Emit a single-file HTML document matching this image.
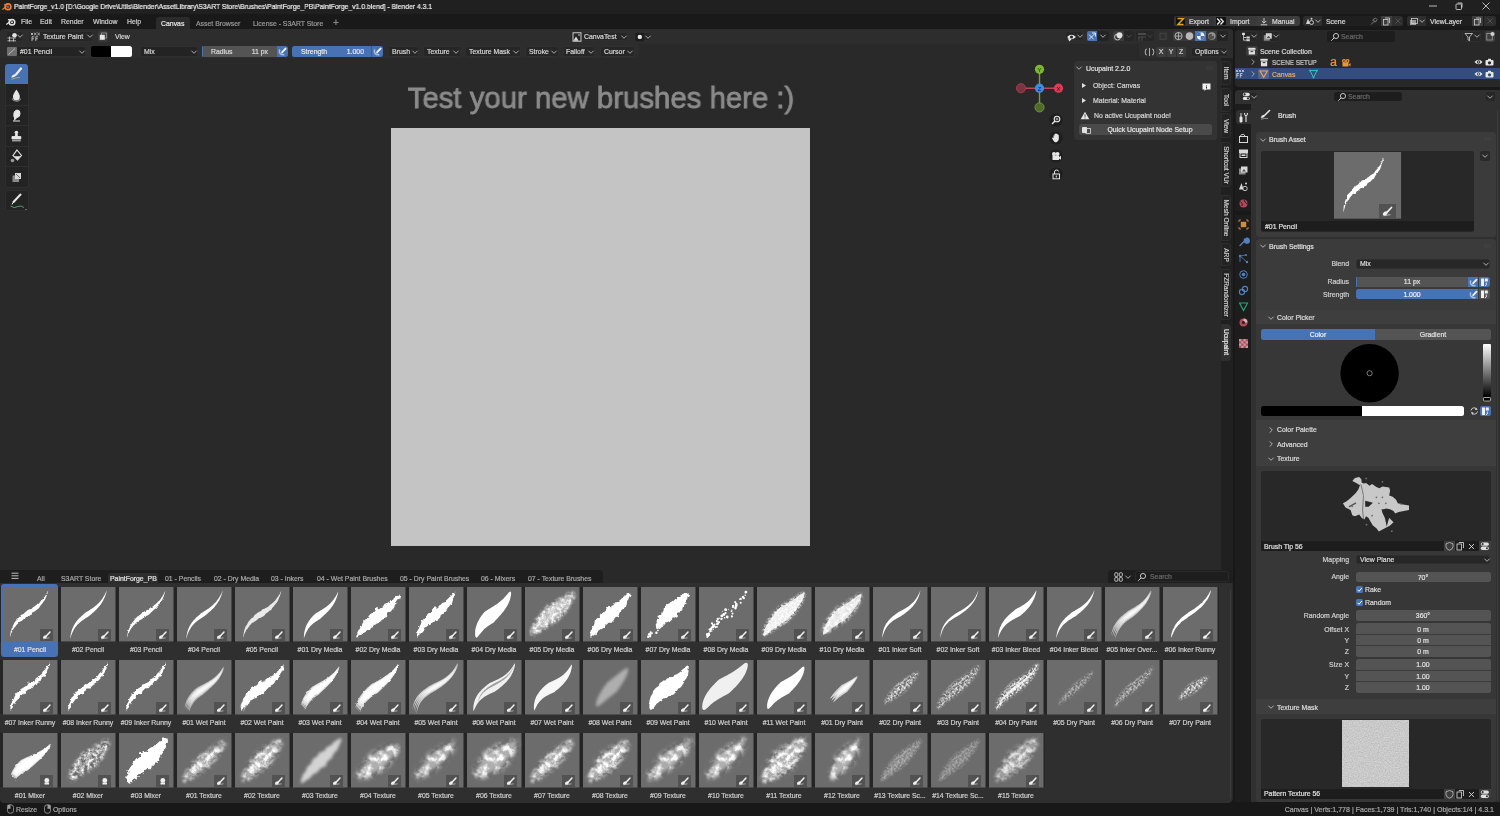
<!DOCTYPE html>
<html><head><meta charset="utf-8"><style>
html,body{margin:0;padding:0;width:1500px;height:816px;overflow:hidden;background:#181818;}
body{position:relative;font-family:"Liberation Sans", sans-serif;}
div,span{position:absolute;box-sizing:border-box;}
.t{white-space:nowrap;line-height:1.2;will-change:transform;-webkit-text-stroke:0.2px currentColor;}
</style></head><body>
<div style="left:0.00px;top:0.00px;width:1500.00px;height:13.50px;background:#202020;"></div><svg style="position:absolute;left:1.00px;top:0.30px;overflow:visible;" width="12" height="12" viewBox="0 0 12 12"><path d="M1.8,9.2 L5.2,6.6 M3.8,4.6 L6.6,4.6" stroke="#f5792a" stroke-width="1.3" stroke-linecap="round"/><circle cx="7" cy="6.8" r="2.9" fill="none" stroke="#f5792a" stroke-width="1.7"/><circle cx="7" cy="6.8" r="1.3" fill="#3d7ac6"/></svg><span class="t" style="left:14.00px;top:1.94px;font-size:7.6px;color:#f2f2f2;transform:scaleX(0.897);transform-origin:0 50%;">PaintForge_v1.0 [D:\Google Drive\Utils\Blender\AssetLibrary\S3ART Store\Brushes\PaintForge_PB\PaintForge_v1.0.blend] - Blender 4.3.1</span><svg style="position:absolute;left:1428.00px;top:2.00px;overflow:visible;" width="10" height="8" viewBox="0 0 10 8"><line x1="1" y1="4" x2="9" y2="4" stroke="#e0e0e0" stroke-width="0.8"/></svg><svg style="position:absolute;left:1454.00px;top:1.00px;overflow:visible;" width="10" height="10" viewBox="0 0 10 10"><rect x="2" y="3" width="5.5" height="5.5" fill="none" stroke="#e0e0e0" stroke-width="0.8" rx="0.8"/><path d="M3.5,2 h4.5 v4.5" fill="none" stroke="#e0e0e0" stroke-width="0.8"/></svg><svg style="position:absolute;left:1481.00px;top:1.00px;overflow:visible;" width="10" height="10" viewBox="0 0 10 10"><path d="M1.5,1.5 L8.5,8.5 M8.5,1.5 L1.5,8.5" stroke="#e0e0e0" stroke-width="0.8"/></svg><div style="left:0.00px;top:13.50px;width:1500.00px;height:15.50px;background:#191919;"></div><svg style="position:absolute;left:5.00px;top:15.50px;overflow:visible;" width="12" height="11" viewBox="0 0 12 11"><path d="M1.6,8.2 L5,5.8 M3.4,3.6 L6.4,3.8" stroke="#e6e6e6" stroke-width="1.2" stroke-linecap="round"/><circle cx="7" cy="6.2" r="2.8" fill="none" stroke="#e6e6e6" stroke-width="1.5"/><circle cx="7" cy="6.2" r="1" fill="#e6e6e6"/></svg><span class="t" style="left:20.50px;top:17.96px;font-size:6.9px;color:#cfcfcf;">File</span><span class="t" style="left:40.40px;top:17.96px;font-size:6.9px;color:#cfcfcf;">Edit</span><span class="t" style="left:61.40px;top:17.96px;font-size:6.9px;color:#cfcfcf;">Render</span><span class="t" style="left:92.60px;top:17.96px;font-size:6.9px;color:#cfcfcf;">Window</span><span class="t" style="left:126.70px;top:17.96px;font-size:6.9px;color:#cfcfcf;">Help</span><div style="left:156.00px;top:17.00px;width:34.00px;height:12.00px;background:#2b2b2b;border-radius:3px 3px 0 0;"></div><span class="t" style="left:161.00px;top:19.56px;font-size:6.9px;color:#e6e6e6;">Canvas</span><span class="t" style="left:196.40px;top:19.56px;font-size:6.9px;color:#9a9a9a;">Asset Browser</span><span class="t" style="left:252.60px;top:19.56px;font-size:6.9px;color:#9a9a9a;">License - S3ART Store</span><span class="t" style="left:332.50px;top:17.20px;font-size:10px;color:#8a8a8a;">+</span><div style="left:1174.00px;top:15.70px;width:125.50px;height:10.60px;background:#3a3a3a;border-radius:2.5px;"></div><div style="left:1174.00px;top:15.70px;width:40.40px;height:10.60px;background:#353535;border-radius:2.5px 0 0 2.5px;"></div><div style="left:1214.90px;top:15.70px;width:41.90px;height:10.60px;background:#3a3a3a;"></div><div style="left:1257.30px;top:15.70px;width:42.20px;height:10.60px;background:#3d3d3d;border-radius:0 2.5px 2.5px 0;"></div><div style="left:1176.30px;top:16.60px;width:9.10px;height:8.80px;background:#111111;"></div><svg style="position:absolute;left:1176.30px;top:16.60px;overflow:visible;" width="9" height="9" viewBox="0 0 9 9"><path d="M1.5,1.5 H7.5 L2,7.5 H7.5" fill="none" stroke="#f0a020" stroke-width="1.5"/></svg><span class="t" style="left:1188.80px;top:17.96px;font-size:6.9px;color:#d8d8d8;">Export</span><div style="left:1216.20px;top:16.60px;width:9.60px;height:8.80px;background:#111111;"></div><svg style="position:absolute;left:1216.20px;top:16.60px;overflow:visible;" width="9.6" height="9" viewBox="0 0 9.6 9"><path d="M1.2,1.5 L4,4.5 L1.2,7.5 M4.5,1.5 L7.3,4.5 L4.5,7.5" fill="none" stroke="#f0f0f0" stroke-width="1.3"/></svg><span class="t" style="left:1229.80px;top:17.96px;font-size:6.9px;color:#d8d8d8;">Import</span><svg style="position:absolute;left:1259.80px;top:16.80px;overflow:visible;" width="8" height="9" viewBox="0 0 8 9"><path d="M4,1 V6 M1.8,4 L4,6.2 L6.2,4 M0.8,7.8 H7.2" fill="none" stroke="#d8d8d8" stroke-width="0.9"/></svg><span class="t" style="left:1271.80px;top:17.96px;font-size:6.9px;color:#d8d8d8;">Manual</span><div style="left:1303.00px;top:15.70px;width:19.00px;height:10.60px;background:#2e2e2e;border-radius:2.5px 0 0 2.5px;"></div><svg style="position:absolute;left:1305.00px;top:16.50px;overflow:visible;" width="10" height="9" viewBox="0 0 10 9"><path d="M3,1.5 L1,7 H5 Z" fill="#cfcfcf"/><circle cx="6.5" cy="5.5" r="2" fill="none" stroke="#cfcfcf" stroke-width="0.9"/><circle cx="6.5" cy="1.8" r="1" fill="#cfcfcf"/></svg><svg style="position:absolute;left:1314.00px;top:17.20px;overflow:visible;" width="8" height="8" viewBox="0 0 8 8"><polyline points="1.4,2.7 4,5.3 6.6,2.7" fill="none" stroke="#cfcfcf" stroke-width="0.8"/></svg><div style="left:1322.00px;top:15.70px;width:59.00px;height:10.60px;background:#1f1f1f;"></div><span class="t" style="left:1325.50px;top:17.96px;font-size:6.9px;color:#d8d8d8;">Scene</span><svg style="position:absolute;left:1369.00px;top:16.50px;overflow:visible;" width="9" height="9" viewBox="0 0 9 9"><path d="M2,7.5 L4.5,5 M3.5,3 L6,5.5 M4,2.5 L6.5,1 L8,2.5 L6.5,5 Z" fill="none" stroke="#8a8a8a" stroke-width="0.8"/></svg><div style="left:1381.00px;top:15.70px;width:11.00px;height:10.60px;background:#3d3d3d;"></div><svg style="position:absolute;left:1382.00px;top:16.50px;overflow:visible;" width="9" height="9" viewBox="0 0 9 9"><rect x="1.5" y="2.5" width="4.5" height="5.5" fill="none" stroke="#d0d0d0" stroke-width="0.8"/><path d="M3,1 H7.5 V6" fill="none" stroke="#d0d0d0" stroke-width="0.8"/></svg><div style="left:1392.00px;top:15.70px;width:10.60px;height:10.60px;background:#2e2e2e;border-radius:0 2.5px 2.5px 0;"></div><svg style="position:absolute;left:1394.00px;top:17.00px;overflow:visible;" width="8" height="8" viewBox="0 0 8 8"><path d="M1.5,1.5 L6.5,6.5 M6.5,1.5 L1.5,6.5" stroke="#5a5a5a" stroke-width="0.8"/></svg><div style="left:1407.00px;top:15.70px;width:19.40px;height:10.60px;background:#2e2e2e;border-radius:2.5px 0 0 2.5px;"></div><svg style="position:absolute;left:1409.00px;top:16.50px;overflow:visible;" width="10" height="9" viewBox="0 0 10 9"><rect x="1" y="3" width="6" height="5" fill="#9a9a9a"/><rect x="2.5" y="1.5" width="6" height="5" fill="none" stroke="#cfcfcf" stroke-width="0.8"/></svg><svg style="position:absolute;left:1418.00px;top:17.20px;overflow:visible;" width="8" height="8" viewBox="0 0 8 8"><polyline points="1.4,2.7 4,5.3 6.6,2.7" fill="none" stroke="#cfcfcf" stroke-width="0.8"/></svg><div style="left:1426.40px;top:15.70px;width:45.40px;height:10.60px;background:#1f1f1f;"></div><span class="t" style="left:1429.80px;top:17.96px;font-size:6.9px;color:#d8d8d8;">ViewLayer</span><div style="left:1471.80px;top:15.70px;width:11.70px;height:10.60px;background:#3d3d3d;"></div><svg style="position:absolute;left:1473.00px;top:16.50px;overflow:visible;" width="9" height="9" viewBox="0 0 9 9"><rect x="1.5" y="2.5" width="4.5" height="5.5" fill="none" stroke="#d0d0d0" stroke-width="0.8"/><path d="M3,1 H7.5 V6" fill="none" stroke="#d0d0d0" stroke-width="0.8"/></svg><div style="left:1483.50px;top:15.70px;width:12.10px;height:10.60px;background:#2e2e2e;border-radius:0 2.5px 2.5px 0;"></div><svg style="position:absolute;left:1486.00px;top:17.00px;overflow:visible;" width="8" height="8" viewBox="0 0 8 8"><path d="M1.5,1.5 L6.5,6.5 M6.5,1.5 L1.5,6.5" stroke="#5a5a5a" stroke-width="0.8"/></svg><div style="left:0.00px;top:29.00px;width:1233.00px;height:773.00px;background:#292929;border-radius:4px;"></div><div style="left:0.00px;top:29.00px;width:1233.00px;height:15.00px;background:#2d2d2d;border-radius:4px 4px 0 0;"></div><div style="left:0.00px;top:44.00px;width:639.00px;height:14.00px;background:#2d2d2d;border-radius:0 0 4px 0;"></div><div style="left:1138.60px;top:44.00px;width:94.40px;height:14.00px;background:#2d2d2d;border-radius:0 0 0 4px;"></div><div style="left:5.80px;top:31.00px;width:17.50px;height:10.50px;background:#262626;border:0.6px solid #2f2f2f;border-radius:2.5px;"></div><svg style="position:absolute;left:7.00px;top:31.50px;overflow:visible;" width="12" height="10" viewBox="0 0 12 10"><circle cx="7.5" cy="3.2" r="2.3" fill="#e0e0e0"/><path d="M0.5,6 H9 M0.5,8.8 H9 M2.5,4.5 V9.5 M6.5,6 V9.5" stroke="#d0d0d0" stroke-width="0.8"/></svg><svg style="position:absolute;left:16.00px;top:32.30px;overflow:visible;" width="8" height="8" viewBox="0 0 8 8"><polyline points="1.4,2.7 4,5.3 6.6,2.7" fill="none" stroke="#cfcfcf" stroke-width="0.8"/></svg><div style="left:28.00px;top:31.00px;width:65.30px;height:10.50px;background:#262626;border:0.6px solid #2f2f2f;border-radius:2.5px;"></div><svg style="position:absolute;left:30.00px;top:31.50px;overflow:visible;" width="11" height="10" viewBox="0 0 11 10"><path d="M0.8,0.8 L3.2,3.2 M3.2,0.8 L0.8,3.2 M4.1,0.8 L6.5,3.2 M6.5,0.8 L4.1,3.2 M7.4,0.8 L9.8,3.2 M9.8,0.8 L7.4,3.2 M2,4.8 V9 M2,4.8 H4.4 M2,6.8 H4 M5.8,4.8 V9 M5.8,4.8 H8.2 M5.8,6.8 H7.8" fill="none" stroke="#d8d8d8" stroke-width="0.8"/></svg><span class="t" style="left:42.50px;top:32.96px;font-size:6.9px;color:#d6d6d6;">Texture Paint</span><svg style="position:absolute;left:85.50px;top:32.30px;overflow:visible;" width="8" height="8" viewBox="0 0 8 8"><polyline points="1.4,2.7 4,5.3 6.6,2.7" fill="none" stroke="#cfcfcf" stroke-width="0.8"/></svg><div style="left:97.50px;top:31.00px;width:10.20px;height:10.50px;background:#3a3a3a;border-radius:2px;"></div><svg style="position:absolute;left:97.50px;top:31.00px;overflow:visible;" width="10.2" height="10.5" viewBox="0 0 10.2 10.5"><rect x="3.5" y="2" width="5" height="5" fill="none" stroke="#9a9a9a" stroke-width="0.8"/><rect x="1.8" y="3.8" width="5" height="5" fill="#e6e6e6"/></svg><span class="t" style="left:115.40px;top:32.96px;font-size:6.9px;color:#d6d6d6;">View</span><div style="left:570.00px;top:31.80px;width:58.20px;height:9.60px;background:#262626;border:0.6px solid #2f2f2f;border-radius:2.5px;"></div><svg style="position:absolute;left:571.50px;top:32.00px;overflow:visible;" width="11" height="10" viewBox="0 0 11 10"><rect x="1" y="0.8" width="8" height="8.4" fill="none" stroke="#e0e0e0" stroke-width="0.9"/><path d="M1.5,8.8 L4,4.5 L6.5,8.8 Z" fill="#e0e0e0"/><circle cx="7" cy="3" r="0.8" fill="#e0e0e0"/></svg><span class="t" style="left:584.40px;top:33.16px;font-size:6.9px;color:#d6d6d6;">CanvaTest</span><svg style="position:absolute;left:620.30px;top:32.60px;overflow:visible;" width="8" height="8" viewBox="0 0 8 8"><polyline points="1.4,2.7 4,5.3 6.6,2.7" fill="none" stroke="#cfcfcf" stroke-width="0.8"/></svg><div style="left:634.00px;top:31.80px;width:17.40px;height:9.60px;background:#262626;border:0.6px solid #2f2f2f;border-radius:2.5px;"></div><svg style="position:absolute;left:634.50px;top:32.00px;overflow:visible;" width="10" height="10" viewBox="0 0 10 10"><rect x="0.8" y="0.8" width="8" height="8.4" fill="#1c1c1c" rx="1"/><circle cx="4.8" cy="4.9" r="2.2" fill="#e8e8e8"/></svg><svg style="position:absolute;left:644.00px;top:32.60px;overflow:visible;" width="8" height="8" viewBox="0 0 8 8"><polyline points="1.4,2.7 4,5.3 6.6,2.7" fill="none" stroke="#cfcfcf" stroke-width="0.8"/></svg><div style="left:1065.00px;top:31.30px;width:18.00px;height:10.20px;background:#262626;border:0.6px solid #2f2f2f;border-radius:2.5px;"></div><svg style="position:absolute;left:1066.00px;top:31.50px;overflow:visible;" width="11" height="10" viewBox="0 0 11 10"><path d="M1,5 Q5.5,0.5 10,5 Q5.5,9.5 1,5 Z" fill="#e6e6e6"/><circle cx="5.5" cy="5" r="1.6" fill="#262626"/><path d="M1.5,6 L3.5,9.5 L5.5,7 Z" fill="#e6e6e6"/></svg><svg style="position:absolute;left:1075.50px;top:32.30px;overflow:visible;" width="8" height="8" viewBox="0 0 8 8"><polyline points="1.4,2.7 4,5.3 6.6,2.7" fill="none" stroke="#cfcfcf" stroke-width="0.8"/></svg><div style="left:1086.70px;top:31.30px;width:10.80px;height:10.20px;background:#4772b3;border-radius:2px 0 0 2px;"></div><svg style="position:absolute;left:1086.70px;top:31.30px;overflow:visible;" width="10.8" height="10.2" viewBox="0 0 10.8 10.2"><path d="M2,8.5 L8.5,2 M5,2 H8.5 V5.5 M2,3.5 Q4,6 6.5,8" fill="none" stroke="#f0f0f0" stroke-width="0.9"/></svg><div style="left:1097.50px;top:31.30px;width:11.40px;height:10.20px;background:#232323;border-radius:0 2px 2px 0;"></div><svg style="position:absolute;left:1099.00px;top:32.30px;overflow:visible;" width="8" height="8" viewBox="0 0 8 8"><polyline points="1.4,2.7 4,5.3 6.6,2.7" fill="none" stroke="#cfcfcf" stroke-width="0.8"/></svg><div style="left:1113.00px;top:31.30px;width:11.00px;height:10.20px;background:#3a3a3a;border-radius:2px 0 0 2px;"></div><svg style="position:absolute;left:1113.00px;top:31.30px;overflow:visible;" width="11" height="10.2" viewBox="0 0 11 10.2"><circle cx="4.5" cy="6" r="3" fill="none" stroke="#d0d0d0" stroke-width="0.9"/><circle cx="6.5" cy="4.2" r="3" fill="#e0e0e0"/></svg><div style="left:1124.00px;top:31.30px;width:10.00px;height:10.20px;background:#262626;border-radius:0 2px 2px 0;"></div><svg style="position:absolute;left:1125.00px;top:32.30px;overflow:visible;" width="8" height="8" viewBox="0 0 8 8"><polyline points="1.4,2.7 4,5.3 6.6,2.7" fill="none" stroke="#5a5a5a" stroke-width="0.8"/></svg><div style="left:1136.00px;top:31.30px;width:18.00px;height:10.20px;background:#262626;border-radius:2px;"></div><svg style="position:absolute;left:1137.00px;top:31.50px;overflow:visible;" width="11" height="10" viewBox="0 0 11 10"><path d="M1,1 L3,3 L5,1 L7,3 L9,1 M1,3 L3,1 L5,3 L7,1 L9,3 M1,5 H9 M2,5 V9 M5,5 V9" fill="none" stroke="#5a5a5a" stroke-width="0.7"/></svg><svg style="position:absolute;left:1146.00px;top:32.30px;overflow:visible;" width="8" height="8" viewBox="0 0 8 8"><polyline points="1.4,2.7 4,5.3 6.6,2.7" fill="none" stroke="#4a4a4a" stroke-width="0.8"/></svg><div style="left:1158.00px;top:31.30px;width:10.00px;height:10.20px;background:#2f2f2f;border-radius:2px;"></div><svg style="position:absolute;left:1158.00px;top:31.30px;overflow:visible;" width="10" height="10.2" viewBox="0 0 10 10.2"><rect x="2" y="2.2" width="6" height="6" fill="none" stroke="#4a4a4a" stroke-width="0.8"/></svg><div style="left:1172.80px;top:31.30px;width:44.20px;height:10.20px;background:#3a3a3a;border-radius:2px 0 0 2px;"></div><div style="left:1195.00px;top:31.30px;width:11.00px;height:10.20px;background:#4772b3;"></div><svg style="position:absolute;left:1172.80px;top:31.30px;overflow:visible;" width="44.2" height="10.2" viewBox="0 0 44.2 10.2"><circle cx="5.5" cy="5.1" r="3.6" fill="none" stroke="#d0d0d0" stroke-width="0.8"/><path d="M1.9,5.1 H9.1 M5.5,1.5 V8.7" stroke="#d0d0d0" stroke-width="0.7"/><circle cx="16.5" cy="5.1" r="3.8" fill="#b8b8b8"/><circle cx="27.7" cy="5.1" r="3.8" fill="#f0f0f0"/><path d="M27.7,5.1 V1.3 A3.8,3.8 0 0 0 23.9,5.1 Z" fill="#4772b3"/><path d="M27.7,5.1 H31.5 A3.8,3.8 0 0 1 27.7,8.9 Z" fill="#4772b3"/><circle cx="38.8" cy="5.1" r="3.8" fill="#9a9a9a"/><circle cx="38.3" cy="5.6" r="2.9" fill="#505050"/><circle cx="39.8" cy="3.9" r="1.2" fill="#8a8a8a"/></svg><div style="left:1217.00px;top:31.30px;width:10.80px;height:10.20px;background:#232323;border-radius:0 2px 2px 0;"></div><svg style="position:absolute;left:1218.50px;top:32.30px;overflow:visible;" width="8" height="8" viewBox="0 0 8 8"><polyline points="1.4,2.7 4,5.3 6.6,2.7" fill="none" stroke="#cfcfcf" stroke-width="0.8"/></svg><div style="left:6.50px;top:46.00px;width:79.80px;height:10.60px;background:#232323;border:0.6px solid #2f2f2f;border-radius:2.5px;"></div><div style="left:7.30px;top:47.00px;width:9.50px;height:8.80px;background:#6e6e6e;border-radius:1px;"></div><svg style="position:absolute;left:7.30px;top:47.00px;overflow:visible;" width="9.5" height="8.8" viewBox="0 0 9.5 8.8"><path d="M1.5,7.5 L8,1.5" stroke="#cfcfcf" stroke-width="0.8"/></svg><span class="t" style="left:19.70px;top:48.06px;font-size:6.9px;color:#d6d6d6;">#01 Pencil</span><svg style="position:absolute;left:78.30px;top:47.50px;overflow:visible;" width="8" height="8" viewBox="0 0 8 8"><polyline points="1.4,2.7 4,5.3 6.6,2.7" fill="none" stroke="#cfcfcf" stroke-width="0.8"/></svg><div style="left:90.50px;top:46.00px;width:20.30px;height:10.60px;background:#000000;border-radius:2.5px 0 0 2.5px;"></div><div style="left:110.80px;top:46.00px;width:21.60px;height:10.60px;background:#ffffff;border-radius:0 2.5px 2.5px 0;"></div><div style="left:140.00px;top:46.00px;width:58.00px;height:10.60px;background:#232323;border:0.6px solid #2f2f2f;border-radius:2.5px;"></div><span class="t" style="left:143.80px;top:48.06px;font-size:6.9px;color:#d6d6d6;">Mix</span><svg style="position:absolute;left:190.00px;top:47.50px;overflow:visible;" width="8" height="8" viewBox="0 0 8 8"><polyline points="1.4,2.7 4,5.3 6.6,2.7" fill="none" stroke="#cfcfcf" stroke-width="0.8"/></svg><div style="left:202.00px;top:46.00px;width:75.00px;height:10.60px;background:#545454;border-radius:2.5px 0 0 2.5px;"></div><div style="left:202.00px;top:46.00px;width:1.20px;height:10.60px;background:#4772b3;border-radius:2.5px 0 0 2.5px;"></div><span class="t" style="left:210.80px;top:48.06px;font-size:6.9px;color:#dcdcdc;">Radius</span><span class="t" style="left:-332.00px;width:600px;text-align:right;top:48.06px;font-size:6.9px;color:#dcdcdc;">11 px</span><div style="left:277.00px;top:46.00px;width:11.00px;height:10.60px;background:#4772b3;border-radius:0 2.5px 2.5px 0;"></div><svg style="position:absolute;left:277.00px;top:46.00px;overflow:visible;" width="11" height="10.6" viewBox="0 0 11 10.6"><path d="M2.6,3.4 Q1.2,9 7.4,8.8" fill="none" stroke="#a9c0e2" stroke-width="1.6"/><path d="M5.2,6.2 L8.6,2.6" stroke="#f4f4f4" stroke-width="1.9" stroke-linecap="round"/><path d="M4.2,7.4 L5.6,5.8 L6,6.8 Z" fill="#f4f4f4"/></svg><div style="left:292.00px;top:46.00px;width:79.00px;height:10.60px;background:#4772b3;border-radius:2.5px 0 0 2.5px;"></div><span class="t" style="left:300.80px;top:48.06px;font-size:6.9px;color:#e8e8e8;">Strength</span><span class="t" style="left:-236.50px;width:600px;text-align:right;top:48.06px;font-size:6.9px;color:#e8e8e8;">1.000</span><div style="left:371.50px;top:46.00px;width:11.50px;height:10.60px;background:#4772b3;border-radius:0 2.5px 2.5px 0;"></div><div style="left:371.00px;top:46.00px;width:0.50px;height:10.60px;background:#3a5a90;"></div><svg style="position:absolute;left:371.50px;top:46.00px;overflow:visible;" width="11" height="10.6" viewBox="0 0 11 10.6"><path d="M2.6,3.4 Q1.2,9 7.4,8.8" fill="none" stroke="#a9c0e2" stroke-width="1.6"/><path d="M5.2,6.2 L8.6,2.6" stroke="#f4f4f4" stroke-width="1.9" stroke-linecap="round"/><path d="M4.2,7.4 L5.6,5.8 L6,6.8 Z" fill="#f4f4f4"/></svg><div style="left:387.80px;top:46.30px;width:31.50px;height:10.60px;background:#262626;border:0.6px solid #303030;border-radius:2.5px;"></div><span class="t" style="left:391.70px;top:48.26px;font-size:6.9px;color:#d6d6d6;">Brush</span><svg style="position:absolute;left:410.80px;top:47.80px;overflow:visible;" width="8" height="8" viewBox="0 0 8 8"><polyline points="1.4,2.7 4,5.3 6.6,2.7" fill="none" stroke="#cfcfcf" stroke-width="0.8"/></svg><div style="left:423.20px;top:46.30px;width:37.70px;height:10.60px;background:#262626;border:0.6px solid #303030;border-radius:2.5px;"></div><span class="t" style="left:427.10px;top:48.26px;font-size:6.9px;color:#d6d6d6;">Texture</span><svg style="position:absolute;left:452.40px;top:47.80px;overflow:visible;" width="8" height="8" viewBox="0 0 8 8"><polyline points="1.4,2.7 4,5.3 6.6,2.7" fill="none" stroke="#cfcfcf" stroke-width="0.8"/></svg><div style="left:464.80px;top:46.30px;width:56.10px;height:10.60px;background:#262626;border:0.6px solid #303030;border-radius:2.5px;"></div><span class="t" style="left:468.70px;top:48.26px;font-size:6.9px;color:#d6d6d6;">Texture Mask</span><svg style="position:absolute;left:512.40px;top:47.80px;overflow:visible;" width="8" height="8" viewBox="0 0 8 8"><polyline points="1.4,2.7 4,5.3 6.6,2.7" fill="none" stroke="#cfcfcf" stroke-width="0.8"/></svg><div style="left:524.70px;top:46.30px;width:33.90px;height:10.60px;background:#262626;border:0.6px solid #303030;border-radius:2.5px;"></div><span class="t" style="left:528.60px;top:48.26px;font-size:6.9px;color:#d6d6d6;">Stroke</span><svg style="position:absolute;left:550.10px;top:47.80px;overflow:visible;" width="8" height="8" viewBox="0 0 8 8"><polyline points="1.4,2.7 4,5.3 6.6,2.7" fill="none" stroke="#cfcfcf" stroke-width="0.8"/></svg><div style="left:562.50px;top:46.30px;width:32.80px;height:10.60px;background:#262626;border:0.6px solid #303030;border-radius:2.5px;"></div><span class="t" style="left:566.40px;top:48.26px;font-size:6.9px;color:#d6d6d6;">Falloff</span><svg style="position:absolute;left:586.80px;top:47.80px;overflow:visible;" width="8" height="8" viewBox="0 0 8 8"><polyline points="1.4,2.7 4,5.3 6.6,2.7" fill="none" stroke="#cfcfcf" stroke-width="0.8"/></svg><div style="left:599.60px;top:46.30px;width:35.00px;height:10.60px;background:#262626;border:0.6px solid #303030;border-radius:2.5px;"></div><span class="t" style="left:603.50px;top:48.26px;font-size:6.9px;color:#d6d6d6;">Cursor</span><svg style="position:absolute;left:626.10px;top:47.80px;overflow:visible;" width="8" height="8" viewBox="0 0 8 8"><polyline points="1.4,2.7 4,5.3 6.6,2.7" fill="none" stroke="#cfcfcf" stroke-width="0.8"/></svg><svg style="position:absolute;left:1144.00px;top:46.50px;overflow:visible;" width="11" height="10" viewBox="0 0 11 10"><path d="M5.5,1 V9 M3,2 Q1,2 1.5,4 Q0.5,5 1.5,6 Q1,8 3,8 M8,2 Q10,2 9.5,4 Q10.5,5 9.5,6 Q10,8 8,8" fill="none" stroke="#cfcfcf" stroke-width="0.8"/></svg><div style="left:1156.00px;top:46.50px;width:30.00px;height:10.10px;background:#3d3d3d;border-radius:2.5px;"></div><div style="left:1165.80px;top:46.50px;width:0.50px;height:10.10px;background:#2e2e2e;"></div><div style="left:1175.80px;top:46.50px;width:0.50px;height:10.10px;background:#2e2e2e;"></div><span class="t" style="left:661.00px;width:1000px;text-align:center;top:48.36px;font-size:6.9px;color:#d6d6d6;">X</span><span class="t" style="left:671.00px;width:1000px;text-align:center;top:48.36px;font-size:6.9px;color:#d6d6d6;">Y</span><span class="t" style="left:681.00px;width:1000px;text-align:center;top:48.36px;font-size:6.9px;color:#d6d6d6;">Z</span><div style="left:1190.50px;top:46.50px;width:37.30px;height:10.10px;background:#262626;border:0.6px solid #303030;border-radius:2.5px;"></div><span class="t" style="left:1195.00px;top:48.36px;font-size:6.9px;color:#d6d6d6;">Options</span><svg style="position:absolute;left:1219.50px;top:47.80px;overflow:visible;" width="8" height="8" viewBox="0 0 8 8"><polyline points="1.4,2.7 4,5.3 6.6,2.7" fill="none" stroke="#cfcfcf" stroke-width="0.8"/></svg><span class="t" style="left:100.50px;width:1000px;text-align:center;top:80.22px;font-size:29.8px;color:#8b8b8b;transform:scaleX(0.985);-webkit-text-stroke:0.8px #8b8b8b;">Test your new brushes here :)</span><div style="left:391.00px;top:128.00px;width:419.00px;height:418.00px;background:#c4c4c4;"></div><div style="left:4.50px;top:63.50px;width:24.00px;height:124.50px;background:#232323;border:0.6px solid #2e2e2e;border-radius:3px;"></div><div style="left:5.10px;top:64.20px;width:22.80px;height:19.80px;background:#4772b3;border-radius:3px 3px 0 0;"></div><div style="left:5.50px;top:104.50px;width:22.00px;height:0.60px;background:#2e2e2e;"></div><div style="left:5.50px;top:125.00px;width:22.00px;height:0.60px;background:#2e2e2e;"></div><div style="left:5.50px;top:145.50px;width:22.00px;height:0.60px;background:#2e2e2e;"></div><div style="left:5.50px;top:166.00px;width:22.00px;height:0.60px;background:#2e2e2e;"></div><div style="left:5.50px;top:186.50px;width:22.00px;height:0.60px;background:#2e2e2e;"></div><svg style="position:absolute;left:5.10px;top:64.20px;overflow:visible;" width="22.8" height="19.8" viewBox="0 0 22.8 19.8"><path d="M16,4.5 L11,10.5" stroke="#f0f0f0" stroke-width="2.2" stroke-linecap="round"/><path d="M6,13.5 Q8,9.5 11,10.5 Q11.5,13 6,13.5 Z" fill="#f0f0f0"/><path d="M6.5,15.3 Q11,13.5 15,13.5" fill="none" stroke="#b9a37a" stroke-width="0.9"/></svg><svg style="position:absolute;left:5.10px;top:84.70px;overflow:visible;" width="22.8" height="20.5" viewBox="0 0 22.8 20.5"><path d="M11.4,4.5 Q7.5,10 8,12 A3.4,3.4 0 0 0 14.8,12 Q15.3,10 11.4,4.5 Z" fill="#e6e6e6"/><path d="M7,13.5 Q9,17 13,16 Q15.5,15 15.5,13.5" fill="none" stroke="#8a8a8a" stroke-width="1.1"/></svg><svg style="position:absolute;left:5.10px;top:105.20px;overflow:visible;" width="22.8" height="20.5" viewBox="0 0 22.8 20.5"><path d="M9,12 Q8,6 12,5 Q15.5,5 15,9 Q15,12 12,12.5 L9,15.5 M8,16 H15" fill="#e6e6e6" stroke="#e6e6e6" stroke-width="1"/></svg><svg style="position:absolute;left:5.10px;top:125.70px;overflow:visible;" width="22.8" height="20.5" viewBox="0 0 22.8 20.5"><circle cx="11.4" cy="6.5" r="1.8" fill="#e6e6e6"/><path d="M10.5,8 V10.5 H12.3 V8 M7,10.5 H15.8 V13 H7 Z M7,14.8 H15.8" fill="#e6e6e6" stroke="#e6e6e6" stroke-width="0.9"/></svg><svg style="position:absolute;left:5.10px;top:146.20px;overflow:visible;" width="22.8" height="20.5" viewBox="0 0 22.8 20.5"><path d="M12,4 L16.5,9.5 L12.5,14 L8,9.5 Z" fill="none" stroke="#e6e6e6" stroke-width="1.1"/><path d="M9,10.2 L16,10.2 L12.5,13.5 Z" fill="#e6e6e6"/><circle cx="7.5" cy="14.5" r="1.8" fill="#9a9a9a"/></svg><svg style="position:absolute;left:5.10px;top:166.70px;overflow:visible;" width="22.8" height="20.5" viewBox="0 0 22.8 20.5"><rect x="7.5" y="8.5" width="6.5" height="6.5" fill="#8a8a8a"/><rect x="10" y="6" width="6" height="6" fill="#d8d8d8"/><path d="M11,7 L15,11" stroke="#555" stroke-width="0.8"/></svg><div style="left:4.50px;top:189.50px;width:24.00px;height:21.50px;background:#232323;border:0.6px solid #2e2e2e;border-radius:3px;"></div><svg style="position:absolute;left:4.50px;top:189.50px;overflow:visible;" width="24" height="21.5" viewBox="0 0 24 21.5"><path d="M15.5,4.5 L8.5,12" stroke="#e6e6e6" stroke-width="2" stroke-linecap="round"/><path d="M8,12.5 L7,14.5" stroke="#e6e6e6" stroke-width="1"/><path d="M5.5,16 Q9,19 13,16.5 Q16,15 19,17.5" fill="none" stroke="#5aa77a" stroke-width="0.9"/><path d="M20.5,19 L21.5,20" stroke="#ccc" stroke-width="0.8"/></svg><svg style="position:absolute;left:1015.00px;top:61.00px;overflow:visible;" width="50" height="52" viewBox="0 0 50 52"><line x1="24.5" y1="8.3" x2="24.5" y2="46.4" stroke="#7aa03c" stroke-width="1.4"/><line x1="6" y1="27.2" x2="43.5" y2="27.2" stroke="#c24257" stroke-width="1.4"/><circle cx="6" cy="27.2" r="4.6" fill="#7a3440" stroke="#b13c50" stroke-width="0.8"/><circle cx="24.5" cy="46.4" r="4.6" fill="#4e6a2c" stroke="#7aa03c" stroke-width="0.8"/><circle cx="43.5" cy="27.2" r="4.6" fill="#e03a55"/><circle cx="24.5" cy="8.3" r="4.6" fill="#7cb82b"/><circle cx="24.5" cy="27.2" r="4.6" fill="#3a8ee8"/><text x="24.5" y="10.6" font-size="6" fill="#1a1a1a" text-anchor="middle" font-family="Liberation Sans">Y</text><text x="43.5" y="29.5" font-size="6" fill="#1a1a1a" text-anchor="middle" font-family="Liberation Sans">X</text><text x="24.5" y="29.5" font-size="6" fill="#1a1a1a" text-anchor="middle" font-family="Liberation Sans">Z</text></svg><svg style="position:absolute;left:1049.00px;top:112.90px;overflow:visible;" width="14" height="14" viewBox="0 0 14 14"><circle cx="7" cy="7" r="6.6" fill="#1e1e1e"/></svg><svg style="position:absolute;left:1049.00px;top:130.90px;overflow:visible;" width="14" height="14" viewBox="0 0 14 14"><circle cx="7" cy="7" r="6.6" fill="#1e1e1e"/></svg><svg style="position:absolute;left:1049.00px;top:148.70px;overflow:visible;" width="14" height="14" viewBox="0 0 14 14"><circle cx="7" cy="7" r="6.6" fill="#1e1e1e"/></svg><svg style="position:absolute;left:1049.00px;top:166.50px;overflow:visible;" width="14" height="14" viewBox="0 0 14 14"><circle cx="7" cy="7" r="6.6" fill="#1e1e1e"/></svg><svg style="position:absolute;left:1049.00px;top:112.90px;overflow:visible;" width="14" height="14" viewBox="0 0 14 14"><circle cx="8" cy="6" r="2.8" fill="none" stroke="#e6e6e6" stroke-width="1.1"/><path d="M6,8 L3,11" stroke="#e6e6e6" stroke-width="1.5"/><path d="M8,4.6 V7.4 M6.6,6 H9.4" stroke="#e6e6e6" stroke-width="0.7"/></svg><svg style="position:absolute;left:1049.00px;top:130.90px;overflow:visible;" width="14" height="14" viewBox="0 0 14 14"><path d="M4.5,8 V5 Q4.5,4 5.5,4.5 V3 Q6.5,2 7,3 Q8,2 8.5,3.5 Q9.5,3 9.8,4.5 V8 Q9.5,11 7,11.5 Q5,11 4,9 L3,7 Q3.5,6 4.5,7" fill="#e6e6e6"/></svg><svg style="position:absolute;left:1049.00px;top:148.70px;overflow:visible;" width="14" height="14" viewBox="0 0 14 14"><circle cx="5" cy="5" r="2" fill="#e6e6e6"/><circle cx="8.5" cy="5" r="2" fill="#e6e6e6"/><rect x="3.5" y="6.5" width="6.5" height="4.5" fill="#e6e6e6"/><path d="M10,8 L12,6.8 V10.8 L10,9.6 Z" fill="#e6e6e6"/></svg><svg style="position:absolute;left:1049.00px;top:166.50px;overflow:visible;" width="14" height="14" viewBox="0 0 14 14"><rect x="4" y="7" width="6.5" height="4.8" fill="none" stroke="#e6e6e6" stroke-width="1"/><path d="M5.5,7 V5 Q5.5,3 7.5,3 Q9.5,3 9.5,4.5" fill="none" stroke="#e6e6e6" stroke-width="1"/><rect x="6.8" y="8.5" width="1" height="2" fill="#e6e6e6"/></svg><div style="left:1074.40px;top:60.70px;width:142.60px;height:79.30px;background:#333333;border-radius:3.5px;"></div><svg style="position:absolute;left:1075.30px;top:64.00px;overflow:visible;" width="8" height="8" viewBox="0 0 8 8"><polyline points="1.4,2.7 4,5.3 6.6,2.7" fill="none" stroke="#cfcfcf" stroke-width="0.8"/></svg><span class="t" style="left:1086.40px;top:64.76px;font-size:6.9px;color:#e0e0e0;">Ucupaint 2.2.0</span><svg style="position:absolute;left:1206.00px;top:65.50px;overflow:visible;" width="8" height="4" viewBox="0 0 8 4"><path d="M0,1 H7 M0,3 H7" stroke="#4a4a4a" stroke-width="0.6"/></svg><svg style="position:absolute;left:1081.00px;top:82.00px;overflow:visible;" width="6" height="7" viewBox="0 0 6 7"><path d="M1,1 L5,3.5 L1,6 Z" fill="#e0e0e0"/></svg><span class="t" style="left:1092.80px;top:82.26px;font-size:6.9px;color:#d6d6d6;">Object: Canvas</span><svg style="position:absolute;left:1201.00px;top:81.50px;overflow:visible;" width="11" height="10" viewBox="0 0 11 10"><path d="M1.5,1.5 H9.5 V7.5 H5 L3.5,9 V7.5 H1.5 Z" fill="#f0f0f0"/><path d="M5.5,3 V3.6 M5.5,4.5 V6.5" stroke="#222" stroke-width="1"/></svg><svg style="position:absolute;left:1081.00px;top:97.00px;overflow:visible;" width="6" height="7" viewBox="0 0 6 7"><path d="M1,1 L5,3.5 L1,6 Z" fill="#e0e0e0"/></svg><span class="t" style="left:1092.80px;top:96.96px;font-size:6.9px;color:#d6d6d6;">Material: Material</span><svg style="position:absolute;left:1079.50px;top:110.50px;overflow:visible;" width="10" height="9" viewBox="0 0 10 9"><path d="M5,0.8 L9.3,8.3 H0.7 Z" fill="#e6e6e6"/><path d="M5,3.3 V5.8 M5,6.6 V7.4" stroke="#333" stroke-width="0.9"/></svg><span class="t" style="left:1093.70px;top:111.76px;font-size:6.9px;color:#d6d6d6;">No active Ucupaint node!</span><div style="left:1079.00px;top:124.40px;width:132.80px;height:10.60px;background:#4a4a4a;border-radius:2.5px;"></div><svg style="position:absolute;left:1080.50px;top:125.00px;overflow:visible;" width="11" height="10" viewBox="0 0 11 10"><rect x="1" y="2" width="5" height="6" fill="#e0e0e0" rx="0.8"/><rect x="5" y="3.5" width="4.5" height="5" fill="none" stroke="#e0e0e0" stroke-width="0.8"/></svg><span class="t" style="left:649.80px;width:1000px;text-align:center;top:126.46px;font-size:6.9px;color:#e6e6e6;">Quick Ucupaint Node Setup</span><div style="left:1220.50px;top:58.00px;width:12.00px;height:511.50px;background:#202020;"></div><div style="left:1221.30px;top:61.00px;width:10.20px;height:24.00px;background:#232323;border-radius:0 3px 3px 0;border:0.6px solid #2e2e2e;"></div><span class="t" style="left:1175.80px;top:69.00px;width:100px;height:8px;text-align:center;font-size:6.6px;line-height:8px;color:#d2d2d2;transform:rotate(90deg);">Item</span><div style="left:1221.30px;top:88.00px;width:10.20px;height:24.00px;background:#232323;border-radius:0 3px 3px 0;border:0.6px solid #2e2e2e;"></div><span class="t" style="left:1175.80px;top:96.00px;width:100px;height:8px;text-align:center;font-size:6.6px;line-height:8px;color:#d2d2d2;transform:rotate(90deg);">Tool</span><div style="left:1221.30px;top:113.00px;width:10.20px;height:25.00px;background:#232323;border-radius:0 3px 3px 0;border:0.6px solid #2e2e2e;"></div><span class="t" style="left:1175.80px;top:121.50px;width:100px;height:8px;text-align:center;font-size:6.6px;line-height:8px;color:#d2d2d2;transform:rotate(90deg);">View</span><div style="left:1221.30px;top:142.00px;width:10.20px;height:45.00px;background:#232323;border-radius:0 3px 3px 0;border:0.6px solid #2e2e2e;"></div><span class="t" style="left:1175.80px;top:160.50px;width:100px;height:8px;text-align:center;font-size:6.6px;line-height:8px;color:#d2d2d2;transform:rotate(90deg);">Shortcut VUr</span><div style="left:1221.30px;top:194.80px;width:10.20px;height:45.80px;background:#232323;border-radius:0 3px 3px 0;border:0.6px solid #2e2e2e;"></div><span class="t" style="left:1175.80px;top:213.70px;width:100px;height:8px;text-align:center;font-size:6.6px;line-height:8px;color:#d2d2d2;transform:rotate(90deg);">Mesh Online</span><div style="left:1221.30px;top:243.00px;width:10.20px;height:23.00px;background:#232323;border-radius:0 3px 3px 0;border:0.6px solid #2e2e2e;"></div><span class="t" style="left:1175.80px;top:250.50px;width:100px;height:8px;text-align:center;font-size:6.6px;line-height:8px;color:#d2d2d2;transform:rotate(90deg);">ARP</span><div style="left:1221.30px;top:269.00px;width:10.20px;height:51.00px;background:#232323;border-radius:0 3px 3px 0;border:0.6px solid #2e2e2e;"></div><span class="t" style="left:1175.80px;top:290.50px;width:100px;height:8px;text-align:center;font-size:6.6px;line-height:8px;color:#d2d2d2;transform:rotate(90deg);">FZRandomizer</span><div style="left:1221.30px;top:324.00px;width:10.20px;height:36.60px;background:#303030;border-radius:0 3px 3px 0;border:0.6px solid #2e2e2e;"></div><span class="t" style="left:1175.80px;top:338.30px;width:100px;height:8px;text-align:center;font-size:6.6px;line-height:8px;color:#ececec;transform:rotate(90deg);">Ucupaint</span><div style="left:0.00px;top:583.00px;width:1232.00px;height:220.00px;background:#2f2f2f;border-radius:0 0 4px 4px;"></div><div style="left:0.00px;top:570.00px;width:603.00px;height:13.00px;background:#1e1e1e;border-radius:0 4px 0 0;"></div><svg style="position:absolute;left:10.50px;top:572.00px;overflow:visible;" width="9" height="8" viewBox="0 0 9 8"><path d="M0.5,1.2 H7.5 M0.5,3.8 H7.5 M0.5,6.4 H7.5" stroke="#cfcfcf" stroke-width="0.9"/></svg><div style="left:107.50px;top:572.50px;width:50.20px;height:11.50px;background:#2d2d2d;border-radius:2.5px 2.5px 0 0;"></div><span class="t" style="left:36.70px;top:575.16px;font-size:6.9px;color:#a9a9a9;">All</span><span class="t" style="left:61.00px;top:575.16px;font-size:6.9px;color:#a9a9a9;">S3ART Store</span><span class="t" style="left:110.30px;top:575.16px;font-size:6.9px;color:#e6e6e6;">PaintForge_PB</span><span class="t" style="left:165.20px;top:575.16px;font-size:6.9px;color:#a9a9a9;">01 - Pencils</span><span class="t" style="left:213.80px;top:575.16px;font-size:6.9px;color:#a9a9a9;">02 - Dry Media</span><span class="t" style="left:271.20px;top:575.16px;font-size:6.9px;color:#a9a9a9;">03 - Inkers</span><span class="t" style="left:317.20px;top:575.16px;font-size:6.9px;color:#a9a9a9;">04 - Wet Paint Brushes</span><span class="t" style="left:399.90px;top:575.16px;font-size:6.9px;color:#a9a9a9;">05 - Dry Paint Brushes</span><span class="t" style="left:480.80px;top:575.16px;font-size:6.9px;color:#a9a9a9;">06 - Mixers</span><span class="t" style="left:527.90px;top:575.16px;font-size:6.9px;color:#a9a9a9;">07 - Texture Brushes</span><div style="left:1107.50px;top:569.50px;width:125.50px;height:13.50px;background:#1e1e1e;border-radius:4px 0 0 0;"></div><div style="left:1112.50px;top:571.00px;width:19.00px;height:11.50px;background:#1e1e1e;border-radius:2.5px;"></div><svg style="position:absolute;left:1114.00px;top:572.00px;overflow:visible;" width="10" height="10" viewBox="0 0 10 10"><rect x="0.8" y="0.8" width="3" height="3.6" rx="0.6" fill="none" stroke="#e0e0e0" stroke-width="0.8"/><rect x="5.3" y="0.8" width="3" height="3.6" rx="0.6" fill="none" stroke="#e0e0e0" stroke-width="0.8"/><rect x="0.8" y="5.6" width="3" height="3.6" rx="0.6" fill="none" stroke="#e0e0e0" stroke-width="0.8"/><rect x="5.3" y="5.6" width="3" height="3.6" rx="0.6" fill="none" stroke="#e0e0e0" stroke-width="0.8"/></svg><svg style="position:absolute;left:1123.50px;top:573.00px;overflow:visible;" width="8" height="8" viewBox="0 0 8 8"><polyline points="1.4,2.7 4,5.3 6.6,2.7" fill="none" stroke="#cfcfcf" stroke-width="0.8"/></svg><div style="left:1135.00px;top:571.00px;width:93.70px;height:11.00px;background:#1e1e1e;border:0.6px solid #2a2a2a;border-radius:2.5px;"></div><svg style="position:absolute;left:1137.00px;top:571.50px;overflow:visible;" width="10" height="10" viewBox="0 0 10 10"><circle cx="6" cy="4" r="2.6" fill="none" stroke="#d0d0d0" stroke-width="0.9"/><path d="M4.2,5.8 L1.3,8.7" stroke="#d0d0d0" stroke-width="1"/></svg><span class="t" style="left:1149.50px;top:573.36px;font-size:6.9px;color:#6a6a6a;">Search</span><svg width="0" height="0" style="position:absolute"><defs>
<filter id="b1" x="-20%" y="-20%" width="140%" height="140%"><feGaussianBlur stdDeviation="0.7"/></filter>
<filter id="b2" x="-30%" y="-30%" width="160%" height="160%"><feGaussianBlur stdDeviation="1.8"/></filter>
<filter id="r1" x="-20%" y="-20%" width="140%" height="140%"><feTurbulence type="fractalNoise" baseFrequency="0.35" numOctaves="2" seed="2" result="n"/><feDisplacementMap in="SourceGraphic" in2="n" scale="2.2" xChannelSelector="R" yChannelSelector="G"/></filter>
<filter id="r2" x="-20%" y="-20%" width="140%" height="140%"><feTurbulence type="fractalNoise" baseFrequency="0.25" numOctaves="2" seed="5" result="n"/><feDisplacementMap in="SourceGraphic" in2="n" scale="3.5" xChannelSelector="R" yChannelSelector="G"/></filter>
<filter id="r3" x="-20%" y="-20%" width="140%" height="140%"><feTurbulence type="fractalNoise" baseFrequency="0.3" numOctaves="3" seed="9" result="n"/><feDisplacementMap in="SourceGraphic" in2="n" scale="5" xChannelSelector="R" yChannelSelector="G"/></filter>
<filter id="tx1" x="-20%" y="-20%" width="140%" height="140%"><feGaussianBlur in="SourceGraphic" stdDeviation="1.6" result="bl"/><feTurbulence type="fractalNoise" baseFrequency="0.3" numOctaves="3" seed="3" result="n"/><feColorMatrix in="n" type="matrix" values="0 0 0 0 1  0 0 0 0 1  0 0 0 0 1  2.4 0 0 0 -0.75" result="m"/><feComposite in="bl" in2="m" operator="in"/></filter>
<filter id="tx2" x="-20%" y="-20%" width="140%" height="140%"><feGaussianBlur in="SourceGraphic" stdDeviation="1.3" result="bl"/><feTurbulence type="fractalNoise" baseFrequency="0.45" numOctaves="3" seed="7" result="n"/><feColorMatrix in="n" type="matrix" values="0 0 0 0 1  0 0 0 0 1  0 0 0 0 1  2.6 0 0 0 -0.85" result="m"/><feComposite in="bl" in2="m" operator="in"/></filter>
<filter id="tx3" x="-20%" y="-20%" width="140%" height="140%"><feGaussianBlur in="SourceGraphic" stdDeviation="2.2" result="bl"/><feTurbulence type="fractalNoise" baseFrequency="0.2" numOctaves="3" seed="11" result="n"/><feColorMatrix in="n" type="matrix" values="0 0 0 0 1  0 0 0 0 1  0 0 0 0 1  3.2 0 0 0 -1.15" result="m"/><feComposite in="bl" in2="m" operator="in" result="c"/><feGaussianBlur in="c" stdDeviation="0.4"/></filter>
<filter id="tx4" x="-20%" y="-20%" width="140%" height="140%"><feGaussianBlur in="SourceGraphic" stdDeviation="2.5" result="bl"/><feTurbulence type="fractalNoise" baseFrequency="0.14" numOctaves="3" seed="21" result="n"/><feColorMatrix in="n" type="matrix" values="0 0 0 0 1  0 0 0 0 1  0 0 0 0 1  3.6 0 0 0 -1.45" result="m"/><feComposite in="bl" in2="m" operator="in" result="c"/><feGaussianBlur in="c" stdDeviation="0.5"/></filter>
</defs></svg><div style="left:0.00px;top:587.00px;width:1219.00px;height:54.50px;background:#252525;"></div><div style="left:0.00px;top:659.80px;width:1219.00px;height:54.50px;background:#252525;"></div><div style="left:0.00px;top:732.60px;width:1045.00px;height:54.50px;background:#252525;"></div><div style="left:1.00px;top:584.40px;width:57.30px;height:72.60px;background:#4772b3;border-radius:3px;"></div><svg style="position:absolute;left:2.50px;top:587.00px;overflow:visible;" width="54.5" height="54.5" viewBox="0 0 54.5 54.5"><rect width="54.5" height="54.5" fill="#6c6c6c"/><path fill="#ffffff" opacity="1" filter="url(#r1)" d="M7.1,50.1 L7.5,49.1 L7.8,48.1 L8.2,47.1 L8.5,46.1 L8.8,45.2 L9.2,44.3 L9.6,43.5 L10.0,42.7 L10.5,42.0 L10.9,41.2 L11.4,40.5 L12.1,40.0 L12.6,39.3 L13.0,38.7 L13.5,38.0 L14.0,37.4 L14.5,36.9 L15.1,36.4 L15.5,35.7 L16.1,35.1 L16.7,34.7 L17.5,34.4 L18.2,34.1 L18.9,33.8 L19.5,33.2 L20.0,32.6 L20.7,32.3 L21.3,31.8 L22.0,31.4 L22.4,30.7 L23.0,30.2 L23.8,29.8 L24.6,29.7 L25.4,29.4 L26.3,29.3 L26.8,28.6 L27.5,28.1 L28.3,27.8 L29.0,27.3 L29.4,26.5 L29.9,25.7 L30.4,25.0 L31.2,24.6 L32.0,24.2 L32.7,23.8 L33.4,23.1 L34.0,22.5 L34.7,21.9 L35.5,21.5 L36.1,20.9 L36.6,20.1 L37.1,19.2 L37.6,18.5 L38.2,17.8 L38.8,17.1 L39.4,16.4 L39.9,15.6 L40.4,14.8 L41.1,14.1 L41.6,13.3 L42.2,12.4 L42.5,11.5 L42.9,10.5 L43.3,9.6 L43.7,8.6 L44.1,7.6 L44.4,6.6 L44.7,5.5 L45.0,4.4 L45.2,3.3 L45.2,3.3 L44.7,4.3 L44.2,5.3 L43.7,6.3 L43.2,7.2 L42.8,8.1 L42.2,9.0 L41.7,9.8 L41.0,10.6 L40.4,11.3 L39.8,12.0 L39.3,12.7 L38.6,13.4 L38.0,14.0 L37.4,14.6 L36.8,15.3 L36.4,16.1 L35.8,16.7 L35.0,17.1 L34.2,17.5 L33.4,17.8 L32.8,18.4 L32.1,18.8 L31.5,19.4 L30.8,19.8 L30.1,20.2 L29.5,20.8 L29.0,21.5 L28.3,21.9 L27.5,22.2 L26.5,22.3 L25.8,22.6 L25.0,22.9 L24.3,23.3 L23.8,24.1 L23.1,24.4 L22.4,24.9 L21.9,25.6 L21.3,26.2 L20.7,26.8 L20.0,27.2 L19.1,27.4 L18.3,27.8 L17.7,28.3 L17.2,29.1 L16.7,29.8 L16.1,30.3 L15.5,31.0 L14.9,31.6 L14.5,32.4 L13.9,33.0 L13.4,33.6 L12.6,34.1 L12.0,34.7 L11.5,35.4 L11.2,36.3 L10.8,37.1 L10.4,37.9 L10.0,38.7 L9.6,39.5 L9.3,40.4 L9.0,41.2 L8.6,42.1 L8.2,43.0 L7.8,43.9 L7.6,44.8 L7.5,45.9 L7.4,46.9 L7.3,48.0 L7.1,49.0 L7.1,50.1Z"/></svg><div style="left:39.70px;top:629.30px;width:13.20px;height:12.20px;background:#525252;"></div><svg style="position:absolute;left:39.70px;top:629.30px;overflow:visible;" width="13.2" height="12.2" viewBox="0 0 13.2 12.2"><path d="M10,3 L6.5,6.8" stroke="#f0f0f0" stroke-width="1.5" stroke-linecap="round"/><ellipse cx="5" cy="8" rx="2.2" ry="1.5" transform="rotate(-35 5 8)" fill="#f0f0f0"/><path d="M3.5,9.8 Q7,9.3 9.5,8.8" fill="none" stroke="#d0d0d0" stroke-width="0.7"/></svg><span class="t" style="left:-470.25px;width:1000px;text-align:center;top:646.46px;font-size:6.9px;color:#e0e0e0;">#01 Pencil</span><svg style="position:absolute;left:60.50px;top:587.00px;overflow:visible;" width="54.5" height="54.5" viewBox="0 0 54.5 54.5"><rect width="54.5" height="54.5" fill="#6c6c6c"/><path fill="#ffffff" opacity="1" d="M9.3,51.8 L9.6,50.7 L9.9,49.6 L10.2,48.6 L10.6,47.6 L10.9,46.7 L11.3,45.8 L11.7,44.9 L12.1,44.0 L12.5,43.2 L12.9,42.5 L13.4,41.7 L13.8,41.0 L14.3,40.3 L14.8,39.7 L15.3,39.0 L15.8,38.4 L16.3,37.8 L16.9,37.3 L17.4,36.7 L18.0,36.2 L18.6,35.7 L19.1,35.2 L19.7,34.7 L20.3,34.2 L20.9,33.8 L21.5,33.3 L22.2,32.9 L22.8,32.4 L23.4,32.0 L24.1,31.6 L24.7,31.2 L25.4,30.7 L26.1,30.3 L26.7,29.9 L27.4,29.5 L28.0,29.0 L28.7,28.4 L29.3,27.9 L29.9,27.4 L30.6,26.9 L31.2,26.3 L31.8,25.8 L32.5,25.2 L33.1,24.7 L33.7,24.1 L34.3,23.5 L35.0,22.9 L35.6,22.3 L36.2,21.6 L36.8,21.0 L37.4,20.3 L38.0,19.6 L38.5,18.9 L39.1,18.2 L39.7,17.5 L40.2,16.7 L40.7,15.9 L41.2,15.1 L41.7,14.3 L42.2,13.4 L42.6,12.5 L43.1,11.6 L43.5,10.7 L43.9,9.7 L44.3,8.7 L44.6,7.7 L45.0,6.7 L45.3,5.6 L45.6,4.4 L45.8,3.3 L45.8,3.3 L45.3,4.4 L44.8,5.4 L44.3,6.4 L43.9,7.4 L43.4,8.3 L42.8,9.2 L42.3,10.1 L41.8,10.9 L41.2,11.7 L40.7,12.5 L40.1,13.2 L39.6,13.9 L39.0,14.6 L38.4,15.3 L37.8,15.9 L37.2,16.5 L36.6,17.1 L35.9,17.7 L35.3,18.2 L34.7,18.8 L34.0,19.3 L33.4,19.8 L32.7,20.3 L32.1,20.8 L31.4,21.2 L30.7,21.7 L30.1,22.1 L29.4,22.6 L28.7,23.0 L28.0,23.4 L27.4,23.9 L26.7,24.3 L26.0,24.7 L25.3,25.1 L24.6,25.6 L24.0,26.1 L23.4,26.6 L22.7,27.1 L22.1,27.7 L21.5,28.2 L20.9,28.7 L20.3,29.3 L19.7,29.9 L19.1,30.4 L18.5,31.0 L17.9,31.6 L17.4,32.2 L16.8,32.8 L16.3,33.5 L15.7,34.1 L15.2,34.8 L14.7,35.5 L14.2,36.2 L13.7,36.9 L13.3,37.7 L12.9,38.4 L12.5,39.2 L12.1,40.0 L11.7,40.9 L11.3,41.7 L11.0,42.6 L10.7,43.5 L10.4,44.4 L10.2,45.4 L9.9,46.4 L9.7,47.4 L9.6,48.4 L9.4,49.5 L9.3,50.6 L9.3,51.8Z"/></svg><div style="left:97.70px;top:629.30px;width:13.20px;height:12.20px;background:#525252;"></div><svg style="position:absolute;left:97.70px;top:629.30px;overflow:visible;" width="13.2" height="12.2" viewBox="0 0 13.2 12.2"><path d="M10,3 L6.5,6.8" stroke="#f0f0f0" stroke-width="1.5" stroke-linecap="round"/><ellipse cx="5" cy="8" rx="2.2" ry="1.5" transform="rotate(-35 5 8)" fill="#f0f0f0"/><path d="M3.5,9.8 Q7,9.3 9.5,8.8" fill="none" stroke="#d0d0d0" stroke-width="0.7"/></svg><span class="t" style="left:-412.25px;width:1000px;text-align:center;top:646.46px;font-size:6.9px;color:#cfcfcf;">#02 Pencil</span><svg style="position:absolute;left:118.50px;top:587.00px;overflow:visible;" width="54.5" height="54.5" viewBox="0 0 54.5 54.5"><rect width="54.5" height="54.5" fill="#6c6c6c"/><path fill="#ffffff" opacity="1" filter="url(#r1)" d="M8.2,50.7 L8.5,49.6 L8.9,48.6 L9.2,47.6 L9.5,46.7 L9.9,45.8 L10.3,44.9 L10.7,44.1 L11.1,43.2 L11.5,42.5 L11.9,41.7 L12.4,41.0 L13.0,40.4 L13.5,39.8 L14.0,39.1 L14.5,38.5 L15.1,38.0 L15.7,37.5 L16.2,36.9 L16.7,36.3 L17.2,35.7 L17.8,35.2 L18.4,34.8 L19.1,34.4 L19.7,33.9 L20.3,33.5 L21.0,33.1 L21.7,32.8 L22.5,32.4 L23.0,31.9 L23.6,31.4 L24.3,30.9 L25.0,30.5 L25.7,30.2 L26.4,29.7 L27.0,29.3 L27.7,28.8 L28.4,28.4 L29.2,28.1 L29.9,27.7 L30.5,27.0 L31.1,26.4 L31.7,25.8 L32.3,25.2 L33.0,24.6 L33.7,24.1 L34.2,23.4 L34.9,22.8 L35.6,22.3 L36.4,21.8 L37.0,21.2 L37.6,20.5 L38.2,19.8 L38.8,19.2 L39.4,18.4 L39.9,17.7 L40.4,16.9 L40.9,16.0 L41.5,15.3 L42.0,14.5 L42.6,13.7 L43.1,12.9 L43.6,12.0 L44.0,11.1 L44.4,10.1 L44.8,9.2 L45.1,8.1 L45.5,7.1 L45.8,6.0 L46.1,4.9 L46.3,3.8 L46.3,3.8 L45.8,4.9 L45.3,5.8 L44.8,6.8 L44.3,7.7 L43.8,8.7 L43.3,9.5 L42.7,10.3 L42.2,11.1 L41.6,11.9 L41.1,12.7 L40.5,13.4 L39.8,14.0 L39.1,14.6 L38.5,15.2 L37.9,15.9 L37.3,16.5 L36.7,17.1 L36.1,17.6 L35.4,18.1 L34.8,18.7 L34.1,19.2 L33.5,19.7 L32.7,20.0 L31.9,20.3 L31.2,20.8 L30.6,21.3 L29.9,21.8 L29.3,22.3 L28.6,22.8 L27.9,23.2 L27.1,23.5 L26.5,24.1 L25.7,24.3 L24.9,24.7 L24.1,24.9 L23.4,25.3 L22.8,25.9 L22.3,26.7 L21.7,27.3 L21.1,27.8 L20.4,28.3 L19.8,28.8 L19.1,29.3 L18.5,29.9 L17.8,30.3 L17.1,30.8 L16.5,31.4 L16.0,32.1 L15.5,32.8 L15.0,33.6 L14.4,34.2 L13.9,34.8 L13.3,35.5 L12.9,36.2 L12.4,37.0 L11.9,37.6 L11.4,38.4 L11.0,39.2 L10.6,40.0 L10.3,40.9 L10.1,41.8 L9.7,42.7 L9.4,43.6 L9.1,44.5 L8.9,45.4 L8.7,46.4 L8.5,47.4 L8.3,48.5 L8.2,49.6 L8.2,50.7Z"/></svg><div style="left:155.70px;top:629.30px;width:13.20px;height:12.20px;background:#525252;"></div><svg style="position:absolute;left:155.70px;top:629.30px;overflow:visible;" width="13.2" height="12.2" viewBox="0 0 13.2 12.2"><path d="M10,3 L6.5,6.8" stroke="#f0f0f0" stroke-width="1.5" stroke-linecap="round"/><ellipse cx="5" cy="8" rx="2.2" ry="1.5" transform="rotate(-35 5 8)" fill="#f0f0f0"/><path d="M3.5,9.8 Q7,9.3 9.5,8.8" fill="none" stroke="#d0d0d0" stroke-width="0.7"/></svg><span class="t" style="left:-354.25px;width:1000px;text-align:center;top:646.46px;font-size:6.9px;color:#cfcfcf;">#03 Pencil</span><svg style="position:absolute;left:176.50px;top:587.00px;overflow:visible;" width="54.5" height="54.5" viewBox="0 0 54.5 54.5"><rect width="54.5" height="54.5" fill="#6c6c6c"/><path fill="#ffffff" opacity="1" d="M9.3,51.8 L9.6,50.7 L9.9,49.6 L10.2,48.6 L10.5,47.6 L10.8,46.6 L11.2,45.7 L11.6,44.9 L12.0,44.0 L12.4,43.2 L12.8,42.4 L13.3,41.7 L13.7,41.0 L14.2,40.3 L14.7,39.6 L15.2,39.0 L15.7,38.3 L16.2,37.7 L16.7,37.2 L17.3,36.6 L17.8,36.1 L18.4,35.5 L19.0,35.0 L19.6,34.5 L20.2,34.1 L20.8,33.6 L21.4,33.1 L22.0,32.7 L22.6,32.2 L23.3,31.8 L23.9,31.4 L24.6,30.9 L25.2,30.5 L25.9,30.1 L26.6,29.7 L27.2,29.2 L27.9,28.7 L28.5,28.2 L29.1,27.7 L29.8,27.2 L30.4,26.7 L31.0,26.1 L31.7,25.6 L32.3,25.0 L32.9,24.5 L33.6,23.9 L34.2,23.3 L34.8,22.7 L35.4,22.1 L36.1,21.5 L36.7,20.9 L37.3,20.2 L37.8,19.5 L38.4,18.8 L39.0,18.1 L39.5,17.4 L40.1,16.6 L40.6,15.8 L41.1,15.0 L41.6,14.2 L42.1,13.4 L42.6,12.5 L43.0,11.6 L43.4,10.7 L43.8,9.7 L44.2,8.7 L44.6,7.7 L44.9,6.6 L45.3,5.6 L45.5,4.4 L45.8,3.3 L45.8,3.3 L45.3,4.4 L44.9,5.4 L44.4,6.4 L43.9,7.4 L43.4,8.3 L42.9,9.3 L42.4,10.1 L41.9,11.0 L41.3,11.8 L40.8,12.5 L40.2,13.3 L39.7,14.0 L39.1,14.7 L38.5,15.4 L37.9,16.0 L37.3,16.6 L36.7,17.2 L36.1,17.8 L35.4,18.4 L34.8,18.9 L34.2,19.4 L33.5,20.0 L32.9,20.5 L32.2,20.9 L31.6,21.4 L30.9,21.9 L30.2,22.3 L29.6,22.8 L28.9,23.2 L28.2,23.7 L27.5,24.1 L26.8,24.5 L26.2,25.0 L25.5,25.4 L24.8,25.8 L24.2,26.3 L23.5,26.8 L22.9,27.4 L22.3,27.9 L21.7,28.4 L21.1,28.9 L20.4,29.5 L19.8,30.0 L19.2,30.6 L18.7,31.2 L18.1,31.8 L17.5,32.4 L16.9,33.0 L16.4,33.6 L15.9,34.3 L15.3,34.9 L14.8,35.6 L14.4,36.3 L13.9,37.0 L13.4,37.7 L13.0,38.5 L12.6,39.3 L12.2,40.1 L11.8,40.9 L11.4,41.8 L11.1,42.6 L10.8,43.5 L10.5,44.5 L10.2,45.4 L10.0,46.4 L9.8,47.4 L9.6,48.4 L9.5,49.5 L9.3,50.6 L9.3,51.8Z"/></svg><div style="left:213.70px;top:629.30px;width:13.20px;height:12.20px;background:#525252;"></div><svg style="position:absolute;left:213.70px;top:629.30px;overflow:visible;" width="13.2" height="12.2" viewBox="0 0 13.2 12.2"><path d="M10,3 L6.5,6.8" stroke="#f0f0f0" stroke-width="1.5" stroke-linecap="round"/><ellipse cx="5" cy="8" rx="2.2" ry="1.5" transform="rotate(-35 5 8)" fill="#f0f0f0"/><path d="M3.5,9.8 Q7,9.3 9.5,8.8" fill="none" stroke="#d0d0d0" stroke-width="0.7"/></svg><span class="t" style="left:-296.25px;width:1000px;text-align:center;top:646.46px;font-size:6.9px;color:#cfcfcf;">#04 Pencil</span><svg style="position:absolute;left:234.50px;top:587.00px;overflow:visible;" width="54.5" height="54.5" viewBox="0 0 54.5 54.5"><rect width="54.5" height="54.5" fill="#6c6c6c"/><path fill="#ffffff" opacity="0.85" filter="url(#b1)" d="M8.2,50.7 L8.6,49.6 L8.9,48.6 L9.2,47.6 L9.5,46.7 L9.9,45.8 L10.4,44.9 L10.8,44.1 L11.1,43.3 L11.6,42.5 L12.2,41.9 L12.8,41.2 L13.3,40.6 L13.7,39.9 L14.2,39.2 L14.6,38.6 L15.2,38.1 L15.7,37.5 L16.2,36.9 L16.7,36.3 L17.3,35.8 L18.1,35.6 L18.8,35.2 L19.4,34.7 L20.0,34.2 L20.6,33.9 L21.2,33.4 L21.9,33.0 L22.4,32.4 L23.0,31.8 L23.6,31.4 L24.3,31.0 L25.3,31.0 L26.0,30.6 L26.7,30.2 L27.3,29.7 L28.1,29.5 L28.8,29.0 L29.4,28.4 L30.0,27.8 L30.4,26.9 L31.1,26.3 L31.8,25.9 L32.5,25.5 L33.2,24.9 L33.8,24.3 L34.5,23.7 L35.3,23.4 L36.0,22.8 L36.7,22.2 L37.1,21.3 L37.6,20.5 L38.2,19.9 L38.8,19.2 L39.4,18.5 L40.0,17.7 L40.6,17.0 L41.2,16.3 L41.8,15.5 L42.3,14.7 L42.8,13.9 L43.2,13.0 L43.6,12.0 L44.0,11.1 L44.4,10.1 L44.8,9.2 L45.2,8.1 L45.5,7.1 L45.8,6.1 L46.1,5.0 L46.3,3.8 L46.3,3.8 L45.8,4.8 L45.3,5.8 L44.8,6.8 L44.3,7.7 L43.7,8.6 L43.1,9.5 L42.5,10.3 L41.9,11.0 L41.4,11.8 L40.9,12.6 L40.4,13.3 L39.8,14.0 L39.1,14.6 L38.5,15.2 L37.8,15.8 L37.1,16.3 L36.5,16.9 L35.8,17.3 L35.1,17.8 L34.5,18.4 L33.9,19.0 L33.4,19.6 L32.7,20.1 L32.0,20.4 L31.2,20.8 L30.4,21.0 L29.8,21.6 L29.0,21.9 L28.2,22.1 L27.4,22.4 L26.8,23.0 L26.3,23.7 L25.6,24.2 L24.9,24.6 L24.1,24.9 L23.3,25.2 L22.7,25.7 L22.0,26.2 L21.4,26.8 L20.7,27.3 L20.0,27.7 L19.4,28.3 L19.0,29.1 L18.5,29.9 L17.9,30.5 L17.1,30.9 L16.4,31.3 L15.8,31.9 L15.3,32.6 L14.7,33.2 L14.1,33.9 L13.6,34.5 L13.1,35.3 L12.7,36.1 L12.4,36.9 L11.9,37.7 L11.4,38.4 L10.9,39.1 L10.4,39.9 L10.2,40.8 L9.8,41.7 L9.5,42.6 L9.2,43.5 L9.0,44.4 L8.8,45.4 L8.7,46.4 L8.5,47.4 L8.3,48.5 L8.2,49.6 L8.2,50.7Z"/></svg><div style="left:271.70px;top:629.30px;width:13.20px;height:12.20px;background:#525252;"></div><svg style="position:absolute;left:271.70px;top:629.30px;overflow:visible;" width="13.2" height="12.2" viewBox="0 0 13.2 12.2"><path d="M10,3 L6.5,6.8" stroke="#f0f0f0" stroke-width="1.5" stroke-linecap="round"/><ellipse cx="5" cy="8" rx="2.2" ry="1.5" transform="rotate(-35 5 8)" fill="#f0f0f0"/><path d="M3.5,9.8 Q7,9.3 9.5,8.8" fill="none" stroke="#d0d0d0" stroke-width="0.7"/></svg><span class="t" style="left:-238.25px;width:1000px;text-align:center;top:646.46px;font-size:6.9px;color:#cfcfcf;">#05 Pencil</span><svg style="position:absolute;left:292.50px;top:587.00px;overflow:visible;" width="54.5" height="54.5" viewBox="0 0 54.5 54.5"><rect width="54.5" height="54.5" fill="#6c6c6c"/><path fill="#ffffff" opacity="1" d="M10.9,51.2 L11.3,50.2 L11.6,49.2 L12.0,48.2 L12.4,47.3 L12.8,46.4 L13.2,45.5 L13.6,44.7 L14.0,43.9 L14.4,43.2 L14.9,42.5 L15.3,41.8 L15.8,41.1 L16.3,40.5 L16.7,39.9 L17.2,39.3 L17.7,38.8 L18.3,38.3 L18.8,37.8 L19.3,37.3 L19.9,36.8 L20.4,36.3 L21.0,35.9 L21.5,35.5 L22.1,35.1 L22.7,34.7 L23.3,34.3 L23.9,33.9 L24.5,33.5 L25.1,33.1 L25.7,32.7 L26.3,32.4 L26.9,31.9 L27.5,31.4 L28.0,30.9 L28.6,30.4 L29.1,29.9 L29.7,29.4 L30.3,28.9 L30.9,28.3 L31.5,27.8 L32.1,27.3 L32.6,26.7 L33.2,26.2 L33.8,25.6 L34.4,25.0 L35.0,24.4 L35.6,23.8 L36.1,23.2 L36.7,22.5 L37.2,21.9 L37.8,21.2 L38.3,20.5 L38.9,19.8 L39.4,19.1 L39.9,18.4 L40.4,17.6 L40.8,16.8 L41.3,16.0 L41.7,15.2 L42.2,14.3 L42.6,13.5 L43.0,12.6 L43.3,11.6 L43.7,10.7 L44.0,9.7 L44.3,8.7 L44.6,7.7 L44.9,6.6 L45.1,5.5 L45.2,4.4 L45.2,4.4 L44.7,5.4 L44.2,6.4 L43.8,7.4 L43.3,8.3 L42.8,9.2 L42.3,10.0 L41.7,10.8 L41.2,11.6 L40.7,12.4 L40.1,13.1 L39.6,13.8 L39.0,14.5 L38.5,15.1 L37.9,15.7 L37.3,16.3 L36.7,16.9 L36.1,17.4 L35.5,17.9 L34.9,18.4 L34.3,18.9 L33.7,19.4 L33.1,19.9 L32.5,20.3 L31.9,20.8 L31.2,21.2 L30.6,21.6 L30.0,22.0 L29.3,22.4 L28.7,22.8 L28.0,23.2 L27.4,23.6 L26.7,24.0 L26.1,24.4 L25.4,24.8 L24.7,25.2 L24.1,25.6 L23.4,26.0 L22.7,26.4 L22.1,26.9 L21.5,27.4 L21.0,28.0 L20.4,28.6 L19.9,29.1 L19.3,29.7 L18.8,30.3 L18.2,30.9 L17.7,31.6 L17.2,32.2 L16.7,32.9 L16.2,33.6 L15.8,34.2 L15.3,34.9 L14.9,35.7 L14.4,36.4 L14.0,37.2 L13.6,38.0 L13.3,38.8 L12.9,39.6 L12.6,40.4 L12.3,41.3 L12.1,42.2 L11.8,43.1 L11.6,44.0 L11.4,44.9 L11.2,45.9 L11.1,46.9 L11.0,48.0 L10.9,49.0 L10.9,50.1 L10.9,51.2Z"/></svg><div style="left:329.70px;top:629.30px;width:13.20px;height:12.20px;background:#525252;"></div><svg style="position:absolute;left:329.70px;top:629.30px;overflow:visible;" width="13.2" height="12.2" viewBox="0 0 13.2 12.2"><path d="M10,3 L6.5,6.8" stroke="#f0f0f0" stroke-width="1.5" stroke-linecap="round"/><ellipse cx="5" cy="8" rx="2.2" ry="1.5" transform="rotate(-35 5 8)" fill="#f0f0f0"/><path d="M3.5,9.8 Q7,9.3 9.5,8.8" fill="none" stroke="#d0d0d0" stroke-width="0.7"/></svg><span class="t" style="left:-180.25px;width:1000px;text-align:center;top:646.46px;font-size:6.9px;color:#cfcfcf;">#01 Dry Media</span><svg style="position:absolute;left:350.50px;top:587.00px;overflow:visible;" width="54.5" height="54.5" viewBox="0 0 54.5 54.5"><rect width="54.5" height="54.5" fill="#6c6c6c"/><path fill="#ffffff" opacity="1" filter="url(#r2)" d="M5.5,50.7 L6.5,50.3 L7.4,49.8 L8.1,49.3 L8.9,48.8 L9.5,48.3 L10.3,47.7 L11.1,47.3 L11.7,46.8 L12.2,46.1 L12.5,45.3 L13.3,44.9 L14.0,44.4 L14.9,44.1 L15.6,43.7 L16.1,43.0 L17.0,42.7 L18.0,42.6 L18.8,42.2 L19.3,41.6 L19.5,40.6 L20.1,40.0 L20.8,39.6 L21.7,39.4 L22.2,38.7 L22.9,38.2 L23.7,37.8 L24.6,37.6 L25.8,37.8 L26.7,37.5 L27.1,36.7 L27.6,35.9 L28.1,35.2 L28.8,34.7 L29.5,34.2 L30.3,33.8 L30.8,33.0 L31.4,32.4 L32.4,32.2 L33.3,31.9 L34.1,31.5 L34.5,30.6 L34.9,29.7 L35.6,29.1 L36.2,28.4 L36.6,27.5 L36.9,26.5 L37.4,25.6 L38.1,25.1 L39.0,24.7 L40.0,24.5 L40.5,23.6 L41.0,22.9 L41.6,22.1 L42.4,21.6 L43.0,20.9 L43.4,20.0 L43.6,18.8 L43.9,17.9 L44.6,17.3 L45.3,16.6 L45.9,15.9 L46.3,15.0 L46.8,14.2 L47.4,13.4 L48.0,12.7 L48.3,11.8 L48.6,10.8 L48.8,9.8 L49.0,8.8 L49.1,7.6 L49.1,7.6 L48.0,8.0 L47.1,8.5 L46.3,9.0 L45.5,9.5 L44.9,10.1 L44.0,10.5 L43.1,11.0 L42.2,11.3 L41.6,11.9 L41.0,12.6 L40.4,13.2 L39.9,13.9 L39.2,14.4 L38.3,14.7 L37.4,15.0 L36.9,15.7 L36.1,16.1 L35.2,16.4 L34.2,16.6 L33.4,16.9 L33.0,17.7 L32.5,18.5 L32.1,19.4 L31.2,19.7 L30.4,20.0 L29.3,20.1 L28.7,20.7 L28.0,21.2 L27.0,21.2 L26.0,21.5 L25.1,21.7 L24.7,22.5 L24.4,23.5 L24.1,24.6 L23.2,24.9 L22.2,25.1 L21.2,25.3 L20.8,26.1 L20.2,26.8 L19.3,27.1 L18.8,27.8 L18.1,28.5 L17.5,29.2 L17.5,30.5 L17.1,31.5 L16.3,31.9 L15.5,32.3 L14.8,32.8 L14.1,33.4 L13.6,34.2 L12.8,34.7 L12.2,35.4 L11.7,36.1 L11.2,36.9 L11.1,38.1 L10.7,39.0 L10.2,39.7 L9.5,40.3 L8.8,40.8 L8.2,41.6 L7.9,42.5 L7.4,43.3 L7.0,44.1 L6.6,44.9 L6.3,45.8 L6.2,46.9 L5.9,47.8 L5.6,48.6 L5.3,49.5 L5.5,50.7Z"/></svg><div style="left:387.70px;top:629.30px;width:13.20px;height:12.20px;background:#525252;"></div><svg style="position:absolute;left:387.70px;top:629.30px;overflow:visible;" width="13.2" height="12.2" viewBox="0 0 13.2 12.2"><path d="M10,3 L6.5,6.8" stroke="#f0f0f0" stroke-width="1.5" stroke-linecap="round"/><ellipse cx="5" cy="8" rx="2.2" ry="1.5" transform="rotate(-35 5 8)" fill="#f0f0f0"/><path d="M3.5,9.8 Q7,9.3 9.5,8.8" fill="none" stroke="#d0d0d0" stroke-width="0.7"/></svg><span class="t" style="left:-122.25px;width:1000px;text-align:center;top:646.46px;font-size:6.9px;color:#cfcfcf;">#02 Dry Media</span><svg style="position:absolute;left:408.50px;top:587.00px;overflow:visible;" width="54.5" height="54.5" viewBox="0 0 54.5 54.5"><rect width="54.5" height="54.5" fill="#6c6c6c"/><path fill="#ffffff" opacity="1" filter="url(#r2)" d="M8.2,50.7 L9.1,50.0 L9.6,49.1 L10.1,48.3 L10.6,47.6 L11.2,46.8 L11.9,46.2 L12.4,45.5 L12.9,44.8 L13.6,44.2 L14.2,43.7 L14.9,43.2 L15.4,42.5 L15.8,41.9 L16.1,41.2 L16.6,40.6 L17.4,40.2 L17.8,39.6 L18.3,39.0 L19.0,38.5 L19.7,38.1 L20.6,38.0 L21.4,37.8 L22.0,37.3 L22.3,36.5 L22.8,35.9 L23.4,35.4 L24.2,35.2 L24.7,34.5 L25.0,33.8 L25.7,33.3 L26.7,33.3 L27.6,33.2 L28.3,32.7 L29.0,32.4 L29.7,31.9 L30.2,31.2 L30.8,30.6 L31.3,29.9 L31.5,28.9 L31.9,28.0 L32.6,27.5 L33.4,27.1 L34.3,26.9 L35.0,26.3 L35.4,25.5 L36.1,24.9 L37.0,24.6 L37.5,23.8 L37.9,22.9 L38.2,22.0 L38.5,20.9 L39.2,20.3 L40.0,19.8 L40.5,19.1 L41.0,18.3 L41.6,17.5 L42.2,16.9 L42.8,16.1 L43.3,15.3 L43.6,14.3 L43.9,13.3 L44.2,12.3 L44.6,11.4 L45.0,10.5 L45.3,9.6 L45.7,8.6 L46.0,7.6 L46.3,6.6 L46.6,5.6 L46.3,4.4 L46.3,4.4 L45.3,5.0 L44.6,5.8 L44.0,6.6 L43.5,7.4 L42.8,8.1 L42.2,8.8 L41.4,9.4 L40.6,10.0 L40.0,10.6 L39.5,11.3 L38.8,11.8 L38.2,12.4 L37.5,13.0 L37.0,13.6 L36.7,14.5 L36.0,15.0 L35.2,15.4 L34.3,15.6 L33.5,15.9 L32.8,16.4 L32.3,17.0 L31.8,17.7 L31.1,18.1 L30.3,18.4 L29.9,19.1 L29.3,19.7 L28.7,20.3 L28.0,20.6 L26.8,20.5 L26.0,20.8 L25.2,21.1 L24.9,22.0 L24.3,22.6 L23.6,23.0 L23.0,23.5 L22.3,24.0 L22.0,25.0 L21.5,25.7 L20.6,26.0 L19.8,26.3 L18.9,26.6 L18.4,27.3 L18.0,28.1 L17.6,29.0 L17.1,29.8 L16.5,30.3 L16.1,31.2 L15.7,32.0 L15.1,32.6 L14.5,33.2 L13.6,33.7 L12.9,34.3 L12.4,35.0 L12.2,36.0 L12.0,37.0 L11.6,37.8 L11.1,38.6 L10.7,39.3 L10.3,40.2 L10.1,41.2 L9.6,41.9 L9.1,42.7 L8.6,43.5 L8.3,44.5 L8.3,45.5 L8.2,46.5 L8.1,47.5 L8.0,48.5 L7.9,49.6 L8.2,50.7Z"/></svg><div style="left:445.70px;top:629.30px;width:13.20px;height:12.20px;background:#525252;"></div><svg style="position:absolute;left:445.70px;top:629.30px;overflow:visible;" width="13.2" height="12.2" viewBox="0 0 13.2 12.2"><path d="M10,3 L6.5,6.8" stroke="#f0f0f0" stroke-width="1.5" stroke-linecap="round"/><ellipse cx="5" cy="8" rx="2.2" ry="1.5" transform="rotate(-35 5 8)" fill="#f0f0f0"/><path d="M3.5,9.8 Q7,9.3 9.5,8.8" fill="none" stroke="#d0d0d0" stroke-width="0.7"/></svg><span class="t" style="left:-64.25px;width:1000px;text-align:center;top:646.46px;font-size:6.9px;color:#cfcfcf;">#03 Dry Media</span><svg style="position:absolute;left:466.50px;top:587.00px;overflow:visible;" width="54.5" height="54.5" viewBox="0 0 54.5 54.5"><rect width="54.5" height="54.5" fill="#6c6c6c"/><path fill="#ffffff" opacity="1" d="M9.3,50.7 L10.6,49.9 L11.3,49.1 L11.9,48.3 L12.5,47.6 L13.1,46.9 L13.6,46.2 L14.2,45.5 L14.7,44.9 L15.3,44.3 L15.8,43.7 L16.3,43.1 L16.9,42.6 L17.4,42.1 L17.9,41.6 L18.4,41.1 L19.0,40.7 L19.5,40.3 L20.1,39.8 L20.6,39.4 L21.2,39.0 L21.7,38.6 L22.3,38.2 L22.8,37.9 L23.4,37.5 L24.0,37.1 L24.6,36.8 L25.2,36.4 L25.7,36.1 L26.4,35.7 L26.9,35.2 L27.4,34.7 L27.8,34.2 L28.3,33.6 L28.9,33.1 L29.4,32.5 L29.9,31.9 L30.4,31.4 L31.0,30.8 L31.5,30.2 L32.0,29.6 L32.6,29.0 L33.1,28.4 L33.7,27.8 L34.3,27.1 L34.8,26.5 L35.3,25.8 L35.9,25.2 L36.4,24.5 L37.0,23.8 L37.5,23.0 L38.0,22.3 L38.5,21.6 L39.0,20.8 L39.5,20.0 L40.0,19.2 L40.4,18.4 L40.9,17.5 L41.3,16.7 L41.7,15.8 L42.1,14.9 L42.5,13.9 L42.8,13.0 L43.1,12.0 L43.4,11.0 L43.6,10.0 L43.8,9.0 L44.0,7.9 L44.1,6.8 L44.1,5.7 L43.6,4.4 L43.6,4.4 L42.4,5.0 L41.6,5.8 L40.9,6.6 L40.3,7.4 L39.7,8.1 L39.0,8.8 L38.4,9.5 L37.8,10.1 L37.2,10.8 L36.6,11.4 L36.1,12.0 L35.5,12.5 L34.9,13.1 L34.3,13.6 L33.7,14.1 L33.1,14.6 L32.5,15.1 L31.9,15.5 L31.3,16.0 L30.7,16.4 L30.1,16.9 L29.5,17.3 L28.9,17.7 L28.2,18.1 L27.6,18.5 L27.0,18.9 L26.4,19.3 L25.7,19.7 L25.1,20.1 L24.4,20.5 L23.8,20.9 L23.2,21.3 L22.5,21.7 L21.8,22.1 L21.2,22.5 L20.5,23.0 L19.8,23.4 L19.2,23.8 L18.5,24.3 L17.8,24.7 L17.2,25.3 L16.7,25.9 L16.1,26.6 L15.6,27.2 L15.1,27.9 L14.6,28.6 L14.1,29.3 L13.6,30.1 L13.1,30.8 L12.6,31.6 L12.2,32.4 L11.7,33.2 L11.3,34.0 L10.9,34.8 L10.5,35.6 L10.1,36.5 L9.8,37.4 L9.5,38.3 L9.2,39.2 L8.9,40.1 L8.7,41.1 L8.5,42.1 L8.3,43.1 L8.2,44.1 L8.1,45.1 L8.1,46.1 L8.1,47.2 L8.2,48.3 L8.4,49.4 L9.3,50.7Z"/></svg><div style="left:503.70px;top:629.30px;width:13.20px;height:12.20px;background:#525252;"></div><svg style="position:absolute;left:503.70px;top:629.30px;overflow:visible;" width="13.2" height="12.2" viewBox="0 0 13.2 12.2"><path d="M10,3 L6.5,6.8" stroke="#f0f0f0" stroke-width="1.5" stroke-linecap="round"/><ellipse cx="5" cy="8" rx="2.2" ry="1.5" transform="rotate(-35 5 8)" fill="#f0f0f0"/><path d="M3.5,9.8 Q7,9.3 9.5,8.8" fill="none" stroke="#d0d0d0" stroke-width="0.7"/></svg><span class="t" style="left:-6.25px;width:1000px;text-align:center;top:646.46px;font-size:6.9px;color:#cfcfcf;">#04 Dry Media</span><svg style="position:absolute;left:524.50px;top:587.00px;overflow:visible;" width="54.5" height="54.5" viewBox="0 0 54.5 54.5"><rect width="54.5" height="54.5" fill="#6c6c6c"/><path fill="#ffffff" opacity="0.5" filter="url(#b2)" d="M6.5,48.0 L7.8,47.8 L8.6,47.4 L9.4,46.9 L10.2,46.4 L10.9,46.0 L11.7,45.5 L12.4,45.0 L13.1,44.5 L13.8,44.1 L14.5,43.6 L15.2,43.1 L15.9,42.7 L16.6,42.2 L17.3,41.8 L18.0,41.3 L18.7,40.9 L19.4,40.4 L20.0,40.0 L20.7,39.5 L21.4,39.1 L22.1,38.6 L22.9,38.2 L23.6,37.7 L24.3,37.3 L25.0,36.9 L25.7,36.4 L26.4,36.0 L27.1,35.5 L27.8,35.1 L28.6,34.7 L29.3,34.2 L30.0,33.8 L30.7,33.3 L31.5,32.9 L32.2,32.4 L32.8,31.8 L33.3,31.1 L33.9,30.4 L34.5,29.8 L35.0,29.1 L35.6,28.4 L36.2,27.8 L36.7,27.1 L37.3,26.4 L37.9,25.7 L38.4,25.0 L39.0,24.3 L39.6,23.6 L40.1,22.9 L40.7,22.2 L41.2,21.5 L41.8,20.7 L42.3,20.0 L42.8,19.2 L43.4,18.5 L43.9,17.7 L44.4,17.0 L44.9,16.2 L45.4,15.4 L45.8,14.6 L46.3,13.8 L46.8,13.0 L47.2,12.1 L47.6,11.3 L48.0,10.4 L48.4,9.5 L48.7,8.6 L49.0,7.7 L49.2,6.7 L49.1,5.5 L49.1,5.5 L47.8,5.6 L46.9,6.0 L46.1,6.4 L45.3,6.9 L44.5,7.4 L43.7,7.8 L42.9,8.3 L42.2,8.8 L41.5,9.3 L40.7,9.7 L40.0,10.2 L39.3,10.6 L38.5,11.1 L37.8,11.6 L37.1,12.0 L36.3,12.5 L35.6,12.9 L34.9,13.4 L34.2,13.8 L33.4,14.3 L32.7,14.7 L32.0,15.2 L31.3,15.6 L30.5,16.1 L29.8,16.5 L29.1,16.9 L28.3,17.4 L27.6,17.8 L26.9,18.3 L26.1,18.7 L25.4,19.2 L24.7,19.6 L23.9,20.1 L23.2,20.5 L22.4,21.0 L21.9,21.7 L21.3,22.3 L20.7,23.0 L20.2,23.7 L19.6,24.3 L19.0,25.0 L18.5,25.7 L17.9,26.4 L17.3,27.1 L16.8,27.7 L16.2,28.4 L15.7,29.1 L15.1,29.9 L14.6,30.6 L14.1,31.3 L13.5,32.0 L13.0,32.8 L12.5,33.5 L12.0,34.2 L11.5,35.0 L11.0,35.8 L10.5,36.5 L10.1,37.3 L9.6,38.1 L9.2,38.9 L8.8,39.7 L8.4,40.5 L8.0,41.4 L7.6,42.2 L7.3,43.1 L7.0,43.9 L6.7,44.8 L6.5,45.8 L6.3,46.7 L6.5,48.0Z"/><path fill="#ffffff" opacity="0.95" filter="url(#tx1)" d="M6.5,48.0 L8.6,48.4 L9.7,48.1 L10.6,47.8 L11.4,47.4 L12.2,47.0 L13.0,46.6 L13.7,46.1 L14.4,45.7 L15.2,45.3 L15.9,44.8 L16.6,44.4 L17.3,44.0 L18.0,43.6 L18.7,43.1 L19.4,42.7 L20.1,42.3 L20.8,41.8 L21.5,41.4 L22.1,41.0 L22.8,40.5 L23.5,40.1 L24.2,39.7 L24.9,39.2 L25.6,38.8 L26.3,38.4 L27.0,37.9 L27.7,37.5 L28.5,37.1 L29.2,36.6 L29.9,36.2 L30.6,35.7 L31.3,35.3 L32.0,34.8 L32.8,34.4 L33.5,33.9 L34.1,33.3 L34.6,32.6 L35.2,32.0 L35.8,31.3 L36.3,30.7 L36.9,30.0 L37.5,29.3 L38.1,28.6 L38.6,27.9 L39.2,27.2 L39.8,26.5 L40.4,25.8 L40.9,25.1 L41.5,24.4 L42.0,23.7 L42.6,22.9 L43.1,22.2 L43.7,21.4 L44.2,20.7 L44.7,19.9 L45.2,19.1 L45.8,18.3 L46.3,17.5 L46.7,16.7 L47.2,15.9 L47.7,15.0 L48.1,14.2 L48.5,13.3 L48.9,12.4 L49.2,11.5 L49.5,10.5 L49.8,9.5 L50.0,8.5 L50.0,7.3 L49.1,5.5 L49.1,5.5 L47.0,5.0 L45.9,5.2 L45.0,5.5 L44.1,5.9 L43.2,6.3 L42.4,6.7 L41.6,7.1 L40.9,7.6 L40.1,8.0 L39.4,8.4 L38.6,8.9 L37.9,9.3 L37.1,9.7 L36.4,10.2 L35.7,10.6 L35.0,11.0 L34.2,11.5 L33.5,11.9 L32.8,12.3 L32.1,12.8 L31.3,13.2 L30.6,13.7 L29.9,14.1 L29.2,14.5 L28.5,15.0 L27.7,15.4 L27.0,15.8 L26.3,16.3 L25.5,16.7 L24.8,17.2 L24.1,17.6 L23.4,18.1 L22.6,18.6 L21.9,19.0 L21.2,19.5 L20.6,20.1 L20.0,20.8 L19.4,21.5 L18.8,22.1 L18.3,22.8 L17.7,23.5 L17.1,24.1 L16.6,24.8 L16.0,25.5 L15.4,26.2 L14.9,26.9 L14.3,27.6 L13.8,28.4 L13.2,29.1 L12.7,29.8 L12.1,30.6 L11.6,31.3 L11.1,32.1 L10.6,32.8 L10.1,33.6 L9.6,34.4 L9.1,35.2 L8.7,36.0 L8.2,36.8 L7.8,37.7 L7.4,38.5 L7.0,39.4 L6.6,40.2 L6.3,41.1 L6.0,42.1 L5.7,43.0 L5.5,44.0 L5.4,45.0 L5.5,46.1 L6.5,48.0Z"/></svg><div style="left:561.70px;top:629.30px;width:13.20px;height:12.20px;background:#525252;"></div><svg style="position:absolute;left:561.70px;top:629.30px;overflow:visible;" width="13.2" height="12.2" viewBox="0 0 13.2 12.2"><path d="M10,3 L6.5,6.8" stroke="#f0f0f0" stroke-width="1.5" stroke-linecap="round"/><ellipse cx="5" cy="8" rx="2.2" ry="1.5" transform="rotate(-35 5 8)" fill="#f0f0f0"/><path d="M3.5,9.8 Q7,9.3 9.5,8.8" fill="none" stroke="#d0d0d0" stroke-width="0.7"/></svg><span class="t" style="left:51.75px;width:1000px;text-align:center;top:646.46px;font-size:6.9px;color:#cfcfcf;">#05 Dry Media</span><svg style="position:absolute;left:582.50px;top:587.00px;overflow:visible;" width="54.5" height="54.5" viewBox="0 0 54.5 54.5"><rect width="54.5" height="54.5" fill="#6c6c6c"/><path fill="#ffffff" opacity="1" filter="url(#r2)" d="M7.6,50.7 L8.8,50.2 L9.4,49.5 L10.2,48.8 L11.1,48.3 L11.7,47.7 L12.3,47.1 L12.9,46.5 L13.7,46.0 L14.3,45.5 L15.0,45.0 L15.3,44.2 L15.4,43.4 L16.2,43.0 L16.8,42.4 L17.5,42.1 L18.1,41.6 L18.7,41.1 L19.4,40.6 L20.4,40.6 L21.3,40.4 L21.9,39.9 L22.2,39.1 L22.4,38.3 L23.0,37.8 L23.9,37.5 L24.3,36.9 L25.0,36.5 L25.5,35.8 L26.4,35.7 L27.5,35.7 L28.5,35.7 L29.1,35.2 L29.5,34.4 L29.9,33.6 L30.5,33.1 L31.2,32.6 L31.4,31.6 L31.9,30.8 L32.5,30.2 L33.3,29.8 L34.5,29.9 L35.2,29.4 L35.6,28.5 L36.0,27.7 L36.7,27.1 L37.3,26.5 L37.8,25.6 L38.0,24.5 L38.1,23.4 L38.7,22.7 L39.6,22.3 L40.7,22.1 L41.1,21.2 L41.6,20.4 L42.2,19.7 L42.9,19.0 L43.5,18.3 L43.7,17.2 L43.9,16.2 L44.1,15.1 L44.7,14.3 L45.2,13.6 L45.6,12.7 L46.0,11.8 L46.3,10.8 L46.8,9.9 L47.2,9.0 L47.4,8.0 L47.3,6.8 L46.9,5.5 L46.9,5.5 L45.6,5.9 L44.8,6.5 L44.0,7.1 L43.3,7.7 L42.7,8.4 L41.9,9.0 L41.0,9.4 L40.1,9.8 L39.4,10.4 L38.9,11.0 L38.4,11.7 L38.0,12.4 L37.2,12.8 L36.6,13.4 L35.9,13.9 L35.5,14.6 L34.7,15.0 L33.7,15.2 L32.7,15.3 L32.0,15.8 L31.5,16.3 L31.3,17.3 L30.5,17.7 L30.1,18.4 L29.2,18.6 L28.6,19.1 L28.0,19.7 L27.3,20.2 L26.1,20.0 L25.0,20.0 L24.2,20.3 L23.9,21.2 L23.6,22.2 L23.2,23.0 L22.3,23.2 L21.7,23.8 L21.1,24.3 L20.4,24.9 L20.0,25.7 L19.1,26.0 L18.0,26.1 L17.5,26.8 L17.2,27.7 L16.9,28.8 L16.8,30.0 L16.2,30.6 L15.4,31.0 L14.8,31.7 L14.2,32.3 L13.6,32.9 L13.1,33.7 L12.2,34.1 L11.5,34.7 L11.5,35.9 L11.3,36.9 L11.0,37.8 L10.6,38.7 L10.1,39.4 L9.5,40.2 L9.0,40.9 L8.6,41.8 L8.2,42.6 L7.8,43.4 L7.5,44.4 L7.4,45.4 L7.5,46.5 L7.3,47.5 L7.3,48.5 L7.2,49.5 L7.6,50.7Z"/></svg><div style="left:619.70px;top:629.30px;width:13.20px;height:12.20px;background:#525252;"></div><svg style="position:absolute;left:619.70px;top:629.30px;overflow:visible;" width="13.2" height="12.2" viewBox="0 0 13.2 12.2"><path d="M10,3 L6.5,6.8" stroke="#f0f0f0" stroke-width="1.5" stroke-linecap="round"/><ellipse cx="5" cy="8" rx="2.2" ry="1.5" transform="rotate(-35 5 8)" fill="#f0f0f0"/><path d="M3.5,9.8 Q7,9.3 9.5,8.8" fill="none" stroke="#d0d0d0" stroke-width="0.7"/></svg><span class="t" style="left:109.75px;width:1000px;text-align:center;top:646.46px;font-size:6.9px;color:#cfcfcf;">#06 Dry Media</span><svg style="position:absolute;left:640.50px;top:587.00px;overflow:visible;" width="54.5" height="54.5" viewBox="0 0 54.5 54.5"><rect width="54.5" height="54.5" fill="#6c6c6c"/><path fill="#ffffff" opacity="1" filter="url(#r2)" d="M16.3,40.9 L17.7,40.8 L18.5,40.5 L19.1,40.1 L19.7,39.7 L20.3,39.3 L20.9,38.9 L21.6,38.6 L22.3,38.4 L23.2,38.2 L23.5,37.7 L23.7,37.1 L24.1,36.6 L24.7,36.3 L25.2,36.0 L25.6,35.5 L26.0,35.0 L26.4,34.6 L27.1,34.4 L28.1,34.5 L29.0,34.5 L29.4,34.0 L29.7,33.5 L29.9,32.8 L30.8,32.9 L31.2,32.4 L31.0,31.4 L31.4,30.9 L31.7,30.3 L33.0,30.7 L33.6,30.5 L34.3,30.3 L35.0,30.1 L35.4,29.6 L36.0,29.3 L36.7,29.1 L36.8,28.3 L36.7,27.2 L37.0,26.5 L37.2,25.8 L37.9,25.6 L38.8,25.6 L39.0,24.7 L39.4,24.1 L40.2,24.0 L40.8,23.6 L41.3,23.1 L41.4,22.3 L41.4,21.2 L41.7,20.6 L42.0,19.9 L42.5,19.4 L43.1,19.0 L43.1,18.0 L43.7,17.6 L44.2,17.1 L45.2,16.9 L45.5,16.2 L45.4,15.3 L45.5,14.4 L45.7,13.6 L46.2,13.0 L46.3,12.2 L46.4,11.4 L46.7,10.6 L47.0,9.9 L47.5,9.4 L47.7,8.6 L47.8,7.8 L47.6,6.8 L46.9,5.5 L46.9,5.5 L45.4,5.4 L44.6,5.7 L43.8,6.0 L43.1,6.3 L42.5,6.8 L42.1,7.3 L41.9,7.9 L41.1,8.2 L40.4,8.5 L39.4,8.5 L38.8,8.9 L38.3,9.2 L38.0,9.8 L37.2,9.9 L36.5,10.2 L36.2,10.7 L36.2,11.6 L35.8,12.1 L35.4,12.6 L34.2,12.3 L33.4,12.4 L32.8,12.7 L32.3,13.1 L31.9,13.5 L31.4,14.0 L30.8,14.2 L30.4,14.8 L30.1,15.4 L30.0,16.2 L29.4,16.6 L28.2,16.2 L27.2,16.0 L26.7,16.5 L26.2,17.0 L25.8,17.5 L25.4,18.0 L25.0,18.6 L24.9,19.4 L24.9,20.4 L24.8,21.2 L24.1,21.5 L23.3,21.7 L22.4,21.7 L21.7,22.0 L21.6,22.9 L21.5,23.7 L21.2,24.5 L20.6,24.8 L20.5,25.7 L20.4,26.5 L20.4,27.4 L19.8,27.9 L18.9,28.1 L18.0,28.2 L17.8,29.0 L17.5,29.7 L17.5,30.6 L17.3,31.3 L17.1,32.1 L16.9,32.8 L16.8,33.7 L16.7,34.5 L16.3,35.1 L15.8,35.6 L15.5,36.3 L15.2,36.9 L15.3,37.8 L15.4,38.7 L15.6,39.7 L16.3,40.9Z"/><g fill="#fff"><circle cx="22.7" cy="31.7" r="1.2"/><circle cx="9.4" cy="47.9" r="0.9"/><circle cx="17.0" cy="36.6" r="1.0"/><circle cx="15.9" cy="38.0" r="1.2"/><circle cx="7.3" cy="49.6" r="1.2"/><circle cx="16.5" cy="38.2" r="1.2"/><circle cx="9.7" cy="45.4" r="1.1"/><circle cx="18.3" cy="38.7" r="0.7"/><circle cx="11.0" cy="46.2" r="0.9"/><circle cx="16.0" cy="40.7" r="1.1"/><circle cx="9.1" cy="49.3" r="1.1"/><circle cx="17.8" cy="29.6" r="1.2"/><circle cx="7.9" cy="47.4" r="1.1"/><circle cx="17.8" cy="38.1" r="0.6"/><circle cx="16.0" cy="40.3" r="0.6"/><circle cx="25.1" cy="28.1" r="0.5"/><circle cx="26.3" cy="33.1" r="1.3"/><circle cx="16.8" cy="37.5" r="0.7"/><circle cx="15.8" cy="39.0" r="0.8"/><circle cx="25.2" cy="27.6" r="0.5"/><circle cx="18.6" cy="40.6" r="1.3"/><circle cx="9.0" cy="47.4" r="1.3"/><circle cx="25.3" cy="29.5" r="0.9"/><circle cx="20.3" cy="34.0" r="0.6"/><circle cx="15.4" cy="45.8" r="1.2"/><circle cx="26.6" cy="30.0" r="1.1"/><circle cx="20.7" cy="39.2" r="1.1"/><circle cx="23.0" cy="33.8" r="0.5"/><circle cx="7.0" cy="50.2" r="0.6"/><circle cx="16.9" cy="43.3" r="0.9"/></g></svg><div style="left:677.70px;top:629.30px;width:13.20px;height:12.20px;background:#525252;"></div><svg style="position:absolute;left:677.70px;top:629.30px;overflow:visible;" width="13.2" height="12.2" viewBox="0 0 13.2 12.2"><path d="M10,3 L6.5,6.8" stroke="#f0f0f0" stroke-width="1.5" stroke-linecap="round"/><ellipse cx="5" cy="8" rx="2.2" ry="1.5" transform="rotate(-35 5 8)" fill="#f0f0f0"/><path d="M3.5,9.8 Q7,9.3 9.5,8.8" fill="none" stroke="#d0d0d0" stroke-width="0.7"/></svg><span class="t" style="left:167.75px;width:1000px;text-align:center;top:646.46px;font-size:6.9px;color:#cfcfcf;">#07 Dry Media</span><svg style="position:absolute;left:698.50px;top:587.00px;overflow:visible;" width="54.5" height="54.5" viewBox="0 0 54.5 54.5"><rect width="54.5" height="54.5" fill="#6c6c6c"/><g fill="#fff"><circle cx="24.2" cy="27.2" r="0.6"/><circle cx="8.2" cy="49.8" r="0.8"/><circle cx="18.1" cy="37.3" r="1.0"/><circle cx="26.8" cy="23.0" r="1.1"/><circle cx="11.9" cy="42.0" r="1.3"/><circle cx="9.9" cy="47.3" r="1.2"/><circle cx="10.0" cy="46.1" r="0.9"/><circle cx="40.8" cy="12.3" r="0.5"/><circle cx="10.4" cy="47.6" r="0.6"/><circle cx="46.9" cy="5.1" r="1.4"/><circle cx="11.0" cy="43.9" r="0.8"/><circle cx="32.8" cy="23.2" r="0.6"/><circle cx="36.6" cy="20.6" r="1.2"/><circle cx="22.9" cy="31.7" r="0.9"/><circle cx="29.4" cy="22.3" r="0.5"/><circle cx="37.2" cy="18.7" r="1.4"/><circle cx="46.5" cy="5.7" r="0.8"/><circle cx="34.1" cy="18.9" r="1.1"/><circle cx="11.5" cy="44.2" r="1.0"/><circle cx="41.7" cy="15.7" r="1.0"/><circle cx="9.1" cy="49.1" r="1.0"/><circle cx="13.9" cy="37.7" r="0.9"/><circle cx="22.1" cy="31.9" r="1.0"/><circle cx="13.0" cy="40.4" r="1.1"/><circle cx="9.1" cy="48.4" r="1.1"/><circle cx="10.0" cy="48.0" r="0.9"/><circle cx="14.4" cy="39.2" r="1.4"/><circle cx="28.2" cy="30.0" r="1.4"/><circle cx="14.2" cy="42.3" r="0.7"/><circle cx="37.3" cy="17.0" r="1.3"/><circle cx="8.3" cy="50.2" r="0.8"/><circle cx="18.5" cy="40.1" r="0.5"/><circle cx="8.3" cy="47.5" r="1.4"/><circle cx="23.3" cy="24.2" r="0.5"/><circle cx="20.0" cy="35.1" r="1.1"/><circle cx="12.9" cy="36.3" r="1.0"/><circle cx="24.9" cy="27.5" r="1.4"/><circle cx="43.3" cy="10.1" r="0.6"/><circle cx="18.8" cy="36.6" r="1.3"/><circle cx="26.5" cy="26.0" r="1.1"/><circle cx="36.3" cy="19.7" r="0.7"/><circle cx="36.4" cy="21.5" r="1.1"/><circle cx="12.8" cy="43.9" r="0.7"/><circle cx="22.8" cy="28.9" r="1.4"/><circle cx="26.6" cy="22.7" r="1.4"/><circle cx="36.1" cy="15.0" r="0.9"/><circle cx="33.5" cy="26.4" r="1.0"/><circle cx="18.4" cy="31.9" r="0.8"/><circle cx="37.1" cy="17.9" r="1.1"/><circle cx="44.0" cy="9.9" r="1.2"/><circle cx="44.8" cy="11.1" r="1.2"/><circle cx="20.4" cy="31.2" r="0.6"/><circle cx="18.9" cy="31.9" r="1.1"/><circle cx="32.9" cy="29.4" r="1.1"/><circle cx="10.3" cy="42.3" r="0.9"/><circle cx="15.6" cy="37.4" r="0.9"/><circle cx="18.9" cy="34.1" r="0.6"/><circle cx="17.9" cy="34.2" r="1.1"/><circle cx="36.5" cy="15.5" r="0.8"/><circle cx="8.2" cy="48.3" r="0.9"/><circle cx="25.6" cy="30.7" r="0.8"/><circle cx="17.8" cy="39.8" r="0.8"/><circle cx="46.1" cy="8.2" r="0.8"/><circle cx="14.5" cy="39.9" r="0.9"/><circle cx="16.6" cy="40.1" r="1.1"/><circle cx="12.4" cy="41.1" r="0.9"/><circle cx="32.5" cy="24.1" r="0.9"/><circle cx="41.6" cy="11.9" r="1.2"/><circle cx="13.1" cy="36.6" r="0.9"/><circle cx="34.0" cy="20.1" r="1.1"/></g></svg><div style="left:735.70px;top:629.30px;width:13.20px;height:12.20px;background:#525252;"></div><svg style="position:absolute;left:735.70px;top:629.30px;overflow:visible;" width="13.2" height="12.2" viewBox="0 0 13.2 12.2"><path d="M10,3 L6.5,6.8" stroke="#f0f0f0" stroke-width="1.5" stroke-linecap="round"/><ellipse cx="5" cy="8" rx="2.2" ry="1.5" transform="rotate(-35 5 8)" fill="#f0f0f0"/><path d="M3.5,9.8 Q7,9.3 9.5,8.8" fill="none" stroke="#d0d0d0" stroke-width="0.7"/></svg><span class="t" style="left:225.75px;width:1000px;text-align:center;top:646.46px;font-size:6.9px;color:#cfcfcf;">#08 Dry Media</span><svg style="position:absolute;left:756.50px;top:587.00px;overflow:visible;" width="54.5" height="54.5" viewBox="0 0 54.5 54.5"><rect width="54.5" height="54.5" fill="#6c6c6c"/><path fill="#ffffff" opacity="0.85" filter="url(#b1)" d="M6.5,49.1 L7.7,48.7 L8.5,48.2 L9.2,47.7 L10.0,47.1 L10.7,46.6 L11.3,46.1 L12.0,45.5 L12.7,45.0 L13.3,44.5 L14.0,44.0 L14.6,43.5 L15.3,43.0 L15.9,42.5 L16.6,42.1 L17.3,41.6 L17.9,41.1 L18.6,40.6 L19.2,40.2 L19.9,39.7 L20.6,39.3 L21.2,38.8 L21.9,38.4 L22.6,37.9 L23.3,37.5 L23.9,37.0 L24.6,36.6 L25.3,36.1 L26.0,35.7 L26.7,35.2 L27.4,34.8 L28.1,34.4 L28.8,33.9 L29.5,33.5 L30.2,33.0 L30.9,32.6 L31.5,31.9 L32.1,31.3 L32.6,30.6 L33.2,30.0 L33.7,29.3 L34.3,28.6 L34.9,28.0 L35.4,27.3 L36.0,26.6 L36.6,25.9 L37.1,25.3 L37.7,24.6 L38.3,23.8 L38.8,23.1 L39.4,22.4 L39.9,21.7 L40.4,21.0 L41.0,20.2 L41.5,19.5 L42.0,18.7 L42.5,17.9 L43.0,17.1 L43.5,16.3 L44.0,15.5 L44.4,14.7 L44.9,13.9 L45.3,13.1 L45.7,12.2 L46.1,11.3 L46.5,10.5 L46.8,9.6 L47.1,8.6 L47.4,7.7 L47.6,6.7 L47.4,5.5 L47.4,5.5 L46.2,5.7 L45.4,6.2 L44.6,6.8 L43.8,7.3 L43.0,7.8 L42.3,8.3 L41.6,8.8 L40.9,9.4 L40.2,9.9 L39.5,10.4 L38.8,10.9 L38.1,11.4 L37.4,11.9 L36.7,12.3 L36.0,12.8 L35.3,13.3 L34.6,13.8 L33.9,14.2 L33.2,14.7 L32.5,15.2 L31.8,15.6 L31.1,16.1 L30.4,16.5 L29.7,17.0 L28.9,17.4 L28.2,17.9 L27.5,18.3 L26.8,18.8 L26.1,19.2 L25.4,19.7 L24.7,20.1 L24.0,20.6 L23.2,21.0 L22.5,21.5 L21.8,21.9 L21.2,22.6 L20.7,23.2 L20.1,23.9 L19.5,24.6 L19.0,25.2 L18.4,25.9 L17.8,26.6 L17.3,27.2 L16.7,27.9 L16.2,28.6 L15.6,29.3 L15.1,30.0 L14.6,30.7 L14.0,31.4 L13.5,32.2 L13.0,32.9 L12.5,33.6 L12.0,34.4 L11.5,35.1 L11.0,35.9 L10.6,36.7 L10.1,37.5 L9.7,38.3 L9.2,39.1 L8.8,39.9 L8.4,40.7 L8.1,41.5 L7.7,42.4 L7.4,43.3 L7.1,44.1 L6.8,45.0 L6.6,45.9 L6.4,46.9 L6.3,47.9 L6.5,49.1Z"/><path fill="#ffffff" opacity="1" filter="url(#tx2)" d="M6.5,49.1 L8.3,49.1 L9.3,48.7 L10.1,48.2 L10.9,47.8 L11.7,47.3 L12.4,46.8 L13.1,46.3 L13.8,45.9 L14.5,45.4 L15.2,45.0 L15.8,44.5 L16.5,44.0 L17.2,43.6 L17.8,43.1 L18.5,42.7 L19.2,42.3 L19.8,41.8 L20.5,41.4 L21.2,41.0 L21.8,40.5 L22.5,40.1 L23.2,39.7 L23.9,39.3 L24.5,38.8 L25.2,38.4 L25.9,38.0 L26.6,37.6 L27.3,37.1 L28.0,36.7 L28.7,36.3 L29.4,35.8 L30.1,35.4 L30.8,35.0 L31.5,34.5 L32.2,34.1 L32.8,33.4 L33.3,32.8 L33.9,32.1 L34.5,31.5 L35.0,30.8 L35.6,30.1 L36.2,29.4 L36.7,28.7 L37.3,28.0 L37.8,27.3 L38.4,26.6 L38.9,25.9 L39.5,25.2 L40.0,24.5 L40.6,23.7 L41.1,23.0 L41.7,22.2 L42.2,21.4 L42.7,20.7 L43.2,19.9 L43.7,19.1 L44.2,18.2 L44.7,17.4 L45.1,16.6 L45.6,15.7 L46.0,14.9 L46.4,14.0 L46.8,13.1 L47.1,12.2 L47.5,11.2 L47.8,10.2 L48.0,9.2 L48.1,8.2 L48.2,7.1 L47.4,5.5 L47.4,5.5 L45.6,5.4 L44.6,5.7 L43.7,6.1 L42.9,6.6 L42.1,7.1 L41.3,7.5 L40.5,8.0 L39.8,8.5 L39.1,8.9 L38.3,9.4 L37.6,9.8 L36.9,10.3 L36.2,10.8 L35.5,11.2 L34.8,11.6 L34.1,12.1 L33.4,12.5 L32.6,13.0 L31.9,13.4 L31.2,13.8 L30.5,14.3 L29.8,14.7 L29.1,15.1 L28.4,15.6 L27.7,16.0 L27.0,16.4 L26.3,16.9 L25.5,17.3 L24.8,17.8 L24.1,18.2 L23.4,18.6 L22.7,19.1 L21.9,19.5 L21.2,20.0 L20.5,20.4 L19.9,21.1 L19.4,21.7 L18.8,22.4 L18.2,23.1 L17.7,23.8 L17.1,24.4 L16.6,25.1 L16.0,25.8 L15.5,26.5 L14.9,27.2 L14.4,27.9 L13.8,28.7 L13.3,29.4 L12.8,30.1 L12.2,30.9 L11.7,31.7 L11.2,32.4 L10.7,33.2 L10.3,34.0 L9.8,34.8 L9.3,35.6 L8.9,36.4 L8.4,37.2 L8.0,38.1 L7.6,38.9 L7.3,39.8 L6.9,40.7 L6.6,41.6 L6.3,42.5 L6.1,43.4 L5.8,44.4 L5.7,45.4 L5.6,46.4 L5.7,47.5 L6.5,49.1Z"/></svg><div style="left:793.70px;top:629.30px;width:13.20px;height:12.20px;background:#525252;"></div><svg style="position:absolute;left:793.70px;top:629.30px;overflow:visible;" width="13.2" height="12.2" viewBox="0 0 13.2 12.2"><path d="M10,3 L6.5,6.8" stroke="#f0f0f0" stroke-width="1.5" stroke-linecap="round"/><ellipse cx="5" cy="8" rx="2.2" ry="1.5" transform="rotate(-35 5 8)" fill="#f0f0f0"/><path d="M3.5,9.8 Q7,9.3 9.5,8.8" fill="none" stroke="#d0d0d0" stroke-width="0.7"/></svg><span class="t" style="left:283.75px;width:1000px;text-align:center;top:646.46px;font-size:6.9px;color:#cfcfcf;">#09 Dry Media</span><svg style="position:absolute;left:814.50px;top:587.00px;overflow:visible;" width="54.5" height="54.5" viewBox="0 0 54.5 54.5"><rect width="54.5" height="54.5" fill="#6c6c6c"/><path fill="#ffffff" opacity="0.8" filter="url(#b1)" d="M8.2,48.0 L9.2,47.6 L10.0,47.0 L10.6,46.5 L11.3,45.9 L11.9,45.4 L12.5,44.9 L13.1,44.3 L13.7,43.8 L14.3,43.3 L14.9,42.8 L15.5,42.4 L16.1,41.9 L16.7,41.4 L17.3,41.0 L17.9,40.5 L18.5,40.1 L19.1,39.6 L19.8,39.2 L20.4,38.8 L21.0,38.4 L21.6,38.0 L22.2,37.5 L22.9,37.1 L23.5,36.7 L24.1,36.3 L24.8,35.9 L25.4,35.5 L26.1,35.1 L26.7,34.7 L27.4,34.3 L28.0,33.9 L28.7,33.5 L29.3,33.1 L30.0,32.7 L30.7,32.2 L31.2,31.7 L31.8,31.1 L32.3,30.5 L32.8,29.9 L33.4,29.3 L33.9,28.6 L34.5,28.0 L35.0,27.4 L35.6,26.8 L36.1,26.1 L36.7,25.5 L37.2,24.8 L37.7,24.2 L38.3,23.5 L38.8,22.8 L39.3,22.1 L39.8,21.4 L40.3,20.7 L40.9,20.0 L41.3,19.3 L41.8,18.6 L42.3,17.8 L42.8,17.0 L43.2,16.3 L43.6,15.5 L44.1,14.7 L44.5,13.9 L44.9,13.1 L45.2,12.2 L45.6,11.4 L45.9,10.5 L46.1,9.6 L46.4,8.7 L46.5,7.7 L46.3,6.5 L46.3,6.5 L45.2,6.9 L44.4,7.4 L43.7,7.9 L43.0,8.5 L42.3,9.0 L41.6,9.5 L40.9,10.0 L40.3,10.5 L39.6,11.0 L39.0,11.5 L38.3,12.0 L37.7,12.5 L37.0,12.9 L36.4,13.4 L35.7,13.9 L35.1,14.3 L34.4,14.7 L33.8,15.2 L33.1,15.6 L32.5,16.0 L31.8,16.5 L31.1,16.9 L30.5,17.3 L29.8,17.7 L29.1,18.1 L28.5,18.5 L27.8,18.9 L27.1,19.3 L26.5,19.8 L25.8,20.2 L25.1,20.6 L24.4,21.0 L23.7,21.4 L23.1,21.8 L22.4,22.3 L21.8,22.8 L21.3,23.4 L20.8,24.1 L20.2,24.7 L19.7,25.3 L19.1,25.9 L18.6,26.5 L18.0,27.2 L17.5,27.8 L17.0,28.4 L16.5,29.1 L15.9,29.8 L15.4,30.4 L14.9,31.1 L14.4,31.8 L13.9,32.5 L13.5,33.2 L13.0,33.9 L12.5,34.6 L12.1,35.3 L11.6,36.1 L11.2,36.8 L10.8,37.6 L10.4,38.4 L10.0,39.1 L9.7,39.9 L9.4,40.7 L9.0,41.6 L8.7,42.4 L8.5,43.2 L8.3,44.1 L8.1,45.0 L7.9,45.9 L7.9,46.8 L8.2,48.0Z"/><path fill="#ffffff" opacity="1" filter="url(#tx1)" d="M8.2,48.0 L9.8,47.9 L10.7,47.4 L11.5,47.0 L12.2,46.5 L12.9,46.0 L13.6,45.5 L14.2,45.1 L14.9,44.6 L15.5,44.2 L16.1,43.7 L16.7,43.3 L17.3,42.9 L18.0,42.4 L18.6,42.0 L19.2,41.6 L19.8,41.2 L20.4,40.8 L21.0,40.4 L21.6,40.0 L22.2,39.6 L22.9,39.2 L23.5,38.9 L24.1,38.5 L24.7,38.1 L25.4,37.7 L26.0,37.3 L26.7,36.9 L27.3,36.6 L28.0,36.2 L28.6,35.8 L29.3,35.4 L29.9,35.0 L30.6,34.6 L31.3,34.2 L32.0,33.8 L32.5,33.2 L33.0,32.6 L33.6,32.0 L34.1,31.4 L34.6,30.7 L35.2,30.1 L35.7,29.5 L36.3,28.8 L36.8,28.2 L37.3,27.5 L37.9,26.9 L38.4,26.2 L39.0,25.5 L39.5,24.8 L40.0,24.1 L40.5,23.4 L41.0,22.7 L41.6,21.9 L42.0,21.2 L42.5,20.4 L43.0,19.7 L43.5,18.9 L43.9,18.1 L44.4,17.3 L44.8,16.4 L45.2,15.6 L45.6,14.7 L45.9,13.9 L46.2,13.0 L46.5,12.1 L46.8,11.1 L47.0,10.2 L47.1,9.1 L47.1,8.1 L46.3,6.5 L46.3,6.5 L44.6,6.5 L43.7,6.9 L42.8,7.4 L42.1,7.8 L41.3,8.3 L40.6,8.8 L39.9,9.2 L39.2,9.7 L38.5,10.1 L37.8,10.6 L37.2,11.0 L36.5,11.4 L35.8,11.9 L35.2,12.3 L34.5,12.7 L33.9,13.1 L33.2,13.5 L32.6,13.9 L31.9,14.3 L31.2,14.7 L30.6,15.1 L29.9,15.5 L29.2,15.9 L28.6,16.3 L27.9,16.7 L27.2,17.1 L26.6,17.5 L25.9,17.9 L25.2,18.3 L24.5,18.7 L23.9,19.1 L23.2,19.5 L22.5,19.9 L21.8,20.3 L21.1,20.7 L20.6,21.3 L20.0,21.9 L19.5,22.5 L18.9,23.2 L18.4,23.8 L17.9,24.4 L17.3,25.1 L16.8,25.7 L16.3,26.4 L15.7,27.1 L15.2,27.7 L14.7,28.4 L14.2,29.1 L13.7,29.8 L13.2,30.5 L12.7,31.2 L12.2,32.0 L11.7,32.7 L11.3,33.5 L10.8,34.2 L10.4,35.0 L10.0,35.8 L9.6,36.6 L9.2,37.4 L8.9,38.3 L8.5,39.1 L8.2,40.0 L7.9,40.8 L7.7,41.7 L7.5,42.6 L7.3,43.5 L7.2,44.5 L7.2,45.5 L7.3,46.5 L8.2,48.0Z"/></svg><div style="left:851.70px;top:629.30px;width:13.20px;height:12.20px;background:#525252;"></div><svg style="position:absolute;left:851.70px;top:629.30px;overflow:visible;" width="13.2" height="12.2" viewBox="0 0 13.2 12.2"><path d="M10,3 L6.5,6.8" stroke="#f0f0f0" stroke-width="1.5" stroke-linecap="round"/><ellipse cx="5" cy="8" rx="2.2" ry="1.5" transform="rotate(-35 5 8)" fill="#f0f0f0"/><path d="M3.5,9.8 Q7,9.3 9.5,8.8" fill="none" stroke="#d0d0d0" stroke-width="0.7"/></svg><span class="t" style="left:341.75px;width:1000px;text-align:center;top:646.46px;font-size:6.9px;color:#cfcfcf;">#10 Dry Media</span><svg style="position:absolute;left:872.50px;top:587.00px;overflow:visible;" width="54.5" height="54.5" viewBox="0 0 54.5 54.5"><rect width="54.5" height="54.5" fill="#6c6c6c"/><path fill="#ffffff" opacity="1" d="M9.3,51.2 L9.5,50.1 L9.8,49.0 L10.1,47.9 L10.4,46.9 L10.8,45.9 L11.1,45.0 L11.5,44.1 L11.9,43.2 L12.3,42.4 L12.7,41.7 L13.2,40.9 L13.6,40.2 L14.1,39.5 L14.6,38.9 L15.1,38.3 L15.6,37.7 L16.2,37.1 L16.7,36.5 L17.3,36.0 L17.9,35.5 L18.5,35.0 L19.1,34.5 L19.7,34.1 L20.3,33.6 L20.9,33.2 L21.6,32.8 L22.2,32.4 L22.9,32.0 L23.6,31.6 L24.3,31.2 L25.0,30.8 L25.7,30.4 L26.4,30.1 L27.1,29.7 L27.8,29.3 L28.5,28.8 L29.2,28.3 L29.8,27.8 L30.5,27.4 L31.2,26.9 L31.9,26.4 L32.6,25.8 L33.3,25.3 L34.0,24.8 L34.6,24.2 L35.3,23.7 L36.0,23.1 L36.7,22.5 L37.3,21.9 L38.0,21.2 L38.6,20.6 L39.2,19.9 L39.9,19.2 L40.5,18.5 L41.0,17.8 L41.6,17.0 L42.2,16.2 L42.7,15.4 L43.2,14.6 L43.7,13.7 L44.2,12.8 L44.7,11.9 L45.1,10.9 L45.5,9.9 L45.9,8.9 L46.3,7.9 L46.6,6.8 L46.9,5.6 L47.2,4.5 L47.4,3.3 L47.4,3.3 L46.9,4.4 L46.5,5.5 L46.0,6.5 L45.5,7.5 L45.0,8.5 L44.5,9.4 L43.9,10.3 L43.4,11.2 L42.8,12.0 L42.3,12.7 L41.7,13.5 L41.1,14.2 L40.5,14.9 L39.9,15.5 L39.2,16.2 L38.6,16.7 L37.9,17.3 L37.3,17.9 L36.6,18.4 L36.0,18.9 L35.3,19.4 L34.6,19.9 L33.9,20.4 L33.2,20.8 L32.5,21.2 L31.8,21.7 L31.1,22.1 L30.4,22.5 L29.7,22.9 L28.9,23.3 L28.2,23.7 L27.5,24.1 L26.8,24.4 L26.0,24.8 L25.3,25.2 L24.6,25.7 L23.9,26.2 L23.3,26.7 L22.6,27.2 L21.9,27.7 L21.3,28.2 L20.6,28.7 L20.0,29.2 L19.3,29.8 L18.7,30.3 L18.1,30.9 L17.5,31.5 L16.9,32.1 L16.3,32.7 L15.7,33.3 L15.2,34.0 L14.6,34.7 L14.1,35.4 L13.6,36.1 L13.1,36.8 L12.7,37.6 L12.3,38.4 L11.9,39.2 L11.5,40.0 L11.1,40.9 L10.8,41.8 L10.5,42.7 L10.2,43.7 L10.0,44.6 L9.8,45.7 L9.6,46.7 L9.5,47.8 L9.3,48.9 L9.3,50.0 L9.3,51.2Z"/></svg><div style="left:909.70px;top:629.30px;width:13.20px;height:12.20px;background:#525252;"></div><svg style="position:absolute;left:909.70px;top:629.30px;overflow:visible;" width="13.2" height="12.2" viewBox="0 0 13.2 12.2"><path d="M10,3 L6.5,6.8" stroke="#f0f0f0" stroke-width="1.5" stroke-linecap="round"/><ellipse cx="5" cy="8" rx="2.2" ry="1.5" transform="rotate(-35 5 8)" fill="#f0f0f0"/><path d="M3.5,9.8 Q7,9.3 9.5,8.8" fill="none" stroke="#d0d0d0" stroke-width="0.7"/></svg><span class="t" style="left:399.75px;width:1000px;text-align:center;top:646.46px;font-size:6.9px;color:#cfcfcf;">#01 Inker Soft</span><svg style="position:absolute;left:930.50px;top:587.00px;overflow:visible;" width="54.5" height="54.5" viewBox="0 0 54.5 54.5"><rect width="54.5" height="54.5" fill="#6c6c6c"/><path fill="#ffffff" opacity="1" d="M9.3,51.2 L9.5,50.1 L9.7,49.0 L10.0,47.9 L10.3,46.9 L10.6,45.9 L10.9,44.9 L11.3,44.0 L11.7,43.2 L12.0,42.3 L12.5,41.5 L12.9,40.8 L13.3,40.0 L13.8,39.3 L14.3,38.7 L14.8,38.0 L15.3,37.4 L15.8,36.8 L16.4,36.2 L16.9,35.7 L17.5,35.1 L18.1,34.6 L18.7,34.1 L19.3,33.7 L19.9,33.2 L20.6,32.7 L21.2,32.3 L21.9,31.9 L22.5,31.4 L23.2,31.0 L23.9,30.6 L24.6,30.2 L25.3,29.8 L26.0,29.4 L26.7,29.0 L27.4,28.6 L28.1,28.2 L28.8,27.7 L29.4,27.2 L30.1,26.7 L30.8,26.3 L31.5,25.8 L32.2,25.3 L32.9,24.8 L33.6,24.3 L34.3,23.7 L35.0,23.2 L35.6,22.6 L36.3,22.0 L37.0,21.5 L37.6,20.8 L38.3,20.2 L38.9,19.6 L39.5,18.9 L40.1,18.2 L40.7,17.5 L41.3,16.8 L41.9,16.0 L42.4,15.2 L43.0,14.4 L43.5,13.5 L44.0,12.7 L44.5,11.8 L44.9,10.8 L45.4,9.9 L45.8,8.9 L46.2,7.8 L46.5,6.7 L46.9,5.6 L47.2,4.5 L47.4,3.3 L47.4,3.3 L47.0,4.4 L46.5,5.5 L46.1,6.6 L45.6,7.6 L45.1,8.6 L44.7,9.5 L44.1,10.4 L43.6,11.3 L43.1,12.1 L42.5,12.9 L41.9,13.7 L41.4,14.4 L40.8,15.1 L40.1,15.8 L39.5,16.4 L38.9,17.0 L38.3,17.6 L37.6,18.2 L37.0,18.8 L36.3,19.3 L35.6,19.8 L34.9,20.3 L34.3,20.8 L33.6,21.3 L32.9,21.7 L32.2,22.2 L31.5,22.6 L30.8,23.0 L30.0,23.5 L29.3,23.9 L28.6,24.3 L27.9,24.7 L27.2,25.1 L26.4,25.5 L25.7,25.9 L25.0,26.4 L24.3,26.8 L23.7,27.3 L23.0,27.8 L22.3,28.3 L21.7,28.7 L21.0,29.2 L20.3,29.8 L19.7,30.3 L19.1,30.8 L18.4,31.4 L17.8,31.9 L17.2,32.5 L16.6,33.1 L16.1,33.7 L15.5,34.3 L15.0,35.0 L14.5,35.7 L14.0,36.3 L13.5,37.1 L13.0,37.8 L12.6,38.6 L12.2,39.4 L11.8,40.2 L11.4,41.0 L11.1,41.9 L10.7,42.8 L10.4,43.7 L10.2,44.7 L9.9,45.7 L9.7,46.7 L9.6,47.8 L9.4,48.9 L9.3,50.0 L9.3,51.2Z"/></svg><div style="left:967.70px;top:629.30px;width:13.20px;height:12.20px;background:#525252;"></div><svg style="position:absolute;left:967.70px;top:629.30px;overflow:visible;" width="13.2" height="12.2" viewBox="0 0 13.2 12.2"><path d="M10,3 L6.5,6.8" stroke="#f0f0f0" stroke-width="1.5" stroke-linecap="round"/><ellipse cx="5" cy="8" rx="2.2" ry="1.5" transform="rotate(-35 5 8)" fill="#f0f0f0"/><path d="M3.5,9.8 Q7,9.3 9.5,8.8" fill="none" stroke="#d0d0d0" stroke-width="0.7"/></svg><span class="t" style="left:457.75px;width:1000px;text-align:center;top:646.46px;font-size:6.9px;color:#cfcfcf;">#02 Inker Soft</span><svg style="position:absolute;left:988.50px;top:587.00px;overflow:visible;" width="54.5" height="54.5" viewBox="0 0 54.5 54.5"><rect width="54.5" height="54.5" fill="#6c6c6c"/><path fill="#ffffff" opacity="1" d="M9.3,50.7 L9.7,49.6 L10.0,48.6 L10.4,47.6 L10.8,46.7 L11.2,45.8 L11.6,44.9 L12.1,44.1 L12.5,43.3 L13.0,42.6 L13.5,41.8 L14.0,41.1 L14.5,40.5 L15.0,39.9 L15.5,39.3 L16.0,38.7 L16.6,38.1 L17.1,37.6 L17.7,37.1 L18.3,36.6 L18.9,36.1 L19.5,35.6 L20.1,35.2 L20.7,34.8 L21.3,34.3 L22.0,33.9 L22.6,33.5 L23.3,33.1 L23.9,32.7 L24.6,32.3 L25.3,32.0 L26.0,31.6 L26.7,31.2 L27.4,30.8 L28.1,30.4 L28.8,30.1 L29.6,29.7 L30.3,29.3 L31.0,28.9 L31.7,28.4 L32.4,27.8 L33.0,27.3 L33.7,26.7 L34.3,26.1 L35.0,25.5 L35.6,24.9 L36.3,24.2 L36.9,23.6 L37.5,22.9 L38.2,22.3 L38.8,21.6 L39.4,20.9 L40.0,20.2 L40.6,19.4 L41.1,18.6 L41.7,17.9 L42.2,17.1 L42.7,16.2 L43.3,15.4 L43.7,14.5 L44.2,13.6 L44.6,12.7 L45.1,11.8 L45.5,10.8 L45.8,9.8 L46.2,8.8 L46.5,7.8 L46.8,6.7 L47.1,5.6 L47.3,4.5 L47.4,3.3 L47.4,3.3 L46.8,4.3 L46.2,5.3 L45.7,6.2 L45.1,7.1 L44.5,8.0 L44.0,8.8 L43.4,9.6 L42.8,10.4 L42.2,11.1 L41.6,11.8 L40.9,12.5 L40.3,13.2 L39.7,13.8 L39.0,14.4 L38.4,14.9 L37.7,15.5 L37.1,16.0 L36.4,16.5 L35.7,17.0 L35.1,17.4 L34.4,17.9 L33.7,18.3 L33.0,18.8 L32.3,19.2 L31.6,19.6 L30.9,20.0 L30.2,20.4 L29.5,20.7 L28.7,21.1 L28.0,21.5 L27.3,21.9 L26.6,22.3 L26.0,22.8 L25.3,23.4 L24.7,23.9 L24.1,24.4 L23.4,25.0 L22.8,25.5 L22.1,26.1 L21.5,26.6 L20.9,27.2 L20.2,27.8 L19.6,28.3 L19.0,28.9 L18.4,29.5 L17.8,30.2 L17.2,30.8 L16.6,31.4 L16.1,32.1 L15.5,32.8 L15.0,33.5 L14.5,34.2 L14.0,34.9 L13.5,35.7 L13.0,36.4 L12.6,37.2 L12.2,38.0 L11.8,38.9 L11.4,39.7 L11.0,40.6 L10.7,41.5 L10.4,42.4 L10.2,43.3 L9.9,44.3 L9.7,45.3 L9.6,46.3 L9.4,47.4 L9.3,48.4 L9.2,49.5 L9.3,50.7Z"/></svg><div style="left:1025.70px;top:629.30px;width:13.20px;height:12.20px;background:#525252;"></div><svg style="position:absolute;left:1025.70px;top:629.30px;overflow:visible;" width="13.2" height="12.2" viewBox="0 0 13.2 12.2"><path d="M10,3 L6.5,6.8" stroke="#f0f0f0" stroke-width="1.5" stroke-linecap="round"/><ellipse cx="5" cy="8" rx="2.2" ry="1.5" transform="rotate(-35 5 8)" fill="#f0f0f0"/><path d="M3.5,9.8 Q7,9.3 9.5,8.8" fill="none" stroke="#d0d0d0" stroke-width="0.7"/></svg><span class="t" style="left:515.75px;width:1000px;text-align:center;top:646.46px;font-size:6.9px;color:#cfcfcf;">#03 Inker Bleed</span><svg style="position:absolute;left:1046.50px;top:587.00px;overflow:visible;" width="54.5" height="54.5" viewBox="0 0 54.5 54.5"><rect width="54.5" height="54.5" fill="#6c6c6c"/><path fill="#ffffff" opacity="1" d="M9.3,51.2 L9.6,50.1 L9.9,49.1 L10.3,48.1 L10.6,47.1 L11.0,46.2 L11.4,45.3 L11.8,44.4 L12.2,43.6 L12.7,42.8 L13.1,42.1 L13.6,41.4 L14.1,40.7 L14.6,40.0 L15.1,39.3 L15.6,38.7 L16.1,38.1 L16.7,37.6 L17.2,37.0 L17.8,36.5 L18.4,36.0 L19.0,35.5 L19.6,35.0 L20.2,34.5 L20.8,34.0 L21.4,33.6 L22.1,33.1 L22.7,32.7 L23.4,32.3 L24.1,31.9 L24.7,31.5 L25.4,31.0 L26.1,30.6 L26.8,30.2 L27.5,29.8 L28.2,29.4 L28.9,28.9 L29.5,28.4 L30.2,27.9 L30.8,27.3 L31.5,26.8 L32.2,26.3 L32.8,25.7 L33.5,25.2 L34.2,24.6 L34.8,24.0 L35.5,23.4 L36.1,22.8 L36.8,22.2 L37.4,21.6 L38.0,20.9 L38.7,20.3 L39.3,19.6 L39.9,18.9 L40.4,18.2 L41.0,17.4 L41.6,16.7 L42.1,15.9 L42.7,15.1 L43.2,14.2 L43.7,13.4 L44.2,12.5 L44.6,11.6 L45.0,10.7 L45.5,9.7 L45.9,8.7 L46.2,7.7 L46.6,6.6 L46.9,5.5 L47.2,4.4 L47.4,3.3 L47.4,3.3 L46.9,4.3 L46.4,5.4 L45.9,6.4 L45.4,7.3 L44.9,8.2 L44.3,9.1 L43.8,10.0 L43.2,10.8 L42.7,11.6 L42.1,12.3 L41.5,13.0 L40.9,13.7 L40.3,14.4 L39.7,15.1 L39.0,15.7 L38.4,16.3 L37.8,16.8 L37.1,17.4 L36.5,17.9 L35.8,18.5 L35.1,19.0 L34.5,19.5 L33.8,19.9 L33.1,20.4 L32.4,20.9 L31.7,21.3 L31.0,21.8 L30.3,22.2 L29.6,22.6 L28.9,23.0 L28.2,23.4 L27.5,23.9 L26.7,24.3 L26.0,24.7 L25.3,25.1 L24.7,25.6 L24.0,26.1 L23.4,26.7 L22.7,27.2 L22.1,27.7 L21.4,28.3 L20.8,28.8 L20.1,29.4 L19.5,29.9 L18.9,30.5 L18.3,31.1 L17.7,31.7 L17.1,32.4 L16.6,33.0 L16.0,33.6 L15.5,34.3 L14.9,35.0 L14.4,35.7 L13.9,36.4 L13.5,37.2 L13.0,37.9 L12.6,38.7 L12.2,39.5 L11.8,40.4 L11.4,41.2 L11.1,42.1 L10.7,43.0 L10.5,43.9 L10.2,44.9 L10.0,45.9 L9.7,46.9 L9.6,47.9 L9.4,49.0 L9.3,50.1 L9.3,51.2Z"/></svg><div style="left:1083.70px;top:629.30px;width:13.20px;height:12.20px;background:#525252;"></div><svg style="position:absolute;left:1083.70px;top:629.30px;overflow:visible;" width="13.2" height="12.2" viewBox="0 0 13.2 12.2"><path d="M10,3 L6.5,6.8" stroke="#f0f0f0" stroke-width="1.5" stroke-linecap="round"/><ellipse cx="5" cy="8" rx="2.2" ry="1.5" transform="rotate(-35 5 8)" fill="#f0f0f0"/><path d="M3.5,9.8 Q7,9.3 9.5,8.8" fill="none" stroke="#d0d0d0" stroke-width="0.7"/></svg><span class="t" style="left:573.75px;width:1000px;text-align:center;top:646.46px;font-size:6.9px;color:#cfcfcf;">#04 Inker Bleed</span><svg style="position:absolute;left:1104.50px;top:587.00px;overflow:visible;" width="54.5" height="54.5" viewBox="0 0 54.5 54.5"><rect width="54.5" height="54.5" fill="#6c6c6c"/><g><path fill="#ffffff" opacity="0.6" d="M6.2,48.2 L6.5,47.2 L6.9,46.2 L7.2,45.3 L7.6,44.4 L8.0,43.6 L8.4,42.7 L8.8,41.9 L9.2,41.2 L9.7,40.4 L10.2,39.7 L10.7,39.1 L11.2,38.4 L11.7,37.8 L12.2,37.1 L12.8,36.6 L13.3,36.0 L13.9,35.4 L14.5,34.9 L15.1,34.4 L15.7,33.9 L16.3,33.4 L16.9,32.9 L17.5,32.4 L18.2,32.0 L18.8,31.5 L19.5,31.1 L20.2,30.7 L20.9,30.2 L21.5,29.8 L22.2,29.4 L22.9,29.0 L23.6,28.6 L24.4,28.2 L25.1,27.8 L25.8,27.4 L26.5,26.9 L27.1,26.4 L27.8,25.9 L28.5,25.4 L29.2,24.8 L29.8,24.3 L30.5,23.8 L31.2,23.2 L31.9,22.7 L32.5,22.1 L33.2,21.6 L33.9,21.0 L34.5,20.4 L35.2,19.8 L35.8,19.2 L36.5,18.6 L37.1,17.9 L37.7,17.3 L38.3,16.6 L38.9,15.9 L39.5,15.2 L40.1,14.4 L40.6,13.7 L41.2,12.9 L41.7,12.1 L42.2,11.3 L42.7,10.5 L43.2,9.6 L43.7,8.7 L44.1,7.8 L44.5,6.9 L44.9,5.9 L45.3,5.0 L45.6,3.9 L46.0,2.9 L46.0,2.9 L45.5,3.9 L45.0,4.8 L44.5,5.7 L44.0,6.6 L43.4,7.5 L42.9,8.3 L42.3,9.1 L41.8,9.8 L41.2,10.6 L40.6,11.3 L40.0,12.0 L39.4,12.6 L38.7,13.3 L38.1,13.9 L37.5,14.5 L36.8,15.0 L36.1,15.6 L35.5,16.1 L34.8,16.7 L34.1,17.2 L33.4,17.7 L32.7,18.1 L32.0,18.6 L31.3,19.1 L30.6,19.5 L29.9,20.0 L29.2,20.4 L28.5,20.8 L27.8,21.2 L27.0,21.6 L26.3,22.1 L25.6,22.5 L24.9,22.9 L24.1,23.3 L23.4,23.7 L22.7,24.2 L22.1,24.7 L21.4,25.2 L20.7,25.7 L20.1,26.3 L19.4,26.8 L18.8,27.3 L18.1,27.9 L17.5,28.4 L16.8,29.0 L16.2,29.5 L15.6,30.1 L15.0,30.7 L14.4,31.3 L13.8,31.9 L13.3,32.6 L12.7,33.2 L12.2,33.9 L11.7,34.6 L11.2,35.3 L10.7,36.0 L10.2,36.7 L9.8,37.5 L9.4,38.2 L8.9,39.0 L8.6,39.8 L8.2,40.7 L7.9,41.5 L7.6,42.4 L7.3,43.3 L7.0,44.2 L6.8,45.2 L6.5,46.1 L6.4,47.1 L6.2,48.2Z"/><path fill="#ffffff" opacity="0.6" d="M7.5,49.5 L7.8,48.5 L8.2,47.5 L8.5,46.5 L8.9,45.6 L9.2,44.8 L9.6,43.9 L10.1,43.1 L10.5,42.3 L10.9,41.5 L11.4,40.8 L11.9,40.1 L12.4,39.4 L12.9,38.8 L13.4,38.2 L13.9,37.6 L14.5,37.0 L15.0,36.4 L15.6,35.8 L16.2,35.3 L16.8,34.8 L17.4,34.3 L18.0,33.8 L18.6,33.3 L19.2,32.9 L19.9,32.4 L20.5,31.9 L21.2,31.5 L21.8,31.1 L22.5,30.6 L23.2,30.2 L23.9,29.8 L24.6,29.4 L25.2,29.0 L26.0,28.5 L26.7,28.1 L27.3,27.6 L28.0,27.1 L28.6,26.6 L29.3,26.1 L29.9,25.5 L30.6,25.0 L31.2,24.5 L31.9,23.9 L32.6,23.3 L33.2,22.8 L33.9,22.2 L34.5,21.6 L35.1,21.0 L35.8,20.4 L36.4,19.8 L37.0,19.1 L37.6,18.5 L38.2,17.8 L38.8,17.1 L39.4,16.4 L40.0,15.7 L40.5,14.9 L41.1,14.2 L41.6,13.4 L42.1,12.6 L42.6,11.7 L43.1,10.9 L43.5,10.0 L44.0,9.1 L44.4,8.2 L44.8,7.2 L45.2,6.3 L45.6,5.3 L45.9,4.2 L46.2,3.1 L46.2,3.1 L45.7,4.2 L45.2,5.1 L44.8,6.1 L44.2,7.0 L43.7,7.8 L43.2,8.7 L42.6,9.5 L42.1,10.3 L41.5,11.0 L40.9,11.7 L40.4,12.4 L39.7,13.1 L39.1,13.8 L38.5,14.4 L37.9,15.0 L37.3,15.6 L36.6,16.2 L36.0,16.7 L35.3,17.3 L34.6,17.8 L34.0,18.3 L33.3,18.8 L32.6,19.3 L31.9,19.7 L31.2,20.2 L30.5,20.7 L29.8,21.1 L29.1,21.5 L28.4,22.0 L27.7,22.4 L27.0,22.8 L26.3,23.2 L25.6,23.7 L24.9,24.1 L24.2,24.5 L23.5,25.0 L22.9,25.5 L22.2,26.1 L21.6,26.6 L20.9,27.1 L20.3,27.7 L19.7,28.2 L19.0,28.8 L18.4,29.3 L17.8,29.9 L17.2,30.5 L16.6,31.1 L16.0,31.7 L15.5,32.3 L14.9,32.9 L14.3,33.6 L13.8,34.2 L13.3,34.9 L12.8,35.6 L12.3,36.3 L11.8,37.0 L11.4,37.8 L11.0,38.5 L10.5,39.3 L10.2,40.1 L9.8,41.0 L9.4,41.8 L9.1,42.7 L8.8,43.6 L8.5,44.5 L8.3,45.4 L8.0,46.4 L7.8,47.4 L7.7,48.4 L7.5,49.5Z"/><path fill="#ffffff" opacity="0.6" d="M8.8,50.8 L9.1,49.8 L9.5,48.7 L9.8,47.8 L10.1,46.8 L10.5,45.9 L10.9,45.1 L11.3,44.2 L11.7,43.4 L12.2,42.7 L12.6,41.9 L13.1,41.2 L13.6,40.5 L14.1,39.8 L14.6,39.2 L15.1,38.6 L15.6,37.9 L16.2,37.4 L16.7,36.8 L17.3,36.3 L17.9,35.7 L18.5,35.2 L19.1,34.7 L19.7,34.2 L20.3,33.7 L20.9,33.3 L21.5,32.8 L22.2,32.3 L22.8,31.9 L23.5,31.5 L24.1,31.0 L24.8,30.6 L25.5,30.2 L26.1,29.7 L26.8,29.3 L27.5,28.9 L28.1,28.4 L28.8,27.8 L29.4,27.3 L30.0,26.8 L30.7,26.2 L31.3,25.7 L32.0,25.1 L32.6,24.6 L33.2,24.0 L33.9,23.4 L34.5,22.8 L35.1,22.2 L35.7,21.6 L36.4,21.0 L37.0,20.4 L37.6,19.7 L38.2,19.0 L38.7,18.3 L39.3,17.6 L39.9,16.9 L40.4,16.2 L41.0,15.4 L41.5,14.6 L42.0,13.8 L42.5,13.0 L43.0,12.2 L43.4,11.3 L43.9,10.4 L44.3,9.5 L44.7,8.5 L45.1,7.6 L45.5,6.6 L45.8,5.5 L46.2,4.5 L46.4,3.4 L46.4,3.4 L46.0,4.4 L45.5,5.4 L45.0,6.4 L44.5,7.3 L44.0,8.2 L43.5,9.1 L43.0,9.9 L42.4,10.7 L41.9,11.5 L41.3,12.2 L40.7,12.9 L40.1,13.6 L39.5,14.3 L38.9,14.9 L38.3,15.6 L37.7,16.2 L37.1,16.8 L36.4,17.3 L35.8,17.9 L35.2,18.4 L34.5,18.9 L33.8,19.4 L33.2,19.9 L32.5,20.4 L31.8,20.9 L31.2,21.4 L30.5,21.8 L29.8,22.3 L29.1,22.7 L28.4,23.1 L27.7,23.6 L27.0,24.0 L26.3,24.4 L25.6,24.9 L24.9,25.3 L24.3,25.8 L23.7,26.4 L23.1,26.9 L22.4,27.4 L21.8,28.0 L21.2,28.5 L20.6,29.1 L20.0,29.6 L19.4,30.2 L18.8,30.8 L18.2,31.4 L17.6,32.0 L17.0,32.6 L16.5,33.2 L15.9,33.9 L15.4,34.5 L14.9,35.2 L14.4,35.9 L13.9,36.6 L13.4,37.3 L13.0,38.1 L12.6,38.8 L12.1,39.6 L11.7,40.4 L11.4,41.2 L11.0,42.1 L10.7,43.0 L10.4,43.8 L10.1,44.8 L9.8,45.7 L9.6,46.7 L9.3,47.6 L9.1,48.7 L9.0,49.7 L8.8,50.8Z"/><path fill="#ffffff" opacity="0.6" d="M10.1,52.1 L10.4,51.0 L10.8,50.0 L11.1,49.0 L11.4,48.1 L11.8,47.1 L12.2,46.2 L12.6,45.4 L13.0,44.6 L13.4,43.8 L13.9,43.0 L14.3,42.3 L14.8,41.5 L15.3,40.9 L15.8,40.2 L16.3,39.6 L16.8,38.9 L17.3,38.3 L17.9,37.8 L18.4,37.2 L19.0,36.6 L19.5,36.1 L20.1,35.6 L20.7,35.1 L21.3,34.6 L21.9,34.1 L22.5,33.6 L23.2,33.2 L23.8,32.7 L24.4,32.3 L25.1,31.8 L25.7,31.4 L26.4,30.9 L27.0,30.5 L27.7,30.1 L28.4,29.6 L29.0,29.1 L29.6,28.6 L30.2,28.0 L30.8,27.5 L31.4,26.9 L32.1,26.4 L32.7,25.8 L33.3,25.2 L33.9,24.7 L34.5,24.1 L35.1,23.5 L35.7,22.8 L36.3,22.2 L36.9,21.6 L37.5,20.9 L38.1,20.3 L38.7,19.6 L39.2,18.9 L39.8,18.2 L40.3,17.4 L40.9,16.7 L41.4,15.9 L41.9,15.1 L42.4,14.3 L42.9,13.4 L43.3,12.6 L43.8,11.7 L44.2,10.8 L44.6,9.9 L45.0,8.9 L45.4,7.9 L45.8,6.9 L46.1,5.8 L46.4,4.8 L46.7,3.6 L46.7,3.6 L46.2,4.7 L45.8,5.7 L45.3,6.7 L44.8,7.6 L44.3,8.6 L43.8,9.4 L43.3,10.3 L42.8,11.1 L42.2,11.9 L41.7,12.7 L41.1,13.4 L40.5,14.1 L40.0,14.8 L39.4,15.5 L38.8,16.1 L38.2,16.7 L37.5,17.3 L36.9,17.9 L36.3,18.5 L35.7,19.0 L35.0,19.6 L34.4,20.1 L33.7,20.6 L33.1,21.1 L32.4,21.6 L31.8,22.1 L31.1,22.5 L30.4,23.0 L29.8,23.4 L29.1,23.9 L28.4,24.3 L27.7,24.8 L27.1,25.2 L26.4,25.7 L25.7,26.1 L25.1,26.7 L24.5,27.2 L23.9,27.7 L23.3,28.3 L22.7,28.8 L22.1,29.4 L21.5,30.0 L20.9,30.5 L20.3,31.1 L19.7,31.7 L19.2,32.3 L18.6,32.9 L18.1,33.6 L17.5,34.2 L17.0,34.9 L16.5,35.5 L16.0,36.2 L15.5,36.9 L15.0,37.6 L14.6,38.4 L14.2,39.1 L13.7,39.9 L13.3,40.7 L12.9,41.5 L12.6,42.4 L12.2,43.2 L11.9,44.1 L11.6,45.0 L11.3,45.9 L11.1,46.9 L10.8,47.9 L10.6,48.9 L10.4,49.9 L10.3,51.0 L10.1,52.1Z"/></g></svg><div style="left:1141.70px;top:629.30px;width:13.20px;height:12.20px;background:#525252;"></div><svg style="position:absolute;left:1141.70px;top:629.30px;overflow:visible;" width="13.2" height="12.2" viewBox="0 0 13.2 12.2"><path d="M10,3 L6.5,6.8" stroke="#f0f0f0" stroke-width="1.5" stroke-linecap="round"/><ellipse cx="5" cy="8" rx="2.2" ry="1.5" transform="rotate(-35 5 8)" fill="#f0f0f0"/><path d="M3.5,9.8 Q7,9.3 9.5,8.8" fill="none" stroke="#d0d0d0" stroke-width="0.7"/></svg><span class="t" style="left:631.75px;width:1000px;text-align:center;top:646.46px;font-size:6.9px;color:#cfcfcf;">#05 Inker Over...</span><svg style="position:absolute;left:1162.50px;top:587.00px;overflow:visible;" width="54.5" height="54.5" viewBox="0 0 54.5 54.5"><rect width="54.5" height="54.5" fill="#6c6c6c"/><path fill="#ffffff" opacity="1" d="M8.2,50.7 L8.7,49.7 L9.1,48.7 L9.5,47.8 L9.9,46.9 L10.3,46.0 L10.6,45.1 L11.1,44.3 L11.5,43.5 L11.9,42.7 L12.3,41.9 L12.8,41.2 L13.3,40.5 L13.9,39.9 L14.4,39.3 L14.9,38.6 L15.5,38.0 L16.0,37.4 L16.6,36.9 L17.2,36.3 L17.7,35.7 L18.2,35.1 L18.9,34.6 L19.5,34.1 L20.2,33.7 L20.9,33.2 L21.5,32.7 L22.2,32.2 L22.9,31.8 L23.6,31.4 L24.2,30.9 L24.8,30.3 L25.5,29.8 L26.2,29.3 L26.9,28.9 L27.6,28.5 L28.3,28.0 L29.0,27.5 L29.7,27.0 L30.5,26.6 L31.2,26.1 L31.8,25.6 L32.5,24.9 L33.1,24.4 L33.8,23.8 L34.5,23.3 L35.2,22.7 L35.8,22.1 L36.5,21.5 L37.3,21.0 L38.0,20.4 L38.7,19.8 L39.3,19.1 L39.9,18.4 L40.5,17.7 L41.1,17.0 L41.7,16.2 L42.3,15.4 L42.8,14.6 L43.4,13.9 L44.0,13.1 L44.6,12.3 L45.1,11.4 L45.5,10.5 L46.0,9.5 L46.4,8.6 L46.8,7.6 L47.2,6.6 L47.5,5.5 L47.8,4.4 L48.0,3.3 L48.0,3.3 L47.2,4.2 L46.7,5.2 L46.2,6.1 L45.7,7.0 L45.2,7.9 L44.6,8.8 L44.0,9.6 L43.5,10.4 L42.9,11.2 L42.3,11.9 L41.7,12.6 L41.0,13.2 L40.4,13.9 L39.9,14.6 L39.4,15.4 L38.7,16.0 L38.0,16.5 L37.3,17.1 L36.7,17.6 L36.0,18.2 L35.3,18.7 L34.6,19.2 L33.9,19.7 L33.3,20.2 L32.6,20.8 L32.0,21.4 L31.3,21.8 L30.6,22.3 L29.8,22.7 L29.1,23.1 L28.4,23.6 L27.7,24.0 L26.9,24.5 L26.2,24.9 L25.5,25.3 L24.8,25.9 L24.2,26.5 L23.5,27.0 L22.8,27.5 L22.1,28.0 L21.4,28.5 L20.7,28.9 L20.1,29.5 L19.4,30.1 L18.7,30.6 L18.1,31.2 L17.5,31.8 L17.0,32.5 L16.4,33.1 L15.8,33.7 L15.1,34.3 L14.5,34.9 L14.0,35.6 L13.5,36.3 L12.9,37.0 L12.4,37.8 L11.9,38.5 L11.5,39.4 L11.2,40.2 L10.7,41.0 L10.3,41.8 L9.8,42.7 L9.5,43.6 L9.2,44.5 L8.9,45.5 L8.6,46.4 L8.4,47.4 L8.2,48.5 L8.1,49.6 L8.2,50.7Z"/></svg><div style="left:1199.70px;top:629.30px;width:13.20px;height:12.20px;background:#525252;"></div><svg style="position:absolute;left:1199.70px;top:629.30px;overflow:visible;" width="13.2" height="12.2" viewBox="0 0 13.2 12.2"><path d="M10,3 L6.5,6.8" stroke="#f0f0f0" stroke-width="1.5" stroke-linecap="round"/><ellipse cx="5" cy="8" rx="2.2" ry="1.5" transform="rotate(-35 5 8)" fill="#f0f0f0"/><path d="M3.5,9.8 Q7,9.3 9.5,8.8" fill="none" stroke="#d0d0d0" stroke-width="0.7"/></svg><span class="t" style="left:689.75px;width:1000px;text-align:center;top:646.46px;font-size:6.9px;color:#cfcfcf;">#06 Inker Runny</span><svg style="position:absolute;left:2.50px;top:659.80px;overflow:visible;" width="54.5" height="54.5" viewBox="0 0 54.5 54.5"><rect width="54.5" height="54.5" fill="#6c6c6c"/><path fill="#ffffff" opacity="1" filter="url(#r2)" d="M7.6,50.7 L8.7,49.8 L9.2,48.9 L9.5,47.9 L9.8,47.0 L10.0,46.1 L10.2,45.2 L10.9,44.4 L11.4,43.7 L11.8,42.9 L12.2,42.2 L12.8,41.6 L13.3,40.9 L14.0,40.4 L14.6,39.8 L14.8,39.0 L15.0,38.2 L15.6,37.6 L16.2,37.1 L16.8,36.7 L17.3,36.0 L17.8,35.4 L18.4,34.9 L19.4,34.9 L20.2,34.6 L20.7,34.0 L21.1,33.3 L21.7,32.7 L22.1,32.0 L22.9,31.8 L23.5,31.1 L24.0,30.5 L24.5,29.8 L25.4,29.7 L26.3,29.6 L27.2,29.4 L27.8,28.8 L28.4,28.1 L29.0,27.5 L29.8,27.3 L30.5,26.7 L31.0,25.9 L31.3,25.0 L32.1,24.5 L32.9,24.2 L33.7,23.8 L34.6,23.5 L35.1,22.7 L35.9,22.2 L36.6,21.7 L37.3,21.0 L37.9,20.3 L38.2,19.3 L38.7,18.6 L39.3,17.8 L39.9,17.2 L40.7,16.6 L41.2,15.8 L41.9,15.1 L42.6,14.3 L43.2,13.6 L43.9,12.8 L44.2,11.8 L44.5,10.8 L44.7,9.7 L45.1,8.7 L45.6,7.8 L46.0,6.8 L46.3,5.7 L46.6,4.6 L46.3,3.3 L46.3,3.3 L45.3,4.1 L44.7,5.0 L44.3,6.0 L43.6,6.8 L43.1,7.7 L42.6,8.5 L42.2,9.4 L41.5,10.1 L40.7,10.7 L39.9,11.3 L39.5,12.1 L39.1,12.9 L38.9,13.8 L38.2,14.4 L37.4,14.9 L36.9,15.6 L36.2,16.1 L35.7,16.8 L34.9,17.2 L34.0,17.5 L33.3,17.9 L32.7,18.5 L32.3,19.3 L32.0,20.2 L31.3,20.7 L30.4,21.0 L29.7,21.3 L28.9,21.7 L28.2,22.1 L27.5,22.5 L26.6,22.8 L25.8,23.0 L25.3,23.8 L24.8,24.5 L24.3,25.2 L23.8,26.0 L22.9,26.1 L22.1,26.4 L21.4,26.9 L20.8,27.5 L19.9,27.8 L19.3,28.3 L18.5,28.7 L18.0,29.4 L17.6,30.3 L17.1,31.1 L16.7,31.8 L15.8,32.2 L15.0,32.6 L14.4,33.1 L13.8,33.8 L13.3,34.6 L12.6,35.1 L12.0,35.8 L11.6,36.6 L11.3,37.5 L11.0,38.4 L10.6,39.2 L10.1,40.0 L9.5,40.7 L9.0,41.5 L8.6,42.4 L8.3,43.3 L8.0,44.3 L7.6,45.2 L7.5,46.3 L7.5,47.3 L7.5,48.4 L7.3,49.5 L7.6,50.7Z"/></svg><div style="left:39.70px;top:702.10px;width:13.20px;height:12.20px;background:#525252;"></div><svg style="position:absolute;left:39.70px;top:702.10px;overflow:visible;" width="13.2" height="12.2" viewBox="0 0 13.2 12.2"><path d="M10,3 L6.5,6.8" stroke="#f0f0f0" stroke-width="1.5" stroke-linecap="round"/><ellipse cx="5" cy="8" rx="2.2" ry="1.5" transform="rotate(-35 5 8)" fill="#f0f0f0"/><path d="M3.5,9.8 Q7,9.3 9.5,8.8" fill="none" stroke="#d0d0d0" stroke-width="0.7"/></svg><span class="t" style="left:-470.25px;width:1000px;text-align:center;top:719.26px;font-size:6.9px;color:#cfcfcf;">#07 Inker Runny</span><svg style="position:absolute;left:60.50px;top:659.80px;overflow:visible;" width="54.5" height="54.5" viewBox="0 0 54.5 54.5"><rect width="54.5" height="54.5" fill="#6c6c6c"/><path fill="#ffffff" opacity="1" filter="url(#r2)" d="M7.6,50.7 L8.7,49.8 L9.1,48.9 L9.5,47.9 L9.9,47.0 L10.4,46.2 L10.8,45.4 L11.0,44.5 L11.1,43.6 L11.6,42.8 L12.2,42.2 L12.8,41.6 L13.3,40.9 L13.7,40.2 L14.2,39.6 L15.0,39.2 L15.5,38.6 L16.1,38.1 L16.2,37.1 L16.5,36.3 L17.1,35.9 L17.8,35.4 L18.6,35.1 L19.0,34.4 L19.6,33.9 L20.4,33.6 L21.3,33.5 L21.9,33.1 L22.5,32.6 L23.0,31.8 L23.6,31.3 L24.1,30.7 L24.9,30.4 L25.5,29.7 L26.0,29.0 L26.6,28.5 L27.6,28.4 L28.5,28.4 L29.3,28.1 L29.9,27.3 L30.5,26.7 L31.1,26.1 L31.8,25.5 L32.5,25.1 L32.9,24.1 L33.4,23.4 L34.1,22.9 L35.0,22.5 L35.8,22.1 L36.6,21.7 L37.1,20.9 L37.8,20.2 L38.4,19.6 L39.1,19.0 L39.6,18.2 L40.1,17.3 L40.4,16.3 L41.0,15.6 L41.7,14.9 L42.5,14.3 L42.9,13.4 L43.6,12.6 L44.0,11.7 L44.7,10.9 L45.2,10.0 L45.4,8.9 L45.6,7.8 L45.9,6.7 L46.3,5.7 L46.5,4.6 L46.3,3.3 L46.3,3.3 L45.2,4.0 L44.5,4.9 L44.0,5.9 L43.6,6.8 L43.1,7.7 L42.5,8.5 L42.0,9.3 L41.5,10.2 L41.2,11.1 L40.6,11.8 L39.8,12.3 L39.0,12.8 L38.3,13.4 L37.8,14.1 L37.4,14.9 L36.9,15.6 L36.3,16.2 L35.5,16.6 L35.1,17.4 L34.5,18.0 L33.9,18.6 L33.1,18.9 L32.0,19.0 L31.2,19.3 L30.7,19.9 L30.2,20.6 L29.7,21.3 L29.0,21.9 L28.3,22.3 L27.7,22.8 L27.0,23.3 L26.5,24.0 L25.6,24.2 L24.5,24.1 L23.8,24.5 L23.1,25.0 L22.7,25.9 L22.3,26.7 L21.7,27.3 L20.9,27.7 L20.1,28.0 L19.6,28.8 L18.9,29.2 L18.2,29.7 L17.3,30.0 L16.5,30.3 L15.9,31.0 L15.6,32.0 L15.2,32.8 L14.7,33.5 L14.0,34.0 L13.4,34.7 L13.0,35.4 L12.3,36.0 L11.7,36.7 L11.0,37.3 L10.3,37.9 L10.0,38.8 L9.8,39.8 L9.6,40.8 L9.4,41.7 L9.0,42.6 L8.4,43.4 L8.2,44.4 L7.8,45.3 L7.5,46.3 L7.2,47.3 L7.0,48.3 L7.0,49.4 L7.6,50.7Z"/></svg><div style="left:97.70px;top:702.10px;width:13.20px;height:12.20px;background:#525252;"></div><svg style="position:absolute;left:97.70px;top:702.10px;overflow:visible;" width="13.2" height="12.2" viewBox="0 0 13.2 12.2"><path d="M10,3 L6.5,6.8" stroke="#f0f0f0" stroke-width="1.5" stroke-linecap="round"/><ellipse cx="5" cy="8" rx="2.2" ry="1.5" transform="rotate(-35 5 8)" fill="#f0f0f0"/><path d="M3.5,9.8 Q7,9.3 9.5,8.8" fill="none" stroke="#d0d0d0" stroke-width="0.7"/></svg><span class="t" style="left:-412.25px;width:1000px;text-align:center;top:719.26px;font-size:6.9px;color:#cfcfcf;">#08 Inker Runny</span><svg style="position:absolute;left:118.50px;top:659.80px;overflow:visible;" width="54.5" height="54.5" viewBox="0 0 54.5 54.5"><rect width="54.5" height="54.5" fill="#6c6c6c"/><path fill="#ffffff" opacity="1" filter="url(#r2)" d="M7.6,50.7 L8.6,49.8 L9.1,48.9 L9.5,47.9 L9.8,47.0 L10.3,46.2 L10.8,45.4 L11.1,44.5 L11.4,43.7 L11.6,42.8 L12.0,42.1 L12.6,41.5 L13.3,40.9 L13.8,40.3 L14.3,39.6 L14.8,39.0 L15.5,38.6 L16.0,38.0 L16.6,37.5 L16.7,36.5 L17.0,35.7 L17.7,35.3 L18.4,34.9 L19.1,34.5 L19.8,34.1 L20.2,33.5 L21.1,33.3 L22.0,33.1 L22.7,32.7 L23.2,32.1 L23.5,31.2 L24.0,30.5 L24.6,30.0 L25.5,29.8 L26.2,29.4 L26.7,28.7 L27.5,28.3 L28.4,28.2 L29.2,27.8 L30.0,27.5 L30.6,26.9 L31.0,26.0 L31.6,25.4 L32.4,24.9 L33.0,24.3 L33.6,23.7 L34.0,22.8 L34.8,22.3 L35.7,22.0 L36.6,21.7 L37.3,21.1 L37.8,20.3 L38.4,19.6 L39.1,18.9 L39.6,18.2 L40.2,17.4 L40.6,16.5 L41.0,15.6 L41.6,14.8 L42.3,14.2 L43.1,13.5 L43.6,12.6 L44.0,11.7 L44.5,10.8 L45.1,9.9 L45.5,8.9 L45.8,7.9 L46.0,6.7 L46.2,5.6 L46.5,4.5 L46.3,3.3 L46.3,3.3 L45.1,4.0 L44.4,4.9 L43.9,5.8 L43.6,6.8 L43.2,7.8 L42.7,8.6 L42.1,9.4 L41.5,10.1 L41.0,10.9 L40.4,11.6 L39.7,12.3 L38.9,12.8 L38.3,13.4 L37.8,14.1 L37.4,14.9 L37.0,15.7 L36.4,16.3 L35.7,16.8 L35.0,17.3 L34.3,17.8 L33.6,18.2 L32.9,18.8 L32.0,18.9 L31.2,19.3 L30.7,20.0 L30.3,20.8 L29.8,21.5 L29.3,22.2 L28.5,22.5 L27.5,22.6 L26.9,23.1 L26.2,23.7 L25.4,24.0 L24.6,24.2 L23.7,24.3 L23.1,25.0 L22.7,25.9 L22.3,26.8 L21.8,27.5 L20.9,27.6 L20.0,27.9 L19.3,28.3 L18.8,29.1 L18.0,29.5 L17.4,30.1 L16.6,30.5 L16.1,31.2 L15.7,32.1 L15.3,32.9 L14.9,33.7 L14.2,34.2 L13.4,34.6 L12.7,35.2 L12.2,35.9 L11.7,36.6 L11.1,37.3 L10.6,38.1 L10.1,38.9 L10.0,39.9 L9.8,40.9 L9.4,41.7 L8.9,42.5 L8.4,43.4 L7.9,44.2 L7.7,45.2 L7.5,46.3 L7.3,47.3 L7.1,48.3 L7.1,49.5 L7.6,50.7Z"/></svg><div style="left:155.70px;top:702.10px;width:13.20px;height:12.20px;background:#525252;"></div><svg style="position:absolute;left:155.70px;top:702.10px;overflow:visible;" width="13.2" height="12.2" viewBox="0 0 13.2 12.2"><path d="M10,3 L6.5,6.8" stroke="#f0f0f0" stroke-width="1.5" stroke-linecap="round"/><ellipse cx="5" cy="8" rx="2.2" ry="1.5" transform="rotate(-35 5 8)" fill="#f0f0f0"/><path d="M3.5,9.8 Q7,9.3 9.5,8.8" fill="none" stroke="#d0d0d0" stroke-width="0.7"/></svg><span class="t" style="left:-354.25px;width:1000px;text-align:center;top:719.26px;font-size:6.9px;color:#cfcfcf;">#09 Inker Runny</span><svg style="position:absolute;left:176.50px;top:659.80px;overflow:visible;" width="54.5" height="54.5" viewBox="0 0 54.5 54.5"><rect width="54.5" height="54.5" fill="#6c6c6c"/><g filter="url(#b1)"><path fill="#ffffff" opacity="0.5" d="M7.7,48.0 L8.1,47.1 L8.4,46.3 L8.8,45.4 L9.2,44.6 L9.6,43.9 L10.0,43.1 L10.5,42.4 L10.9,41.7 L11.4,41.1 L11.9,40.4 L12.4,39.8 L12.9,39.3 L13.4,38.7 L13.9,38.2 L14.5,37.7 L15.0,37.2 L15.6,36.7 L16.2,36.2 L16.8,35.8 L17.4,35.4 L18.0,34.9 L18.6,34.5 L19.2,34.1 L19.8,33.8 L20.5,33.4 L21.1,33.0 L21.8,32.6 L22.5,32.3 L23.1,31.8 L23.7,31.3 L24.3,30.9 L24.9,30.4 L25.5,29.9 L26.2,29.5 L26.8,29.0 L27.5,28.5 L28.1,28.1 L28.8,27.6 L29.4,27.1 L30.1,26.6 L30.8,26.1 L31.4,25.6 L32.1,25.1 L32.8,24.6 L33.4,24.1 L34.1,23.6 L34.7,23.0 L35.4,22.5 L36.0,21.9 L36.6,21.3 L37.2,20.7 L37.9,20.1 L38.5,19.5 L39.1,18.9 L39.6,18.2 L40.2,17.6 L40.8,16.9 L41.3,16.2 L41.8,15.5 L42.4,14.7 L42.9,14.0 L43.3,13.2 L43.8,12.4 L44.2,11.6 L44.7,10.7 L45.1,9.9 L45.5,9.0 L45.8,8.1 L46.2,7.1 L46.5,6.1 L46.5,6.1 L46.0,7.0 L45.5,7.9 L45.0,8.8 L44.5,9.6 L44.0,10.4 L43.5,11.1 L42.9,11.8 L42.4,12.5 L41.8,13.2 L41.2,13.8 L40.6,14.5 L40.0,15.1 L39.4,15.7 L38.8,16.2 L38.2,16.8 L37.5,17.3 L36.9,17.8 L36.2,18.3 L35.6,18.8 L34.9,19.2 L34.3,19.7 L33.6,20.1 L32.9,20.5 L32.2,21.0 L31.5,21.4 L30.8,21.8 L30.1,22.2 L29.4,22.6 L28.7,22.9 L28.0,23.3 L27.3,23.7 L26.6,24.1 L25.9,24.4 L25.2,24.8 L24.5,25.2 L23.7,25.6 L23.0,25.9 L22.3,26.3 L21.6,26.7 L20.9,27.1 L20.2,27.5 L19.5,27.9 L18.9,28.5 L18.2,29.0 L17.6,29.5 L17.0,30.1 L16.4,30.7 L15.9,31.3 L15.3,31.9 L14.7,32.5 L14.2,33.1 L13.7,33.7 L13.2,34.4 L12.7,35.0 L12.2,35.7 L11.7,36.4 L11.3,37.1 L10.9,37.8 L10.5,38.6 L10.1,39.4 L9.7,40.1 L9.4,40.9 L9.1,41.7 L8.8,42.6 L8.6,43.4 L8.3,44.3 L8.1,45.2 L8.0,46.1 L7.8,47.1 L7.7,48.0Z"/><path fill="#ffffff" opacity="0.5" d="M8.8,49.1 L9.1,48.2 L9.5,47.3 L9.8,46.4 L10.2,45.6 L10.6,44.8 L11.0,44.1 L11.5,43.3 L11.9,42.6 L12.4,42.0 L12.9,41.3 L13.3,40.7 L13.8,40.1 L14.4,39.5 L14.9,39.0 L15.4,38.5 L16.0,38.0 L16.5,37.5 L17.1,37.0 L17.7,36.5 L18.2,36.1 L18.8,35.7 L19.4,35.2 L20.1,34.8 L20.7,34.4 L21.3,34.1 L22.0,33.7 L22.6,33.3 L23.3,32.9 L23.8,32.5 L24.4,32.0 L25.0,31.5 L25.6,31.0 L26.3,30.6 L26.9,30.1 L27.5,29.6 L28.1,29.1 L28.8,28.6 L29.4,28.2 L30.1,27.7 L30.7,27.2 L31.4,26.7 L32.0,26.2 L32.7,25.7 L33.3,25.1 L33.9,24.6 L34.6,24.1 L35.2,23.5 L35.8,23.0 L36.5,22.4 L37.1,21.8 L37.7,21.2 L38.3,20.6 L38.9,20.0 L39.5,19.3 L40.0,18.7 L40.6,18.0 L41.1,17.3 L41.6,16.6 L42.2,15.8 L42.7,15.1 L43.2,14.3 L43.6,13.5 L44.1,12.7 L44.5,11.9 L44.9,11.0 L45.3,10.1 L45.7,9.2 L46.0,8.3 L46.4,7.3 L46.7,6.3 L46.7,6.3 L46.2,7.3 L45.7,8.2 L45.2,9.0 L44.8,9.8 L44.2,10.6 L43.7,11.4 L43.2,12.2 L42.6,12.9 L42.1,13.6 L41.5,14.2 L40.9,14.9 L40.3,15.5 L39.7,16.1 L39.1,16.6 L38.5,17.2 L37.9,17.7 L37.3,18.3 L36.6,18.8 L36.0,19.3 L35.3,19.7 L34.7,20.2 L34.0,20.6 L33.4,21.1 L32.7,21.5 L32.0,21.9 L31.3,22.3 L30.6,22.7 L30.0,23.1 L29.3,23.5 L28.6,23.9 L27.9,24.3 L27.2,24.7 L26.5,25.1 L25.8,25.5 L25.1,25.8 L24.4,26.2 L23.7,26.6 L23.0,27.0 L22.3,27.4 L21.6,27.8 L20.9,28.2 L20.2,28.6 L19.6,29.2 L19.0,29.7 L18.4,30.3 L17.8,30.9 L17.2,31.4 L16.7,32.0 L16.1,32.6 L15.6,33.3 L15.0,33.9 L14.5,34.5 L14.0,35.2 L13.6,35.9 L13.1,36.6 L12.6,37.3 L12.2,38.0 L11.8,38.7 L11.4,39.5 L11.1,40.2 L10.7,41.0 L10.4,41.9 L10.1,42.7 L9.8,43.5 L9.6,44.4 L9.4,45.3 L9.2,46.2 L9.0,47.1 L8.9,48.1 L8.8,49.1Z"/><path fill="#ffffff" opacity="0.5" d="M9.8,50.1 L10.2,49.2 L10.5,48.3 L10.9,47.4 L11.2,46.6 L11.6,45.8 L12.1,45.0 L12.5,44.2 L12.9,43.5 L13.4,42.8 L13.8,42.2 L14.3,41.5 L14.8,40.9 L15.3,40.4 L15.8,39.8 L16.4,39.3 L16.9,38.7 L17.4,38.2 L18.0,37.7 L18.6,37.3 L19.1,36.8 L19.7,36.4 L20.3,36.0 L20.9,35.5 L21.5,35.1 L22.2,34.7 L22.8,34.3 L23.4,34.0 L24.1,33.6 L24.6,33.1 L25.2,32.6 L25.8,32.1 L26.4,31.6 L27.0,31.2 L27.6,30.7 L28.2,30.2 L28.8,29.7 L29.4,29.2 L30.1,28.7 L30.7,28.2 L31.3,27.7 L32.0,27.2 L32.6,26.7 L33.2,26.2 L33.8,25.7 L34.5,25.1 L35.1,24.6 L35.7,24.0 L36.3,23.4 L36.9,22.9 L37.5,22.3 L38.1,21.7 L38.7,21.0 L39.3,20.4 L39.8,19.7 L40.4,19.1 L40.9,18.4 L41.5,17.7 L42.0,17.0 L42.5,16.2 L43.0,15.4 L43.4,14.7 L43.9,13.9 L44.3,13.0 L44.8,12.2 L45.2,11.3 L45.6,10.4 L45.9,9.5 L46.3,8.5 L46.6,7.5 L46.9,6.5 L46.9,6.5 L46.4,7.5 L45.9,8.4 L45.5,9.3 L45.0,10.1 L44.5,10.9 L44.0,11.7 L43.4,12.5 L42.9,13.2 L42.4,13.9 L41.8,14.6 L41.2,15.2 L40.7,15.9 L40.1,16.5 L39.5,17.1 L38.9,17.6 L38.3,18.2 L37.6,18.7 L37.0,19.2 L36.4,19.7 L35.7,20.2 L35.1,20.7 L34.5,21.2 L33.8,21.6 L33.1,22.0 L32.5,22.5 L31.8,22.9 L31.1,23.3 L30.5,23.7 L29.8,24.1 L29.1,24.5 L28.4,24.9 L27.8,25.3 L27.1,25.7 L26.4,26.1 L25.7,26.5 L25.0,26.9 L24.3,27.3 L23.6,27.7 L23.0,28.1 L22.3,28.5 L21.6,28.9 L20.9,29.3 L20.3,29.9 L19.7,30.5 L19.2,31.0 L18.6,31.6 L18.0,32.2 L17.5,32.8 L16.9,33.4 L16.4,34.0 L15.9,34.7 L15.4,35.3 L14.9,36.0 L14.4,36.7 L14.0,37.4 L13.6,38.1 L13.1,38.8 L12.8,39.6 L12.4,40.4 L12.0,41.1 L11.7,42.0 L11.4,42.8 L11.1,43.6 L10.8,44.5 L10.6,45.4 L10.4,46.3 L10.2,47.2 L10.0,48.2 L9.9,49.1 L9.8,50.1Z"/><path fill="#ffffff" opacity="0.5" d="M10.9,51.2 L11.2,50.2 L11.5,49.3 L11.9,48.4 L12.3,47.5 L12.7,46.7 L13.1,45.9 L13.5,45.2 L13.9,44.4 L14.4,43.7 L14.8,43.0 L15.3,42.4 L15.8,41.8 L16.3,41.2 L16.8,40.6 L17.3,40.0 L17.8,39.5 L18.4,39.0 L18.9,38.5 L19.5,38.0 L20.0,37.6 L20.6,37.1 L21.2,36.7 L21.8,36.2 L22.4,35.8 L23.0,35.4 L23.6,35.0 L24.2,34.6 L24.9,34.2 L25.4,33.7 L26.0,33.2 L26.5,32.8 L27.1,32.3 L27.7,31.8 L28.3,31.3 L28.9,30.8 L29.5,30.3 L30.1,29.8 L30.7,29.3 L31.3,28.8 L31.9,28.3 L32.6,27.8 L33.2,27.3 L33.8,26.7 L34.4,26.2 L35.0,25.6 L35.6,25.1 L36.2,24.5 L36.8,23.9 L37.4,23.3 L38.0,22.7 L38.6,22.1 L39.1,21.5 L39.7,20.8 L40.2,20.2 L40.8,19.5 L41.3,18.8 L41.8,18.1 L42.3,17.3 L42.8,16.6 L43.3,15.8 L43.7,15.0 L44.2,14.2 L44.6,13.3 L45.0,12.5 L45.4,11.6 L45.8,10.7 L46.1,9.7 L46.5,8.8 L46.8,7.8 L47.1,6.7 L47.1,6.7 L46.6,7.7 L46.2,8.6 L45.7,9.5 L45.2,10.4 L44.7,11.2 L44.2,12.0 L43.7,12.8 L43.2,13.6 L42.6,14.3 L42.1,15.0 L41.5,15.6 L41.0,16.3 L40.4,16.9 L39.8,17.5 L39.2,18.1 L38.6,18.7 L38.0,19.2 L37.4,19.7 L36.8,20.2 L36.2,20.7 L35.5,21.2 L34.9,21.7 L34.3,22.1 L33.6,22.6 L33.0,23.0 L32.3,23.5 L31.6,23.9 L31.0,24.3 L30.3,24.7 L29.7,25.1 L29.0,25.5 L28.3,25.9 L27.7,26.3 L27.0,26.7 L26.3,27.1 L25.6,27.5 L25.0,27.9 L24.3,28.4 L23.6,28.8 L23.0,29.2 L22.3,29.6 L21.6,30.1 L21.0,30.6 L20.5,31.2 L19.9,31.8 L19.4,32.4 L18.8,33.0 L18.3,33.6 L17.8,34.2 L17.2,34.8 L16.7,35.5 L16.3,36.1 L15.8,36.8 L15.3,37.5 L14.9,38.2 L14.5,39.0 L14.1,39.7 L13.7,40.5 L13.3,41.2 L13.0,42.0 L12.7,42.9 L12.4,43.7 L12.1,44.6 L11.8,45.4 L11.6,46.3 L11.4,47.3 L11.2,48.2 L11.1,49.2 L10.9,50.2 L10.9,51.2Z"/><path fill="#ffffff" opacity="0.5" d="M11.9,52.2 L12.2,51.2 L12.6,50.3 L12.9,49.4 L13.3,48.5 L13.7,47.7 L14.1,46.8 L14.5,46.1 L14.9,45.3 L15.4,44.6 L15.8,43.9 L16.3,43.2 L16.7,42.6 L17.2,42.0 L17.7,41.4 L18.2,40.8 L18.8,40.3 L19.3,39.8 L19.8,39.3 L20.4,38.8 L20.9,38.3 L21.5,37.8 L22.1,37.4 L22.6,36.9 L23.2,36.5 L23.8,36.1 L24.4,35.7 L25.0,35.3 L25.7,34.9 L26.2,34.4 L26.7,33.9 L27.3,33.4 L27.9,32.9 L28.4,32.4 L29.0,31.9 L29.6,31.4 L30.2,30.9 L30.8,30.4 L31.4,29.9 L31.9,29.4 L32.5,28.8 L33.1,28.3 L33.7,27.8 L34.3,27.2 L34.9,26.7 L35.5,26.1 L36.1,25.6 L36.7,25.0 L37.3,24.4 L37.9,23.8 L38.4,23.2 L39.0,22.6 L39.5,21.9 L40.1,21.3 L40.6,20.6 L41.2,19.9 L41.7,19.2 L42.2,18.5 L42.7,17.7 L43.1,16.9 L43.6,16.1 L44.0,15.3 L44.5,14.5 L44.9,13.6 L45.3,12.8 L45.7,11.9 L46.0,10.9 L46.4,10.0 L46.7,9.0 L47.0,8.0 L47.3,6.9 L47.3,6.9 L46.8,7.9 L46.4,8.9 L45.9,9.8 L45.4,10.7 L45.0,11.5 L44.5,12.3 L44.0,13.1 L43.4,13.9 L42.9,14.6 L42.4,15.3 L41.8,16.0 L41.3,16.7 L40.7,17.3 L40.1,17.9 L39.6,18.5 L39.0,19.1 L38.4,19.7 L37.8,20.2 L37.2,20.7 L36.6,21.2 L35.9,21.7 L35.3,22.2 L34.7,22.7 L34.1,23.1 L33.4,23.6 L32.8,24.0 L32.2,24.5 L31.5,24.9 L30.9,25.3 L30.2,25.7 L29.6,26.1 L28.9,26.5 L28.2,27.0 L27.6,27.4 L26.9,27.8 L26.3,28.2 L25.6,28.6 L25.0,29.0 L24.3,29.5 L23.6,29.9 L23.0,30.3 L22.3,30.8 L21.8,31.3 L21.2,31.9 L20.7,32.5 L20.1,33.1 L19.6,33.7 L19.1,34.3 L18.6,35.0 L18.1,35.6 L17.6,36.3 L17.1,37.0 L16.7,37.6 L16.2,38.4 L15.8,39.1 L15.4,39.8 L15.0,40.6 L14.6,41.3 L14.3,42.1 L14.0,42.9 L13.6,43.8 L13.4,44.6 L13.1,45.5 L12.8,46.4 L12.6,47.3 L12.4,48.2 L12.2,49.2 L12.1,50.2 L12.0,51.2 L11.9,52.2Z"/></g></svg><div style="left:213.70px;top:702.10px;width:13.20px;height:12.20px;background:#525252;"></div><svg style="position:absolute;left:213.70px;top:702.10px;overflow:visible;" width="13.2" height="12.2" viewBox="0 0 13.2 12.2"><path d="M10,3 L6.5,6.8" stroke="#f0f0f0" stroke-width="1.5" stroke-linecap="round"/><ellipse cx="5" cy="8" rx="2.2" ry="1.5" transform="rotate(-35 5 8)" fill="#f0f0f0"/><path d="M3.5,9.8 Q7,9.3 9.5,8.8" fill="none" stroke="#d0d0d0" stroke-width="0.7"/></svg><span class="t" style="left:-296.25px;width:1000px;text-align:center;top:719.26px;font-size:6.9px;color:#cfcfcf;">#01 Wet Paint</span><svg style="position:absolute;left:234.50px;top:659.80px;overflow:visible;" width="54.5" height="54.5" viewBox="0 0 54.5 54.5"><rect width="54.5" height="54.5" fill="#6c6c6c"/><path fill="#ffffff" opacity="1" filter="url(#r2)" d="M6.5,50.7 L7.6,49.9 L8.2,49.1 L8.7,48.2 L9.1,47.4 L9.8,46.7 L10.5,46.0 L11.3,45.5 L11.8,44.8 L12.3,44.1 L13.0,43.6 L13.7,43.1 L14.3,42.6 L14.8,42.0 L15.1,41.2 L15.4,40.4 L16.0,40.0 L17.0,39.8 L17.7,39.4 L18.3,38.9 L19.0,38.5 L19.7,38.2 L20.7,38.2 L21.5,37.9 L22.0,37.3 L22.3,36.4 L22.8,35.9 L23.5,35.4 L24.3,35.1 L25.1,34.8 L25.4,33.9 L26.3,33.7 L27.1,33.3 L28.1,33.3 L28.8,32.8 L29.3,32.0 L29.8,31.1 L30.4,30.4 L31.0,29.8 L31.8,29.3 L32.4,28.5 L32.9,27.7 L33.6,27.1 L34.7,27.0 L35.7,26.8 L36.3,26.0 L36.9,25.2 L37.5,24.5 L38.3,24.0 L39.0,23.3 L39.6,22.5 L39.9,21.4 L40.4,20.5 L41.3,20.1 L42.1,19.5 L43.0,18.9 L43.4,18.0 L44.0,17.2 L44.7,16.4 L45.3,15.6 L45.8,14.7 L46.2,13.7 L46.5,12.6 L46.9,11.7 L47.4,10.8 L47.9,9.8 L48.3,8.9 L48.6,7.8 L48.9,6.7 L49.2,5.6 L49.1,4.4 L49.1,4.4 L48.0,5.1 L47.3,5.9 L46.5,6.7 L45.9,7.5 L45.5,8.4 L44.9,9.1 L44.2,9.8 L43.4,10.4 L42.6,11.0 L41.9,11.6 L41.2,12.2 L40.6,12.8 L39.8,13.3 L39.0,13.8 L38.6,14.6 L38.0,15.2 L37.6,16.0 L36.7,16.3 L35.8,16.7 L35.0,17.0 L34.1,17.2 L33.5,17.9 L32.6,18.1 L31.8,18.5 L31.1,19.0 L30.5,19.6 L30.2,20.6 L29.4,21.0 L28.6,21.4 L27.5,21.4 L26.5,21.4 L25.7,21.8 L25.0,22.2 L24.3,22.8 L23.5,23.2 L22.7,23.6 L22.1,24.3 L21.6,25.1 L21.0,25.9 L20.1,26.2 L18.8,26.0 L17.8,26.1 L17.2,26.9 L16.6,27.6 L16.1,28.4 L15.3,29.0 L14.6,29.6 L14.3,30.7 L13.8,31.5 L13.4,32.5 L12.6,33.1 L11.7,33.5 L10.9,34.1 L10.4,34.9 L9.8,35.7 L9.5,36.7 L9.2,37.7 L8.7,38.5 L8.3,39.5 L8.2,40.5 L7.8,41.4 L7.4,42.3 L6.9,43.2 L6.4,44.1 L6.2,45.1 L6.1,46.2 L6.1,47.3 L6.1,48.4 L6.1,49.5 L6.5,50.7Z"/><g><path fill="#ffffff" opacity="0.5" d="M4.8,48.9 L5.2,48.0 L5.7,47.1 L6.1,46.3 L6.6,45.4 L7.1,44.7 L7.6,43.9 L8.1,43.2 L8.6,42.4 L9.2,41.8 L9.7,41.1 L10.3,40.5 L10.9,39.9 L11.5,39.3 L12.1,38.7 L12.7,38.2 L13.4,37.7 L14.0,37.1 L14.7,36.6 L15.3,36.2 L16.0,35.7 L16.7,35.2 L17.4,34.8 L18.1,34.4 L18.8,33.9 L19.5,33.5 L20.3,33.1 L21.0,32.7 L21.8,32.3 L22.5,31.9 L23.3,31.5 L24.1,31.1 L24.8,30.8 L25.6,30.4 L26.4,30.0 L27.2,29.6 L27.9,29.0 L28.6,28.5 L29.3,27.9 L30.1,27.4 L30.8,26.8 L31.5,26.2 L32.2,25.7 L33.0,25.1 L33.7,24.5 L34.4,23.9 L35.1,23.3 L35.8,22.6 L36.5,22.0 L37.2,21.3 L37.9,20.7 L38.6,20.0 L39.3,19.3 L39.9,18.6 L40.6,17.9 L41.2,17.2 L41.9,16.4 L42.5,15.7 L43.1,14.9 L43.7,14.1 L44.2,13.3 L44.8,12.5 L45.3,11.6 L45.8,10.7 L46.3,9.8 L46.8,8.9 L47.2,8.0 L47.6,7.0 L48.0,6.1 L48.4,5.1 L48.7,4.0 L48.7,4.0 L48.1,4.9 L47.5,5.8 L46.9,6.7 L46.3,7.5 L45.7,8.3 L45.1,9.0 L44.4,9.7 L43.8,10.4 L43.1,11.1 L42.4,11.8 L41.7,12.4 L41.0,13.0 L40.3,13.6 L39.6,14.2 L38.9,14.7 L38.2,15.2 L37.4,15.7 L36.7,16.2 L35.9,16.7 L35.2,17.2 L34.4,17.7 L33.7,18.1 L32.9,18.5 L32.1,19.0 L31.3,19.4 L30.6,19.8 L29.8,20.2 L29.0,20.6 L28.2,21.0 L27.4,21.4 L26.6,21.8 L25.8,22.2 L25.0,22.6 L24.2,23.0 L23.3,23.4 L22.6,23.9 L21.9,24.5 L21.2,25.1 L20.5,25.6 L19.8,26.2 L19.1,26.8 L18.4,27.4 L17.7,27.9 L17.0,28.5 L16.3,29.2 L15.7,29.8 L15.0,30.4 L14.3,31.0 L13.7,31.7 L13.1,32.4 L12.5,33.0 L11.9,33.7 L11.3,34.4 L10.7,35.1 L10.2,35.9 L9.7,36.6 L9.2,37.4 L8.7,38.2 L8.2,39.0 L7.8,39.8 L7.4,40.6 L7.0,41.5 L6.6,42.3 L6.2,43.2 L5.9,44.1 L5.6,45.0 L5.4,46.0 L5.1,46.9 L4.9,47.9 L4.8,48.9Z"/><path fill="#ffffff" opacity="0.5" d="M6.5,50.7 L7.0,49.7 L7.4,48.8 L7.8,47.9 L8.3,47.1 L8.8,46.2 L9.3,45.4 L9.8,44.7 L10.3,43.9 L10.8,43.2 L11.4,42.6 L11.9,41.9 L12.5,41.3 L13.1,40.7 L13.7,40.1 L14.3,39.5 L14.9,39.0 L15.5,38.4 L16.2,37.9 L16.8,37.4 L17.5,36.9 L18.1,36.5 L18.8,36.0 L19.5,35.5 L20.2,35.1 L20.9,34.7 L21.6,34.2 L22.3,33.8 L23.1,33.4 L23.8,33.0 L24.6,32.6 L25.3,32.2 L26.1,31.8 L26.8,31.4 L27.6,31.0 L28.4,30.6 L29.1,30.0 L29.8,29.4 L30.4,28.9 L31.1,28.3 L31.8,27.7 L32.5,27.1 L33.2,26.5 L33.9,25.9 L34.6,25.3 L35.3,24.7 L36.0,24.1 L36.7,23.4 L37.4,22.8 L38.0,22.1 L38.7,21.4 L39.4,20.8 L40.0,20.1 L40.6,19.3 L41.3,18.6 L41.9,17.9 L42.5,17.1 L43.1,16.3 L43.6,15.5 L44.2,14.7 L44.7,13.9 L45.3,13.0 L45.8,12.1 L46.3,11.2 L46.7,10.3 L47.2,9.4 L47.6,8.4 L48.0,7.5 L48.4,6.5 L48.7,5.4 L49.1,4.4 L49.1,4.4 L48.5,5.3 L47.9,6.2 L47.3,7.1 L46.7,7.9 L46.1,8.7 L45.5,9.5 L44.8,10.3 L44.2,11.0 L43.5,11.7 L42.9,12.4 L42.2,13.0 L41.5,13.7 L40.9,14.3 L40.2,14.9 L39.5,15.4 L38.8,16.0 L38.0,16.5 L37.3,17.0 L36.6,17.6 L35.9,18.0 L35.1,18.5 L34.4,19.0 L33.6,19.4 L32.9,19.9 L32.1,20.3 L31.3,20.8 L30.6,21.2 L29.8,21.6 L29.0,22.0 L28.3,22.4 L27.5,22.8 L26.7,23.2 L25.9,23.6 L25.1,24.1 L24.3,24.5 L23.6,25.0 L23.0,25.6 L22.3,26.2 L21.6,26.8 L20.9,27.4 L20.2,27.9 L19.6,28.5 L18.9,29.2 L18.2,29.8 L17.6,30.4 L16.9,31.0 L16.3,31.7 L15.7,32.3 L15.1,33.0 L14.5,33.7 L13.9,34.4 L13.3,35.1 L12.7,35.8 L12.2,36.5 L11.7,37.3 L11.2,38.1 L10.7,38.8 L10.2,39.6 L9.8,40.4 L9.4,41.3 L9.0,42.1 L8.6,43.0 L8.2,43.9 L7.9,44.8 L7.6,45.7 L7.3,46.7 L7.1,47.6 L6.9,48.6 L6.7,49.6 L6.5,50.7Z"/><path fill="#ffffff" opacity="0.5" d="M8.3,52.4 L8.7,51.4 L9.1,50.5 L9.6,49.6 L10.0,48.7 L10.5,47.8 L10.9,47.0 L11.4,46.2 L11.9,45.4 L12.5,44.7 L13.0,44.0 L13.5,43.3 L14.1,42.7 L14.7,42.0 L15.3,41.4 L15.8,40.8 L16.5,40.3 L17.1,39.7 L17.7,39.2 L18.3,38.7 L19.0,38.2 L19.6,37.7 L20.3,37.2 L20.9,36.7 L21.6,36.3 L22.3,35.8 L23.0,35.4 L23.7,34.9 L24.4,34.5 L25.1,34.1 L25.8,33.6 L26.6,33.2 L27.3,32.8 L28.1,32.4 L28.8,32.0 L29.6,31.6 L30.2,31.0 L30.9,30.4 L31.5,29.8 L32.2,29.2 L32.9,28.6 L33.5,28.0 L34.2,27.4 L34.9,26.8 L35.5,26.2 L36.2,25.5 L36.9,24.9 L37.5,24.2 L38.2,23.6 L38.8,22.9 L39.5,22.2 L40.1,21.5 L40.7,20.8 L41.3,20.0 L41.9,19.3 L42.5,18.5 L43.1,17.7 L43.7,16.9 L44.2,16.1 L44.8,15.3 L45.3,14.4 L45.8,13.6 L46.3,12.7 L46.7,11.7 L47.2,10.8 L47.6,9.8 L48.0,8.9 L48.4,7.9 L48.7,6.8 L49.1,5.8 L49.4,4.7 L49.4,4.7 L48.8,5.7 L48.2,6.6 L47.7,7.5 L47.1,8.4 L46.5,9.2 L45.9,10.0 L45.3,10.8 L44.6,11.6 L44.0,12.3 L43.4,13.0 L42.7,13.7 L42.1,14.3 L41.4,15.0 L40.7,15.6 L40.0,16.2 L39.3,16.8 L38.6,17.3 L37.9,17.9 L37.2,18.4 L36.5,18.9 L35.8,19.4 L35.1,19.9 L34.4,20.3 L33.6,20.8 L32.9,21.3 L32.1,21.7 L31.4,22.1 L30.6,22.6 L29.9,23.0 L29.1,23.4 L28.4,23.9 L27.6,24.3 L26.9,24.7 L26.1,25.1 L25.3,25.6 L24.7,26.1 L24.0,26.7 L23.3,27.3 L22.7,27.9 L22.0,28.5 L21.4,29.1 L20.7,29.7 L20.1,30.4 L19.5,31.0 L18.8,31.6 L18.2,32.3 L17.6,32.9 L17.0,33.6 L16.4,34.3 L15.8,35.0 L15.3,35.7 L14.7,36.4 L14.2,37.2 L13.7,37.9 L13.2,38.7 L12.7,39.5 L12.2,40.3 L11.8,41.1 L11.4,41.9 L11.0,42.8 L10.6,43.7 L10.2,44.5 L9.9,45.5 L9.6,46.4 L9.3,47.3 L9.0,48.3 L8.8,49.3 L8.6,50.3 L8.4,51.4 L8.3,52.4Z"/></g></svg><div style="left:271.70px;top:702.10px;width:13.20px;height:12.20px;background:#525252;"></div><svg style="position:absolute;left:271.70px;top:702.10px;overflow:visible;" width="13.2" height="12.2" viewBox="0 0 13.2 12.2"><path d="M10,3 L6.5,6.8" stroke="#f0f0f0" stroke-width="1.5" stroke-linecap="round"/><ellipse cx="5" cy="8" rx="2.2" ry="1.5" transform="rotate(-35 5 8)" fill="#f0f0f0"/><path d="M3.5,9.8 Q7,9.3 9.5,8.8" fill="none" stroke="#d0d0d0" stroke-width="0.7"/></svg><span class="t" style="left:-238.25px;width:1000px;text-align:center;top:719.26px;font-size:6.9px;color:#cfcfcf;">#02 Wet Paint</span><svg style="position:absolute;left:292.50px;top:659.80px;overflow:visible;" width="54.5" height="54.5" viewBox="0 0 54.5 54.5"><rect width="54.5" height="54.5" fill="#6c6c6c"/><g filter="url(#r1)"><path fill="#ffffff" opacity="0.75" d="M7.7,45.9 L8.1,45.1 L8.6,44.4 L9.0,43.6 L9.5,42.9 L9.9,42.3 L10.4,41.6 L10.9,41.0 L11.4,40.4 L11.9,39.8 L12.4,39.3 L12.9,38.7 L13.4,38.2 L14.0,37.7 L14.5,37.2 L15.1,36.7 L15.6,36.3 L16.2,35.8 L16.8,35.4 L17.4,35.0 L18.0,34.6 L18.6,34.2 L19.2,33.8 L19.8,33.4 L20.5,33.0 L21.1,32.7 L21.7,32.3 L22.4,31.9 L23.0,31.6 L23.6,31.1 L24.2,30.6 L24.7,30.1 L25.3,29.6 L25.9,29.2 L26.5,28.7 L27.1,28.2 L27.7,27.7 L28.4,27.2 L29.0,26.7 L29.6,26.2 L30.2,25.7 L30.8,25.2 L31.4,24.7 L32.1,24.2 L32.7,23.6 L33.3,23.1 L33.9,22.6 L34.5,22.0 L35.1,21.5 L35.7,20.9 L36.3,20.4 L36.9,19.8 L37.5,19.2 L38.1,18.6 L38.6,18.0 L39.2,17.3 L39.7,16.7 L40.3,16.0 L40.8,15.4 L41.3,14.7 L41.8,14.0 L42.3,13.3 L42.8,12.6 L43.2,11.8 L43.7,11.1 L44.1,10.3 L44.5,9.5 L44.9,8.7 L45.3,7.9 L45.6,7.0 L45.9,6.1 L45.9,6.1 L45.4,6.9 L44.9,7.7 L44.4,8.4 L43.9,9.1 L43.3,9.8 L42.8,10.5 L42.2,11.1 L41.7,11.7 L41.1,12.3 L40.5,12.9 L39.9,13.5 L39.3,14.0 L38.7,14.6 L38.1,15.1 L37.5,15.6 L36.9,16.1 L36.2,16.5 L35.6,17.0 L35.0,17.5 L34.3,17.9 L33.7,18.3 L33.0,18.8 L32.4,19.2 L31.7,19.6 L31.0,20.0 L30.4,20.4 L29.7,20.8 L29.0,21.2 L28.3,21.6 L27.6,21.9 L27.0,22.3 L26.3,22.7 L25.6,23.1 L24.9,23.5 L24.2,23.8 L23.5,24.2 L22.8,24.6 L22.2,25.0 L21.5,25.4 L20.8,25.8 L20.1,26.2 L19.4,26.6 L18.8,27.1 L18.3,27.7 L17.7,28.3 L17.1,28.8 L16.6,29.4 L16.0,30.0 L15.5,30.6 L14.9,31.2 L14.4,31.8 L13.9,32.4 L13.4,33.1 L12.9,33.7 L12.5,34.4 L12.0,35.1 L11.6,35.7 L11.2,36.4 L10.8,37.1 L10.4,37.9 L10.0,38.6 L9.7,39.3 L9.3,40.1 L9.0,40.9 L8.8,41.7 L8.5,42.5 L8.3,43.3 L8.0,44.1 L7.9,45.0 L7.7,45.9Z"/><path fill="#ffffff" opacity="0.75" d="M8.8,46.9 L9.2,46.1 L9.6,45.4 L10.0,44.6 L10.5,43.9 L10.9,43.2 L11.4,42.6 L11.9,41.9 L12.4,41.3 L12.9,40.7 L13.4,40.1 L13.9,39.6 L14.4,39.0 L14.9,38.5 L15.5,38.0 L16.0,37.5 L16.6,37.1 L17.1,36.6 L17.7,36.2 L18.3,35.7 L18.9,35.3 L19.5,34.9 L20.1,34.5 L20.7,34.1 L21.3,33.7 L21.9,33.3 L22.5,33.0 L23.2,32.6 L23.8,32.2 L24.4,31.7 L24.9,31.2 L25.5,30.7 L26.1,30.3 L26.7,29.8 L27.2,29.3 L27.8,28.8 L28.4,28.3 L29.0,27.8 L29.6,27.3 L30.2,26.8 L30.8,26.3 L31.4,25.7 L32.0,25.2 L32.6,24.7 L33.2,24.2 L33.8,23.6 L34.4,23.1 L35.0,22.5 L35.6,22.0 L36.2,21.4 L36.8,20.8 L37.3,20.2 L37.9,19.6 L38.5,19.0 L39.0,18.4 L39.6,17.7 L40.1,17.1 L40.6,16.4 L41.1,15.7 L41.6,15.0 L42.1,14.3 L42.6,13.6 L43.0,12.9 L43.5,12.1 L43.9,11.4 L44.3,10.6 L44.7,9.8 L45.1,8.9 L45.5,8.1 L45.8,7.2 L46.1,6.3 L46.1,6.3 L45.6,7.1 L45.1,7.9 L44.6,8.7 L44.1,9.4 L43.6,10.1 L43.0,10.8 L42.5,11.4 L41.9,12.1 L41.4,12.7 L40.8,13.3 L40.2,13.9 L39.6,14.4 L39.0,15.0 L38.4,15.5 L37.8,16.0 L37.2,16.5 L36.6,17.0 L36.0,17.5 L35.4,17.9 L34.7,18.4 L34.1,18.8 L33.4,19.3 L32.8,19.7 L32.1,20.1 L31.5,20.5 L30.8,21.0 L30.2,21.4 L29.5,21.8 L28.8,22.2 L28.2,22.5 L27.5,22.9 L26.8,23.3 L26.2,23.7 L25.5,24.1 L24.8,24.5 L24.2,24.9 L23.5,25.3 L22.8,25.7 L22.1,26.1 L21.5,26.5 L20.8,26.9 L20.1,27.3 L19.5,27.9 L19.0,28.4 L18.4,29.0 L17.9,29.6 L17.3,30.2 L16.8,30.8 L16.3,31.4 L15.8,32.0 L15.3,32.6 L14.8,33.3 L14.3,33.9 L13.8,34.6 L13.4,35.2 L12.9,35.9 L12.5,36.6 L12.1,37.3 L11.7,38.0 L11.3,38.8 L11.0,39.5 L10.6,40.3 L10.3,41.1 L10.0,41.8 L9.8,42.6 L9.5,43.5 L9.3,44.3 L9.1,45.2 L8.9,46.0 L8.8,46.9Z"/><path fill="#ffffff" opacity="0.75" d="M9.8,48.0 L10.2,47.2 L10.6,46.4 L11.1,45.6 L11.5,44.9 L12.0,44.2 L12.4,43.5 L12.9,42.8 L13.4,42.2 L13.8,41.6 L14.3,41.0 L14.8,40.4 L15.4,39.9 L15.9,39.3 L16.4,38.8 L16.9,38.3 L17.5,37.8 L18.1,37.4 L18.6,36.9 L19.2,36.5 L19.8,36.0 L20.3,35.6 L20.9,35.2 L21.5,34.8 L22.1,34.4 L22.8,34.0 L23.4,33.6 L24.0,33.3 L24.6,32.9 L25.2,32.4 L25.7,31.9 L26.3,31.4 L26.8,30.9 L27.4,30.4 L27.9,29.9 L28.5,29.4 L29.1,28.9 L29.7,28.3 L30.3,27.8 L30.8,27.3 L31.4,26.8 L32.0,26.3 L32.6,25.7 L33.2,25.2 L33.8,24.7 L34.4,24.1 L34.9,23.6 L35.5,23.0 L36.1,22.4 L36.7,21.8 L37.2,21.3 L37.8,20.7 L38.3,20.0 L38.9,19.4 L39.4,18.8 L39.9,18.1 L40.5,17.5 L41.0,16.8 L41.5,16.1 L42.0,15.4 L42.4,14.7 L42.9,13.9 L43.3,13.2 L43.8,12.4 L44.2,11.6 L44.6,10.8 L45.0,10.0 L45.3,9.2 L45.7,8.3 L46.0,7.4 L46.3,6.5 L46.3,6.5 L45.8,7.4 L45.3,8.1 L44.8,8.9 L44.3,9.7 L43.8,10.4 L43.3,11.1 L42.7,11.7 L42.2,12.4 L41.6,13.0 L41.1,13.6 L40.5,14.2 L39.9,14.8 L39.4,15.4 L38.8,15.9 L38.2,16.4 L37.6,17.0 L37.0,17.5 L36.4,18.0 L35.7,18.4 L35.1,18.9 L34.5,19.4 L33.9,19.8 L33.2,20.2 L32.6,20.7 L32.0,21.1 L31.3,21.5 L30.7,21.9 L30.0,22.3 L29.4,22.7 L28.7,23.1 L28.1,23.5 L27.4,23.9 L26.7,24.3 L26.1,24.7 L25.4,25.1 L24.8,25.5 L24.1,25.9 L23.4,26.4 L22.8,26.8 L22.1,27.2 L21.5,27.6 L20.8,28.0 L20.3,28.6 L19.7,29.2 L19.2,29.8 L18.6,30.4 L18.1,31.0 L17.6,31.6 L17.1,32.2 L16.6,32.8 L16.1,33.4 L15.6,34.1 L15.1,34.7 L14.7,35.4 L14.2,36.1 L13.8,36.8 L13.4,37.5 L13.0,38.2 L12.6,38.9 L12.3,39.7 L11.9,40.4 L11.6,41.2 L11.3,42.0 L11.0,42.8 L10.8,43.6 L10.5,44.5 L10.3,45.3 L10.1,46.2 L9.9,47.1 L9.8,48.0Z"/><path fill="#ffffff" opacity="0.75" d="M10.9,49.0 L11.3,48.2 L11.7,47.4 L12.1,46.6 L12.5,45.8 L13.0,45.1 L13.4,44.4 L13.9,43.8 L14.3,43.1 L14.8,42.5 L15.3,41.9 L15.8,41.3 L16.3,40.7 L16.8,40.2 L17.4,39.6 L17.9,39.1 L18.4,38.6 L19.0,38.1 L19.5,37.7 L20.1,37.2 L20.6,36.8 L21.2,36.3 L21.8,35.9 L22.4,35.5 L23.0,35.1 L23.6,34.7 L24.2,34.3 L24.8,33.9 L25.4,33.5 L25.9,33.0 L26.5,32.5 L27.0,32.0 L27.5,31.5 L28.1,31.0 L28.6,30.5 L29.2,29.9 L29.8,29.4 L30.3,28.9 L30.9,28.4 L31.5,27.9 L32.0,27.3 L32.6,26.8 L33.2,26.3 L33.8,25.7 L34.3,25.2 L34.9,24.6 L35.5,24.1 L36.0,23.5 L36.6,22.9 L37.1,22.3 L37.7,21.7 L38.2,21.1 L38.8,20.5 L39.3,19.8 L39.8,19.2 L40.3,18.5 L40.8,17.9 L41.3,17.2 L41.8,16.5 L42.3,15.7 L42.7,15.0 L43.2,14.3 L43.6,13.5 L44.0,12.7 L44.4,11.9 L44.8,11.1 L45.2,10.3 L45.6,9.4 L45.9,8.6 L46.2,7.7 L46.5,6.7 L46.5,6.7 L46.0,7.6 L45.6,8.4 L45.1,9.2 L44.6,9.9 L44.0,10.7 L43.5,11.4 L43.0,12.1 L42.5,12.7 L41.9,13.4 L41.4,14.0 L40.8,14.6 L40.3,15.2 L39.7,15.8 L39.1,16.3 L38.5,16.9 L37.9,17.4 L37.3,17.9 L36.7,18.4 L36.1,18.9 L35.5,19.4 L34.9,19.9 L34.3,20.3 L33.7,20.8 L33.1,21.2 L32.4,21.7 L31.8,22.1 L31.2,22.5 L30.5,22.9 L29.9,23.3 L29.3,23.7 L28.6,24.2 L28.0,24.6 L27.3,25.0 L26.7,25.4 L26.0,25.8 L25.4,26.2 L24.7,26.6 L24.1,27.0 L23.4,27.5 L22.8,27.9 L22.1,28.3 L21.5,28.8 L21.0,29.3 L20.4,29.9 L19.9,30.5 L19.4,31.1 L18.9,31.7 L18.4,32.3 L17.9,33.0 L17.4,33.6 L16.9,34.3 L16.4,34.9 L16.0,35.6 L15.6,36.3 L15.1,36.9 L14.7,37.6 L14.3,38.4 L13.9,39.1 L13.6,39.8 L13.2,40.6 L12.9,41.4 L12.6,42.1 L12.3,42.9 L12.0,43.8 L11.8,44.6 L11.5,45.4 L11.3,46.3 L11.1,47.2 L11.0,48.1 L10.9,49.0Z"/><path fill="#ffffff" opacity="0.75" d="M11.9,50.1 L12.3,49.2 L12.7,48.4 L13.1,47.6 L13.5,46.8 L14.0,46.1 L14.4,45.4 L14.9,44.7 L15.3,44.0 L15.8,43.4 L16.3,42.7 L16.8,42.1 L17.3,41.6 L17.8,41.0 L18.3,40.5 L18.8,39.9 L19.3,39.4 L19.9,38.9 L20.4,38.4 L21.0,38.0 L21.5,37.5 L22.1,37.1 L22.7,36.6 L23.2,36.2 L23.8,35.8 L24.4,35.4 L25.0,35.0 L25.6,34.6 L26.2,34.2 L26.7,33.6 L27.2,33.1 L27.8,32.6 L28.3,32.1 L28.8,31.6 L29.4,31.1 L29.9,30.5 L30.4,30.0 L31.0,29.5 L31.5,29.0 L32.1,28.4 L32.7,27.9 L33.2,27.3 L33.8,26.8 L34.3,26.2 L34.9,25.7 L35.4,25.1 L36.0,24.5 L36.5,24.0 L37.1,23.4 L37.6,22.8 L38.1,22.2 L38.7,21.5 L39.2,20.9 L39.7,20.3 L40.2,19.6 L40.7,18.9 L41.2,18.2 L41.7,17.5 L42.1,16.8 L42.6,16.1 L43.0,15.4 L43.5,14.6 L43.9,13.8 L44.3,13.0 L44.7,12.2 L45.1,11.4 L45.4,10.5 L45.8,9.7 L46.1,8.8 L46.4,7.9 L46.7,6.9 L46.7,6.9 L46.2,7.8 L45.8,8.6 L45.3,9.4 L44.8,10.2 L44.3,10.9 L43.8,11.7 L43.3,12.4 L42.7,13.1 L42.2,13.7 L41.7,14.4 L41.1,15.0 L40.6,15.6 L40.0,16.2 L39.4,16.8 L38.9,17.3 L38.3,17.9 L37.7,18.4 L37.1,18.9 L36.5,19.4 L35.9,19.9 L35.3,20.4 L34.7,20.8 L34.1,21.3 L33.5,21.8 L32.9,22.2 L32.3,22.6 L31.7,23.1 L31.0,23.5 L30.4,23.9 L29.8,24.4 L29.2,24.8 L28.5,25.2 L27.9,25.6 L27.3,26.0 L26.6,26.5 L26.0,26.9 L25.4,27.3 L24.7,27.7 L24.1,28.2 L23.5,28.6 L22.8,29.0 L22.2,29.5 L21.7,30.1 L21.2,30.7 L20.6,31.3 L20.1,31.9 L19.6,32.5 L19.2,33.1 L18.7,33.8 L18.2,34.4 L17.7,35.1 L17.3,35.7 L16.9,36.4 L16.4,37.1 L16.0,37.8 L15.6,38.5 L15.2,39.2 L14.9,40.0 L14.5,40.7 L14.2,41.5 L13.9,42.3 L13.6,43.1 L13.3,43.9 L13.0,44.7 L12.8,45.6 L12.6,46.4 L12.4,47.3 L12.2,48.2 L12.0,49.1 L11.9,50.1Z"/></g></svg><div style="left:329.70px;top:702.10px;width:13.20px;height:12.20px;background:#525252;"></div><svg style="position:absolute;left:329.70px;top:702.10px;overflow:visible;" width="13.2" height="12.2" viewBox="0 0 13.2 12.2"><path d="M10,3 L6.5,6.8" stroke="#f0f0f0" stroke-width="1.5" stroke-linecap="round"/><ellipse cx="5" cy="8" rx="2.2" ry="1.5" transform="rotate(-35 5 8)" fill="#f0f0f0"/><path d="M3.5,9.8 Q7,9.3 9.5,8.8" fill="none" stroke="#d0d0d0" stroke-width="0.7"/></svg><span class="t" style="left:-180.25px;width:1000px;text-align:center;top:719.26px;font-size:6.9px;color:#cfcfcf;">#03 Wet Paint</span><svg style="position:absolute;left:350.50px;top:659.80px;overflow:visible;" width="54.5" height="54.5" viewBox="0 0 54.5 54.5"><rect width="54.5" height="54.5" fill="#6c6c6c"/><g filter="url(#r1)"><path fill="#ffffff" opacity="0.75" d="M4.4,48.0 L4.9,47.2 L5.4,46.3 L5.9,45.5 L6.4,44.7 L6.9,43.9 L7.4,43.2 L7.9,42.5 L8.5,41.8 L9.0,41.1 L9.6,40.5 L10.2,39.8 L10.8,39.2 L11.4,38.6 L12.0,38.1 L12.6,37.5 L13.3,37.0 L13.9,36.5 L14.6,36.0 L15.2,35.5 L15.9,35.0 L16.6,34.5 L17.3,34.1 L18.0,33.6 L18.7,33.2 L19.4,32.8 L20.1,32.4 L20.8,31.9 L21.6,31.5 L22.3,31.1 L23.0,30.7 L23.8,30.3 L24.5,29.8 L25.2,29.3 L25.8,28.7 L26.5,28.1 L27.2,27.6 L27.9,27.0 L28.6,26.4 L29.3,25.9 L30.0,25.3 L30.7,24.7 L31.4,24.1 L32.1,23.5 L32.7,22.9 L33.4,22.3 L34.1,21.7 L34.8,21.1 L35.5,20.4 L36.2,19.8 L36.8,19.1 L37.5,18.5 L38.1,17.8 L38.8,17.1 L39.4,16.4 L40.0,15.7 L40.7,14.9 L41.3,14.2 L41.8,13.4 L42.4,12.7 L43.0,11.9 L43.5,11.0 L44.0,10.2 L44.6,9.4 L45.0,8.5 L45.5,7.6 L46.0,6.7 L46.4,5.8 L46.8,4.8 L47.2,3.9 L47.6,2.9 L47.6,2.9 L47.0,3.8 L46.4,4.6 L45.8,5.4 L45.2,6.2 L44.6,7.0 L44.0,7.8 L43.3,8.5 L42.7,9.2 L42.0,9.9 L41.4,10.5 L40.7,11.2 L40.0,11.8 L39.3,12.4 L38.6,13.0 L37.9,13.5 L37.2,14.1 L36.5,14.6 L35.8,15.1 L35.1,15.6 L34.3,16.1 L33.6,16.6 L32.9,17.1 L32.1,17.6 L31.4,18.0 L30.6,18.5 L29.9,18.9 L29.1,19.4 L28.3,19.8 L27.6,20.2 L26.8,20.7 L26.0,21.1 L25.2,21.5 L24.5,21.9 L23.7,22.4 L22.9,22.8 L22.1,23.2 L21.3,23.6 L20.6,24.1 L19.8,24.6 L19.2,25.2 L18.5,25.8 L17.8,26.4 L17.2,27.0 L16.5,27.6 L15.9,28.3 L15.2,28.9 L14.6,29.6 L14.0,30.2 L13.3,30.9 L12.7,31.6 L12.2,32.2 L11.6,32.9 L11.0,33.7 L10.5,34.4 L9.9,35.1 L9.4,35.9 L8.9,36.6 L8.4,37.4 L8.0,38.2 L7.5,39.0 L7.1,39.8 L6.7,40.7 L6.4,41.5 L6.0,42.4 L5.7,43.3 L5.4,44.2 L5.1,45.1 L4.8,46.1 L4.6,47.1 L4.4,48.0Z"/><path fill="#ffffff" opacity="0.75" d="M5.5,49.1 L6.0,48.2 L6.4,47.3 L6.9,46.5 L7.4,45.7 L7.9,44.9 L8.4,44.1 L8.9,43.4 L9.5,42.7 L10.0,42.0 L10.6,41.3 L11.2,40.7 L11.7,40.1 L12.3,39.5 L12.9,38.9 L13.6,38.3 L14.2,37.8 L14.8,37.3 L15.5,36.7 L16.1,36.2 L16.8,35.8 L17.4,35.3 L18.1,34.8 L18.8,34.4 L19.5,33.9 L20.2,33.5 L20.9,33.0 L21.6,32.6 L22.3,32.2 L23.1,31.7 L23.8,31.3 L24.6,30.9 L25.3,30.4 L25.9,29.9 L26.6,29.3 L27.2,28.7 L27.9,28.2 L28.6,27.6 L29.2,27.0 L29.9,26.4 L30.6,25.8 L31.3,25.3 L31.9,24.7 L32.6,24.1 L33.3,23.4 L34.0,22.8 L34.6,22.2 L35.3,21.6 L36.0,20.9 L36.6,20.3 L37.3,19.6 L37.9,18.9 L38.6,18.2 L39.2,17.5 L39.8,16.8 L40.4,16.1 L41.0,15.3 L41.6,14.6 L42.2,13.8 L42.7,13.0 L43.3,12.2 L43.8,11.4 L44.3,10.5 L44.8,9.7 L45.3,8.8 L45.8,7.9 L46.2,7.0 L46.6,6.0 L47.0,5.1 L47.4,4.1 L47.8,3.1 L47.8,3.1 L47.2,4.0 L46.6,4.8 L46.0,5.7 L45.4,6.5 L44.8,7.3 L44.2,8.1 L43.6,8.8 L43.0,9.5 L42.3,10.2 L41.7,10.9 L41.0,11.5 L40.3,12.2 L39.7,12.8 L39.0,13.4 L38.3,14.0 L37.6,14.5 L36.9,15.1 L36.2,15.6 L35.5,16.1 L34.7,16.6 L34.0,17.1 L33.3,17.6 L32.6,18.1 L31.8,18.6 L31.1,19.0 L30.3,19.5 L29.6,19.9 L28.8,20.4 L28.1,20.8 L27.3,21.3 L26.6,21.7 L25.8,22.1 L25.0,22.6 L24.3,23.0 L23.5,23.4 L22.7,23.9 L22.0,24.3 L21.2,24.8 L20.5,25.3 L19.8,25.9 L19.2,26.5 L18.5,27.1 L17.9,27.7 L17.2,28.4 L16.6,29.0 L16.0,29.7 L15.4,30.3 L14.7,31.0 L14.1,31.7 L13.6,32.4 L13.0,33.1 L12.4,33.8 L11.9,34.5 L11.3,35.2 L10.8,36.0 L10.3,36.7 L9.8,37.5 L9.4,38.3 L8.9,39.1 L8.5,39.9 L8.1,40.8 L7.7,41.6 L7.3,42.5 L7.0,43.4 L6.7,44.3 L6.4,45.2 L6.1,46.1 L5.9,47.1 L5.7,48.1 L5.5,49.1Z"/><path fill="#ffffff" opacity="0.75" d="M6.5,50.1 L7.0,49.2 L7.5,48.3 L7.9,47.5 L8.4,46.6 L8.9,45.8 L9.4,45.0 L9.9,44.3 L10.5,43.6 L11.0,42.9 L11.6,42.2 L12.1,41.5 L12.7,40.9 L13.3,40.3 L13.9,39.7 L14.5,39.1 L15.1,38.6 L15.7,38.0 L16.4,37.5 L17.0,37.0 L17.7,36.5 L18.3,36.0 L19.0,35.5 L19.7,35.1 L20.3,34.6 L21.0,34.1 L21.7,33.7 L22.4,33.3 L23.1,32.8 L23.9,32.4 L24.6,32.0 L25.3,31.5 L26.0,31.0 L26.6,30.5 L27.3,29.9 L27.9,29.3 L28.6,28.7 L29.2,28.2 L29.9,27.6 L30.5,27.0 L31.2,26.4 L31.9,25.8 L32.5,25.2 L33.2,24.6 L33.9,24.0 L34.5,23.3 L35.2,22.7 L35.8,22.0 L36.5,21.4 L37.1,20.7 L37.8,20.0 L38.4,19.4 L39.0,18.7 L39.6,17.9 L40.2,17.2 L40.8,16.5 L41.4,15.7 L42.0,14.9 L42.5,14.2 L43.1,13.4 L43.6,12.5 L44.1,11.7 L44.6,10.8 L45.1,10.0 L45.6,9.1 L46.0,8.2 L46.5,7.2 L46.9,6.3 L47.3,5.3 L47.6,4.3 L48.0,3.3 L48.0,3.3 L47.4,4.2 L46.8,5.1 L46.2,5.9 L45.7,6.8 L45.1,7.6 L44.5,8.4 L43.8,9.1 L43.2,9.9 L42.6,10.6 L41.9,11.3 L41.3,11.9 L40.6,12.6 L40.0,13.2 L39.3,13.8 L38.6,14.4 L37.9,15.0 L37.3,15.5 L36.6,16.1 L35.9,16.6 L35.2,17.1 L34.4,17.6 L33.7,18.1 L33.0,18.6 L32.3,19.1 L31.5,19.6 L30.8,20.1 L30.1,20.5 L29.3,21.0 L28.6,21.4 L27.9,21.9 L27.1,22.3 L26.4,22.8 L25.6,23.2 L24.9,23.6 L24.1,24.1 L23.3,24.5 L22.6,25.0 L21.8,25.5 L21.1,26.0 L20.5,26.6 L19.9,27.2 L19.2,27.8 L18.6,28.5 L18.0,29.1 L17.3,29.8 L16.7,30.4 L16.1,31.1 L15.5,31.8 L15.0,32.5 L14.4,33.2 L13.8,33.9 L13.3,34.6 L12.7,35.3 L12.2,36.1 L11.7,36.8 L11.2,37.6 L10.8,38.4 L10.3,39.2 L9.9,40.0 L9.5,40.8 L9.1,41.7 L8.7,42.6 L8.3,43.4 L8.0,44.3 L7.7,45.3 L7.4,46.2 L7.1,47.1 L6.9,48.1 L6.7,49.1 L6.5,50.1Z"/><path fill="#ffffff" opacity="0.75" d="M7.6,51.2 L8.0,50.2 L8.5,49.3 L9.0,48.5 L9.4,47.6 L9.9,46.8 L10.4,46.0 L10.9,45.2 L11.5,44.5 L12.0,43.8 L12.5,43.1 L13.1,42.4 L13.7,41.7 L14.2,41.1 L14.8,40.5 L15.4,39.9 L16.0,39.4 L16.6,38.8 L17.3,38.3 L17.9,37.7 L18.5,37.2 L19.2,36.7 L19.8,36.2 L20.5,35.8 L21.2,35.3 L21.9,34.8 L22.5,34.4 L23.2,33.9 L23.9,33.5 L24.6,33.0 L25.3,32.6 L26.1,32.2 L26.7,31.6 L27.4,31.1 L28.0,30.5 L28.6,29.9 L29.2,29.3 L29.9,28.7 L30.5,28.1 L31.2,27.5 L31.8,26.9 L32.5,26.3 L33.1,25.7 L33.8,25.1 L34.4,24.5 L35.1,23.8 L35.7,23.2 L36.3,22.5 L37.0,21.9 L37.6,21.2 L38.2,20.5 L38.8,19.8 L39.4,19.1 L40.0,18.4 L40.6,17.6 L41.2,16.9 L41.8,16.1 L42.3,15.3 L42.9,14.5 L43.4,13.7 L43.9,12.9 L44.4,12.0 L44.9,11.2 L45.4,10.3 L45.8,9.4 L46.3,8.4 L46.7,7.5 L47.1,6.5 L47.5,5.5 L47.8,4.5 L48.2,3.5 L48.2,3.5 L47.6,4.4 L47.0,5.3 L46.5,6.2 L45.9,7.0 L45.3,7.9 L44.7,8.7 L44.1,9.4 L43.5,10.2 L42.9,10.9 L42.2,11.6 L41.6,12.3 L41.0,13.0 L40.3,13.6 L39.6,14.2 L39.0,14.8 L38.3,15.4 L37.6,16.0 L36.9,16.6 L36.3,17.1 L35.6,17.6 L34.9,18.2 L34.2,18.7 L33.4,19.2 L32.7,19.7 L32.0,20.1 L31.3,20.6 L30.6,21.1 L29.8,21.6 L29.1,22.0 L28.4,22.5 L27.7,22.9 L26.9,23.4 L26.2,23.8 L25.4,24.3 L24.7,24.8 L24.0,25.2 L23.2,25.7 L22.5,26.1 L21.8,26.7 L21.2,27.3 L20.5,27.9 L19.9,28.6 L19.3,29.2 L18.7,29.9 L18.1,30.5 L17.5,31.2 L16.9,31.9 L16.3,32.5 L15.8,33.2 L15.2,34.0 L14.7,34.7 L14.1,35.4 L13.6,36.1 L13.1,36.9 L12.6,37.7 L12.1,38.5 L11.7,39.3 L11.2,40.1 L10.8,40.9 L10.4,41.7 L10.0,42.6 L9.7,43.5 L9.3,44.4 L9.0,45.3 L8.7,46.2 L8.4,47.2 L8.2,48.1 L7.9,49.1 L7.7,50.1 L7.6,51.2Z"/><path fill="#ffffff" opacity="0.75" d="M8.6,52.2 L9.1,51.3 L9.5,50.3 L10.0,49.4 L10.5,48.6 L10.9,47.7 L11.4,46.9 L11.9,46.1 L12.4,45.4 L13.0,44.6 L13.5,43.9 L14.1,43.3 L14.6,42.6 L15.2,42.0 L15.8,41.3 L16.4,40.7 L17.0,40.1 L17.6,39.6 L18.2,39.0 L18.8,38.5 L19.4,38.0 L20.1,37.5 L20.7,37.0 L21.4,36.5 L22.0,36.0 L22.7,35.5 L23.4,35.0 L24.0,34.6 L24.7,34.1 L25.4,33.7 L26.1,33.2 L26.8,32.8 L27.5,32.3 L28.1,31.7 L28.7,31.1 L29.3,30.5 L29.9,29.9 L30.5,29.3 L31.2,28.7 L31.8,28.1 L32.4,27.5 L33.1,26.9 L33.7,26.2 L34.3,25.6 L35.0,25.0 L35.6,24.3 L36.2,23.7 L36.8,23.0 L37.5,22.3 L38.1,21.6 L38.7,20.9 L39.3,20.2 L39.9,19.5 L40.4,18.8 L41.0,18.0 L41.6,17.3 L42.1,16.5 L42.7,15.7 L43.2,14.9 L43.7,14.1 L44.2,13.2 L44.7,12.3 L45.2,11.5 L45.7,10.6 L46.1,9.6 L46.5,8.7 L46.9,7.7 L47.3,6.8 L47.7,5.8 L48.0,4.7 L48.4,3.7 L48.4,3.7 L47.8,4.6 L47.2,5.5 L46.7,6.4 L46.1,7.3 L45.5,8.2 L45.0,9.0 L44.4,9.8 L43.8,10.5 L43.1,11.3 L42.5,12.0 L41.9,12.7 L41.3,13.4 L40.6,14.0 L40.0,14.7 L39.3,15.3 L38.7,15.9 L38.0,16.5 L37.3,17.0 L36.6,17.6 L36.0,18.1 L35.3,18.7 L34.6,19.2 L33.9,19.7 L33.2,20.2 L32.5,20.7 L31.8,21.2 L31.1,21.7 L30.4,22.1 L29.6,22.6 L28.9,23.1 L28.2,23.5 L27.5,24.0 L26.8,24.5 L26.0,24.9 L25.3,25.4 L24.6,25.9 L23.8,26.4 L23.1,26.8 L22.4,27.4 L21.8,28.0 L21.2,28.7 L20.6,29.3 L20.0,29.9 L19.4,30.6 L18.8,31.3 L18.3,32.0 L17.7,32.6 L17.1,33.3 L16.6,34.0 L16.0,34.8 L15.5,35.5 L15.0,36.2 L14.5,37.0 L14.0,37.7 L13.5,38.5 L13.0,39.3 L12.6,40.1 L12.2,41.0 L11.8,41.8 L11.4,42.7 L11.0,43.5 L10.6,44.4 L10.3,45.3 L10.0,46.3 L9.7,47.2 L9.4,48.2 L9.2,49.1 L9.0,50.2 L8.8,51.2 L8.6,52.2Z"/></g></svg><div style="left:387.70px;top:702.10px;width:13.20px;height:12.20px;background:#525252;"></div><svg style="position:absolute;left:387.70px;top:702.10px;overflow:visible;" width="13.2" height="12.2" viewBox="0 0 13.2 12.2"><path d="M10,3 L6.5,6.8" stroke="#f0f0f0" stroke-width="1.5" stroke-linecap="round"/><ellipse cx="5" cy="8" rx="2.2" ry="1.5" transform="rotate(-35 5 8)" fill="#f0f0f0"/><path d="M3.5,9.8 Q7,9.3 9.5,8.8" fill="none" stroke="#d0d0d0" stroke-width="0.7"/></svg><span class="t" style="left:-122.25px;width:1000px;text-align:center;top:719.26px;font-size:6.9px;color:#cfcfcf;">#04 Wet Paint</span><svg style="position:absolute;left:408.50px;top:659.80px;overflow:visible;" width="54.5" height="54.5" viewBox="0 0 54.5 54.5"><rect width="54.5" height="54.5" fill="#6c6c6c"/><g><path fill="#ffffff" opacity="0.65" d="M3.5,49.8 L3.8,48.7 L4.0,47.6 L4.4,46.6 L4.7,45.6 L5.1,44.6 L5.5,43.7 L5.9,42.8 L6.3,42.0 L6.8,41.2 L7.3,40.4 L7.8,39.7 L8.4,38.9 L8.9,38.3 L9.5,37.6 L10.1,37.0 L10.7,36.4 L11.3,35.8 L12.0,35.3 L12.6,34.7 L13.3,34.2 L14.0,33.7 L14.7,33.2 L15.4,32.7 L16.2,32.3 L16.9,31.8 L17.7,31.4 L18.4,31.0 L19.2,30.6 L20.0,30.2 L20.8,29.8 L21.6,29.4 L22.5,29.0 L23.3,28.6 L24.1,28.2 L25.0,27.8 L25.8,27.3 L26.6,26.8 L27.4,26.3 L28.2,25.8 L29.0,25.3 L29.8,24.8 L30.6,24.3 L31.4,23.8 L32.2,23.3 L33.0,22.7 L33.8,22.2 L34.6,21.6 L35.4,21.0 L36.2,20.4 L37.0,19.8 L37.7,19.2 L38.5,18.5 L39.2,17.8 L39.9,17.1 L40.6,16.4 L41.3,15.7 L42.0,14.9 L42.6,14.1 L43.3,13.3 L43.9,12.5 L44.5,11.6 L45.1,10.7 L45.6,9.8 L46.1,8.8 L46.6,7.8 L47.1,6.8 L47.5,5.7 L48.0,4.7 L48.3,3.5 L48.7,2.4 L48.7,2.4 L48.2,3.5 L47.7,4.5 L47.2,5.6 L46.6,6.6 L46.0,7.5 L45.4,8.4 L44.8,9.3 L44.2,10.1 L43.6,10.9 L42.9,11.7 L42.2,12.4 L41.6,13.1 L40.8,13.8 L40.1,14.5 L39.4,15.1 L38.7,15.7 L37.9,16.3 L37.1,16.9 L36.4,17.4 L35.6,17.9 L34.8,18.4 L34.0,18.9 L33.2,19.4 L32.4,19.9 L31.6,20.3 L30.7,20.7 L29.9,21.2 L29.1,21.6 L28.2,22.0 L27.4,22.4 L26.5,22.8 L25.7,23.2 L24.8,23.6 L24.0,24.0 L23.1,24.4 L22.3,24.9 L21.5,25.4 L20.7,25.8 L20.0,26.3 L19.2,26.8 L18.4,27.3 L17.6,27.9 L16.8,28.4 L16.1,28.9 L15.3,29.5 L14.6,30.0 L13.9,30.6 L13.2,31.2 L12.5,31.8 L11.8,32.4 L11.2,33.1 L10.5,33.7 L9.9,34.4 L9.3,35.1 L8.7,35.8 L8.2,36.6 L7.7,37.3 L7.2,38.1 L6.7,38.9 L6.2,39.8 L5.8,40.6 L5.4,41.5 L5.1,42.5 L4.7,43.4 L4.4,44.4 L4.2,45.4 L4.0,46.5 L3.8,47.5 L3.6,48.7 L3.5,49.8Z"/><path fill="#ffffff" opacity="0.65" d="M4.8,51.1 L5.1,50.0 L5.3,48.9 L5.7,47.8 L6.0,46.8 L6.4,45.8 L6.7,44.9 L7.2,44.0 L7.6,43.1 L8.1,42.3 L8.5,41.5 L9.1,40.7 L9.6,40.0 L10.1,39.3 L10.7,38.6 L11.3,38.0 L11.9,37.4 L12.5,36.8 L13.1,36.2 L13.8,35.6 L14.4,35.1 L15.1,34.6 L15.8,34.1 L16.5,33.6 L17.2,33.2 L18.0,32.7 L18.7,32.3 L19.4,31.8 L20.2,31.4 L21.0,31.0 L21.8,30.6 L22.6,30.2 L23.4,29.7 L24.2,29.3 L25.0,28.9 L25.8,28.5 L26.6,28.1 L27.4,27.6 L28.2,27.1 L29.0,26.6 L29.7,26.1 L30.5,25.5 L31.3,25.0 L32.1,24.5 L32.9,23.9 L33.7,23.4 L34.5,22.8 L35.3,22.2 L36.0,21.6 L36.8,21.0 L37.5,20.4 L38.3,19.8 L39.0,19.1 L39.7,18.4 L40.4,17.7 L41.1,17.0 L41.8,16.2 L42.4,15.4 L43.1,14.6 L43.7,13.8 L44.3,12.9 L44.8,12.0 L45.4,11.1 L45.9,10.2 L46.4,9.2 L46.9,8.2 L47.4,7.1 L47.8,6.1 L48.2,4.9 L48.6,3.8 L48.9,2.6 L48.9,2.6 L48.4,3.7 L47.9,4.8 L47.4,5.9 L46.9,6.9 L46.3,7.9 L45.8,8.8 L45.2,9.7 L44.5,10.6 L43.9,11.4 L43.3,12.2 L42.6,12.9 L41.9,13.7 L41.3,14.4 L40.6,15.0 L39.8,15.7 L39.1,16.3 L38.4,16.9 L37.6,17.5 L36.9,18.0 L36.1,18.6 L35.3,19.1 L34.6,19.6 L33.8,20.1 L33.0,20.5 L32.2,21.0 L31.4,21.4 L30.5,21.9 L29.7,22.3 L28.9,22.7 L28.1,23.1 L27.3,23.6 L26.4,24.0 L25.6,24.4 L24.8,24.8 L23.9,25.2 L23.2,25.7 L22.4,26.2 L21.6,26.7 L20.8,27.2 L20.1,27.7 L19.3,28.2 L18.5,28.7 L17.8,29.3 L17.1,29.8 L16.3,30.4 L15.6,30.9 L14.9,31.5 L14.2,32.1 L13.5,32.7 L12.9,33.4 L12.3,34.0 L11.6,34.7 L11.0,35.4 L10.4,36.1 L9.9,36.8 L9.4,37.6 L8.8,38.4 L8.4,39.2 L7.9,40.0 L7.5,40.9 L7.1,41.8 L6.7,42.7 L6.3,43.6 L6.0,44.6 L5.7,45.6 L5.5,46.6 L5.2,47.7 L5.1,48.8 L4.9,49.9 L4.8,51.1Z"/><path fill="#ffffff" opacity="0.65" d="M6.1,52.4 L6.4,51.3 L6.6,50.1 L6.9,49.0 L7.3,48.0 L7.6,47.0 L8.0,46.0 L8.4,45.1 L8.9,44.2 L9.3,43.4 L9.8,42.6 L10.3,41.8 L10.8,41.0 L11.3,40.3 L11.9,39.6 L12.5,39.0 L13.0,38.3 L13.6,37.7 L14.3,37.1 L14.9,36.6 L15.5,36.0 L16.2,35.5 L16.9,35.0 L17.6,34.5 L18.3,34.0 L19.0,33.6 L19.7,33.1 L20.5,32.7 L21.2,32.2 L22.0,31.8 L22.7,31.4 L23.5,31.0 L24.3,30.5 L25.1,30.1 L25.9,29.7 L26.7,29.3 L27.4,28.8 L28.2,28.3 L29.0,27.8 L29.7,27.3 L30.5,26.8 L31.3,26.2 L32.1,25.7 L32.8,25.2 L33.6,24.6 L34.4,24.0 L35.1,23.5 L35.9,22.9 L36.6,22.3 L37.4,21.6 L38.1,21.0 L38.8,20.3 L39.5,19.7 L40.2,19.0 L40.9,18.2 L41.6,17.5 L42.2,16.7 L42.9,15.9 L43.5,15.1 L44.1,14.2 L44.6,13.4 L45.2,12.5 L45.7,11.5 L46.3,10.6 L46.8,9.6 L47.2,8.5 L47.7,7.5 L48.1,6.4 L48.5,5.2 L48.8,4.1 L49.2,2.8 L49.2,2.8 L48.7,4.0 L48.2,5.1 L47.7,6.2 L47.2,7.2 L46.6,8.2 L46.1,9.2 L45.5,10.1 L44.9,11.0 L44.3,11.8 L43.6,12.6 L43.0,13.4 L42.3,14.2 L41.7,14.9 L41.0,15.6 L40.3,16.2 L39.6,16.9 L38.8,17.5 L38.1,18.1 L37.4,18.6 L36.6,19.2 L35.9,19.7 L35.1,20.2 L34.3,20.7 L33.6,21.2 L32.8,21.7 L32.0,22.1 L31.2,22.6 L30.4,23.0 L29.6,23.5 L28.8,23.9 L28.0,24.3 L27.2,24.7 L26.4,25.1 L25.5,25.6 L24.7,26.0 L24.0,26.5 L23.2,27.0 L22.5,27.5 L21.7,28.0 L20.9,28.5 L20.2,29.1 L19.5,29.6 L18.7,30.1 L18.0,30.7 L17.3,31.3 L16.6,31.8 L15.9,32.4 L15.3,33.1 L14.6,33.7 L14.0,34.3 L13.3,35.0 L12.7,35.7 L12.2,36.4 L11.6,37.1 L11.0,37.9 L10.5,38.6 L10.0,39.4 L9.6,40.3 L9.1,41.1 L8.7,42.0 L8.3,42.9 L7.9,43.8 L7.6,44.8 L7.3,45.8 L7.0,46.8 L6.8,47.8 L6.5,48.9 L6.4,50.1 L6.2,51.2 L6.1,52.4Z"/><path fill="#ffffff" opacity="0.65" d="M7.4,53.7 L7.7,52.5 L7.9,51.4 L8.2,50.3 L8.6,49.2 L8.9,48.2 L9.3,47.2 L9.7,46.2 L10.1,45.3 L10.6,44.5 L11.0,43.6 L11.5,42.8 L12.0,42.1 L12.5,41.3 L13.1,40.6 L13.6,40.0 L14.2,39.3 L14.8,38.7 L15.4,38.1 L16.0,37.5 L16.7,37.0 L17.3,36.4 L18.0,35.9 L18.6,35.4 L19.3,34.9 L20.0,34.4 L20.7,34.0 L21.5,33.5 L22.2,33.1 L22.9,32.6 L23.7,32.2 L24.4,31.7 L25.2,31.3 L26.0,30.9 L26.7,30.5 L27.5,30.1 L28.3,29.6 L29.0,29.0 L29.8,28.5 L30.5,28.0 L31.3,27.5 L32.0,26.9 L32.8,26.4 L33.5,25.8 L34.3,25.3 L35.0,24.7 L35.8,24.1 L36.5,23.5 L37.2,22.9 L37.9,22.3 L38.6,21.6 L39.3,20.9 L40.0,20.2 L40.7,19.5 L41.4,18.8 L42.0,18.0 L42.7,17.2 L43.3,16.4 L43.9,15.6 L44.5,14.7 L45.0,13.8 L45.6,12.9 L46.1,12.0 L46.6,11.0 L47.1,9.9 L47.5,8.9 L48.0,7.8 L48.4,6.7 L48.7,5.5 L49.1,4.3 L49.4,3.1 L49.4,3.1 L49.0,4.3 L48.5,5.4 L48.0,6.5 L47.5,7.6 L46.9,8.6 L46.4,9.6 L45.8,10.5 L45.2,11.4 L44.6,12.3 L44.0,13.1 L43.4,13.9 L42.7,14.7 L42.1,15.4 L41.4,16.1 L40.7,16.8 L40.0,17.4 L39.3,18.1 L38.6,18.7 L37.9,19.3 L37.1,19.8 L36.4,20.4 L35.7,20.9 L34.9,21.4 L34.1,21.9 L33.4,22.4 L32.6,22.8 L31.8,23.3 L31.1,23.8 L30.3,24.2 L29.5,24.6 L28.7,25.1 L27.9,25.5 L27.1,25.9 L26.3,26.3 L25.5,26.8 L24.8,27.3 L24.0,27.8 L23.3,28.3 L22.6,28.8 L21.8,29.4 L21.1,29.9 L20.4,30.5 L19.7,31.0 L19.0,31.6 L18.3,32.2 L17.6,32.8 L17.0,33.4 L16.3,34.0 L15.7,34.6 L15.0,35.3 L14.4,36.0 L13.8,36.7 L13.3,37.4 L12.7,38.1 L12.2,38.9 L11.7,39.7 L11.2,40.5 L10.8,41.3 L10.3,42.2 L9.9,43.1 L9.5,44.0 L9.2,44.9 L8.8,45.9 L8.5,46.9 L8.3,48.0 L8.0,49.1 L7.8,50.2 L7.7,51.3 L7.5,52.5 L7.4,53.7Z"/></g></svg><div style="left:445.70px;top:702.10px;width:13.20px;height:12.20px;background:#525252;"></div><svg style="position:absolute;left:445.70px;top:702.10px;overflow:visible;" width="13.2" height="12.2" viewBox="0 0 13.2 12.2"><path d="M10,3 L6.5,6.8" stroke="#f0f0f0" stroke-width="1.5" stroke-linecap="round"/><ellipse cx="5" cy="8" rx="2.2" ry="1.5" transform="rotate(-35 5 8)" fill="#f0f0f0"/><path d="M3.5,9.8 Q7,9.3 9.5,8.8" fill="none" stroke="#d0d0d0" stroke-width="0.7"/></svg><span class="t" style="left:-64.25px;width:1000px;text-align:center;top:719.26px;font-size:6.9px;color:#cfcfcf;">#05 Wet Paint</span><svg style="position:absolute;left:466.50px;top:659.80px;overflow:visible;" width="54.5" height="54.5" viewBox="0 0 54.5 54.5"><rect width="54.5" height="54.5" fill="#6c6c6c"/><path fill="#ffffff" opacity="0.9" d="M6.5,51.2 L7.1,50.1 L7.6,49.1 L8.0,48.1 L8.5,47.2 L8.9,46.2 L9.4,45.4 L9.9,44.6 L10.4,43.8 L10.9,43.1 L11.4,42.4 L11.9,41.7 L12.5,41.1 L13.0,40.5 L13.6,39.9 L14.1,39.4 L14.7,38.9 L15.3,38.4 L15.9,37.9 L16.5,37.5 L17.2,37.0 L17.8,36.6 L18.4,36.2 L19.1,35.8 L19.8,35.4 L20.5,35.1 L21.2,34.7 L21.9,34.3 L22.6,34.0 L23.3,33.6 L24.1,33.3 L24.8,32.9 L25.6,32.6 L26.3,32.3 L27.1,31.9 L27.9,31.6 L28.6,31.0 L29.3,30.5 L30.0,30.0 L30.8,29.4 L31.5,28.9 L32.2,28.3 L33.0,27.7 L33.7,27.1 L34.4,26.5 L35.2,25.9 L35.9,25.3 L36.6,24.6 L37.3,24.0 L38.0,23.3 L38.7,22.6 L39.4,21.9 L40.1,21.1 L40.7,20.3 L41.4,19.6 L42.0,18.7 L42.6,17.9 L43.2,17.0 L43.8,16.2 L44.3,15.2 L44.8,14.3 L45.3,13.3 L45.8,12.4 L46.2,11.3 L46.6,10.3 L46.9,9.2 L47.3,8.1 L47.6,7.0 L47.8,5.8 L48.0,4.6 L48.0,3.3 L48.0,3.3 L47.2,4.3 L46.5,5.3 L45.9,6.3 L45.3,7.2 L44.7,8.1 L44.0,8.9 L43.4,9.7 L42.7,10.5 L42.1,11.2 L41.4,11.9 L40.8,12.6 L40.1,13.2 L39.4,13.8 L38.7,14.4 L38.0,14.9 L37.3,15.4 L36.6,15.9 L35.9,16.4 L35.2,16.9 L34.5,17.3 L33.7,17.8 L33.0,18.2 L32.3,18.6 L31.5,19.0 L30.7,19.4 L30.0,19.7 L29.2,20.1 L28.4,20.5 L27.7,20.8 L26.9,21.2 L26.1,21.5 L25.3,21.9 L24.5,22.2 L23.7,22.6 L22.9,22.9 L22.1,23.5 L21.4,24.0 L20.7,24.6 L20.0,25.1 L19.3,25.7 L18.6,26.3 L17.9,26.8 L17.2,27.4 L16.5,28.1 L15.8,28.7 L15.1,29.3 L14.5,30.0 L13.8,30.7 L13.2,31.4 L12.6,32.1 L12.0,32.8 L11.4,33.6 L10.8,34.3 L10.3,35.1 L9.8,36.0 L9.3,36.8 L8.9,37.7 L8.5,38.6 L8.1,39.5 L7.7,40.4 L7.4,41.4 L7.1,42.4 L6.9,43.4 L6.7,44.4 L6.5,45.5 L6.4,46.6 L6.3,47.7 L6.3,48.8 L6.3,50.0 L6.5,51.2Z"/><path fill="#8a8a8a" opacity="0.8" d="M10.9,43.6 L11.1,42.7 L11.3,41.8 L11.6,41.0 L11.8,40.2 L12.1,39.4 L12.4,38.7 L12.7,37.9 L13.1,37.3 L13.5,36.6 L13.8,36.0 L14.2,35.4 L14.7,34.8 L15.1,34.2 L15.5,33.7 L16.0,33.1 L16.5,32.6 L17.0,32.2 L17.5,31.7 L18.0,31.3 L18.5,30.8 L19.1,30.4 L19.6,30.0 L20.2,29.6 L20.8,29.2 L21.4,28.8 L22.0,28.5 L22.6,28.1 L23.2,27.8 L23.8,27.4 L24.5,27.1 L25.1,26.7 L25.8,26.4 L26.4,26.1 L27.1,25.7 L27.7,25.4 L28.4,25.0 L29.0,24.7 L29.7,24.3 L30.3,23.9 L31.0,23.5 L31.6,23.1 L32.3,22.7 L32.9,22.3 L33.6,21.9 L34.2,21.5 L34.9,21.1 L35.5,20.6 L36.1,20.2 L36.8,19.7 L37.4,19.2 L38.0,18.7 L38.6,18.2 L39.2,17.7 L39.8,17.2 L40.3,16.6 L40.9,16.0 L41.4,15.4 L41.9,14.8 L42.5,14.2 L43.0,13.5 L43.4,12.8 L43.9,12.1 L44.3,11.4 L44.8,10.6 L45.2,9.8 L45.6,9.0 L45.9,8.2 L46.3,7.3 L46.6,6.4 L46.9,5.5 L46.9,5.5 L46.5,6.3 L46.1,7.2 L45.7,8.0 L45.3,8.8 L44.8,9.6 L44.4,10.4 L43.9,11.1 L43.4,11.8 L42.9,12.4 L42.4,13.0 L41.9,13.7 L41.3,14.2 L40.8,14.8 L40.2,15.3 L39.6,15.9 L39.0,16.4 L38.4,16.8 L37.8,17.3 L37.2,17.8 L36.6,18.2 L36.0,18.6 L35.4,19.0 L34.7,19.4 L34.1,19.8 L33.4,20.2 L32.8,20.6 L32.1,20.9 L31.5,21.3 L30.8,21.6 L30.1,22.0 L29.5,22.3 L28.8,22.6 L28.1,23.0 L27.5,23.3 L26.8,23.6 L26.1,24.0 L25.5,24.4 L24.9,24.8 L24.2,25.2 L23.6,25.5 L23.0,25.9 L22.4,26.3 L21.7,26.7 L21.1,27.1 L20.5,27.6 L19.9,28.0 L19.4,28.4 L18.8,28.9 L18.3,29.4 L17.7,29.8 L17.2,30.3 L16.7,30.9 L16.2,31.4 L15.7,31.9 L15.2,32.5 L14.8,33.1 L14.4,33.7 L13.9,34.3 L13.6,34.9 L13.2,35.6 L12.9,36.3 L12.5,37.0 L12.2,37.7 L12.0,38.5 L11.7,39.3 L11.5,40.1 L11.3,40.9 L11.1,41.8 L11.0,42.7 L10.9,43.6Z"/></svg><div style="left:503.70px;top:702.10px;width:13.20px;height:12.20px;background:#525252;"></div><svg style="position:absolute;left:503.70px;top:702.10px;overflow:visible;" width="13.2" height="12.2" viewBox="0 0 13.2 12.2"><path d="M10,3 L6.5,6.8" stroke="#f0f0f0" stroke-width="1.5" stroke-linecap="round"/><ellipse cx="5" cy="8" rx="2.2" ry="1.5" transform="rotate(-35 5 8)" fill="#f0f0f0"/><path d="M3.5,9.8 Q7,9.3 9.5,8.8" fill="none" stroke="#d0d0d0" stroke-width="0.7"/></svg><span class="t" style="left:-6.25px;width:1000px;text-align:center;top:719.26px;font-size:6.9px;color:#cfcfcf;">#06 Wet Paint</span><svg style="position:absolute;left:524.50px;top:659.80px;overflow:visible;" width="54.5" height="54.5" viewBox="0 0 54.5 54.5"><rect width="54.5" height="54.5" fill="#6c6c6c"/><path fill="#ffffff" opacity="0.95" filter="url(#b1)" d="M9.3,50.7 L9.9,49.6 L10.3,48.6 L10.8,47.7 L11.2,46.8 L11.7,45.9 L12.1,45.1 L12.6,44.3 L13.1,43.6 L13.6,42.9 L14.0,42.2 L14.6,41.6 L15.1,41.0 L15.6,40.4 L16.1,39.9 L16.6,39.4 L17.2,38.9 L17.7,38.5 L18.3,38.0 L18.9,37.6 L19.4,37.2 L20.0,36.8 L20.6,36.5 L21.2,36.1 L21.8,35.8 L22.5,35.4 L23.1,35.1 L23.7,34.7 L24.4,34.4 L25.1,34.1 L25.7,33.8 L26.4,33.5 L27.1,33.2 L27.8,32.8 L28.6,32.5 L29.3,32.2 L29.9,31.7 L30.5,31.1 L31.2,30.6 L31.8,30.1 L32.5,29.5 L33.1,29.0 L33.8,28.4 L34.5,27.8 L35.1,27.2 L35.8,26.6 L36.4,26.0 L37.1,25.3 L37.7,24.7 L38.4,24.0 L39.0,23.3 L39.6,22.6 L40.2,21.8 L40.8,21.1 L41.4,20.3 L41.9,19.5 L42.5,18.7 L43.0,17.8 L43.5,16.9 L43.9,16.1 L44.4,15.1 L44.8,14.2 L45.2,13.2 L45.6,12.2 L45.9,11.2 L46.2,10.1 L46.4,9.1 L46.7,7.9 L46.8,6.8 L47.0,5.6 L46.9,4.4 L46.9,4.4 L46.1,5.3 L45.5,6.3 L44.8,7.2 L44.2,8.1 L43.6,8.9 L43.0,9.7 L42.4,10.5 L41.8,11.2 L41.2,11.9 L40.6,12.6 L40.0,13.2 L39.3,13.8 L38.7,14.4 L38.1,14.9 L37.4,15.4 L36.8,15.9 L36.1,16.4 L35.5,16.8 L34.8,17.2 L34.1,17.7 L33.5,18.1 L32.8,18.4 L32.1,18.8 L31.4,19.2 L30.7,19.5 L30.0,19.9 L29.3,20.2 L28.6,20.5 L27.9,20.9 L27.2,21.2 L26.4,21.5 L25.7,21.9 L25.0,22.2 L24.2,22.5 L23.5,22.9 L22.8,23.4 L22.2,23.9 L21.5,24.5 L20.9,25.0 L20.3,25.6 L19.6,26.1 L19.0,26.7 L18.4,27.3 L17.7,27.9 L17.1,28.6 L16.5,29.2 L15.9,29.9 L15.3,30.5 L14.8,31.2 L14.2,31.9 L13.7,32.7 L13.2,33.4 L12.7,34.2 L12.2,35.0 L11.7,35.8 L11.3,36.6 L10.9,37.5 L10.6,38.4 L10.2,39.3 L9.9,40.2 L9.7,41.1 L9.5,42.1 L9.3,43.1 L9.1,44.1 L9.0,45.1 L8.9,46.2 L8.9,47.3 L8.9,48.4 L9.0,49.5 L9.3,50.7Z"/></svg><div style="left:561.70px;top:702.10px;width:13.20px;height:12.20px;background:#525252;"></div><svg style="position:absolute;left:561.70px;top:702.10px;overflow:visible;" width="13.2" height="12.2" viewBox="0 0 13.2 12.2"><path d="M10,3 L6.5,6.8" stroke="#f0f0f0" stroke-width="1.5" stroke-linecap="round"/><ellipse cx="5" cy="8" rx="2.2" ry="1.5" transform="rotate(-35 5 8)" fill="#f0f0f0"/><path d="M3.5,9.8 Q7,9.3 9.5,8.8" fill="none" stroke="#d0d0d0" stroke-width="0.7"/></svg><span class="t" style="left:51.75px;width:1000px;text-align:center;top:719.26px;font-size:6.9px;color:#cfcfcf;">#07 Wet Paint</span><svg style="position:absolute;left:582.50px;top:659.80px;overflow:visible;" width="54.5" height="54.5" viewBox="0 0 54.5 54.5"><rect width="54.5" height="54.5" fill="#6c6c6c"/><path fill="#ffffff" opacity="0.45" filter="url(#b2)" d="M13.6,46.3 L14.9,46.2 L15.7,45.9 L16.4,45.4 L17.0,45.0 L17.6,44.6 L18.1,44.1 L18.7,43.7 L19.2,43.2 L19.8,42.8 L20.3,42.3 L20.8,41.9 L21.4,41.5 L21.9,41.0 L22.4,40.6 L22.9,40.2 L23.5,39.7 L24.0,39.3 L24.5,38.9 L25.0,38.5 L25.6,38.1 L26.1,37.6 L26.6,37.2 L27.1,36.8 L27.6,36.4 L28.2,36.0 L28.7,35.5 L29.2,35.1 L29.8,34.7 L30.3,34.3 L30.8,33.9 L31.4,33.4 L31.9,33.0 L32.4,32.6 L33.0,32.2 L33.5,31.7 L33.9,31.2 L34.3,30.6 L34.7,30.0 L35.1,29.5 L35.6,28.9 L36.0,28.3 L36.4,27.7 L36.8,27.2 L37.2,26.6 L37.6,26.0 L38.0,25.4 L38.4,24.8 L38.8,24.1 L39.2,23.5 L39.6,22.9 L40.0,22.3 L40.4,21.6 L40.7,21.0 L41.1,20.4 L41.5,19.7 L41.9,19.0 L42.2,18.4 L42.6,17.7 L42.9,17.0 L43.2,16.3 L43.5,15.6 L43.8,14.9 L44.1,14.2 L44.4,13.4 L44.6,12.7 L44.9,11.9 L45.0,11.1 L45.2,10.3 L45.2,9.4 L44.7,8.2 L44.7,8.2 L43.4,8.2 L42.6,8.6 L41.9,9.0 L41.2,9.4 L40.6,9.9 L40.0,10.3 L39.4,10.7 L38.9,11.2 L38.3,11.6 L37.7,12.1 L37.2,12.5 L36.6,12.9 L36.1,13.4 L35.5,13.8 L35.0,14.2 L34.4,14.7 L33.9,15.1 L33.3,15.5 L32.8,16.0 L32.3,16.4 L31.7,16.8 L31.2,17.2 L30.6,17.6 L30.1,18.1 L29.5,18.5 L29.0,18.9 L28.5,19.3 L27.9,19.8 L27.4,20.2 L26.8,20.6 L26.3,21.0 L25.7,21.5 L25.2,21.9 L24.7,22.3 L24.1,22.8 L23.7,23.3 L23.3,23.9 L22.9,24.5 L22.5,25.0 L22.1,25.6 L21.6,26.2 L21.2,26.8 L20.8,27.4 L20.4,28.0 L20.0,28.6 L19.6,29.2 L19.2,29.8 L18.9,30.4 L18.5,31.0 L18.1,31.7 L17.7,32.3 L17.3,32.9 L17.0,33.6 L16.6,34.2 L16.3,34.9 L15.9,35.5 L15.6,36.2 L15.3,36.9 L15.0,37.6 L14.7,38.3 L14.4,39.0 L14.1,39.7 L13.9,40.4 L13.6,41.1 L13.4,41.9 L13.3,42.7 L13.1,43.5 L13.0,44.3 L13.0,45.1 L13.6,46.3Z"/></svg><div style="left:619.70px;top:702.10px;width:13.20px;height:12.20px;background:#525252;"></div><svg style="position:absolute;left:619.70px;top:702.10px;overflow:visible;" width="13.2" height="12.2" viewBox="0 0 13.2 12.2"><path d="M10,3 L6.5,6.8" stroke="#f0f0f0" stroke-width="1.5" stroke-linecap="round"/><ellipse cx="5" cy="8" rx="2.2" ry="1.5" transform="rotate(-35 5 8)" fill="#f0f0f0"/><path d="M3.5,9.8 Q7,9.3 9.5,8.8" fill="none" stroke="#d0d0d0" stroke-width="0.7"/></svg><span class="t" style="left:109.75px;width:1000px;text-align:center;top:719.26px;font-size:6.9px;color:#cfcfcf;">#08 Wet Paint</span><svg style="position:absolute;left:640.50px;top:659.80px;overflow:visible;" width="54.5" height="54.5" viewBox="0 0 54.5 54.5"><rect width="54.5" height="54.5" fill="#6c6c6c"/><path fill="#ffffff" opacity="1" filter="url(#r1)" d="M9.8,50.1 L11.2,49.3 L12.0,48.5 L12.6,47.7 L13.2,46.9 L13.9,46.2 L14.3,45.5 L14.8,44.9 L15.2,44.2 L15.7,43.6 L16.5,43.2 L17.1,42.8 L17.6,42.3 L18.1,41.8 L18.7,41.4 L19.3,41.1 L20.0,40.8 L20.3,40.3 L20.6,39.8 L21.0,39.3 L21.7,39.0 L22.4,38.9 L23.0,38.7 L23.6,38.3 L24.1,38.0 L25.0,38.0 L25.7,37.9 L26.3,37.6 L26.7,37.0 L27.2,36.5 L27.8,36.1 L28.6,36.0 L29.2,35.7 L29.8,35.3 L30.6,35.0 L31.4,34.9 L32.2,34.6 L33.0,34.4 L33.5,33.7 L33.9,32.7 L34.4,32.1 L35.1,31.5 L35.8,31.0 L36.3,30.2 L36.8,29.3 L37.3,28.6 L38.2,28.2 L39.0,27.7 L39.8,27.3 L40.5,26.6 L40.9,25.7 L41.5,24.8 L42.0,23.9 L42.6,23.2 L43.1,22.3 L43.3,21.1 L43.9,20.3 L44.4,19.5 L45.1,18.8 L45.6,17.8 L46.0,16.9 L46.4,15.8 L46.8,14.9 L47.2,13.9 L47.4,12.8 L47.5,11.6 L47.5,10.4 L47.6,9.2 L47.7,8.1 L47.6,6.9 L46.9,5.5 L46.9,5.5 L45.4,6.1 L44.5,6.9 L43.7,7.6 L43.1,8.3 L42.2,8.9 L41.4,9.6 L40.7,10.1 L40.2,10.8 L39.8,11.5 L39.2,12.1 L38.4,12.5 L37.7,12.9 L37.1,13.4 L36.4,13.8 L35.8,14.3 L35.1,14.5 L34.2,14.7 L33.5,15.0 L33.1,15.6 L32.8,16.3 L32.2,16.7 L31.5,17.0 L30.6,17.1 L29.9,17.2 L29.4,17.7 L28.7,18.0 L27.9,18.2 L26.9,18.0 L26.3,18.5 L25.6,18.8 L25.2,19.5 L24.8,20.3 L24.0,20.5 L23.0,20.4 L22.1,20.6 L21.6,21.2 L20.9,21.8 L20.2,22.2 L19.5,22.6 L18.8,23.1 L18.3,23.9 L18.0,24.9 L17.7,26.0 L16.9,26.5 L16.2,26.9 L15.4,27.4 L14.7,28.0 L14.1,28.7 L13.6,29.6 L12.8,30.1 L12.4,31.0 L12.1,32.0 L11.7,32.9 L11.4,33.9 L10.9,34.7 L10.3,35.4 L9.8,36.3 L9.5,37.2 L9.2,38.2 L8.9,39.2 L8.6,40.2 L8.4,41.2 L8.3,42.2 L8.4,43.3 L8.5,44.5 L8.4,45.5 L8.3,46.6 L8.4,47.7 L8.8,48.9 L9.8,50.1Z"/></svg><div style="left:677.70px;top:702.10px;width:13.20px;height:12.20px;background:#525252;"></div><svg style="position:absolute;left:677.70px;top:702.10px;overflow:visible;" width="13.2" height="12.2" viewBox="0 0 13.2 12.2"><path d="M10,3 L6.5,6.8" stroke="#f0f0f0" stroke-width="1.5" stroke-linecap="round"/><ellipse cx="5" cy="8" rx="2.2" ry="1.5" transform="rotate(-35 5 8)" fill="#f0f0f0"/><path d="M3.5,9.8 Q7,9.3 9.5,8.8" fill="none" stroke="#d0d0d0" stroke-width="0.7"/></svg><span class="t" style="left:167.75px;width:1000px;text-align:center;top:719.26px;font-size:6.9px;color:#cfcfcf;">#09 Wet Paint</span><svg style="position:absolute;left:698.50px;top:659.80px;overflow:visible;" width="54.5" height="54.5" viewBox="0 0 54.5 54.5"><rect width="54.5" height="54.5" fill="#6c6c6c"/><path fill="#ffffff" opacity="0.9" filter="url(#b1)" d="M4.4,50.1 L6.1,49.7 L7.0,49.0 L7.7,48.3 L8.5,47.7 L9.2,47.0 L9.8,46.4 L10.5,45.8 L11.1,45.2 L11.8,44.6 L12.4,44.1 L13.1,43.6 L13.7,43.1 L14.3,42.6 L15.0,42.1 L15.6,41.6 L16.3,41.2 L16.9,40.7 L17.6,40.3 L18.2,39.8 L18.9,39.4 L19.6,39.0 L20.3,38.6 L21.0,38.2 L21.7,37.8 L22.4,37.4 L23.1,37.0 L23.8,36.6 L24.6,36.2 L25.3,35.8 L26.0,35.4 L26.8,35.0 L27.6,34.6 L28.3,34.2 L29.1,33.7 L29.9,33.3 L30.6,32.7 L31.2,32.1 L31.9,31.4 L32.6,30.8 L33.3,30.1 L33.9,29.5 L34.6,28.8 L35.3,28.1 L36.0,27.4 L36.7,26.7 L37.4,26.0 L38.0,25.2 L38.7,24.5 L39.4,23.7 L40.0,22.9 L40.7,22.1 L41.3,21.3 L42.0,20.5 L42.6,19.7 L43.2,18.8 L43.8,17.9 L44.4,17.0 L44.9,16.1 L45.5,15.2 L46.0,14.2 L46.5,13.2 L46.9,12.2 L47.3,11.2 L47.7,10.1 L48.1,9.0 L48.4,7.9 L48.6,6.8 L48.8,5.6 L48.8,4.3 L48.0,2.7 L48.0,2.7 L46.2,3.0 L45.2,3.6 L44.3,4.3 L43.5,4.9 L42.7,5.6 L41.9,6.2 L41.2,6.8 L40.4,7.3 L39.7,7.9 L38.9,8.5 L38.2,9.0 L37.5,9.5 L36.7,10.0 L36.0,10.5 L35.3,11.0 L34.6,11.5 L33.8,11.9 L33.1,12.4 L32.4,12.8 L31.6,13.3 L30.9,13.7 L30.1,14.1 L29.4,14.5 L28.6,14.9 L27.8,15.4 L27.1,15.8 L26.3,16.2 L25.5,16.6 L24.7,17.0 L24.0,17.4 L23.2,17.8 L22.4,18.3 L21.6,18.7 L20.8,19.1 L20.0,19.5 L19.3,20.2 L18.6,20.8 L17.9,21.5 L17.3,22.1 L16.6,22.8 L15.9,23.5 L15.2,24.2 L14.6,24.9 L13.9,25.6 L13.2,26.3 L12.6,27.0 L11.9,27.8 L11.3,28.5 L10.7,29.3 L10.1,30.1 L9.5,30.9 L8.9,31.7 L8.3,32.6 L7.7,33.4 L7.2,34.3 L6.7,35.2 L6.2,36.1 L5.8,37.1 L5.3,38.0 L4.9,39.0 L4.5,40.0 L4.2,41.0 L3.9,42.0 L3.6,43.1 L3.4,44.1 L3.3,45.2 L3.2,46.3 L3.2,47.5 L3.4,48.7 L4.4,50.1Z"/></svg><div style="left:735.70px;top:702.10px;width:13.20px;height:12.20px;background:#525252;"></div><svg style="position:absolute;left:735.70px;top:702.10px;overflow:visible;" width="13.2" height="12.2" viewBox="0 0 13.2 12.2"><path d="M10,3 L6.5,6.8" stroke="#f0f0f0" stroke-width="1.5" stroke-linecap="round"/><ellipse cx="5" cy="8" rx="2.2" ry="1.5" transform="rotate(-35 5 8)" fill="#f0f0f0"/><path d="M3.5,9.8 Q7,9.3 9.5,8.8" fill="none" stroke="#d0d0d0" stroke-width="0.7"/></svg><span class="t" style="left:225.75px;width:1000px;text-align:center;top:719.26px;font-size:6.9px;color:#cfcfcf;">#10 Wet Paint</span><svg style="position:absolute;left:756.50px;top:659.80px;overflow:visible;" width="54.5" height="54.5" viewBox="0 0 54.5 54.5"><rect width="54.5" height="54.5" fill="#6c6c6c"/><path fill="#ffffff" opacity="1" filter="url(#b1)" d="M10.9,49.1 L12.1,48.5 L12.8,47.8 L13.5,47.1 L14.1,46.5 L14.6,45.9 L15.2,45.3 L15.7,44.7 L16.3,44.1 L16.8,43.6 L17.3,43.1 L17.9,42.6 L18.4,42.1 L19.0,41.6 L19.5,41.2 L20.0,40.8 L20.6,40.3 L21.1,39.9 L21.7,39.5 L22.3,39.1 L22.8,38.8 L23.4,38.4 L24.0,38.0 L24.5,37.6 L25.1,37.3 L25.7,36.9 L26.3,36.6 L26.9,36.2 L27.5,35.9 L28.2,35.5 L28.8,35.2 L29.4,34.8 L30.1,34.5 L30.7,34.1 L31.4,33.7 L32.1,33.4 L32.6,32.8 L33.1,32.3 L33.7,31.7 L34.2,31.1 L34.8,30.5 L35.4,30.0 L35.9,29.4 L36.5,28.8 L37.1,28.1 L37.6,27.5 L38.2,26.9 L38.7,26.2 L39.3,25.6 L39.8,24.9 L40.4,24.2 L40.9,23.5 L41.4,22.8 L42.0,22.0 L42.5,21.3 L43.0,20.5 L43.4,19.8 L43.9,19.0 L44.4,18.1 L44.8,17.3 L45.2,16.5 L45.6,15.6 L45.9,14.7 L46.3,13.8 L46.6,12.9 L46.8,11.9 L47.1,10.9 L47.3,9.9 L47.4,8.9 L47.4,7.8 L46.9,6.5 L46.9,6.5 L45.6,7.0 L44.8,7.6 L44.0,8.3 L43.4,8.9 L42.7,9.5 L42.0,10.1 L41.4,10.7 L40.8,11.2 L40.2,11.7 L39.5,12.3 L38.9,12.8 L38.3,13.2 L37.7,13.7 L37.1,14.2 L36.5,14.6 L35.9,15.0 L35.2,15.5 L34.6,15.9 L34.0,16.3 L33.4,16.7 L32.7,17.1 L32.1,17.4 L31.5,17.8 L30.8,18.2 L30.2,18.6 L29.5,18.9 L28.9,19.3 L28.2,19.6 L27.6,20.0 L26.9,20.4 L26.3,20.7 L25.6,21.1 L24.9,21.5 L24.2,21.8 L23.6,22.2 L23.0,22.8 L22.5,23.4 L21.9,23.9 L21.3,24.5 L20.8,25.1 L20.2,25.7 L19.7,26.3 L19.1,26.9 L18.6,27.6 L18.0,28.2 L17.5,28.8 L17.0,29.5 L16.5,30.2 L15.9,30.9 L15.4,31.6 L15.0,32.3 L14.5,33.0 L14.0,33.8 L13.6,34.5 L13.2,35.3 L12.8,36.1 L12.4,36.9 L12.0,37.7 L11.7,38.5 L11.4,39.4 L11.1,40.3 L10.8,41.1 L10.6,42.0 L10.4,43.0 L10.2,43.9 L10.1,44.9 L10.1,45.8 L10.1,46.8 L10.2,47.9 L10.9,49.1Z"/></svg><div style="left:793.70px;top:702.10px;width:13.20px;height:12.20px;background:#525252;"></div><svg style="position:absolute;left:793.70px;top:702.10px;overflow:visible;" width="13.2" height="12.2" viewBox="0 0 13.2 12.2"><path d="M10,3 L6.5,6.8" stroke="#f0f0f0" stroke-width="1.5" stroke-linecap="round"/><ellipse cx="5" cy="8" rx="2.2" ry="1.5" transform="rotate(-35 5 8)" fill="#f0f0f0"/><path d="M3.5,9.8 Q7,9.3 9.5,8.8" fill="none" stroke="#d0d0d0" stroke-width="0.7"/></svg><span class="t" style="left:283.75px;width:1000px;text-align:center;top:719.26px;font-size:6.9px;color:#cfcfcf;">#11 Wet Paint</span><svg style="position:absolute;left:814.50px;top:659.80px;overflow:visible;" width="54.5" height="54.5" viewBox="0 0 54.5 54.5"><rect width="54.5" height="54.5" fill="#6c6c6c"/><g filter="url(#b1)"><path fill="#ffffff" opacity="0.7" d="M14.6,39.1 L15.0,38.8 L15.4,38.5 L15.9,38.2 L16.3,37.9 L16.7,37.7 L17.1,37.4 L17.5,37.1 L17.9,36.8 L18.3,36.5 L18.8,36.2 L19.2,36.0 L19.6,35.7 L20.0,35.4 L20.5,35.2 L20.9,34.9 L21.3,34.6 L21.8,34.4 L22.2,34.1 L22.6,33.9 L23.1,33.6 L23.5,33.4 L24.0,33.1 L24.4,32.9 L24.9,32.6 L25.3,32.4 L25.8,32.1 L26.2,31.9 L26.7,31.7 L27.1,31.4 L27.6,31.2 L28.0,30.9 L28.5,30.7 L29.0,30.4 L29.4,30.2 L29.9,29.9 L30.2,29.6 L30.6,29.2 L31.0,28.8 L31.4,28.5 L31.7,28.1 L32.1,27.7 L32.5,27.3 L32.9,27.0 L33.2,26.6 L33.6,26.2 L34.0,25.8 L34.4,25.5 L34.7,25.1 L35.1,24.7 L35.5,24.3 L35.8,23.9 L36.2,23.5 L36.6,23.1 L36.9,22.7 L37.3,22.3 L37.6,21.9 L38.0,21.5 L38.3,21.1 L38.7,20.7 L39.0,20.3 L39.4,19.9 L39.7,19.5 L40.0,19.1 L40.4,18.7 L40.7,18.2 L41.0,17.8 L41.3,17.4 L41.6,16.9 L41.9,16.5 L42.2,16.0 L42.2,16.0 L41.7,16.3 L41.3,16.6 L40.9,16.9 L40.4,17.2 L40.0,17.5 L39.5,17.8 L39.1,18.1 L38.7,18.3 L38.2,18.6 L37.8,18.9 L37.3,19.2 L36.9,19.4 L36.5,19.7 L36.0,20.0 L35.6,20.2 L35.1,20.5 L34.7,20.7 L34.2,21.0 L33.8,21.3 L33.3,21.5 L32.8,21.8 L32.4,22.0 L31.9,22.3 L31.5,22.5 L31.0,22.8 L30.6,23.0 L30.1,23.2 L29.6,23.5 L29.2,23.7 L28.7,24.0 L28.3,24.2 L27.8,24.5 L27.3,24.7 L26.9,25.0 L26.4,25.2 L26.0,25.6 L25.7,26.0 L25.3,26.3 L24.9,26.7 L24.5,27.1 L24.2,27.4 L23.8,27.8 L23.4,28.2 L23.0,28.6 L22.7,28.9 L22.3,29.3 L21.9,29.7 L21.6,30.1 L21.2,30.5 L20.9,30.9 L20.5,31.3 L20.2,31.6 L19.8,32.0 L19.5,32.4 L19.1,32.8 L18.8,33.2 L18.5,33.6 L18.1,34.0 L17.8,34.4 L17.5,34.8 L17.2,35.3 L16.9,35.7 L16.5,36.1 L16.2,36.5 L16.0,36.9 L15.7,37.4 L15.4,37.8 L15.1,38.2 L14.9,38.7 L14.6,39.1Z"/><path fill="#ffffff" opacity="0.7" d="M16.3,40.9 L16.8,40.6 L17.2,40.2 L17.6,39.9 L18.0,39.6 L18.4,39.3 L18.8,39.0 L19.2,38.6 L19.6,38.3 L20.0,38.0 L20.4,37.7 L20.8,37.4 L21.2,37.1 L21.6,36.9 L22.0,36.6 L22.4,36.3 L22.8,36.0 L23.3,35.7 L23.7,35.4 L24.1,35.2 L24.5,34.9 L25.0,34.6 L25.4,34.3 L25.8,34.1 L26.2,33.8 L26.7,33.5 L27.1,33.3 L27.5,33.0 L28.0,32.7 L28.4,32.5 L28.8,32.2 L29.3,31.9 L29.7,31.7 L30.2,31.4 L30.6,31.1 L31.0,30.9 L31.4,30.5 L31.7,30.1 L32.1,29.7 L32.4,29.3 L32.8,29.0 L33.1,28.6 L33.5,28.2 L33.8,27.8 L34.2,27.4 L34.5,27.0 L34.9,26.6 L35.2,26.2 L35.6,25.8 L35.9,25.4 L36.3,25.0 L36.6,24.6 L37.0,24.2 L37.3,23.8 L37.6,23.4 L38.0,22.9 L38.3,22.5 L38.6,22.1 L39.0,21.7 L39.3,21.3 L39.6,20.8 L39.9,20.4 L40.2,20.0 L40.5,19.5 L40.8,19.1 L41.1,18.6 L41.4,18.2 L41.7,17.7 L42.0,17.3 L42.3,16.8 L42.5,16.3 L42.5,16.3 L42.1,16.7 L41.7,17.0 L41.2,17.3 L40.8,17.6 L40.4,17.9 L40.0,18.3 L39.5,18.6 L39.1,18.9 L38.7,19.2 L38.3,19.5 L37.8,19.8 L37.4,20.1 L37.0,20.4 L36.6,20.6 L36.1,20.9 L35.7,21.2 L35.3,21.5 L34.8,21.8 L34.4,22.0 L34.0,22.3 L33.5,22.6 L33.1,22.9 L32.6,23.1 L32.2,23.4 L31.8,23.7 L31.3,23.9 L30.9,24.2 L30.4,24.5 L30.0,24.7 L29.5,25.0 L29.1,25.3 L28.7,25.5 L28.2,25.8 L27.8,26.1 L27.3,26.3 L27.0,26.7 L26.6,27.1 L26.3,27.5 L25.9,27.9 L25.6,28.3 L25.2,28.7 L24.9,29.1 L24.5,29.5 L24.2,29.9 L23.8,30.2 L23.5,30.6 L23.2,31.0 L22.8,31.4 L22.5,31.8 L22.2,32.2 L21.8,32.7 L21.5,33.1 L21.2,33.5 L20.9,33.9 L20.5,34.3 L20.2,34.7 L19.9,35.1 L19.6,35.6 L19.3,36.0 L19.0,36.4 L18.7,36.8 L18.4,37.3 L18.1,37.7 L17.9,38.1 L17.6,38.6 L17.3,39.0 L17.1,39.5 L16.8,39.9 L16.6,40.4 L16.3,40.9Z"/><path fill="#ffffff" opacity="0.7" d="M18.1,42.6 L18.5,42.3 L18.9,41.9 L19.3,41.6 L19.6,41.2 L20.0,40.9 L20.4,40.5 L20.8,40.2 L21.2,39.9 L21.6,39.5 L22.0,39.2 L22.4,38.9 L22.8,38.6 L23.2,38.3 L23.5,38.0 L23.9,37.6 L24.3,37.3 L24.7,37.0 L25.2,36.7 L25.6,36.4 L26.0,36.1 L26.4,35.8 L26.8,35.6 L27.2,35.3 L27.6,35.0 L28.0,34.7 L28.4,34.4 L28.8,34.1 L29.3,33.8 L29.7,33.5 L30.1,33.2 L30.5,33.0 L30.9,32.7 L31.4,32.4 L31.8,32.1 L32.2,31.8 L32.5,31.4 L32.9,31.0 L33.2,30.6 L33.5,30.2 L33.8,29.8 L34.2,29.4 L34.5,29.0 L34.8,28.6 L35.1,28.2 L35.5,27.8 L35.8,27.3 L36.1,26.9 L36.4,26.5 L36.8,26.1 L37.1,25.7 L37.4,25.3 L37.7,24.8 L38.0,24.4 L38.3,24.0 L38.6,23.5 L39.0,23.1 L39.3,22.7 L39.6,22.2 L39.9,21.8 L40.2,21.3 L40.4,20.9 L40.7,20.4 L41.0,20.0 L41.3,19.5 L41.6,19.1 L41.8,18.6 L42.1,18.1 L42.4,17.7 L42.6,17.2 L42.8,16.7 L42.8,16.7 L42.4,17.0 L42.0,17.4 L41.6,17.7 L41.2,18.1 L40.8,18.4 L40.4,18.7 L40.0,19.1 L39.6,19.4 L39.2,19.7 L38.8,20.1 L38.3,20.4 L37.9,20.7 L37.5,21.0 L37.1,21.3 L36.7,21.6 L36.3,21.9 L35.9,22.2 L35.4,22.5 L35.0,22.8 L34.6,23.1 L34.2,23.4 L33.8,23.7 L33.3,24.0 L32.9,24.3 L32.5,24.6 L32.1,24.9 L31.7,25.2 L31.2,25.5 L30.8,25.8 L30.4,26.0 L30.0,26.3 L29.5,26.6 L29.1,26.9 L28.7,27.2 L28.2,27.5 L27.9,27.9 L27.6,28.3 L27.3,28.7 L26.9,29.1 L26.6,29.5 L26.3,29.9 L26.0,30.3 L25.7,30.7 L25.3,31.1 L25.0,31.6 L24.7,32.0 L24.4,32.4 L24.1,32.8 L23.8,33.2 L23.5,33.6 L23.1,34.1 L22.8,34.5 L22.5,34.9 L22.2,35.3 L21.9,35.8 L21.7,36.2 L21.4,36.6 L21.1,37.1 L20.8,37.5 L20.5,38.0 L20.3,38.4 L20.0,38.9 L19.7,39.3 L19.5,39.8 L19.2,40.2 L19.0,40.7 L18.7,41.2 L18.5,41.7 L18.3,42.1 L18.1,42.6Z"/></g></svg><div style="left:851.70px;top:702.10px;width:13.20px;height:12.20px;background:#525252;"></div><svg style="position:absolute;left:851.70px;top:702.10px;overflow:visible;" width="13.2" height="12.2" viewBox="0 0 13.2 12.2"><path d="M10,3 L6.5,6.8" stroke="#f0f0f0" stroke-width="1.5" stroke-linecap="round"/><ellipse cx="5" cy="8" rx="2.2" ry="1.5" transform="rotate(-35 5 8)" fill="#f0f0f0"/><path d="M3.5,9.8 Q7,9.3 9.5,8.8" fill="none" stroke="#d0d0d0" stroke-width="0.7"/></svg><span class="t" style="left:341.75px;width:1000px;text-align:center;top:719.26px;font-size:6.9px;color:#cfcfcf;">#01 Dry Paint</span><svg style="position:absolute;left:872.50px;top:659.80px;overflow:visible;" width="54.5" height="54.5" viewBox="0 0 54.5 54.5"><rect width="54.5" height="54.5" fill="#6c6c6c"/><path fill="#ffffff" opacity="0.85" filter="url(#tx2)" d="M12.0,43.6 L13.1,43.7 L13.8,43.4 L14.4,43.1 L15.0,42.8 L15.6,42.4 L16.2,42.1 L16.7,41.8 L17.2,41.4 L17.8,41.1 L18.3,40.7 L18.8,40.4 L19.4,40.0 L19.9,39.7 L20.4,39.3 L20.9,39.0 L21.5,38.6 L22.0,38.3 L22.5,37.9 L23.0,37.6 L23.6,37.2 L24.1,36.9 L24.6,36.5 L25.1,36.2 L25.7,35.8 L26.2,35.5 L26.7,35.2 L27.3,34.8 L27.8,34.5 L28.3,34.1 L28.9,33.8 L29.4,33.4 L30.0,33.1 L30.5,32.7 L31.0,32.3 L31.6,32.0 L32.0,31.5 L32.5,31.0 L32.9,30.5 L33.4,30.1 L33.8,29.6 L34.3,29.1 L34.7,28.6 L35.1,28.1 L35.6,27.6 L36.0,27.1 L36.5,26.6 L36.9,26.1 L37.4,25.5 L37.8,25.0 L38.2,24.5 L38.7,24.0 L39.1,23.4 L39.5,22.9 L39.9,22.4 L40.3,21.8 L40.7,21.3 L41.1,20.7 L41.5,20.1 L41.9,19.5 L42.3,19.0 L42.7,18.4 L43.0,17.8 L43.4,17.2 L43.7,16.5 L44.0,15.9 L44.3,15.2 L44.6,14.6 L44.8,13.9 L45.0,13.1 L44.7,12.0 L44.7,12.0 L43.6,11.9 L42.8,12.1 L42.2,12.4 L41.6,12.8 L41.0,13.1 L40.4,13.4 L39.8,13.8 L39.2,14.1 L38.7,14.5 L38.1,14.8 L37.6,15.2 L37.0,15.5 L36.5,15.9 L35.9,16.2 L35.4,16.6 L34.8,16.9 L34.3,17.3 L33.8,17.6 L33.2,18.0 L32.7,18.3 L32.1,18.7 L31.6,19.0 L31.0,19.4 L30.5,19.7 L29.9,20.1 L29.4,20.4 L28.9,20.8 L28.3,21.1 L27.8,21.5 L27.2,21.8 L26.7,22.2 L26.1,22.5 L25.6,22.9 L25.0,23.2 L24.5,23.6 L24.0,24.1 L23.6,24.6 L23.1,25.1 L22.7,25.5 L22.2,26.0 L21.8,26.5 L21.4,27.0 L20.9,27.5 L20.5,28.0 L20.0,28.5 L19.6,29.0 L19.2,29.6 L18.8,30.1 L18.3,30.6 L17.9,31.1 L17.5,31.7 L17.1,32.2 L16.7,32.7 L16.3,33.3 L15.9,33.8 L15.5,34.4 L15.1,35.0 L14.7,35.5 L14.4,36.1 L14.0,36.7 L13.7,37.3 L13.3,37.9 L13.0,38.5 L12.7,39.1 L12.4,39.7 L12.2,40.4 L11.9,41.1 L11.8,41.8 L11.7,42.5 L12.0,43.6Z"/></svg><div style="left:909.70px;top:702.10px;width:13.20px;height:12.20px;background:#525252;"></div><svg style="position:absolute;left:909.70px;top:702.10px;overflow:visible;" width="13.2" height="12.2" viewBox="0 0 13.2 12.2"><path d="M10,3 L6.5,6.8" stroke="#f0f0f0" stroke-width="1.5" stroke-linecap="round"/><ellipse cx="5" cy="8" rx="2.2" ry="1.5" transform="rotate(-35 5 8)" fill="#f0f0f0"/><path d="M3.5,9.8 Q7,9.3 9.5,8.8" fill="none" stroke="#d0d0d0" stroke-width="0.7"/></svg><span class="t" style="left:399.75px;width:1000px;text-align:center;top:719.26px;font-size:6.9px;color:#cfcfcf;">#02 Dry Paint</span><svg style="position:absolute;left:930.50px;top:659.80px;overflow:visible;" width="54.5" height="54.5" viewBox="0 0 54.5 54.5"><rect width="54.5" height="54.5" fill="#6c6c6c"/><path fill="#ffffff" opacity="0.8" filter="url(#tx2)" d="M6.5,49.1 L7.8,48.7 L8.6,48.2 L9.3,47.6 L10.0,47.0 L10.6,46.4 L11.3,45.9 L11.9,45.3 L12.5,44.8 L13.1,44.2 L13.8,43.7 L14.4,43.2 L15.0,42.6 L15.6,42.1 L16.2,41.6 L16.9,41.1 L17.5,40.7 L18.1,40.2 L18.8,39.7 L19.4,39.2 L20.0,38.8 L20.7,38.3 L21.3,37.8 L22.0,37.4 L22.7,36.9 L23.3,36.5 L24.0,36.0 L24.7,35.6 L25.4,35.1 L26.0,34.7 L26.7,34.2 L27.4,33.8 L28.1,33.3 L28.8,32.8 L29.5,32.4 L30.2,31.9 L30.8,31.3 L31.4,30.7 L32.1,30.1 L32.7,29.5 L33.3,28.9 L33.9,28.3 L34.5,27.6 L35.1,27.0 L35.8,26.4 L36.4,25.7 L37.0,25.1 L37.6,24.4 L38.2,23.7 L38.8,23.1 L39.4,22.4 L40.0,21.7 L40.6,21.0 L41.1,20.2 L41.7,19.5 L42.3,18.8 L42.8,18.0 L43.4,17.3 L43.9,16.5 L44.4,15.7 L44.9,14.9 L45.4,14.1 L45.9,13.2 L46.3,12.4 L46.8,11.5 L47.2,10.6 L47.5,9.7 L47.9,8.8 L48.1,7.8 L48.3,6.8 L48.0,5.5 L48.0,5.5 L46.6,5.7 L45.8,6.2 L45.0,6.8 L44.2,7.4 L43.5,7.9 L42.8,8.5 L42.1,9.0 L41.5,9.6 L40.8,10.1 L40.1,10.7 L39.4,11.2 L38.7,11.7 L38.1,12.2 L37.4,12.7 L36.7,13.2 L36.0,13.7 L35.4,14.2 L34.7,14.7 L34.0,15.2 L33.3,15.7 L32.6,16.1 L31.9,16.6 L31.2,17.1 L30.5,17.5 L29.8,18.0 L29.1,18.4 L28.4,18.9 L27.7,19.3 L27.0,19.8 L26.3,20.3 L25.6,20.7 L24.9,21.2 L24.1,21.6 L23.4,22.1 L22.7,22.6 L22.1,23.2 L21.5,23.8 L20.9,24.4 L20.3,25.0 L19.6,25.6 L19.0,26.3 L18.4,26.9 L17.8,27.5 L17.2,28.2 L16.6,28.8 L16.0,29.5 L15.5,30.2 L14.9,30.8 L14.3,31.5 L13.7,32.2 L13.2,32.9 L12.6,33.6 L12.1,34.4 L11.6,35.1 L11.1,35.8 L10.6,36.6 L10.1,37.4 L9.6,38.1 L9.1,38.9 L8.7,39.7 L8.3,40.6 L7.9,41.4 L7.5,42.2 L7.2,43.1 L6.8,44.0 L6.5,44.9 L6.3,45.8 L6.1,46.8 L6.1,47.8 L6.5,49.1Z"/></svg><div style="left:967.70px;top:702.10px;width:13.20px;height:12.20px;background:#525252;"></div><svg style="position:absolute;left:967.70px;top:702.10px;overflow:visible;" width="13.2" height="12.2" viewBox="0 0 13.2 12.2"><path d="M10,3 L6.5,6.8" stroke="#f0f0f0" stroke-width="1.5" stroke-linecap="round"/><ellipse cx="5" cy="8" rx="2.2" ry="1.5" transform="rotate(-35 5 8)" fill="#f0f0f0"/><path d="M3.5,9.8 Q7,9.3 9.5,8.8" fill="none" stroke="#d0d0d0" stroke-width="0.7"/></svg><span class="t" style="left:457.75px;width:1000px;text-align:center;top:719.26px;font-size:6.9px;color:#cfcfcf;">#03 Dry Paint</span><svg style="position:absolute;left:988.50px;top:659.80px;overflow:visible;" width="54.5" height="54.5" viewBox="0 0 54.5 54.5"><rect width="54.5" height="54.5" fill="#6c6c6c"/><path fill="#ffffff" opacity="1" filter="url(#tx2)" d="M7.6,50.1 L8.9,49.5 L9.6,48.8 L10.3,48.0 L10.9,47.3 L11.5,46.6 L12.1,45.9 L12.7,45.3 L13.2,44.6 L13.8,44.0 L14.4,43.4 L15.0,42.8 L15.6,42.2 L16.2,41.7 L16.8,41.2 L17.4,40.6 L18.0,40.1 L18.6,39.6 L19.2,39.1 L19.8,38.6 L20.4,38.2 L21.1,37.7 L21.7,37.2 L22.4,36.8 L23.0,36.3 L23.7,35.9 L24.4,35.5 L25.1,35.0 L25.8,34.6 L26.5,34.1 L27.2,33.7 L27.9,33.3 L28.6,32.8 L29.3,32.4 L30.0,31.9 L30.8,31.5 L31.4,30.9 L32.1,30.3 L32.7,29.7 L33.4,29.1 L34.0,28.5 L34.7,27.9 L35.3,27.2 L36.0,26.6 L36.7,26.0 L37.3,25.3 L38.0,24.6 L38.6,23.9 L39.3,23.3 L39.9,22.5 L40.6,21.8 L41.2,21.1 L41.8,20.3 L42.4,19.6 L43.0,18.8 L43.6,18.0 L44.2,17.2 L44.8,16.4 L45.3,15.5 L45.8,14.6 L46.3,13.7 L46.8,12.8 L47.3,11.9 L47.7,11.0 L48.2,10.0 L48.5,9.0 L48.9,8.0 L49.2,6.9 L49.4,5.8 L49.5,4.7 L49.1,3.3 L49.1,3.3 L47.7,3.8 L46.8,4.5 L46.1,5.2 L45.4,5.9 L44.7,6.6 L44.0,7.3 L43.3,7.9 L42.6,8.6 L42.0,9.2 L41.3,9.8 L40.6,10.4 L40.0,11.0 L39.3,11.5 L38.6,12.1 L37.9,12.6 L37.2,13.1 L36.6,13.6 L35.9,14.1 L35.2,14.6 L34.5,15.1 L33.8,15.6 L33.1,16.0 L32.4,16.5 L31.7,17.0 L30.9,17.4 L30.2,17.9 L29.5,18.3 L28.8,18.8 L28.0,19.2 L27.3,19.7 L26.6,20.1 L25.8,20.6 L25.1,21.0 L24.3,21.5 L23.6,21.9 L22.9,22.5 L22.3,23.1 L21.6,23.7 L21.0,24.3 L20.3,25.0 L19.7,25.6 L19.0,26.2 L18.4,26.9 L17.7,27.5 L17.1,28.2 L16.5,28.9 L15.9,29.6 L15.3,30.3 L14.7,31.0 L14.1,31.7 L13.5,32.5 L12.9,33.2 L12.4,34.0 L11.8,34.8 L11.3,35.6 L10.8,36.4 L10.3,37.3 L9.9,38.1 L9.4,39.0 L9.0,39.9 L8.6,40.8 L8.3,41.7 L8.0,42.7 L7.7,43.6 L7.4,44.6 L7.2,45.6 L7.1,46.7 L7.0,47.7 L7.0,48.8 L7.6,50.1Z"/><path fill="#ffffff" opacity="0.8" d="M7.6,50.1 L8.0,49.2 L8.4,48.3 L8.9,47.4 L9.3,46.6 L9.7,45.8 L10.2,45.0 L10.7,44.2 L11.2,43.4 L11.7,42.7 L12.2,41.9 L12.7,41.2 L13.2,40.6 L13.8,39.9 L14.4,39.2 L14.9,38.6 L15.5,38.0 L16.1,37.4 L16.7,36.8 L17.3,36.2 L17.9,35.6 L18.6,35.1 L19.2,34.5 L19.8,34.0 L20.5,33.4 L21.2,32.9 L21.8,32.4 L22.5,31.9 L23.2,31.4 L23.9,30.9 L24.6,30.4 L25.3,29.9 L26.0,29.4 L26.7,28.9 L27.4,28.4 L28.1,27.9 L28.8,27.4 L29.4,26.8 L30.1,26.3 L30.8,25.7 L31.5,25.1 L32.1,24.6 L32.8,24.0 L33.5,23.4 L34.2,22.8 L34.9,22.3 L35.5,21.7 L36.2,21.0 L36.9,20.4 L37.5,19.8 L38.2,19.2 L38.8,18.5 L39.5,17.9 L40.1,17.2 L40.7,16.5 L41.3,15.8 L41.9,15.1 L42.5,14.4 L43.1,13.6 L43.7,12.9 L44.3,12.1 L44.8,11.3 L45.3,10.5 L45.9,9.7 L46.4,8.8 L46.9,8.0 L47.3,7.1 L47.8,6.2 L48.2,5.2 L48.7,4.3 L49.1,3.3 L49.1,3.3 L48.5,4.2 L48.0,5.1 L47.4,5.9 L46.9,6.8 L46.3,7.6 L45.8,8.4 L45.2,9.2 L44.6,10.0 L44.0,10.7 L43.4,11.4 L42.8,12.1 L42.1,12.8 L41.5,13.5 L40.9,14.1 L40.2,14.8 L39.6,15.4 L38.9,16.0 L38.2,16.6 L37.6,17.2 L36.9,17.8 L36.2,18.3 L35.5,18.9 L34.8,19.4 L34.1,19.9 L33.4,20.5 L32.7,21.0 L32.0,21.5 L31.3,22.0 L30.6,22.5 L29.9,23.0 L29.1,23.5 L28.4,24.0 L27.7,24.5 L27.0,25.0 L26.3,25.5 L25.6,26.1 L24.9,26.6 L24.3,27.2 L23.6,27.7 L22.9,28.3 L22.3,28.9 L21.6,29.4 L20.9,30.0 L20.3,30.6 L19.7,31.2 L19.0,31.8 L18.4,32.4 L17.8,33.0 L17.2,33.6 L16.6,34.3 L16.0,34.9 L15.4,35.6 L14.8,36.2 L14.3,36.9 L13.8,37.6 L13.2,38.3 L12.7,39.1 L12.2,39.8 L11.7,40.6 L11.3,41.3 L10.8,42.1 L10.4,42.9 L10.0,43.8 L9.6,44.6 L9.2,45.5 L8.8,46.4 L8.5,47.3 L8.2,48.2 L7.9,49.2 L7.6,50.1Z"/></svg><div style="left:1025.70px;top:702.10px;width:13.20px;height:12.20px;background:#525252;"></div><svg style="position:absolute;left:1025.70px;top:702.10px;overflow:visible;" width="13.2" height="12.2" viewBox="0 0 13.2 12.2"><path d="M10,3 L6.5,6.8" stroke="#f0f0f0" stroke-width="1.5" stroke-linecap="round"/><ellipse cx="5" cy="8" rx="2.2" ry="1.5" transform="rotate(-35 5 8)" fill="#f0f0f0"/><path d="M3.5,9.8 Q7,9.3 9.5,8.8" fill="none" stroke="#d0d0d0" stroke-width="0.7"/></svg><span class="t" style="left:515.75px;width:1000px;text-align:center;top:719.26px;font-size:6.9px;color:#cfcfcf;">#04 Dry Paint</span><svg style="position:absolute;left:1046.50px;top:659.80px;overflow:visible;" width="54.5" height="54.5" viewBox="0 0 54.5 54.5"><rect width="54.5" height="54.5" fill="#6c6c6c"/><path fill="#ffffff" opacity="0.5" filter="url(#tx2)" d="M12.0,44.7 L12.9,44.6 L13.6,44.2 L14.2,43.8 L14.7,43.4 L15.3,43.0 L15.8,42.6 L16.4,42.1 L16.9,41.7 L17.4,41.3 L17.9,40.9 L18.5,40.5 L19.0,40.1 L19.5,39.7 L20.1,39.3 L20.6,38.8 L21.1,38.4 L21.6,38.0 L22.2,37.6 L22.7,37.2 L23.2,36.8 L23.8,36.4 L24.3,36.0 L24.9,35.6 L25.4,35.2 L25.9,34.8 L26.5,34.4 L27.0,34.0 L27.6,33.6 L28.1,33.2 L28.7,32.8 L29.2,32.4 L29.8,32.0 L30.3,31.6 L30.9,31.2 L31.4,30.8 L31.9,30.3 L32.4,29.8 L32.9,29.3 L33.4,28.8 L33.9,28.3 L34.3,27.8 L34.8,27.3 L35.3,26.8 L35.8,26.3 L36.3,25.8 L36.8,25.3 L37.2,24.8 L37.7,24.3 L38.2,23.7 L38.7,23.2 L39.1,22.7 L39.6,22.1 L40.1,21.6 L40.5,21.0 L41.0,20.5 L41.4,19.9 L41.9,19.4 L42.3,18.8 L42.7,18.2 L43.2,17.6 L43.6,17.0 L44.0,16.4 L44.4,15.8 L44.8,15.2 L45.2,14.6 L45.5,14.0 L45.8,13.3 L46.1,12.6 L46.4,11.9 L46.3,10.9 L46.3,10.9 L45.4,11.0 L44.7,11.4 L44.1,11.8 L43.5,12.2 L42.9,12.6 L42.3,13.0 L41.8,13.4 L41.2,13.8 L40.7,14.2 L40.1,14.6 L39.5,15.1 L39.0,15.5 L38.4,15.9 L37.9,16.3 L37.3,16.7 L36.8,17.1 L36.2,17.5 L35.7,17.9 L35.1,18.3 L34.6,18.7 L34.0,19.1 L33.5,19.5 L32.9,19.9 L32.4,20.3 L31.8,20.7 L31.3,21.1 L30.7,21.5 L30.1,21.9 L29.6,22.3 L29.0,22.7 L28.5,23.1 L27.9,23.6 L27.3,24.0 L26.8,24.4 L26.2,24.8 L25.7,25.3 L25.3,25.8 L24.8,26.3 L24.3,26.8 L23.8,27.3 L23.3,27.8 L22.8,28.3 L22.4,28.8 L21.9,29.3 L21.4,29.8 L20.9,30.3 L20.5,30.8 L20.0,31.4 L19.6,31.9 L19.1,32.4 L18.6,33.0 L18.2,33.5 L17.7,34.0 L17.3,34.6 L16.9,35.1 L16.4,35.7 L16.0,36.3 L15.6,36.8 L15.2,37.4 L14.8,38.0 L14.4,38.6 L14.0,39.2 L13.7,39.8 L13.3,40.4 L13.0,41.0 L12.6,41.7 L12.3,42.3 L12.1,43.0 L11.9,43.7 L12.0,44.7Z"/></svg><div style="left:1083.70px;top:702.10px;width:13.20px;height:12.20px;background:#525252;"></div><svg style="position:absolute;left:1083.70px;top:702.10px;overflow:visible;" width="13.2" height="12.2" viewBox="0 0 13.2 12.2"><path d="M10,3 L6.5,6.8" stroke="#f0f0f0" stroke-width="1.5" stroke-linecap="round"/><ellipse cx="5" cy="8" rx="2.2" ry="1.5" transform="rotate(-35 5 8)" fill="#f0f0f0"/><path d="M3.5,9.8 Q7,9.3 9.5,8.8" fill="none" stroke="#d0d0d0" stroke-width="0.7"/></svg><span class="t" style="left:573.75px;width:1000px;text-align:center;top:719.26px;font-size:6.9px;color:#cfcfcf;">#05 Dry Paint</span><svg style="position:absolute;left:1104.50px;top:659.80px;overflow:visible;" width="54.5" height="54.5" viewBox="0 0 54.5 54.5"><rect width="54.5" height="54.5" fill="#6c6c6c"/><path fill="#ffffff" opacity="0.6" filter="url(#tx2)" d="M9.8,46.9 L10.9,46.5 L11.5,45.9 L12.1,45.4 L12.7,44.8 L13.3,44.2 L13.8,43.7 L14.4,43.1 L14.9,42.6 L15.5,42.1 L16.0,41.6 L16.6,41.1 L17.1,40.5 L17.7,40.1 L18.3,39.6 L18.8,39.1 L19.4,38.6 L20.0,38.1 L20.5,37.7 L21.1,37.2 L21.7,36.8 L22.3,36.3 L22.9,35.9 L23.5,35.4 L24.1,35.0 L24.7,34.6 L25.3,34.1 L25.9,33.7 L26.6,33.2 L27.2,32.8 L27.8,32.4 L28.4,31.9 L29.1,31.5 L29.7,31.1 L30.4,30.6 L31.0,30.2 L31.6,29.7 L32.1,29.1 L32.7,28.6 L33.3,28.0 L33.9,27.5 L34.4,26.9 L35.0,26.3 L35.6,25.8 L36.2,25.2 L36.7,24.6 L37.3,24.0 L37.9,23.4 L38.4,22.8 L39.0,22.2 L39.6,21.6 L40.1,21.0 L40.7,20.3 L41.2,19.7 L41.7,19.0 L42.3,18.4 L42.8,17.7 L43.3,17.0 L43.8,16.3 L44.3,15.6 L44.8,14.9 L45.2,14.2 L45.7,13.4 L46.1,12.7 L46.5,11.9 L46.9,11.1 L47.3,10.3 L47.6,9.5 L47.9,8.6 L48.1,7.7 L48.0,6.5 L48.0,6.5 L46.9,6.9 L46.1,7.4 L45.5,8.0 L44.8,8.5 L44.2,9.1 L43.6,9.6 L43.0,10.2 L42.3,10.7 L41.7,11.2 L41.1,11.7 L40.5,12.3 L39.9,12.8 L39.3,13.3 L38.7,13.7 L38.1,14.2 L37.5,14.7 L36.8,15.2 L36.2,15.7 L35.6,16.1 L35.0,16.6 L34.3,17.0 L33.7,17.5 L33.1,17.9 L32.4,18.4 L31.8,18.8 L31.2,19.3 L30.5,19.7 L29.9,20.1 L29.2,20.6 L28.6,21.0 L27.9,21.4 L27.3,21.9 L26.6,22.3 L26.0,22.8 L25.3,23.2 L24.8,23.8 L24.2,24.3 L23.6,24.9 L23.1,25.4 L22.5,26.0 L21.9,26.5 L21.4,27.1 L20.8,27.7 L20.2,28.3 L19.7,28.8 L19.1,29.4 L18.6,30.0 L18.0,30.6 L17.5,31.3 L17.0,31.9 L16.5,32.5 L15.9,33.1 L15.4,33.8 L14.9,34.5 L14.5,35.1 L14.0,35.8 L13.5,36.5 L13.1,37.2 L12.6,37.9 L12.2,38.6 L11.8,39.3 L11.4,40.1 L11.1,40.8 L10.7,41.6 L10.4,42.4 L10.1,43.2 L9.9,44.0 L9.6,44.9 L9.5,45.8 L9.8,46.9Z"/></svg><div style="left:1141.70px;top:702.10px;width:13.20px;height:12.20px;background:#525252;"></div><svg style="position:absolute;left:1141.70px;top:702.10px;overflow:visible;" width="13.2" height="12.2" viewBox="0 0 13.2 12.2"><path d="M10,3 L6.5,6.8" stroke="#f0f0f0" stroke-width="1.5" stroke-linecap="round"/><ellipse cx="5" cy="8" rx="2.2" ry="1.5" transform="rotate(-35 5 8)" fill="#f0f0f0"/><path d="M3.5,9.8 Q7,9.3 9.5,8.8" fill="none" stroke="#d0d0d0" stroke-width="0.7"/></svg><span class="t" style="left:631.75px;width:1000px;text-align:center;top:719.26px;font-size:6.9px;color:#cfcfcf;">#06 Dry Paint</span><svg style="position:absolute;left:1162.50px;top:659.80px;overflow:visible;" width="54.5" height="54.5" viewBox="0 0 54.5 54.5"><rect width="54.5" height="54.5" fill="#6c6c6c"/><path fill="#ffffff" opacity="0.85" filter="url(#tx2)" d="M16.3,39.2 L17.3,39.4 L17.9,39.3 L18.4,39.2 L18.9,39.0 L19.4,38.8 L19.9,38.6 L20.4,38.3 L20.8,38.1 L21.3,37.9 L21.7,37.7 L22.2,37.5 L22.6,37.2 L23.1,37.0 L23.5,36.8 L24.0,36.6 L24.4,36.3 L24.9,36.1 L25.3,35.9 L25.8,35.6 L26.2,35.4 L26.7,35.2 L27.1,34.9 L27.6,34.7 L28.1,34.5 L28.5,34.3 L29.0,34.0 L29.4,33.8 L29.9,33.6 L30.3,33.3 L30.8,33.1 L31.3,32.8 L31.7,32.6 L32.2,32.4 L32.7,32.1 L33.1,31.9 L33.5,31.5 L33.9,31.2 L34.3,30.8 L34.7,30.4 L35.1,30.0 L35.5,29.7 L35.9,29.3 L36.3,28.9 L36.6,28.5 L37.0,28.2 L37.4,27.8 L37.8,27.4 L38.2,27.0 L38.6,26.6 L38.9,26.2 L39.3,25.8 L39.7,25.4 L40.1,25.0 L40.4,24.6 L40.8,24.1 L41.2,23.7 L41.5,23.3 L41.9,22.8 L42.2,22.4 L42.5,21.9 L42.9,21.5 L43.2,21.0 L43.5,20.5 L43.8,20.1 L44.1,19.6 L44.3,19.0 L44.6,18.5 L44.8,17.9 L44.9,17.3 L44.7,16.3 L44.7,16.3 L43.7,16.1 L43.1,16.2 L42.6,16.4 L42.0,16.6 L41.5,16.8 L41.0,17.0 L40.5,17.2 L40.0,17.4 L39.6,17.6 L39.1,17.9 L38.6,18.1 L38.1,18.3 L37.7,18.5 L37.2,18.8 L36.7,19.0 L36.3,19.2 L35.8,19.5 L35.3,19.7 L34.9,19.9 L34.4,20.1 L33.9,20.4 L33.5,20.6 L33.0,20.8 L32.5,21.1 L32.1,21.3 L31.6,21.5 L31.1,21.8 L30.7,22.0 L30.2,22.3 L29.7,22.5 L29.3,22.7 L28.8,23.0 L28.3,23.2 L27.8,23.5 L27.4,23.7 L27.0,24.1 L26.6,24.4 L26.2,24.8 L25.8,25.2 L25.4,25.6 L25.0,25.9 L24.6,26.3 L24.3,26.7 L23.9,27.1 L23.5,27.5 L23.1,27.8 L22.7,28.2 L22.4,28.6 L22.0,29.0 L21.6,29.4 L21.2,29.8 L20.9,30.2 L20.5,30.7 L20.2,31.1 L19.8,31.5 L19.5,31.9 L19.2,32.4 L18.8,32.8 L18.5,33.2 L18.2,33.7 L17.9,34.2 L17.6,34.6 L17.3,35.1 L17.0,35.6 L16.8,36.1 L16.6,36.6 L16.3,37.1 L16.2,37.7 L16.1,38.3 L16.3,39.2Z"/></svg><div style="left:1199.70px;top:702.10px;width:13.20px;height:12.20px;background:#525252;"></div><svg style="position:absolute;left:1199.70px;top:702.10px;overflow:visible;" width="13.2" height="12.2" viewBox="0 0 13.2 12.2"><path d="M10,3 L6.5,6.8" stroke="#f0f0f0" stroke-width="1.5" stroke-linecap="round"/><ellipse cx="5" cy="8" rx="2.2" ry="1.5" transform="rotate(-35 5 8)" fill="#f0f0f0"/><path d="M3.5,9.8 Q7,9.3 9.5,8.8" fill="none" stroke="#d0d0d0" stroke-width="0.7"/></svg><span class="t" style="left:689.75px;width:1000px;text-align:center;top:719.26px;font-size:6.9px;color:#cfcfcf;">#07 Dry Paint</span><svg style="position:absolute;left:2.50px;top:732.60px;overflow:visible;" width="54.5" height="54.5" viewBox="0 0 54.5 54.5"><rect width="54.5" height="54.5" fill="#6c6c6c"/><g filter="url(#r1)"><path fill="#ffffff" opacity="0.8" d="M7.7,42.6 L8.3,42.1 L8.8,41.6 L9.4,41.2 L9.9,40.7 L10.5,40.3 L11.0,39.9 L11.6,39.5 L12.2,39.1 L12.7,38.7 L13.3,38.3 L13.9,38.0 L14.5,37.6 L15.1,37.3 L15.7,37.0 L16.3,36.7 L16.9,36.4 L17.5,36.1 L18.2,35.8 L18.8,35.5 L19.4,35.3 L20.1,35.0 L20.7,34.7 L21.4,34.5 L22.0,34.2 L22.6,33.9 L23.2,33.4 L23.7,33.0 L24.3,32.5 L24.9,32.1 L25.4,31.6 L26.0,31.2 L26.6,30.7 L27.2,30.3 L27.8,29.9 L28.4,29.4 L29.0,29.0 L29.6,28.5 L30.2,28.0 L30.8,27.6 L31.5,27.1 L32.1,26.7 L32.7,26.2 L33.3,25.7 L33.9,25.3 L34.5,24.8 L35.1,24.3 L35.7,23.8 L36.3,23.3 L36.9,22.8 L37.5,22.3 L38.1,21.8 L38.7,21.3 L39.3,20.8 L39.9,20.2 L40.4,19.7 L41.0,19.1 L41.5,18.6 L42.1,18.0 L42.6,17.5 L43.1,16.9 L43.6,16.3 L44.1,15.7 L44.6,15.1 L45.1,14.5 L45.5,13.8 L46.0,13.2 L46.4,12.5 L46.8,11.9 L47.2,11.2 L47.6,10.5 L47.6,10.5 L47.0,11.0 L46.4,11.6 L45.9,12.1 L45.3,12.6 L44.7,13.0 L44.1,13.5 L43.5,14.0 L42.9,14.4 L42.3,14.9 L41.7,15.3 L41.1,15.7 L40.5,16.1 L39.8,16.5 L39.2,16.9 L38.6,17.2 L37.9,17.6 L37.3,18.0 L36.6,18.3 L36.0,18.7 L35.3,19.0 L34.6,19.3 L34.0,19.7 L33.3,20.0 L32.6,20.3 L32.0,20.6 L31.3,20.9 L30.6,21.3 L29.9,21.6 L29.2,21.9 L28.5,22.2 L27.9,22.5 L27.2,22.8 L26.5,23.1 L25.8,23.4 L25.1,23.7 L24.4,24.0 L23.7,24.3 L23.0,24.6 L22.3,24.9 L21.6,25.3 L20.9,25.6 L20.2,25.9 L19.5,26.2 L18.8,26.6 L18.1,26.9 L17.5,27.4 L17.0,27.9 L16.4,28.5 L15.9,29.1 L15.4,29.6 L14.8,30.2 L14.3,30.8 L13.8,31.4 L13.3,32.0 L12.8,32.6 L12.4,33.2 L11.9,33.8 L11.5,34.4 L11.1,35.1 L10.7,35.7 L10.3,36.4 L9.9,37.0 L9.5,37.7 L9.2,38.4 L8.9,39.1 L8.6,39.7 L8.3,40.4 L8.1,41.1 L7.9,41.9 L7.7,42.6Z"/><path fill="#ffffff" opacity="0.8" d="M8.8,43.6 L9.3,43.1 L9.9,42.6 L10.4,42.1 L11.0,41.7 L11.5,41.2 L12.1,40.8 L12.6,40.4 L13.2,40.0 L13.7,39.6 L14.3,39.2 L14.9,38.8 L15.5,38.5 L16.1,38.1 L16.7,37.8 L17.3,37.5 L17.9,37.2 L18.5,36.9 L19.1,36.6 L19.7,36.3 L20.3,36.0 L21.0,35.7 L21.6,35.4 L22.3,35.2 L22.9,34.9 L23.5,34.5 L24.0,34.1 L24.6,33.6 L25.1,33.2 L25.7,32.7 L26.2,32.3 L26.8,31.8 L27.4,31.4 L27.9,30.9 L28.5,30.4 L29.1,30.0 L29.7,29.5 L30.3,29.1 L30.9,28.6 L31.5,28.1 L32.1,27.7 L32.7,27.2 L33.3,26.7 L33.9,26.2 L34.5,25.8 L35.1,25.3 L35.7,24.8 L36.3,24.3 L36.8,23.8 L37.4,23.3 L38.0,22.8 L38.6,22.2 L39.2,21.7 L39.7,21.2 L40.3,20.6 L40.8,20.1 L41.4,19.5 L41.9,19.0 L42.4,18.4 L42.9,17.8 L43.4,17.2 L43.9,16.6 L44.4,16.0 L44.9,15.4 L45.4,14.7 L45.8,14.1 L46.2,13.4 L46.6,12.8 L47.0,12.1 L47.4,11.4 L47.8,10.7 L47.8,10.7 L47.2,11.3 L46.6,11.8 L46.1,12.3 L45.5,12.8 L44.9,13.3 L44.4,13.8 L43.8,14.3 L43.2,14.8 L42.6,15.2 L42.0,15.6 L41.4,16.1 L40.8,16.5 L40.2,16.9 L39.5,17.3 L38.9,17.7 L38.3,18.0 L37.6,18.4 L37.0,18.8 L36.4,19.1 L35.7,19.5 L35.1,19.8 L34.4,20.2 L33.7,20.5 L33.1,20.8 L32.4,21.2 L31.8,21.5 L31.1,21.8 L30.4,22.1 L29.7,22.5 L29.1,22.8 L28.4,23.1 L27.7,23.4 L27.0,23.7 L26.3,24.0 L25.7,24.4 L25.0,24.7 L24.3,25.0 L23.6,25.3 L22.9,25.6 L22.2,26.0 L21.6,26.3 L20.9,26.6 L20.2,27.0 L19.5,27.3 L18.8,27.7 L18.2,28.2 L17.7,28.7 L17.2,29.3 L16.6,29.9 L16.1,30.5 L15.6,31.0 L15.1,31.6 L14.6,32.2 L14.2,32.8 L13.7,33.5 L13.2,34.1 L12.8,34.7 L12.4,35.4 L12.0,36.0 L11.6,36.7 L11.2,37.3 L10.9,38.0 L10.5,38.7 L10.2,39.3 L9.9,40.0 L9.6,40.7 L9.4,41.5 L9.1,42.2 L8.9,42.9 L8.8,43.6Z"/><path fill="#ffffff" opacity="0.8" d="M9.8,44.7 L10.4,44.2 L10.9,43.6 L11.4,43.1 L12.0,42.6 L12.5,42.2 L13.1,41.7 L13.6,41.3 L14.2,40.9 L14.7,40.5 L15.3,40.1 L15.9,39.7 L16.4,39.3 L17.0,39.0 L17.6,38.6 L18.2,38.3 L18.8,38.0 L19.4,37.6 L20.0,37.3 L20.6,37.0 L21.2,36.7 L21.9,36.4 L22.5,36.1 L23.1,35.9 L23.8,35.6 L24.3,35.2 L24.9,34.8 L25.4,34.3 L25.9,33.8 L26.5,33.4 L27.0,32.9 L27.6,32.4 L28.1,32.0 L28.7,31.5 L29.2,31.0 L29.8,30.6 L30.4,30.1 L31.0,29.6 L31.5,29.2 L32.1,28.7 L32.7,28.2 L33.3,27.7 L33.9,27.2 L34.5,26.8 L35.0,26.3 L35.6,25.8 L36.2,25.3 L36.8,24.7 L37.3,24.2 L37.9,23.7 L38.5,23.2 L39.0,22.7 L39.6,22.1 L40.1,21.6 L40.7,21.0 L41.2,20.5 L41.8,19.9 L42.3,19.3 L42.8,18.7 L43.3,18.1 L43.8,17.5 L44.3,16.9 L44.7,16.3 L45.2,15.7 L45.6,15.0 L46.1,14.4 L46.5,13.7 L46.9,13.0 L47.3,12.3 L47.6,11.6 L48.0,10.9 L48.0,10.9 L47.4,11.5 L46.9,12.0 L46.3,12.6 L45.7,13.1 L45.2,13.6 L44.6,14.1 L44.0,14.6 L43.5,15.1 L42.9,15.5 L42.3,16.0 L41.7,16.4 L41.1,16.9 L40.5,17.3 L39.9,17.7 L39.2,18.1 L38.6,18.5 L38.0,18.9 L37.4,19.3 L36.7,19.6 L36.1,20.0 L35.5,20.3 L34.8,20.7 L34.2,21.0 L33.5,21.4 L32.9,21.7 L32.2,22.1 L31.6,22.4 L30.9,22.7 L30.2,23.1 L29.6,23.4 L28.9,23.7 L28.3,24.0 L27.6,24.4 L26.9,24.7 L26.2,25.0 L25.6,25.3 L24.9,25.7 L24.2,26.0 L23.6,26.3 L22.9,26.7 L22.2,27.0 L21.6,27.4 L20.9,27.7 L20.2,28.1 L19.5,28.5 L18.9,28.9 L18.4,29.5 L17.9,30.1 L17.4,30.7 L16.9,31.3 L16.4,31.9 L15.9,32.5 L15.5,33.1 L15.0,33.7 L14.6,34.3 L14.1,35.0 L13.7,35.6 L13.3,36.3 L12.9,36.9 L12.5,37.6 L12.1,38.3 L11.8,38.9 L11.5,39.6 L11.2,40.3 L10.9,41.0 L10.6,41.7 L10.4,42.5 L10.1,43.2 L10.0,43.9 L9.8,44.7Z"/><path fill="#ffffff" opacity="0.8" d="M10.9,45.7 L11.4,45.2 L11.9,44.6 L12.5,44.1 L13.0,43.6 L13.5,43.1 L14.1,42.7 L14.6,42.2 L15.2,41.8 L15.7,41.3 L16.3,40.9 L16.8,40.5 L17.4,40.2 L18.0,39.8 L18.6,39.4 L19.2,39.1 L19.7,38.7 L20.3,38.4 L20.9,38.1 L21.5,37.8 L22.1,37.5 L22.8,37.1 L23.4,36.8 L24.0,36.6 L24.6,36.3 L25.2,35.9 L25.7,35.4 L26.2,34.9 L26.7,34.5 L27.2,34.0 L27.8,33.5 L28.3,33.1 L28.9,32.6 L29.4,32.1 L30.0,31.6 L30.5,31.2 L31.1,30.7 L31.6,30.2 L32.2,29.7 L32.8,29.2 L33.3,28.7 L33.9,28.3 L34.5,27.8 L35.0,27.3 L35.6,26.8 L36.2,26.2 L36.7,25.7 L37.3,25.2 L37.8,24.7 L38.4,24.2 L39.0,23.6 L39.5,23.1 L40.0,22.5 L40.6,22.0 L41.1,21.4 L41.6,20.8 L42.1,20.3 L42.6,19.7 L43.1,19.1 L43.6,18.5 L44.1,17.9 L44.6,17.2 L45.0,16.6 L45.5,15.9 L45.9,15.3 L46.3,14.6 L46.7,13.9 L47.1,13.3 L47.5,12.5 L47.8,11.8 L48.2,11.1 L48.2,11.1 L47.6,11.7 L47.1,12.3 L46.5,12.8 L46.0,13.4 L45.4,13.9 L44.9,14.4 L44.3,14.9 L43.7,15.4 L43.1,15.9 L42.6,16.4 L42.0,16.8 L41.4,17.3 L40.8,17.7 L40.2,18.1 L39.6,18.5 L39.0,18.9 L38.4,19.3 L37.7,19.7 L37.1,20.1 L36.5,20.5 L35.9,20.8 L35.2,21.2 L34.6,21.6 L34.0,21.9 L33.3,22.3 L32.7,22.6 L32.0,23.0 L31.4,23.3 L30.8,23.6 L30.1,24.0 L29.4,24.3 L28.8,24.7 L28.1,25.0 L27.5,25.3 L26.8,25.7 L26.2,26.0 L25.5,26.4 L24.9,26.7 L24.2,27.1 L23.5,27.4 L22.9,27.8 L22.2,28.1 L21.6,28.5 L20.9,28.9 L20.2,29.3 L19.7,29.7 L19.2,30.3 L18.7,30.9 L18.2,31.5 L17.7,32.1 L17.2,32.7 L16.7,33.3 L16.3,34.0 L15.8,34.6 L15.4,35.2 L15.0,35.9 L14.6,36.5 L14.2,37.2 L13.8,37.8 L13.4,38.5 L13.1,39.2 L12.8,39.9 L12.4,40.6 L12.1,41.3 L11.9,42.0 L11.6,42.7 L11.4,43.5 L11.2,44.2 L11.0,45.0 L10.9,45.7Z"/><path fill="#ffffff" opacity="0.8" d="M11.9,46.8 L12.4,46.2 L13.0,45.7 L13.5,45.1 L14.0,44.6 L14.6,44.1 L15.1,43.6 L15.6,43.1 L16.2,42.7 L16.7,42.2 L17.3,41.8 L17.8,41.4 L18.4,41.0 L19.0,40.6 L19.5,40.2 L20.1,39.9 L20.7,39.5 L21.3,39.2 L21.9,38.8 L22.4,38.5 L23.0,38.2 L23.7,37.9 L24.3,37.5 L24.9,37.2 L25.5,36.9 L26.0,36.6 L26.5,36.1 L27.0,35.6 L27.5,35.1 L28.0,34.6 L28.6,34.1 L29.1,33.7 L29.6,33.2 L30.1,32.7 L30.7,32.2 L31.2,31.7 L31.8,31.2 L32.3,30.8 L32.8,30.3 L33.4,29.8 L34.0,29.3 L34.5,28.8 L35.1,28.3 L35.6,27.8 L36.2,27.3 L36.7,26.7 L37.3,26.2 L37.8,25.7 L38.3,25.2 L38.9,24.6 L39.4,24.1 L40.0,23.5 L40.5,23.0 L41.0,22.4 L41.5,21.8 L42.0,21.2 L42.5,20.6 L43.0,20.0 L43.5,19.4 L44.0,18.8 L44.4,18.2 L44.9,17.5 L45.3,16.9 L45.7,16.2 L46.2,15.6 L46.6,14.9 L47.0,14.2 L47.3,13.5 L47.7,12.8 L48.0,12.0 L48.4,11.3 L48.4,11.3 L47.8,11.9 L47.3,12.5 L46.7,13.1 L46.2,13.6 L45.7,14.2 L45.1,14.7 L44.6,15.2 L44.0,15.7 L43.4,16.2 L42.9,16.7 L42.3,17.2 L41.7,17.6 L41.1,18.1 L40.5,18.5 L39.9,19.0 L39.3,19.4 L38.7,19.8 L38.1,20.2 L37.5,20.6 L36.9,21.0 L36.3,21.4 L35.7,21.7 L35.0,22.1 L34.4,22.5 L33.8,22.8 L33.2,23.2 L32.5,23.5 L31.9,23.9 L31.3,24.2 L30.6,24.6 L30.0,24.9 L29.3,25.3 L28.7,25.6 L28.1,26.0 L27.4,26.3 L26.8,26.7 L26.1,27.0 L25.5,27.4 L24.8,27.8 L24.2,28.1 L23.5,28.5 L22.9,28.9 L22.2,29.3 L21.6,29.6 L20.9,30.0 L20.4,30.5 L19.9,31.1 L19.4,31.7 L18.9,32.3 L18.5,32.9 L18.0,33.6 L17.5,34.2 L17.1,34.8 L16.7,35.5 L16.3,36.1 L15.9,36.8 L15.5,37.4 L15.1,38.1 L14.7,38.8 L14.4,39.5 L14.0,40.1 L13.7,40.8 L13.4,41.6 L13.1,42.3 L12.9,43.0 L12.6,43.7 L12.4,44.5 L12.2,45.2 L12.0,46.0 L11.9,46.8Z"/></g></svg><div style="left:39.70px;top:774.90px;width:13.20px;height:12.20px;background:#525252;"></div><svg style="position:absolute;left:39.70px;top:774.90px;overflow:visible;" width="13.2" height="12.2" viewBox="0 0 13.2 12.2"><circle cx="6.8" cy="5.4" r="2.4" fill="#f0f0f0"/><path d="M4.5,7.5 H9 V9.5 H4.5 Z" fill="#f0f0f0"/></svg><span class="t" style="left:-470.25px;width:1000px;text-align:center;top:792.06px;font-size:6.9px;color:#cfcfcf;">#01 Mixer</span><svg style="position:absolute;left:60.50px;top:732.60px;overflow:visible;" width="54.5" height="54.5" viewBox="0 0 54.5 54.5"><rect width="54.5" height="54.5" fill="#6c6c6c"/><path fill="#ffffff" opacity="0.95" filter="url(#tx1)" d="M9.3,48.0 L11.4,48.1 L12.5,47.8 L13.6,47.5 L14.2,47.0 L14.6,46.4 L15.1,45.8 L15.7,45.3 L16.5,45.0 L17.1,44.6 L17.5,43.9 L18.1,43.5 L19.0,43.4 L20.4,43.6 L21.2,43.4 L21.2,42.5 L21.6,41.9 L22.2,41.5 L22.8,41.1 L23.5,40.8 L23.6,39.9 L23.7,39.0 L24.8,39.1 L25.9,39.2 L26.9,39.2 L27.9,39.3 L27.9,38.3 L28.7,38.0 L29.5,37.8 L30.3,37.6 L30.2,36.4 L30.3,35.3 L30.6,34.5 L31.4,34.3 L32.9,34.8 L33.7,34.6 L34.7,34.6 L35.0,33.7 L35.8,33.4 L36.4,32.8 L37.0,32.3 L37.2,31.2 L37.1,29.9 L37.3,28.8 L37.9,28.2 L38.9,28.0 L39.6,27.6 L40.1,26.8 L40.6,26.1 L41.4,25.7 L42.6,25.7 L43.2,25.0 L43.2,23.8 L42.9,22.2 L43.3,21.4 L43.9,20.7 L44.4,20.0 L44.9,19.2 L45.3,18.3 L46.0,17.8 L46.8,17.2 L47.4,16.5 L47.7,15.6 L47.9,14.6 L47.9,13.4 L48.1,12.4 L48.4,11.5 L48.5,10.4 L48.4,9.3 L48.3,8.1 L47.4,6.5 L47.4,6.5 L45.5,6.4 L44.3,6.7 L43.3,6.9 L42.2,7.1 L41.5,7.6 L41.0,8.2 L40.6,9.0 L40.1,9.5 L39.1,9.7 L38.5,10.2 L37.7,10.5 L37.1,11.0 L36.4,11.3 L35.5,11.5 L34.3,11.4 L33.4,11.6 L33.5,12.8 L33.4,13.7 L32.8,14.1 L32.0,14.3 L31.3,14.8 L30.6,15.1 L29.8,15.3 L29.2,15.8 L27.9,15.5 L26.7,15.2 L26.4,16.1 L26.2,16.9 L25.9,17.8 L25.5,18.5 L24.7,18.8 L23.6,18.7 L22.8,19.0 L22.6,19.9 L21.4,19.7 L20.8,20.3 L19.6,20.2 L19.0,20.7 L19.1,22.1 L19.5,23.8 L19.0,24.5 L18.5,25.2 L17.2,24.9 L16.7,25.6 L16.1,26.3 L15.5,26.9 L14.8,27.4 L14.1,27.9 L13.3,28.3 L13.4,29.6 L13.6,31.1 L13.2,31.9 L12.8,32.7 L11.6,32.8 L11.0,33.4 L10.7,34.3 L10.4,35.2 L9.6,35.7 L9.3,36.6 L8.8,37.4 L8.8,38.5 L9.0,39.8 L9.1,40.9 L8.4,41.5 L8.1,42.3 L7.6,43.1 L7.5,44.1 L7.7,45.2 L7.9,46.3 L9.3,48.0Z"/></svg><div style="left:97.70px;top:774.90px;width:13.20px;height:12.20px;background:#525252;"></div><svg style="position:absolute;left:97.70px;top:774.90px;overflow:visible;" width="13.2" height="12.2" viewBox="0 0 13.2 12.2"><circle cx="6.8" cy="5.4" r="2.4" fill="#f0f0f0"/><path d="M4.5,7.5 H9 V9.5 H4.5 Z" fill="#f0f0f0"/></svg><span class="t" style="left:-412.25px;width:1000px;text-align:center;top:792.06px;font-size:6.9px;color:#cfcfcf;">#02 Mixer</span><svg style="position:absolute;left:118.50px;top:732.60px;overflow:visible;" width="54.5" height="54.5" viewBox="0 0 54.5 54.5"><rect width="54.5" height="54.5" fill="#6c6c6c"/><path fill="#ffffff" opacity="1" filter="url(#r3)" d="M9.3,50.7 L11.1,50.2 L11.9,49.5 L12.8,49.0 L13.4,48.2 L14.0,47.6 L14.3,46.8 L15.3,46.4 L16.1,46.0 L17.3,45.8 L17.7,45.1 L17.8,44.3 L18.3,43.8 L18.8,43.2 L19.4,42.8 L19.9,42.2 L20.0,41.4 L20.6,41.0 L21.5,40.8 L22.7,40.9 L23.5,40.7 L23.9,40.1 L24.5,39.7 L24.9,39.1 L25.8,39.1 L26.1,38.3 L26.2,37.4 L26.6,36.7 L27.3,36.3 L28.0,36.0 L29.2,36.2 L30.2,36.1 L30.7,35.5 L31.4,35.2 L32.2,34.9 L33.4,35.2 L33.6,34.0 L33.5,32.7 L33.6,31.4 L34.3,31.0 L35.3,30.8 L35.9,30.2 L36.5,29.5 L37.1,28.9 L38.0,28.6 L39.0,28.3 L39.7,27.8 L40.2,26.9 L40.1,25.4 L40.6,24.7 L40.9,23.6 L41.8,23.2 L42.2,22.2 L42.8,21.5 L43.2,20.6 L44.0,20.0 L45.1,19.6 L45.7,18.8 L45.9,17.7 L46.1,16.5 L46.5,15.6 L46.8,14.6 L47.3,13.6 L47.3,12.4 L47.6,11.4 L47.9,10.4 L48.5,9.5 L48.8,8.5 L48.9,7.3 L48.7,6.1 L47.4,4.4 L47.4,4.4 L45.4,4.6 L44.1,5.0 L43.3,5.7 L42.7,6.4 L42.4,7.2 L41.8,7.9 L40.9,8.4 L40.0,8.8 L39.3,9.4 L38.6,9.9 L38.1,10.5 L37.0,10.6 L36.3,11.1 L35.8,11.7 L35.3,12.3 L35.1,13.2 L34.9,14.0 L33.8,14.1 L32.8,14.1 L32.0,14.5 L31.3,14.8 L30.8,15.4 L29.8,15.4 L29.1,15.8 L28.5,16.3 L28.2,17.1 L27.9,18.0 L27.8,19.1 L26.5,18.8 L25.4,18.7 L24.6,19.0 L23.7,19.2 L23.4,20.0 L22.3,20.1 L21.4,20.3 L20.9,20.9 L20.9,22.3 L20.9,23.7 L20.6,24.6 L19.4,24.5 L18.6,24.9 L17.5,25.0 L16.8,25.6 L16.3,26.4 L16.0,27.3 L15.4,28.0 L14.5,28.4 L14.4,29.6 L14.4,30.9 L14.1,31.8 L13.3,32.3 L12.3,32.8 L11.3,33.1 L11.0,34.2 L10.5,34.9 L10.4,36.1 L9.9,36.9 L9.3,37.7 L9.3,38.9 L9.2,39.9 L9.3,41.2 L8.8,42.0 L8.1,42.7 L7.4,43.5 L7.4,44.6 L7.5,45.8 L7.5,46.9 L7.6,48.0 L8.0,49.2 L9.3,50.7Z"/></svg><div style="left:155.70px;top:774.90px;width:13.20px;height:12.20px;background:#525252;"></div><svg style="position:absolute;left:155.70px;top:774.90px;overflow:visible;" width="13.2" height="12.2" viewBox="0 0 13.2 12.2"><circle cx="6.8" cy="5.4" r="2.4" fill="#f0f0f0"/><path d="M4.5,7.5 H9 V9.5 H4.5 Z" fill="#f0f0f0"/></svg><span class="t" style="left:-354.25px;width:1000px;text-align:center;top:792.06px;font-size:6.9px;color:#cfcfcf;">#03 Mixer</span><svg style="position:absolute;left:176.50px;top:732.60px;overflow:visible;" width="54.5" height="54.5" viewBox="0 0 54.5 54.5"><rect width="54.5" height="54.5" fill="#6c6c6c"/><path fill="#ffffff" opacity="0.4275" filter="url(#b2)" d="M6.5,49.1 L7.6,48.8 L8.3,48.4 L9.1,47.9 L9.8,47.4 L10.4,46.9 L11.1,46.4 L11.8,45.9 L12.4,45.5 L13.1,45.0 L13.8,44.5 L14.4,44.0 L15.1,43.5 L15.7,43.1 L16.4,42.6 L17.1,42.1 L17.7,41.6 L18.4,41.2 L19.0,40.7 L19.7,40.2 L20.4,39.8 L21.0,39.3 L21.7,38.9 L22.4,38.4 L23.0,37.9 L23.7,37.5 L24.4,37.0 L25.1,36.6 L25.7,36.1 L26.4,35.6 L27.1,35.2 L27.8,34.7 L28.5,34.2 L29.2,33.8 L29.8,33.3 L30.5,32.8 L31.1,32.2 L31.7,31.6 L32.2,31.0 L32.8,30.4 L33.4,29.7 L33.9,29.1 L34.5,28.5 L35.0,27.9 L35.6,27.2 L36.2,26.6 L36.7,25.9 L37.3,25.3 L37.9,24.6 L38.4,24.0 L39.0,23.3 L39.5,22.6 L40.0,22.0 L40.6,21.3 L41.1,20.6 L41.6,19.9 L42.2,19.2 L42.7,18.5 L43.2,17.8 L43.7,17.1 L44.2,16.4 L44.7,15.6 L45.1,14.9 L45.6,14.1 L46.1,13.4 L46.5,12.6 L46.9,11.8 L47.3,11.0 L47.6,10.1 L47.9,9.3 L48.0,8.2 L48.0,8.2 L46.9,8.4 L46.1,8.8 L45.3,9.3 L44.6,9.8 L43.9,10.3 L43.2,10.7 L42.5,11.2 L41.8,11.7 L41.1,12.2 L40.4,12.7 L39.7,13.2 L39.0,13.6 L38.3,14.1 L37.7,14.6 L37.0,15.1 L36.3,15.5 L35.6,16.0 L34.9,16.5 L34.2,16.9 L33.5,17.4 L32.9,17.9 L32.2,18.3 L31.5,18.8 L30.8,19.3 L30.1,19.7 L29.4,20.2 L28.7,20.6 L28.0,21.1 L27.4,21.6 L26.7,22.0 L26.0,22.5 L25.3,23.0 L24.6,23.4 L23.9,23.9 L23.2,24.4 L22.6,25.0 L22.1,25.6 L21.5,26.2 L20.9,26.9 L20.4,27.5 L19.8,28.1 L19.2,28.8 L18.7,29.4 L18.1,30.0 L17.6,30.7 L17.0,31.3 L16.5,32.0 L15.9,32.6 L15.4,33.3 L14.9,34.0 L14.3,34.6 L13.8,35.3 L13.3,36.0 L12.8,36.7 L12.3,37.4 L11.8,38.1 L11.3,38.8 L10.8,39.5 L10.3,40.2 L9.9,40.9 L9.4,41.7 L9.0,42.4 L8.6,43.2 L8.2,43.9 L7.8,44.7 L7.4,45.5 L7.1,46.3 L6.8,47.1 L6.5,48.0 L6.5,49.1Z"/><path fill="#ffffff" opacity="0.95" filter="url(#tx3)" d="M6.5,49.1 L8.0,49.1 L8.8,48.7 L9.6,48.3 L10.3,47.9 L11.0,47.4 L11.5,46.8 L12.0,46.2 L13.2,46.1 L14.1,45.8 L15.0,45.7 L15.4,44.9 L16.1,44.5 L16.8,44.0 L17.6,43.8 L18.2,43.2 L18.4,42.3 L18.6,41.4 L19.5,41.1 L20.3,40.9 L21.2,40.7 L22.2,40.5 L22.7,39.9 L23.3,39.4 L24.3,39.3 L25.4,39.3 L25.4,38.2 L25.7,37.3 L25.9,36.2 L26.6,35.8 L27.6,35.7 L28.4,35.4 L29.2,35.1 L29.8,34.5 L30.9,34.5 L32.3,34.8 L32.9,34.4 L32.8,33.0 L33.2,32.1 L33.1,30.7 L34.0,30.5 L34.4,29.7 L35.0,29.1 L35.3,28.1 L36.2,27.9 L37.3,27.9 L38.4,27.8 L38.8,27.0 L39.2,26.1 L39.1,24.8 L39.9,24.3 L40.3,23.5 L40.9,22.9 L41.2,21.9 L41.4,20.9 L42.1,20.4 L43.2,20.2 L44.0,19.9 L44.4,19.0 L44.8,18.2 L45.0,17.2 L45.7,16.6 L46.1,15.8 L46.4,14.9 L46.5,13.8 L46.7,12.8 L47.4,12.2 L47.9,11.5 L48.2,10.6 L48.3,9.6 L48.0,8.2 L48.0,8.2 L46.6,8.2 L45.5,8.3 L44.5,8.6 L43.6,8.9 L43.0,9.4 L42.6,10.2 L41.9,10.7 L41.2,11.1 L40.5,11.6 L39.9,12.2 L39.2,12.7 L38.5,13.1 L37.3,13.1 L36.3,13.2 L35.5,13.5 L35.0,14.2 L34.9,15.3 L34.6,16.1 L33.8,16.5 L32.8,16.6 L32.1,17.0 L31.4,17.5 L30.8,18.1 L29.8,18.1 L28.6,18.1 L27.8,18.3 L27.4,19.1 L27.3,20.3 L27.2,21.4 L26.1,21.4 L25.3,21.7 L24.3,21.9 L24.0,22.8 L23.1,23.0 L22.0,23.0 L20.8,22.9 L20.4,23.7 L20.3,24.8 L20.2,26.1 L20.0,27.0 L19.5,27.7 L18.7,28.1 L17.8,28.4 L17.1,28.9 L16.6,29.6 L16.0,30.2 L15.1,30.4 L14.3,30.9 L14.3,32.1 L14.2,33.3 L14.0,34.3 L13.3,34.8 L12.8,35.5 L11.8,35.7 L11.2,36.3 L10.8,37.1 L10.2,37.7 L9.7,38.4 L9.2,39.1 L8.8,39.9 L8.9,41.2 L8.6,42.0 L8.2,42.9 L7.5,43.4 L7.1,44.1 L6.6,44.8 L6.4,45.7 L6.1,46.6 L6.0,47.6 L6.5,49.1Z"/></svg><div style="left:213.70px;top:774.90px;width:13.20px;height:12.20px;background:#525252;"></div><svg style="position:absolute;left:213.70px;top:774.90px;overflow:visible;" width="13.2" height="12.2" viewBox="0 0 13.2 12.2"><path d="M10,3 L6.5,6.8" stroke="#f0f0f0" stroke-width="1.5" stroke-linecap="round"/><ellipse cx="5" cy="8" rx="2.2" ry="1.5" transform="rotate(-35 5 8)" fill="#f0f0f0"/><path d="M3.5,9.8 Q7,9.3 9.5,8.8" fill="none" stroke="#d0d0d0" stroke-width="0.7"/></svg><span class="t" style="left:-296.25px;width:1000px;text-align:center;top:792.06px;font-size:6.9px;color:#cfcfcf;">#01 Texture</span><svg style="position:absolute;left:234.50px;top:732.60px;overflow:visible;" width="54.5" height="54.5" viewBox="0 0 54.5 54.5"><rect width="54.5" height="54.5" fill="#6c6c6c"/><path fill="#ffffff" opacity="0.45" filter="url(#b2)" d="M8.2,48.0 L9.3,47.7 L10.1,47.3 L10.8,46.9 L11.5,46.4 L12.2,46.0 L12.9,45.5 L13.6,45.0 L14.2,44.5 L14.9,44.1 L15.5,43.6 L16.1,43.1 L16.8,42.7 L17.4,42.2 L18.1,41.7 L18.7,41.3 L19.3,40.8 L20.0,40.4 L20.6,39.9 L21.2,39.4 L21.9,39.0 L22.5,38.5 L23.2,38.1 L23.8,37.6 L24.4,37.2 L25.1,36.7 L25.7,36.3 L26.4,35.8 L27.0,35.4 L27.7,34.9 L28.3,34.5 L29.0,34.0 L29.6,33.6 L30.3,33.1 L30.9,32.6 L31.6,32.2 L32.1,31.5 L32.6,30.9 L33.1,30.3 L33.6,29.6 L34.1,29.0 L34.6,28.3 L35.1,27.7 L35.6,27.0 L36.1,26.4 L36.6,25.7 L37.0,25.0 L37.5,24.4 L38.0,23.7 L38.5,23.0 L39.0,22.3 L39.5,21.6 L39.9,20.9 L40.4,20.2 L40.9,19.5 L41.3,18.8 L41.8,18.1 L42.2,17.3 L42.7,16.6 L43.1,15.8 L43.5,15.1 L43.9,14.3 L44.3,13.6 L44.7,12.8 L45.1,12.0 L45.4,11.2 L45.7,10.3 L46.0,9.5 L46.3,8.6 L46.5,7.7 L46.3,6.5 L46.3,6.5 L45.2,6.7 L44.4,7.1 L43.6,7.6 L42.8,8.0 L42.1,8.5 L41.4,9.0 L40.7,9.4 L40.1,9.9 L39.4,10.4 L38.7,10.8 L38.0,11.3 L37.4,11.8 L36.7,12.2 L36.0,12.7 L35.4,13.2 L34.7,13.6 L34.1,14.1 L33.4,14.5 L32.7,15.0 L32.1,15.5 L31.4,15.9 L30.8,16.4 L30.1,16.8 L29.5,17.3 L28.8,17.7 L28.1,18.2 L27.5,18.6 L26.8,19.1 L26.2,19.6 L25.5,20.0 L24.8,20.5 L24.2,20.9 L23.5,21.4 L22.9,21.9 L22.2,22.3 L21.7,23.0 L21.2,23.6 L20.7,24.2 L20.2,24.9 L19.7,25.5 L19.2,26.2 L18.7,26.9 L18.2,27.5 L17.7,28.2 L17.2,28.8 L16.8,29.5 L16.3,30.2 L15.8,30.9 L15.3,31.6 L14.9,32.2 L14.4,32.9 L14.0,33.6 L13.5,34.4 L13.1,35.1 L12.6,35.8 L12.2,36.5 L11.8,37.2 L11.4,38.0 L11.0,38.7 L10.6,39.5 L10.2,40.2 L9.8,41.0 L9.5,41.8 L9.2,42.6 L8.9,43.4 L8.6,44.2 L8.3,45.1 L8.1,45.9 L8.0,46.8 L8.2,48.0Z"/><path fill="#ffffff" opacity="1.0" filter="url(#tx3)" d="M8.2,48.0 L9.8,48.1 L10.6,47.7 L11.7,47.5 L12.9,47.4 L13.7,47.0 L14.1,46.4 L14.2,45.5 L14.9,45.1 L15.7,44.7 L16.4,44.4 L16.7,43.6 L17.3,43.1 L18.1,42.8 L19.4,42.9 L20.4,42.9 L21.0,42.3 L21.5,41.8 L21.6,40.8 L22.4,40.6 L23.1,40.2 L23.3,39.3 L23.6,38.5 L24.1,38.0 L25.1,37.9 L26.5,38.1 L27.3,37.9 L27.9,37.4 L28.6,37.0 L29.0,36.3 L30.2,36.5 L30.6,35.8 L30.8,34.7 L30.3,33.1 L31.1,32.8 L32.1,32.7 L33.5,33.0 L34.0,32.4 L34.2,31.5 L34.8,30.9 L35.5,30.5 L36.8,30.7 L36.8,29.5 L36.8,28.3 L36.7,27.0 L36.8,25.9 L37.6,25.6 L38.4,25.2 L38.9,24.5 L39.6,24.1 L40.0,23.3 L41.3,23.5 L41.9,22.8 L42.2,22.0 L42.0,20.6 L42.2,19.6 L42.3,18.6 L43.1,18.1 L43.3,17.2 L43.6,16.3 L44.1,15.6 L44.9,15.2 L45.6,14.6 L46.2,14.0 L46.2,12.9 L46.3,11.9 L46.4,10.9 L46.7,10.0 L46.9,9.1 L46.9,8.0 L46.3,6.5 L46.3,6.5 L44.6,6.3 L43.8,6.7 L43.1,7.2 L42.5,7.7 L41.6,8.1 L40.4,8.1 L39.5,8.4 L38.8,8.8 L38.4,9.5 L37.4,9.7 L36.9,10.3 L35.9,10.5 L35.7,11.3 L35.5,12.2 L35.0,12.8 L33.9,12.9 L32.9,13.0 L32.0,13.1 L30.9,13.2 L30.9,14.3 L30.1,14.5 L29.2,14.8 L28.6,15.3 L28.5,16.3 L28.5,17.4 L28.2,18.2 L26.7,17.8 L25.4,17.6 L24.3,17.6 L23.9,18.3 L23.5,19.1 L23.0,19.6 L22.1,19.9 L21.4,20.3 L21.1,21.2 L21.6,22.8 L21.1,23.5 L20.2,23.7 L19.0,23.7 L17.9,23.7 L17.2,24.1 L17.4,25.5 L17.3,26.6 L16.4,26.8 L16.3,27.9 L16.0,28.8 L15.7,29.7 L15.5,30.6 L14.8,31.1 L13.7,31.1 L12.4,31.0 L12.2,32.0 L12.2,33.2 L12.1,34.2 L11.5,34.8 L11.4,35.8 L11.0,36.6 L10.6,37.3 L10.6,38.4 L9.8,38.8 L9.1,39.4 L8.4,39.9 L7.9,40.5 L7.9,41.6 L8.1,42.8 L8.0,43.8 L7.6,44.5 L7.6,45.6 L7.5,46.5 L8.2,48.0Z"/></svg><div style="left:271.70px;top:774.90px;width:13.20px;height:12.20px;background:#525252;"></div><svg style="position:absolute;left:271.70px;top:774.90px;overflow:visible;" width="13.2" height="12.2" viewBox="0 0 13.2 12.2"><path d="M10,3 L6.5,6.8" stroke="#f0f0f0" stroke-width="1.5" stroke-linecap="round"/><ellipse cx="5" cy="8" rx="2.2" ry="1.5" transform="rotate(-35 5 8)" fill="#f0f0f0"/><path d="M3.5,9.8 Q7,9.3 9.5,8.8" fill="none" stroke="#d0d0d0" stroke-width="0.7"/></svg><span class="t" style="left:-238.25px;width:1000px;text-align:center;top:792.06px;font-size:6.9px;color:#cfcfcf;">#02 Texture</span><svg style="position:absolute;left:292.50px;top:732.60px;overflow:visible;" width="54.5" height="54.5" viewBox="0 0 54.5 54.5"><rect width="54.5" height="54.5" fill="#6c6c6c"/><path fill="#ffffff" opacity="0.27" filter="url(#b2)" d="M8.2,50.1 L9.2,49.8 L9.9,49.2 L10.6,48.7 L11.3,48.1 L11.9,47.5 L12.6,47.0 L13.2,46.4 L13.9,45.9 L14.5,45.3 L15.2,44.7 L15.8,44.2 L16.4,43.6 L17.1,43.1 L17.7,42.6 L18.3,42.0 L19.0,41.5 L19.6,40.9 L20.3,40.4 L20.9,39.9 L21.5,39.4 L22.2,38.8 L22.8,38.3 L23.5,37.8 L24.1,37.3 L24.8,36.7 L25.4,36.2 L26.1,35.7 L26.7,35.2 L27.4,34.6 L28.0,34.1 L28.7,33.6 L29.4,33.1 L30.0,32.6 L30.7,32.0 L31.3,31.5 L31.9,30.8 L32.4,30.2 L33.0,29.5 L33.5,28.9 L34.0,28.2 L34.6,27.5 L35.1,26.9 L35.7,26.2 L36.2,25.5 L36.7,24.8 L37.3,24.1 L37.8,23.4 L38.3,22.7 L38.9,22.0 L39.4,21.3 L39.9,20.6 L40.4,19.9 L41.0,19.2 L41.5,18.5 L42.0,17.7 L42.5,17.0 L43.0,16.3 L43.4,15.5 L43.9,14.7 L44.4,14.0 L44.8,13.2 L45.3,12.4 L45.7,11.6 L46.2,10.8 L46.6,10.0 L47.0,9.2 L47.3,8.3 L47.7,7.4 L47.9,6.5 L48.0,5.5 L48.0,5.5 L46.9,5.8 L46.2,6.3 L45.4,6.9 L44.7,7.4 L44.0,8.0 L43.3,8.6 L42.7,9.1 L42.0,9.7 L41.3,10.2 L40.7,10.8 L40.0,11.3 L39.3,11.9 L38.7,12.4 L38.0,13.0 L37.3,13.5 L36.7,14.1 L36.0,14.6 L35.4,15.1 L34.7,15.7 L34.0,16.2 L33.4,16.7 L32.7,17.2 L32.0,17.8 L31.4,18.3 L30.7,18.8 L30.0,19.4 L29.4,19.9 L28.7,20.4 L28.1,20.9 L27.4,21.4 L26.7,22.0 L26.0,22.5 L25.4,23.0 L24.7,23.6 L24.0,24.1 L23.5,24.7 L23.0,25.4 L22.4,26.1 L21.9,26.7 L21.3,27.4 L20.8,28.1 L20.3,28.8 L19.7,29.4 L19.2,30.1 L18.7,30.8 L18.2,31.5 L17.6,32.2 L17.1,32.9 L16.6,33.6 L16.1,34.3 L15.6,35.0 L15.1,35.7 L14.6,36.4 L14.1,37.2 L13.6,37.9 L13.2,38.6 L12.7,39.4 L12.2,40.1 L11.8,40.9 L11.3,41.7 L10.9,42.4 L10.5,43.2 L10.1,44.0 L9.7,44.8 L9.3,45.6 L9.0,46.5 L8.7,47.3 L8.4,48.2 L8.1,49.1 L8.2,50.1Z"/><path fill="#ffffff" opacity="0.6" filter="url(#b2)" d="M8.2,50.1 L9.5,50.0 L10.3,49.5 L11.0,49.0 L11.8,48.5 L12.6,48.0 L13.0,47.3 L13.7,46.8 L14.7,46.5 L15.6,46.2 L16.5,45.8 L17.0,45.2 L17.4,44.5 L17.7,43.7 L18.5,43.3 L19.2,42.8 L19.6,42.0 L20.0,41.3 L20.5,40.6 L21.7,40.7 L22.8,40.6 L23.6,40.2 L24.0,39.5 L24.5,38.8 L25.2,38.3 L25.9,37.9 L26.6,37.3 L26.6,36.2 L26.8,35.3 L27.8,35.1 L28.7,34.8 L29.8,34.7 L30.3,34.0 L31.2,33.7 L32.0,33.4 L33.1,33.3 L33.4,32.4 L33.6,31.4 L33.5,30.1 L33.8,29.2 L34.2,28.3 L35.2,28.1 L36.1,27.8 L36.2,26.8 L36.8,26.1 L38.0,26.0 L38.8,25.6 L39.2,24.8 L39.4,23.7 L39.4,22.6 L39.9,21.8 L40.6,21.3 L41.1,20.6 L41.4,19.6 L42.0,19.0 L42.5,18.2 L43.5,18.0 L44.1,17.3 L44.6,16.5 L45.0,15.6 L45.3,14.7 L45.6,13.8 L46.1,13.1 L46.3,12.1 L46.6,11.2 L46.9,10.2 L47.3,9.5 L47.9,8.8 L48.4,8.0 L48.4,6.9 L48.0,5.5 L48.0,5.5 L46.7,5.6 L45.9,6.1 L45.0,6.6 L44.1,6.9 L43.4,7.5 L42.6,7.9 L41.8,8.4 L40.8,8.7 L40.1,9.2 L39.6,9.9 L39.4,10.9 L39.1,11.7 L38.4,12.2 L37.5,12.5 L36.4,12.6 L35.6,13.1 L35.2,13.9 L34.3,14.1 L33.3,14.4 L32.6,14.9 L32.3,15.7 L32.3,16.8 L32.0,17.7 L31.2,18.2 L30.2,18.3 L29.2,18.5 L28.1,18.6 L27.6,19.2 L26.7,19.6 L26.2,20.2 L25.3,20.6 L24.8,21.2 L24.7,22.4 L24.6,23.4 L24.2,24.2 L22.9,24.1 L21.8,24.2 L21.2,24.9 L20.6,25.4 L20.0,26.1 L19.5,26.8 L18.8,27.3 L18.8,28.5 L18.6,29.5 L18.4,30.6 L17.8,31.2 L17.1,31.7 L16.1,31.9 L15.4,32.5 L15.0,33.3 L14.5,34.0 L13.9,34.7 L13.4,35.3 L13.0,36.2 L13.1,37.5 L12.9,38.4 L12.4,39.2 L11.4,39.5 L10.8,40.1 L10.2,40.7 L9.8,41.6 L9.7,42.6 L9.3,43.4 L9.0,44.3 L8.6,45.1 L8.5,46.1 L8.3,47.0 L8.1,48.0 L7.8,48.8 L8.2,50.1Z"/></svg><div style="left:329.70px;top:774.90px;width:13.20px;height:12.20px;background:#525252;"></div><svg style="position:absolute;left:329.70px;top:774.90px;overflow:visible;" width="13.2" height="12.2" viewBox="0 0 13.2 12.2"><path d="M10,3 L6.5,6.8" stroke="#f0f0f0" stroke-width="1.5" stroke-linecap="round"/><ellipse cx="5" cy="8" rx="2.2" ry="1.5" transform="rotate(-35 5 8)" fill="#f0f0f0"/><path d="M3.5,9.8 Q7,9.3 9.5,8.8" fill="none" stroke="#d0d0d0" stroke-width="0.7"/></svg><span class="t" style="left:-180.25px;width:1000px;text-align:center;top:792.06px;font-size:6.9px;color:#cfcfcf;">#03 Texture</span><svg style="position:absolute;left:350.50px;top:732.60px;overflow:visible;" width="54.5" height="54.5" viewBox="0 0 54.5 54.5"><rect width="54.5" height="54.5" fill="#6c6c6c"/><path fill="#ffffff" opacity="0.45" filter="url(#b2)" d="M6.5,46.3 L7.8,46.4 L8.6,46.1 L9.4,45.9 L10.2,45.6 L10.9,45.2 L11.6,44.9 L12.3,44.6 L13.0,44.2 L13.7,43.9 L14.4,43.6 L15.1,43.2 L15.8,42.9 L16.5,42.6 L17.1,42.2 L17.8,41.9 L18.5,41.5 L19.2,41.2 L19.9,40.9 L20.6,40.5 L21.2,40.2 L21.9,39.9 L22.6,39.5 L23.3,39.2 L24.0,38.8 L24.7,38.5 L25.4,38.2 L26.1,37.8 L26.8,37.5 L27.4,37.1 L28.1,36.8 L28.8,36.4 L29.5,36.1 L30.2,35.7 L31.0,35.4 L31.7,35.0 L32.2,34.4 L32.7,33.9 L33.3,33.3 L33.8,32.7 L34.4,32.1 L34.9,31.5 L35.5,30.9 L36.0,30.3 L36.6,29.7 L37.1,29.1 L37.7,28.4 L38.2,27.8 L38.7,27.2 L39.3,26.6 L39.8,25.9 L40.3,25.3 L40.9,24.6 L41.4,24.0 L41.9,23.3 L42.4,22.7 L42.9,22.0 L43.4,21.3 L43.9,20.6 L44.3,19.9 L44.8,19.2 L45.3,18.5 L45.7,17.8 L46.1,17.0 L46.5,16.3 L46.9,15.5 L47.3,14.7 L47.6,13.9 L47.9,13.0 L48.1,12.1 L48.0,10.9 L48.0,10.9 L46.7,10.8 L45.8,11.0 L45.0,11.3 L44.2,11.6 L43.5,11.9 L42.7,12.2 L42.0,12.6 L41.2,12.9 L40.5,13.2 L39.8,13.6 L39.1,13.9 L38.4,14.3 L37.6,14.6 L36.9,14.9 L36.2,15.3 L35.5,15.6 L34.8,16.0 L34.1,16.3 L33.4,16.6 L32.7,17.0 L32.0,17.3 L31.3,17.7 L30.6,18.0 L29.9,18.3 L29.2,18.7 L28.5,19.0 L27.8,19.4 L27.0,19.7 L26.3,20.1 L25.6,20.4 L24.9,20.8 L24.2,21.1 L23.5,21.5 L22.8,21.8 L22.1,22.2 L21.5,22.8 L21.0,23.4 L20.4,24.0 L19.9,24.6 L19.3,25.2 L18.8,25.8 L18.2,26.4 L17.7,27.0 L17.2,27.6 L16.6,28.2 L16.1,28.8 L15.6,29.4 L15.0,30.1 L14.5,30.7 L14.0,31.3 L13.5,32.0 L13.0,32.6 L12.5,33.3 L12.0,34.0 L11.5,34.6 L11.0,35.3 L10.6,36.0 L10.1,36.7 L9.7,37.4 L9.2,38.1 L8.8,38.8 L8.4,39.5 L8.0,40.3 L7.7,41.0 L7.3,41.8 L7.0,42.6 L6.7,43.4 L6.5,44.2 L6.3,45.1 L6.5,46.3Z"/><path fill="#ffffff" opacity="1.0" filter="url(#tx4)" d="M6.5,46.3 L8.3,46.9 L9.2,46.7 L9.7,46.2 L10.6,46.0 L11.9,46.3 L12.8,46.1 L13.6,45.8 L14.2,45.4 L15.0,45.3 L15.8,45.0 L16.7,44.9 L17.0,44.2 L17.1,43.2 L17.3,42.4 L18.3,42.4 L19.7,43.0 L20.5,42.7 L21.1,42.3 L21.8,42.1 L22.6,41.9 L23.8,42.1 L24.4,41.8 L24.7,41.0 L24.5,39.5 L24.7,38.6 L26.1,39.1 L27.0,39.0 L27.9,39.0 L28.4,38.3 L29.4,38.5 L30.4,38.5 L31.7,38.9 L32.5,38.7 L32.4,37.3 L32.7,36.4 L32.8,35.3 L33.8,35.3 L34.2,34.5 L34.2,33.2 L34.6,32.3 L35.7,32.5 L37.3,33.3 L38.2,33.1 L38.3,32.0 L38.6,31.0 L38.6,29.7 L39.5,29.5 L40.0,28.8 L40.0,27.5 L40.4,26.7 L40.5,25.5 L41.5,25.5 L42.8,25.8 L43.5,25.2 L43.9,24.4 L44.3,23.6 L44.8,23.0 L45.5,22.4 L45.6,21.3 L45.8,20.3 L45.9,19.2 L45.9,18.0 L46.7,17.6 L47.4,17.2 L48.0,16.6 L48.1,15.6 L48.4,14.7 L48.8,13.9 L48.9,12.9 L48.0,10.9 L48.0,10.9 L46.2,10.3 L45.1,10.3 L44.2,10.5 L43.4,10.8 L42.8,11.3 L42.4,11.9 L41.2,11.8 L40.1,11.7 L38.9,11.4 L38.2,11.8 L37.8,12.5 L37.4,13.1 L36.4,13.2 L36.0,13.8 L35.2,14.0 L34.7,14.7 L34.6,15.7 L33.2,15.2 L32.3,15.2 L30.8,14.6 L30.3,15.1 L29.9,15.9 L29.2,16.2 L28.7,16.9 L28.1,17.3 L27.5,17.8 L27.0,18.4 L26.6,19.2 L25.9,19.5 L24.1,18.4 L23.0,18.3 L22.3,18.5 L21.6,19.0 L21.6,20.3 L21.3,21.2 L20.6,21.5 L19.9,22.0 L19.6,22.9 L19.6,24.2 L18.3,23.8 L17.1,23.6 L16.2,23.8 L15.6,24.3 L15.6,25.6 L15.6,26.9 L15.2,27.7 L14.6,28.2 L14.1,29.0 L13.7,29.7 L13.5,30.7 L12.8,31.1 L11.6,31.0 L10.6,31.1 L9.9,31.5 L10.1,33.0 L10.1,34.2 L10.0,35.4 L9.2,35.7 L8.9,36.5 L8.4,37.2 L8.1,38.1 L7.6,38.7 L6.8,39.0 L6.3,39.7 L6.0,40.5 L5.9,41.6 L6.0,42.7 L6.0,43.7 L6.0,44.8 L6.5,46.3Z"/></svg><div style="left:387.70px;top:774.90px;width:13.20px;height:12.20px;background:#525252;"></div><svg style="position:absolute;left:387.70px;top:774.90px;overflow:visible;" width="13.2" height="12.2" viewBox="0 0 13.2 12.2"><path d="M10,3 L6.5,6.8" stroke="#f0f0f0" stroke-width="1.5" stroke-linecap="round"/><ellipse cx="5" cy="8" rx="2.2" ry="1.5" transform="rotate(-35 5 8)" fill="#f0f0f0"/><path d="M3.5,9.8 Q7,9.3 9.5,8.8" fill="none" stroke="#d0d0d0" stroke-width="0.7"/></svg><span class="t" style="left:-122.25px;width:1000px;text-align:center;top:792.06px;font-size:6.9px;color:#cfcfcf;">#04 Texture</span><svg style="position:absolute;left:408.50px;top:732.60px;overflow:visible;" width="54.5" height="54.5" viewBox="0 0 54.5 54.5"><rect width="54.5" height="54.5" fill="#6c6c6c"/><path fill="#ffffff" opacity="0.4275" filter="url(#b2)" d="M6.5,46.3 L7.6,46.2 L8.4,45.8 L9.1,45.4 L9.8,45.0 L10.5,44.6 L11.2,44.2 L11.8,43.8 L12.5,43.3 L13.2,42.9 L13.8,42.5 L14.5,42.1 L15.1,41.6 L15.7,41.2 L16.4,40.8 L17.0,40.4 L17.7,40.0 L18.3,39.6 L19.0,39.1 L19.6,38.7 L20.3,38.3 L20.9,37.9 L21.6,37.5 L22.2,37.1 L22.9,36.7 L23.5,36.3 L24.2,35.9 L24.9,35.5 L25.5,35.1 L26.2,34.6 L26.8,34.2 L27.5,33.8 L28.2,33.4 L28.8,33.0 L29.5,32.6 L30.2,32.1 L30.7,31.6 L31.2,31.0 L31.8,30.4 L32.3,29.8 L32.8,29.2 L33.4,28.6 L33.9,28.0 L34.4,27.4 L35.0,26.7 L35.5,26.1 L36.0,25.5 L36.6,24.9 L37.1,24.2 L37.6,23.6 L38.1,23.0 L38.6,22.3 L39.1,21.7 L39.7,21.0 L40.2,20.3 L40.6,19.7 L41.1,19.0 L41.6,18.3 L42.1,17.6 L42.6,16.9 L43.0,16.2 L43.5,15.5 L43.9,14.8 L44.3,14.1 L44.7,13.3 L45.1,12.6 L45.5,11.8 L45.8,11.0 L46.1,10.2 L46.4,9.3 L46.3,8.2 L46.3,8.2 L45.2,8.3 L44.4,8.6 L43.6,9.0 L42.9,9.4 L42.2,9.9 L41.5,10.3 L40.8,10.7 L40.1,11.1 L39.4,11.5 L38.8,12.0 L38.1,12.4 L37.4,12.8 L36.7,13.2 L36.1,13.6 L35.4,14.1 L34.7,14.5 L34.0,14.9 L33.4,15.3 L32.7,15.7 L32.0,16.1 L31.4,16.5 L30.7,16.9 L30.0,17.4 L29.4,17.8 L28.7,18.2 L28.0,18.6 L27.3,19.0 L26.7,19.4 L26.0,19.8 L25.3,20.3 L24.6,20.7 L24.0,21.1 L23.3,21.5 L22.6,21.9 L21.9,22.4 L21.4,22.9 L20.9,23.5 L20.3,24.1 L19.8,24.7 L19.3,25.3 L18.7,26.0 L18.2,26.6 L17.7,27.2 L17.2,27.8 L16.6,28.4 L16.1,29.0 L15.6,29.7 L15.1,30.3 L14.6,30.9 L14.1,31.6 L13.6,32.2 L13.1,32.9 L12.6,33.5 L12.1,34.2 L11.7,34.9 L11.2,35.6 L10.7,36.2 L10.3,36.9 L9.8,37.6 L9.4,38.3 L9.0,39.0 L8.6,39.8 L8.2,40.5 L7.8,41.2 L7.5,42.0 L7.2,42.8 L6.9,43.6 L6.6,44.4 L6.4,45.2 L6.5,46.3Z"/><path fill="#ffffff" opacity="0.95" filter="url(#tx4)" d="M6.5,46.3 L8.1,46.6 L9.0,46.3 L10.0,46.2 L10.9,45.9 L11.5,45.4 L11.8,44.7 L12.2,44.1 L13.0,43.8 L13.8,43.5 L14.8,43.4 L15.4,43.0 L15.9,42.4 L16.7,42.2 L17.9,42.3 L18.7,42.1 L18.9,41.3 L19.2,40.4 L19.4,39.7 L20.4,39.5 L21.1,39.2 L21.5,38.6 L22.0,38.0 L23.1,38.0 L24.1,38.1 L25.4,38.4 L26.0,37.9 L26.2,37.0 L26.6,36.3 L26.9,35.5 L27.5,35.0 L28.5,35.0 L28.9,34.3 L29.1,33.3 L29.9,33.0 L31.5,33.7 L32.4,33.6 L33.1,33.2 L33.1,31.9 L33.5,31.2 L33.9,30.4 L34.8,30.3 L35.1,29.4 L34.8,27.8 L35.1,26.9 L35.9,26.6 L36.9,26.5 L37.9,26.5 L38.5,25.8 L39.0,25.2 L39.4,24.4 L40.1,23.9 L40.4,23.0 L40.5,22.0 L40.8,21.1 L40.9,20.0 L41.7,19.6 L42.4,19.1 L43.0,18.5 L43.6,18.0 L43.8,17.0 L44.5,16.5 L45.3,16.1 L45.6,15.3 L45.6,14.1 L45.6,13.0 L45.9,12.1 L46.3,11.4 L46.7,10.6 L46.7,9.6 L46.3,8.2 L46.3,8.2 L44.8,7.9 L43.8,8.1 L42.9,8.3 L42.0,8.6 L41.2,9.0 L40.4,9.3 L40.0,9.9 L39.5,10.5 L39.1,11.2 L38.3,11.5 L37.2,11.5 L36.2,11.6 L35.7,12.2 L34.9,12.4 L34.0,12.6 L33.2,12.8 L32.7,13.4 L32.6,14.4 L32.1,15.0 L31.8,15.9 L30.8,15.9 L29.6,15.6 L28.8,15.9 L28.2,16.5 L27.3,16.6 L26.6,16.9 L26.1,17.5 L25.1,17.6 L24.9,18.6 L24.8,19.6 L24.6,20.7 L23.7,20.8 L22.2,20.2 L20.9,19.9 L20.3,20.4 L20.0,21.3 L19.7,22.2 L18.9,22.5 L18.4,23.1 L18.4,24.3 L18.1,25.2 L18.3,26.6 L17.3,26.8 L16.3,26.8 L15.1,26.7 L14.6,27.3 L14.5,28.4 L13.8,28.8 L13.5,29.8 L12.9,30.3 L12.6,31.1 L12.7,32.4 L12.3,33.2 L11.7,33.7 L10.7,33.9 L9.8,34.2 L9.3,34.9 L9.0,35.7 L8.7,36.5 L8.4,37.4 L7.9,38.0 L7.9,39.1 L7.7,40.1 L7.6,41.0 L7.0,41.6 L6.4,42.1 L5.9,42.8 L5.7,43.7 L5.8,44.8 L6.5,46.3Z"/></svg><div style="left:445.70px;top:774.90px;width:13.20px;height:12.20px;background:#525252;"></div><svg style="position:absolute;left:445.70px;top:774.90px;overflow:visible;" width="13.2" height="12.2" viewBox="0 0 13.2 12.2"><path d="M10,3 L6.5,6.8" stroke="#f0f0f0" stroke-width="1.5" stroke-linecap="round"/><ellipse cx="5" cy="8" rx="2.2" ry="1.5" transform="rotate(-35 5 8)" fill="#f0f0f0"/><path d="M3.5,9.8 Q7,9.3 9.5,8.8" fill="none" stroke="#d0d0d0" stroke-width="0.7"/></svg><span class="t" style="left:-64.25px;width:1000px;text-align:center;top:792.06px;font-size:6.9px;color:#cfcfcf;">#05 Texture</span><svg style="position:absolute;left:466.50px;top:732.60px;overflow:visible;" width="54.5" height="54.5" viewBox="0 0 54.5 54.5"><rect width="54.5" height="54.5" fill="#6c6c6c"/><path fill="#ffffff" opacity="0.45" filter="url(#b2)" d="M8.2,44.7 L9.5,44.8 L10.5,44.6 L11.3,44.4 L12.1,44.1 L12.9,43.8 L13.7,43.5 L14.4,43.2 L15.1,42.9 L15.9,42.6 L16.6,42.3 L17.3,41.9 L18.0,41.6 L18.7,41.3 L19.4,41.0 L20.1,40.6 L20.8,40.3 L21.5,40.0 L22.2,39.7 L22.9,39.3 L23.6,39.0 L24.3,38.7 L25.0,38.4 L25.7,38.0 L26.4,37.7 L27.1,37.4 L27.8,37.1 L28.5,36.7 L29.2,36.4 L29.9,36.1 L30.6,35.7 L31.3,35.4 L32.0,35.0 L32.7,34.7 L33.4,34.3 L34.1,34.0 L34.7,33.4 L35.2,32.8 L35.7,32.1 L36.2,31.5 L36.7,30.9 L37.3,30.3 L37.8,29.6 L38.3,29.0 L38.8,28.3 L39.3,27.7 L39.8,27.0 L40.4,26.4 L40.9,25.7 L41.4,25.0 L41.9,24.3 L42.4,23.7 L42.9,23.0 L43.4,22.3 L43.8,21.6 L44.3,20.8 L44.8,20.1 L45.2,19.4 L45.7,18.7 L46.1,17.9 L46.5,17.2 L47.0,16.4 L47.4,15.6 L47.7,14.8 L48.1,14.0 L48.4,13.2 L48.7,12.3 L49.0,11.4 L49.2,10.5 L49.4,9.5 L49.1,8.2 L49.1,8.2 L47.7,8.0 L46.7,8.2 L45.8,8.4 L45.0,8.7 L44.2,9.0 L43.4,9.3 L42.6,9.6 L41.9,9.9 L41.1,10.2 L40.4,10.5 L39.6,10.8 L38.9,11.2 L38.2,11.5 L37.4,11.8 L36.7,12.1 L36.0,12.5 L35.3,12.8 L34.6,13.1 L33.8,13.4 L33.1,13.8 L32.4,14.1 L31.7,14.4 L31.0,14.8 L30.2,15.1 L29.5,15.4 L28.8,15.8 L28.1,16.1 L27.4,16.4 L26.6,16.8 L25.9,17.1 L25.2,17.5 L24.5,17.8 L23.8,18.2 L23.0,18.5 L22.3,18.9 L21.8,19.5 L21.3,20.1 L20.7,20.7 L20.2,21.4 L19.7,22.0 L19.2,22.6 L18.7,23.3 L18.2,23.9 L17.6,24.6 L17.1,25.2 L16.6,25.9 L16.1,26.6 L15.6,27.2 L15.1,27.9 L14.6,28.6 L14.2,29.3 L13.7,30.0 L13.2,30.7 L12.8,31.4 L12.3,32.1 L11.9,32.8 L11.4,33.6 L11.0,34.3 L10.6,35.0 L10.2,35.8 L9.8,36.6 L9.5,37.3 L9.1,38.1 L8.8,38.9 L8.5,39.8 L8.3,40.6 L8.0,41.5 L7.9,42.4 L7.8,43.4 L8.2,44.7Z"/><path fill="#ffffff" opacity="1.0" filter="url(#tx4)" d="M8.2,44.7 L10.1,45.3 L11.0,45.1 L11.7,44.7 L13.0,44.9 L14.0,44.8 L15.0,44.7 L15.8,44.5 L16.7,44.4 L17.7,44.4 L18.8,44.5 L19.2,43.9 L19.1,42.8 L19.5,42.1 L20.2,41.9 L21.2,41.8 L21.9,41.6 L22.7,41.4 L23.4,41.0 L24.5,41.3 L25.9,41.7 L26.9,41.8 L27.4,41.3 L26.9,39.5 L27.3,38.8 L27.9,38.4 L28.6,38.1 L29.5,38.1 L30.1,37.6 L30.7,37.1 L31.7,37.2 L33.4,38.0 L34.7,38.5 L34.8,37.3 L35.5,36.9 L35.4,35.5 L36.2,35.4 L36.6,34.5 L36.5,33.2 L36.4,31.7 L36.7,30.9 L38.5,31.9 L39.7,32.1 L40.7,32.0 L40.8,30.8 L41.0,29.8 L41.5,29.0 L42.2,28.6 L42.3,27.5 L42.4,26.3 L41.9,24.4 L42.7,24.0 L44.2,24.6 L44.7,23.8 L45.5,23.4 L45.7,22.4 L46.5,22.0 L47.1,21.5 L47.6,20.7 L47.9,19.9 L47.3,18.0 L47.7,17.1 L47.9,16.2 L48.6,15.7 L49.0,14.9 L49.4,14.1 L49.6,13.2 L50.0,12.4 L50.5,11.7 L50.4,10.5 L49.1,8.2 L49.1,8.2 L47.1,7.4 L45.9,7.4 L44.8,7.5 L44.1,7.9 L43.6,8.4 L42.8,8.7 L41.5,8.5 L40.2,8.1 L39.0,8.0 L38.7,8.7 L38.2,9.3 L37.7,9.8 L37.0,10.2 L36.1,10.2 L36.0,11.3 L35.3,11.7 L34.6,12.0 L33.2,11.5 L31.5,10.7 L30.6,10.7 L29.9,11.0 L30.2,12.7 L30.1,13.8 L29.4,14.1 L28.1,13.6 L27.9,14.6 L27.4,15.2 L26.8,15.7 L25.6,15.5 L23.6,14.2 L22.2,13.6 L22.1,14.7 L21.9,15.8 L22.2,17.4 L21.2,17.4 L21.0,18.5 L20.2,18.7 L20.1,19.9 L19.6,20.6 L18.1,20.0 L16.6,19.5 L15.6,19.5 L15.8,21.0 L16.5,23.1 L16.3,24.2 L16.1,25.3 L15.1,25.3 L14.3,25.6 L13.8,26.4 L13.3,27.0 L12.5,27.4 L11.4,27.4 L10.8,27.9 L10.7,29.1 L10.9,30.6 L11.2,32.1 L10.9,33.0 L9.8,33.1 L9.5,33.9 L9.0,34.5 L8.6,35.3 L7.9,35.9 L7.4,36.5 L6.9,37.2 L6.8,38.2 L7.3,39.7 L7.3,40.8 L7.4,42.0 L7.3,42.9 L8.2,44.7Z"/></svg><div style="left:503.70px;top:774.90px;width:13.20px;height:12.20px;background:#525252;"></div><svg style="position:absolute;left:503.70px;top:774.90px;overflow:visible;" width="13.2" height="12.2" viewBox="0 0 13.2 12.2"><path d="M10,3 L6.5,6.8" stroke="#f0f0f0" stroke-width="1.5" stroke-linecap="round"/><ellipse cx="5" cy="8" rx="2.2" ry="1.5" transform="rotate(-35 5 8)" fill="#f0f0f0"/><path d="M3.5,9.8 Q7,9.3 9.5,8.8" fill="none" stroke="#d0d0d0" stroke-width="0.7"/></svg><span class="t" style="left:-6.25px;width:1000px;text-align:center;top:792.06px;font-size:6.9px;color:#cfcfcf;">#06 Texture</span><svg style="position:absolute;left:524.50px;top:732.60px;overflow:visible;" width="54.5" height="54.5" viewBox="0 0 54.5 54.5"><rect width="54.5" height="54.5" fill="#6c6c6c"/><path fill="#ffffff" opacity="0.4275" filter="url(#b2)" d="M6.5,49.1 L7.6,48.8 L8.4,48.3 L9.1,47.8 L9.9,47.3 L10.6,46.8 L11.2,46.3 L11.9,45.8 L12.6,45.3 L13.3,44.8 L13.9,44.3 L14.6,43.8 L15.3,43.3 L15.9,42.8 L16.6,42.4 L17.3,41.9 L17.9,41.4 L18.6,40.9 L19.3,40.4 L19.9,39.9 L20.6,39.4 L21.3,39.0 L22.0,38.5 L22.6,38.0 L23.3,37.5 L24.0,37.1 L24.7,36.6 L25.4,36.1 L26.0,35.6 L26.7,35.1 L27.4,34.7 L28.1,34.2 L28.8,33.7 L29.5,33.2 L30.2,32.7 L30.9,32.3 L31.4,31.6 L32.0,31.0 L32.5,30.3 L33.1,29.7 L33.7,29.0 L34.2,28.4 L34.8,27.7 L35.3,27.1 L35.9,26.4 L36.5,25.7 L37.0,25.0 L37.6,24.4 L38.1,23.7 L38.7,23.0 L39.2,22.3 L39.8,21.6 L40.3,20.9 L40.8,20.2 L41.3,19.5 L41.9,18.8 L42.4,18.0 L42.9,17.3 L43.4,16.6 L43.9,15.8 L44.4,15.1 L44.8,14.3 L45.3,13.5 L45.7,12.7 L46.2,11.9 L46.6,11.1 L47.0,10.3 L47.4,9.5 L47.7,8.6 L48.0,7.7 L48.0,6.5 L48.0,6.5 L46.9,6.8 L46.0,7.2 L45.3,7.7 L44.5,8.2 L43.8,8.7 L43.1,9.2 L42.3,9.7 L41.6,10.2 L40.9,10.7 L40.2,11.2 L39.5,11.7 L38.8,12.2 L38.1,12.7 L37.4,13.2 L36.8,13.7 L36.1,14.2 L35.4,14.6 L34.7,15.1 L34.0,15.6 L33.3,16.1 L32.6,16.6 L31.9,17.1 L31.2,17.5 L30.5,18.0 L29.8,18.5 L29.1,19.0 L28.4,19.5 L27.7,19.9 L27.0,20.4 L26.3,20.9 L25.6,21.4 L24.9,21.9 L24.2,22.4 L23.5,22.8 L22.8,23.3 L22.3,24.0 L21.7,24.6 L21.2,25.3 L20.6,25.9 L20.0,26.6 L19.5,27.2 L18.9,27.9 L18.4,28.6 L17.8,29.2 L17.3,29.9 L16.7,30.6 L16.2,31.3 L15.7,31.9 L15.1,32.6 L14.6,33.3 L14.1,34.0 L13.6,34.7 L13.1,35.4 L12.6,36.2 L12.1,36.9 L11.6,37.6 L11.1,38.3 L10.6,39.1 L10.2,39.8 L9.7,40.6 L9.3,41.3 L8.8,42.1 L8.4,42.9 L8.0,43.7 L7.7,44.5 L7.3,45.3 L7.0,46.2 L6.7,47.0 L6.5,47.9 L6.5,49.1Z"/><path fill="#ffffff" opacity="0.95" filter="url(#tx3)" d="M6.5,49.1 L8.1,49.2 L9.1,48.8 L9.9,48.4 L10.6,47.9 L11.2,47.4 L11.7,46.7 L12.2,46.0 L13.3,45.9 L14.3,45.7 L15.1,45.4 L15.9,45.0 L16.3,44.2 L17.1,43.9 L17.9,43.6 L18.6,43.1 L18.7,42.1 L18.9,41.2 L19.8,40.9 L20.5,40.4 L21.6,40.5 L22.5,40.3 L23.1,39.7 L23.7,39.1 L24.9,39.2 L25.9,39.0 L26.3,38.3 L26.2,37.0 L26.6,36.2 L27.2,35.6 L28.3,35.6 L29.1,35.2 L29.2,34.2 L30.0,33.8 L31.4,34.1 L32.9,34.5 L33.5,33.9 L33.4,32.5 L33.2,31.1 L33.8,30.4 L34.6,30.1 L35.2,29.4 L35.4,28.3 L35.7,27.5 L36.5,27.1 L37.5,26.9 L38.4,26.6 L39.3,26.3 L39.5,25.2 L39.9,24.3 L40.3,23.4 L40.9,22.8 L41.0,21.6 L41.2,20.6 L41.8,19.9 L42.3,19.2 L43.2,18.9 L44.2,18.5 L44.7,17.8 L44.9,16.8 L45.3,16.0 L45.8,15.2 L46.5,14.6 L46.6,13.5 L46.7,12.4 L46.8,11.3 L47.5,10.7 L47.9,9.9 L48.2,9.0 L48.4,8.0 L48.0,6.5 L48.0,6.5 L46.4,6.4 L45.5,6.8 L44.5,7.1 L43.7,7.5 L42.8,7.9 L42.0,8.2 L41.4,8.9 L41.1,9.7 L40.7,10.5 L39.8,10.8 L38.8,11.0 L37.9,11.3 L37.0,11.6 L36.5,12.2 L35.5,12.5 L34.6,12.7 L33.8,13.1 L33.4,13.8 L33.3,14.9 L33.0,15.8 L32.4,16.4 L31.2,16.3 L30.0,16.2 L29.2,16.6 L28.4,17.0 L28.1,17.9 L27.1,18.0 L26.4,18.5 L25.9,19.2 L25.7,20.2 L25.5,21.2 L24.8,21.7 L23.3,21.3 L22.2,21.4 L21.5,21.8 L20.9,22.4 L20.4,23.2 L19.9,23.9 L19.0,24.2 L18.7,25.1 L18.9,26.5 L18.7,27.7 L18.0,28.1 L17.0,28.3 L15.9,28.4 L15.4,29.1 L14.9,29.9 L14.5,30.7 L14.1,31.6 L13.5,32.2 L13.1,33.0 L12.9,34.1 L12.9,35.3 L12.1,35.7 L11.2,36.0 L10.2,36.3 L9.5,36.9 L9.3,37.8 L9.0,38.8 L8.7,39.7 L8.3,40.5 L7.9,41.3 L7.9,42.4 L7.6,43.3 L7.3,44.2 L6.7,44.9 L6.1,45.5 L5.8,46.4 L5.9,47.5 L6.5,49.1Z"/></svg><div style="left:561.70px;top:774.90px;width:13.20px;height:12.20px;background:#525252;"></div><svg style="position:absolute;left:561.70px;top:774.90px;overflow:visible;" width="13.2" height="12.2" viewBox="0 0 13.2 12.2"><path d="M10,3 L6.5,6.8" stroke="#f0f0f0" stroke-width="1.5" stroke-linecap="round"/><ellipse cx="5" cy="8" rx="2.2" ry="1.5" transform="rotate(-35 5 8)" fill="#f0f0f0"/><path d="M3.5,9.8 Q7,9.3 9.5,8.8" fill="none" stroke="#d0d0d0" stroke-width="0.7"/></svg><span class="t" style="left:51.75px;width:1000px;text-align:center;top:792.06px;font-size:6.9px;color:#cfcfcf;">#07 Texture</span><svg style="position:absolute;left:582.50px;top:732.60px;overflow:visible;" width="54.5" height="54.5" viewBox="0 0 54.5 54.5"><rect width="54.5" height="54.5" fill="#6c6c6c"/><path fill="#ffffff" opacity="0.45" filter="url(#b2)" d="M6.5,48.0 L7.8,47.9 L8.6,47.5 L9.4,47.2 L10.1,46.8 L10.9,46.3 L11.6,45.9 L12.2,45.5 L12.9,45.1 L13.6,44.7 L14.3,44.3 L14.9,43.8 L15.6,43.4 L16.2,43.0 L16.9,42.6 L17.5,42.2 L18.2,41.8 L18.8,41.4 L19.5,41.0 L20.1,40.6 L20.8,40.2 L21.4,39.7 L22.1,39.3 L22.7,38.9 L23.4,38.5 L24.0,38.1 L24.7,37.7 L25.4,37.3 L26.0,36.9 L26.7,36.5 L27.3,36.1 L28.0,35.7 L28.7,35.2 L29.3,34.8 L30.0,34.4 L30.7,34.0 L31.1,33.3 L31.6,32.7 L32.1,32.1 L32.6,31.4 L33.1,30.8 L33.6,30.2 L34.1,29.5 L34.5,28.8 L35.0,28.2 L35.5,27.5 L36.0,26.9 L36.5,26.2 L36.9,25.5 L37.4,24.8 L37.9,24.1 L38.3,23.4 L38.8,22.7 L39.3,22.0 L39.7,21.3 L40.2,20.6 L40.6,19.9 L41.0,19.1 L41.4,18.4 L41.9,17.7 L42.3,16.9 L42.6,16.1 L43.0,15.4 L43.4,14.6 L43.7,13.8 L44.0,12.9 L44.3,12.1 L44.6,11.2 L44.8,10.4 L44.9,9.4 L44.7,8.2 L44.7,8.2 L43.4,8.2 L42.6,8.6 L41.8,8.9 L41.0,9.3 L40.2,9.7 L39.5,10.1 L38.8,10.5 L38.1,11.0 L37.4,11.4 L36.7,11.8 L36.0,12.2 L35.3,12.6 L34.6,13.0 L34.0,13.5 L33.3,13.9 L32.6,14.3 L31.9,14.7 L31.3,15.1 L30.6,15.5 L29.9,15.9 L29.3,16.3 L28.6,16.7 L27.9,17.2 L27.2,17.6 L26.6,18.0 L25.9,18.4 L25.2,18.8 L24.6,19.2 L23.9,19.6 L23.2,20.0 L22.6,20.5 L21.9,20.9 L21.2,21.3 L20.5,21.7 L19.9,22.2 L19.4,22.8 L18.9,23.4 L18.4,24.1 L17.9,24.7 L17.4,25.4 L16.9,26.0 L16.5,26.7 L16.0,27.3 L15.5,28.0 L15.0,28.7 L14.5,29.3 L14.1,30.0 L13.6,30.7 L13.2,31.4 L12.7,32.1 L12.2,32.8 L11.8,33.5 L11.4,34.2 L10.9,34.9 L10.5,35.6 L10.1,36.3 L9.7,37.1 L9.3,37.8 L8.9,38.6 L8.6,39.3 L8.2,40.1 L7.9,40.9 L7.5,41.6 L7.2,42.4 L7.0,43.3 L6.7,44.1 L6.5,44.9 L6.3,45.8 L6.2,46.8 L6.5,48.0Z"/><path fill="#ffffff" opacity="1.0" filter="url(#tx3)" d="M6.5,48.0 L8.6,48.5 L9.7,48.4 L10.4,47.9 L11.2,47.6 L12.1,47.3 L12.7,46.9 L13.3,46.4 L13.7,45.7 L14.1,45.1 L15.0,44.9 L16.1,44.9 L17.2,44.9 L17.5,44.2 L18.3,43.9 L19.0,43.5 L20.3,43.8 L20.9,43.4 L20.7,42.1 L20.9,41.3 L21.1,40.5 L21.9,40.2 L23.0,40.3 L23.8,40.1 L24.4,39.6 L25.4,39.6 L26.3,39.4 L28.0,40.1 L28.4,39.4 L28.5,38.4 L28.3,37.1 L28.8,36.5 L29.6,36.2 L30.0,35.6 L30.5,34.9 L31.5,34.8 L31.8,34.1 L33.5,34.8 L34.8,35.0 L35.0,34.0 L34.6,32.4 L34.5,31.2 L35.4,31.0 L35.9,30.4 L35.9,29.1 L35.8,27.9 L36.0,26.9 L37.1,26.9 L38.8,27.4 L39.3,26.8 L39.7,26.0 L39.8,24.9 L40.3,24.2 L40.8,23.5 L41.2,22.8 L41.4,21.8 L41.2,20.5 L41.4,19.5 L42.3,19.2 L43.2,18.9 L43.8,18.3 L44.1,17.5 L44.3,16.5 L44.6,15.7 L45.3,15.2 L45.2,13.9 L45.1,12.8 L45.2,11.7 L45.2,10.7 L45.4,9.8 L44.7,8.2 L44.7,8.2 L42.8,7.8 L41.9,8.1 L41.0,8.3 L40.1,8.6 L39.3,9.0 L38.8,9.6 L38.1,10.0 L37.0,10.0 L36.0,10.2 L34.8,10.0 L34.3,10.6 L33.8,11.2 L33.6,12.0 L32.9,12.5 L32.4,13.0 L31.8,13.5 L31.1,13.9 L30.8,14.7 L29.7,14.6 L27.9,13.9 L26.9,13.9 L26.2,14.2 L26.2,15.4 L26.2,16.4 L25.6,16.9 L25.1,17.5 L23.9,17.4 L24.0,18.6 L23.1,18.8 L22.1,18.8 L20.5,18.2 L19.2,18.0 L19.0,18.9 L19.2,20.3 L19.2,21.4 L18.7,22.0 L17.9,22.4 L17.2,22.8 L16.7,23.4 L16.3,24.2 L15.9,24.9 L14.2,24.3 L13.3,24.5 L12.9,25.3 L13.4,26.9 L13.8,28.5 L13.5,29.4 L12.8,29.8 L12.2,30.4 L11.7,31.1 L11.2,31.7 L10.8,32.5 L9.6,32.5 L8.6,32.7 L8.7,33.9 L8.9,35.2 L9.0,36.4 L8.8,37.3 L8.1,37.8 L7.3,38.2 L6.9,39.0 L6.8,40.0 L6.5,40.8 L6.0,41.4 L5.6,42.2 L5.5,43.1 L5.6,44.3 L5.8,45.4 L5.9,46.5 L6.5,48.0Z"/></svg><div style="left:619.70px;top:774.90px;width:13.20px;height:12.20px;background:#525252;"></div><svg style="position:absolute;left:619.70px;top:774.90px;overflow:visible;" width="13.2" height="12.2" viewBox="0 0 13.2 12.2"><path d="M10,3 L6.5,6.8" stroke="#f0f0f0" stroke-width="1.5" stroke-linecap="round"/><ellipse cx="5" cy="8" rx="2.2" ry="1.5" transform="rotate(-35 5 8)" fill="#f0f0f0"/><path d="M3.5,9.8 Q7,9.3 9.5,8.8" fill="none" stroke="#d0d0d0" stroke-width="0.7"/></svg><span class="t" style="left:109.75px;width:1000px;text-align:center;top:792.06px;font-size:6.9px;color:#cfcfcf;">#08 Texture</span><svg style="position:absolute;left:640.50px;top:732.60px;overflow:visible;" width="54.5" height="54.5" viewBox="0 0 54.5 54.5"><rect width="54.5" height="54.5" fill="#6c6c6c"/><path fill="#ffffff" opacity="0.4275" filter="url(#b2)" d="M6.5,48.0 L7.7,47.8 L8.6,47.4 L9.4,47.0 L10.2,46.6 L10.9,46.1 L11.7,45.7 L12.4,45.2 L13.1,44.8 L13.8,44.3 L14.6,43.9 L15.3,43.4 L16.0,43.0 L16.7,42.5 L17.4,42.1 L18.1,41.6 L18.8,41.2 L19.5,40.7 L20.2,40.3 L20.9,39.9 L21.7,39.4 L22.4,39.0 L23.1,38.5 L23.8,38.1 L24.5,37.7 L25.2,37.2 L26.0,36.8 L26.7,36.3 L27.4,35.9 L28.1,35.5 L28.9,35.0 L29.6,34.6 L30.3,34.1 L31.1,33.7 L31.8,33.2 L32.5,32.8 L33.1,32.1 L33.7,31.5 L34.3,30.8 L34.9,30.2 L35.4,29.5 L36.0,28.9 L36.6,28.2 L37.2,27.5 L37.8,26.9 L38.4,26.2 L38.9,25.5 L39.5,24.8 L40.1,24.1 L40.7,23.4 L41.2,22.7 L41.8,22.0 L42.3,21.3 L42.9,20.6 L43.4,19.9 L44.0,19.1 L44.5,18.4 L45.0,17.7 L45.6,16.9 L46.1,16.1 L46.6,15.4 L47.1,14.6 L47.5,13.8 L48.0,13.0 L48.4,12.2 L48.9,11.4 L49.3,10.5 L49.6,9.6 L50.0,8.7 L50.2,7.8 L50.1,6.5 L50.1,6.5 L48.9,6.7 L48.0,7.0 L47.2,7.4 L46.4,7.9 L45.6,8.3 L44.8,8.7 L44.0,9.2 L43.3,9.6 L42.5,10.1 L41.8,10.6 L41.0,11.0 L40.3,11.5 L39.6,11.9 L38.8,12.4 L38.1,12.8 L37.4,13.2 L36.6,13.7 L35.9,14.1 L35.1,14.6 L34.4,15.0 L33.7,15.5 L32.9,15.9 L32.2,16.3 L31.5,16.8 L30.7,17.2 L30.0,17.7 L29.3,18.1 L28.5,18.6 L27.8,19.0 L27.0,19.5 L26.3,19.9 L25.6,20.4 L24.8,20.8 L24.1,21.3 L23.3,21.7 L22.7,22.4 L22.2,23.0 L21.6,23.7 L21.0,24.3 L20.4,25.0 L19.8,25.7 L19.2,26.3 L18.7,27.0 L18.1,27.7 L17.5,28.3 L17.0,29.0 L16.4,29.7 L15.8,30.4 L15.3,31.1 L14.7,31.8 L14.2,32.5 L13.7,33.2 L13.1,34.0 L12.6,34.7 L12.1,35.4 L11.6,36.2 L11.1,36.9 L10.6,37.7 L10.1,38.4 L9.6,39.2 L9.2,40.0 L8.8,40.8 L8.3,41.6 L7.9,42.4 L7.6,43.2 L7.2,44.0 L6.9,44.9 L6.6,45.8 L6.4,46.8 L6.5,48.0Z"/><path fill="#ffffff" opacity="0.95" filter="url(#tx4)" d="M6.5,48.0 L8.2,48.2 L9.3,48.0 L10.0,47.5 L10.8,47.1 L11.8,46.9 L12.8,46.7 L13.8,46.5 L14.6,46.2 L15.0,45.4 L15.6,44.9 L16.1,44.2 L17.0,44.0 L17.5,43.3 L18.0,42.7 L18.5,42.1 L19.5,41.9 L21.2,42.5 L21.9,42.1 L22.7,41.8 L22.8,40.7 L23.6,40.3 L24.3,39.9 L24.9,39.4 L25.2,38.5 L25.6,37.6 L26.1,37.0 L27.6,37.4 L28.6,37.3 L29.9,37.6 L30.3,36.8 L30.8,36.0 L31.8,35.9 L32.8,35.7 L33.3,35.0 L33.5,33.9 L33.2,32.2 L33.9,31.7 L34.8,31.4 L35.9,31.4 L36.4,30.7 L37.0,30.0 L38.0,29.9 L38.9,29.6 L39.9,29.4 L40.1,28.3 L40.1,26.9 L40.1,25.5 L40.7,24.9 L41.4,24.3 L42.1,23.8 L42.7,23.1 L43.1,22.1 L44.0,21.8 L45.1,21.7 L45.7,21.0 L45.9,19.9 L46.1,18.8 L46.4,17.8 L46.9,16.9 L47.4,16.2 L47.6,15.2 L48.2,14.4 L48.5,13.5 L49.3,13.0 L50.0,12.4 L50.4,11.6 L50.6,10.5 L50.6,9.3 L50.8,8.3 L50.1,6.5 L50.1,6.5 L48.5,6.3 L47.6,6.6 L46.8,7.1 L45.9,7.4 L44.6,7.4 L43.5,7.5 L42.7,7.9 L42.1,8.5 L41.3,8.9 L40.6,9.4 L40.1,10.0 L39.5,10.6 L39.3,11.6 L38.6,12.1 L37.3,12.0 L36.0,11.8 L34.8,11.7 L34.2,12.2 L33.7,12.9 L33.3,13.7 L32.7,14.4 L31.6,14.3 L31.5,15.5 L30.9,16.2 L30.2,16.7 L29.5,17.1 L28.0,16.6 L26.5,16.2 L25.8,16.6 L25.3,17.4 L25.2,18.6 L24.3,18.8 L23.9,19.8 L23.0,20.0 L22.9,21.2 L22.3,21.8 L21.6,22.3 L20.1,21.9 L18.8,21.7 L18.6,22.8 L18.4,23.9 L18.3,25.3 L18.0,26.2 L17.1,26.5 L16.6,27.2 L16.3,28.3 L15.7,29.0 L15.1,29.6 L13.9,29.6 L12.8,29.7 L12.1,30.3 L12.5,31.9 L12.3,33.1 L11.9,34.0 L11.1,34.4 L10.6,35.2 L10.4,36.3 L10.0,37.1 L9.4,37.7 L8.5,38.1 L7.5,38.4 L7.2,39.3 L7.3,40.6 L7.2,41.7 L7.0,42.8 L6.6,43.5 L6.1,44.3 L6.1,45.4 L6.0,46.4 L6.5,48.0Z"/></svg><div style="left:677.70px;top:774.90px;width:13.20px;height:12.20px;background:#525252;"></div><svg style="position:absolute;left:677.70px;top:774.90px;overflow:visible;" width="13.2" height="12.2" viewBox="0 0 13.2 12.2"><path d="M10,3 L6.5,6.8" stroke="#f0f0f0" stroke-width="1.5" stroke-linecap="round"/><ellipse cx="5" cy="8" rx="2.2" ry="1.5" transform="rotate(-35 5 8)" fill="#f0f0f0"/><path d="M3.5,9.8 Q7,9.3 9.5,8.8" fill="none" stroke="#d0d0d0" stroke-width="0.7"/></svg><span class="t" style="left:167.75px;width:1000px;text-align:center;top:792.06px;font-size:6.9px;color:#cfcfcf;">#09 Texture</span><svg style="position:absolute;left:698.50px;top:732.60px;overflow:visible;" width="54.5" height="54.5" viewBox="0 0 54.5 54.5"><rect width="54.5" height="54.5" fill="#6c6c6c"/><path fill="#ffffff" opacity="0.45" filter="url(#b2)" d="M8.2,46.3 L9.3,46.2 L10.2,45.8 L10.9,45.3 L11.6,44.9 L12.3,44.4 L13.0,44.0 L13.7,43.5 L14.3,43.1 L15.0,42.6 L15.6,42.2 L16.3,41.7 L16.9,41.3 L17.6,40.8 L18.2,40.4 L18.9,39.9 L19.5,39.5 L20.1,39.1 L20.8,38.6 L21.4,38.2 L22.1,37.7 L22.7,37.3 L23.3,36.9 L24.0,36.4 L24.6,36.0 L25.3,35.6 L25.9,35.1 L26.6,34.7 L27.2,34.2 L27.9,33.8 L28.5,33.4 L29.2,32.9 L29.8,32.5 L30.5,32.0 L31.2,31.6 L31.8,31.1 L32.3,30.5 L32.8,29.9 L33.3,29.2 L33.8,28.6 L34.3,27.9 L34.8,27.3 L35.3,26.6 L35.8,26.0 L36.3,25.3 L36.8,24.7 L37.2,24.0 L37.7,23.3 L38.2,22.6 L38.7,22.0 L39.2,21.3 L39.6,20.6 L40.1,19.9 L40.6,19.2 L41.0,18.5 L41.5,17.8 L41.9,17.0 L42.4,16.3 L42.8,15.6 L43.2,14.8 L43.6,14.1 L44.0,13.3 L44.4,12.5 L44.8,11.7 L45.2,10.9 L45.5,10.1 L45.8,9.3 L46.1,8.4 L46.3,7.6 L46.5,6.6 L46.3,5.5 L46.3,5.5 L45.1,5.6 L44.3,6.0 L43.5,6.4 L42.8,6.8 L42.0,7.3 L41.3,7.7 L40.6,8.2 L39.9,8.6 L39.3,9.1 L38.6,9.5 L37.9,10.0 L37.2,10.4 L36.6,10.9 L35.9,11.3 L35.2,11.8 L34.6,12.2 L33.9,12.7 L33.2,13.1 L32.6,13.5 L31.9,14.0 L31.3,14.4 L30.6,14.9 L29.9,15.3 L29.3,15.7 L28.6,16.2 L27.9,16.6 L27.3,17.1 L26.6,17.5 L26.0,17.9 L25.3,18.4 L24.6,18.8 L24.0,19.3 L23.3,19.7 L22.6,20.2 L22.0,20.6 L21.5,21.3 L21.0,21.9 L20.5,22.6 L20.0,23.2 L19.5,23.9 L19.0,24.5 L18.5,25.2 L18.0,25.8 L17.5,26.5 L17.0,27.1 L16.6,27.8 L16.1,28.5 L15.6,29.2 L15.2,29.9 L14.7,30.6 L14.2,31.2 L13.8,32.0 L13.3,32.7 L12.9,33.4 L12.5,34.1 L12.0,34.8 L11.6,35.5 L11.2,36.3 L10.8,37.0 L10.4,37.8 L10.1,38.6 L9.7,39.3 L9.4,40.1 L9.1,40.9 L8.8,41.7 L8.5,42.5 L8.2,43.4 L8.1,44.3 L7.9,45.2 L8.2,46.3Z"/><path fill="#ffffff" opacity="1.0" filter="url(#tx4)" d="M8.2,46.3 L10.0,46.6 L10.9,46.3 L11.9,46.0 L12.6,45.6 L13.6,45.5 L14.4,45.1 L14.9,44.5 L14.8,43.5 L15.3,42.9 L16.3,42.7 L17.2,42.5 L17.9,42.1 L18.4,41.5 L19.4,41.5 L20.3,41.3 L21.6,41.4 L22.1,40.9 L22.0,39.8 L22.0,38.7 L22.6,38.2 L23.5,38.1 L24.5,38.0 L24.5,36.9 L25.4,36.8 L26.1,36.4 L27.8,37.0 L28.6,36.8 L29.2,36.3 L29.2,35.2 L29.6,34.5 L30.2,34.0 L31.2,33.9 L31.5,33.1 L31.6,32.0 L31.9,31.3 L33.0,31.2 L34.7,31.9 L35.2,31.2 L35.6,30.5 L36.0,29.8 L36.3,28.9 L36.7,28.2 L37.4,27.7 L37.4,26.5 L37.1,25.1 L37.7,24.5 L38.3,23.9 L39.4,23.9 L40.3,23.6 L40.4,22.6 L40.9,21.9 L41.9,21.6 L42.2,20.8 L42.7,20.1 L42.5,18.7 L42.5,17.6 L42.7,16.6 L43.4,16.1 L44.3,15.7 L44.5,14.8 L45.0,14.1 L45.4,13.3 L46.3,13.0 L46.6,12.2 L46.7,11.1 L46.5,9.9 L46.6,8.9 L46.8,7.9 L46.9,7.0 L46.3,5.5 L46.3,5.5 L44.7,5.3 L43.8,5.6 L42.9,5.9 L42.0,6.2 L41.3,6.7 L40.5,7.0 L39.8,7.4 L38.7,7.5 L37.6,7.6 L37.0,8.1 L36.5,8.7 L36.6,9.8 L36.2,10.5 L35.4,10.8 L34.5,11.0 L33.6,11.3 L32.7,11.5 L32.2,12.0 L31.3,12.2 L30.0,12.0 L29.5,12.6 L29.0,13.2 L29.4,14.7 L29.2,15.7 L28.4,16.0 L26.9,15.5 L25.9,15.6 L25.0,15.8 L24.6,16.6 L23.7,16.7 L22.5,16.6 L21.9,17.1 L21.7,18.0 L22.0,19.5 L22.1,20.8 L21.3,21.1 L19.8,20.7 L18.8,20.8 L18.5,21.7 L18.1,22.4 L17.2,22.6 L16.7,23.3 L16.1,23.9 L16.3,25.2 L16.4,26.5 L16.2,27.4 L15.6,28.0 L14.7,28.3 L13.7,28.4 L13.1,29.0 L12.7,29.8 L12.3,30.5 L11.6,31.0 L11.3,31.9 L11.0,32.7 L11.5,34.3 L11.1,35.1 L10.9,36.0 L10.1,36.4 L8.9,36.5 L8.7,37.4 L8.3,38.1 L8.3,39.3 L7.9,40.0 L7.6,40.8 L7.5,41.8 L7.6,42.9 L7.6,43.9 L7.6,44.9 L8.2,46.3Z"/></svg><div style="left:735.70px;top:774.90px;width:13.20px;height:12.20px;background:#525252;"></div><svg style="position:absolute;left:735.70px;top:774.90px;overflow:visible;" width="13.2" height="12.2" viewBox="0 0 13.2 12.2"><path d="M10,3 L6.5,6.8" stroke="#f0f0f0" stroke-width="1.5" stroke-linecap="round"/><ellipse cx="5" cy="8" rx="2.2" ry="1.5" transform="rotate(-35 5 8)" fill="#f0f0f0"/><path d="M3.5,9.8 Q7,9.3 9.5,8.8" fill="none" stroke="#d0d0d0" stroke-width="0.7"/></svg><span class="t" style="left:225.75px;width:1000px;text-align:center;top:792.06px;font-size:6.9px;color:#cfcfcf;">#10 Texture</span><svg style="position:absolute;left:756.50px;top:732.60px;overflow:visible;" width="54.5" height="54.5" viewBox="0 0 54.5 54.5"><rect width="54.5" height="54.5" fill="#6c6c6c"/><path fill="#ffffff" opacity="0.45" filter="url(#b2)" d="M6.5,49.1 L8.0,49.0 L8.9,48.7 L9.8,48.3 L10.7,47.9 L11.5,47.4 L12.2,47.0 L13.0,46.6 L13.8,46.1 L14.5,45.7 L15.3,45.2 L16.0,44.8 L16.7,44.4 L17.4,43.9 L18.2,43.5 L18.9,43.1 L19.6,42.6 L20.3,42.2 L21.0,41.8 L21.8,41.3 L22.5,40.9 L23.2,40.5 L23.9,40.0 L24.6,39.6 L25.4,39.2 L26.1,38.7 L26.8,38.3 L27.5,37.9 L28.3,37.4 L29.0,37.0 L29.7,36.5 L30.4,36.1 L31.2,35.7 L31.9,35.2 L32.6,34.8 L33.4,34.3 L33.9,33.6 L34.4,32.9 L34.9,32.2 L35.4,31.5 L35.9,30.8 L36.5,30.1 L37.0,29.3 L37.5,28.6 L38.0,27.9 L38.5,27.1 L39.0,26.4 L39.5,25.6 L40.0,24.9 L40.6,24.1 L41.0,23.3 L41.5,22.6 L42.0,21.8 L42.5,21.0 L43.0,20.2 L43.4,19.4 L43.9,18.6 L44.4,17.8 L44.8,16.9 L45.2,16.1 L45.6,15.3 L46.0,14.4 L46.4,13.5 L46.8,12.6 L47.2,11.7 L47.5,10.8 L47.8,9.9 L48.0,8.9 L48.2,7.9 L48.3,6.9 L48.0,5.5 L48.0,5.5 L46.5,5.5 L45.5,5.8 L44.6,6.2 L43.7,6.6 L42.9,7.0 L42.1,7.4 L41.3,7.9 L40.5,8.3 L39.7,8.7 L38.9,9.2 L38.2,9.6 L37.4,10.0 L36.7,10.5 L35.9,10.9 L35.2,11.4 L34.4,11.8 L33.7,12.2 L32.9,12.7 L32.2,13.1 L31.5,13.5 L30.7,14.0 L30.0,14.4 L29.2,14.8 L28.5,15.3 L27.8,15.7 L27.0,16.2 L26.3,16.6 L25.5,17.0 L24.8,17.5 L24.1,17.9 L23.3,18.4 L22.6,18.8 L21.8,19.3 L21.1,19.7 L20.4,20.2 L19.8,20.9 L19.3,21.6 L18.8,22.3 L18.3,23.0 L17.8,23.8 L17.2,24.5 L16.7,25.2 L16.2,25.9 L15.7,26.7 L15.2,27.4 L14.7,28.2 L14.2,28.9 L13.7,29.7 L13.2,30.5 L12.7,31.2 L12.3,32.0 L11.8,32.8 L11.3,33.6 L10.9,34.4 L10.4,35.2 L10.0,36.0 L9.6,36.8 L9.2,37.6 L8.8,38.5 L8.4,39.3 L8.0,40.2 L7.7,41.1 L7.3,41.9 L7.0,42.8 L6.8,43.7 L6.5,44.7 L6.3,45.6 L6.2,46.6 L6.1,47.7 L6.5,49.1Z"/><path fill="#ffffff" opacity="1.0" filter="url(#tx3)" d="M6.5,49.1 L8.9,49.7 L10.4,49.7 L11.2,49.3 L11.7,48.7 L12.6,48.3 L13.4,47.9 L14.2,47.6 L14.5,46.8 L15.2,46.3 L15.9,45.8 L17.6,46.2 L18.8,46.2 L19.7,46.0 L20.3,45.5 L20.8,44.9 L21.3,44.2 L22.1,43.9 L22.3,43.0 L22.5,42.0 L22.5,40.9 L23.8,41.1 L25.6,41.7 L27.1,42.1 L27.4,41.3 L28.2,40.9 L28.7,40.3 L29.9,40.4 L30.7,40.0 L30.7,38.8 L30.1,37.0 L30.6,36.2 L31.6,36.1 L33.6,37.0 L34.3,36.5 L35.2,36.3 L35.7,35.6 L36.9,35.6 L37.7,35.3 L38.6,34.9 L37.9,32.9 L37.6,31.3 L37.6,30.0 L38.6,29.8 L39.4,29.3 L40.0,28.7 L40.1,27.5 L40.9,27.0 L42.2,27.1 L43.2,26.8 L43.5,25.8 L43.5,24.6 L43.5,23.2 L43.9,22.4 L44.2,21.5 L44.5,20.4 L44.7,19.3 L45.2,18.6 L45.7,17.8 L47.0,17.8 L48.0,17.4 L48.1,16.3 L47.9,14.8 L48.1,13.8 L48.7,13.1 L48.7,11.9 L48.8,10.7 L48.5,9.3 L48.7,8.3 L48.9,7.3 L48.0,5.5 L48.0,5.5 L45.8,4.9 L44.8,5.2 L43.6,5.4 L42.4,5.5 L41.1,5.5 L40.2,5.8 L39.7,6.5 L39.5,7.4 L39.0,8.1 L38.1,8.4 L37.2,8.7 L35.8,8.5 L35.2,9.1 L34.4,9.5 L33.3,9.5 L32.2,9.6 L31.5,10.1 L31.2,10.9 L31.5,12.4 L31.1,13.2 L29.8,13.1 L28.9,13.3 L27.3,12.8 L26.8,13.5 L25.9,13.7 L25.3,14.3 L23.9,14.0 L22.9,14.2 L23.2,15.8 L23.6,17.4 L23.3,18.3 L22.1,18.3 L20.6,18.0 L19.3,17.8 L18.0,17.7 L17.9,18.8 L17.0,19.2 L16.0,19.3 L16.1,20.7 L16.0,21.9 L16.8,24.1 L16.6,25.1 L15.7,25.4 L14.5,25.4 L13.1,25.3 L12.2,25.6 L11.9,26.6 L12.1,28.0 L11.2,28.4 L10.6,29.1 L10.8,30.6 L11.0,32.0 L10.8,33.0 L10.4,33.9 L9.1,33.9 L8.1,34.2 L7.5,34.9 L7.2,35.8 L7.0,36.9 L6.9,38.0 L6.2,38.7 L6.3,39.9 L6.7,41.4 L6.4,42.4 L6.1,43.2 L5.4,43.8 L4.9,44.6 L4.8,45.6 L5.3,47.1 L6.5,49.1Z"/></svg><div style="left:793.70px;top:774.90px;width:13.20px;height:12.20px;background:#525252;"></div><svg style="position:absolute;left:793.70px;top:774.90px;overflow:visible;" width="13.2" height="12.2" viewBox="0 0 13.2 12.2"><path d="M10,3 L6.5,6.8" stroke="#f0f0f0" stroke-width="1.5" stroke-linecap="round"/><ellipse cx="5" cy="8" rx="2.2" ry="1.5" transform="rotate(-35 5 8)" fill="#f0f0f0"/><path d="M3.5,9.8 Q7,9.3 9.5,8.8" fill="none" stroke="#d0d0d0" stroke-width="0.7"/></svg><span class="t" style="left:283.75px;width:1000px;text-align:center;top:792.06px;font-size:6.9px;color:#cfcfcf;">#11 Texture</span><svg style="position:absolute;left:814.50px;top:732.60px;overflow:visible;" width="54.5" height="54.5" viewBox="0 0 54.5 54.5"><rect width="54.5" height="54.5" fill="#6c6c6c"/><path fill="#ffffff" opacity="0.45" filter="url(#b2)" d="M16.3,46.3 L17.4,46.1 L18.1,45.6 L18.7,45.2 L19.3,44.7 L19.9,44.2 L20.4,43.7 L21.0,43.3 L21.5,42.8 L22.0,42.3 L22.5,41.8 L23.1,41.4 L23.6,40.9 L24.1,40.5 L24.6,40.0 L25.1,39.5 L25.6,39.1 L26.1,38.6 L26.6,38.2 L27.1,37.7 L27.6,37.3 L28.1,36.9 L28.6,36.4 L29.1,36.0 L29.6,35.5 L30.1,35.1 L30.6,34.6 L31.1,34.2 L31.6,33.8 L32.1,33.3 L32.6,32.9 L33.1,32.4 L33.6,32.0 L34.1,31.5 L34.6,31.1 L35.1,30.6 L35.4,30.0 L35.7,29.4 L36.0,28.8 L36.4,28.2 L36.7,27.6 L37.0,27.0 L37.3,26.4 L37.6,25.7 L38.0,25.1 L38.3,24.5 L38.6,23.9 L38.9,23.2 L39.2,22.6 L39.5,21.9 L39.8,21.3 L40.1,20.6 L40.4,20.0 L40.7,19.3 L41.0,18.6 L41.3,17.9 L41.5,17.3 L41.8,16.6 L42.1,15.9 L42.3,15.2 L42.6,14.5 L42.8,13.8 L43.0,13.0 L43.2,12.3 L43.4,11.5 L43.6,10.8 L43.7,10.0 L43.9,9.2 L43.9,8.4 L43.9,7.6 L43.6,6.5 L43.6,6.5 L42.5,6.8 L41.8,7.2 L41.2,7.7 L40.6,8.1 L40.0,8.6 L39.4,9.1 L38.8,9.5 L38.3,10.0 L37.7,10.5 L37.2,11.0 L36.7,11.4 L36.1,11.9 L35.6,12.3 L35.1,12.8 L34.6,13.3 L34.0,13.7 L33.5,14.2 L33.0,14.6 L32.5,15.1 L32.0,15.5 L31.5,16.0 L31.0,16.4 L30.5,16.8 L29.9,17.3 L29.4,17.7 L28.9,18.2 L28.4,18.6 L27.9,19.1 L27.4,19.5 L26.9,20.0 L26.4,20.4 L25.9,20.9 L25.4,21.3 L24.9,21.8 L24.4,22.2 L24.0,22.8 L23.7,23.5 L23.4,24.1 L23.1,24.7 L22.8,25.3 L22.4,25.9 L22.1,26.5 L21.8,27.2 L21.5,27.8 L21.2,28.4 L20.9,29.1 L20.6,29.7 L20.3,30.3 L20.0,31.0 L19.7,31.6 L19.4,32.3 L19.1,33.0 L18.8,33.6 L18.6,34.3 L18.3,35.0 L18.0,35.7 L17.8,36.4 L17.6,37.1 L17.3,37.8 L17.1,38.5 L16.9,39.2 L16.7,39.9 L16.5,40.6 L16.3,41.4 L16.2,42.1 L16.1,42.9 L16.0,43.7 L15.9,44.5 L16.0,45.3 L16.3,46.3Z"/><path fill="#ffffff" opacity="1.0" filter="url(#tx4)" d="M16.3,46.3 L17.9,46.3 L18.9,46.0 L20.0,45.8 L20.6,45.4 L21.0,44.8 L21.3,44.2 L21.6,43.6 L22.5,43.4 L23.0,42.9 L23.3,42.3 L23.5,41.7 L24.2,41.3 L25.6,41.4 L26.4,41.2 L27.2,40.9 L27.3,40.2 L27.1,39.3 L27.6,38.9 L28.5,38.7 L28.6,38.0 L28.5,37.1 L28.9,36.6 L29.9,36.6 L31.2,36.7 L31.8,36.4 L32.6,36.2 L33.0,35.7 L33.4,35.1 L33.7,34.6 L34.1,34.1 L34.4,33.5 L34.1,32.4 L33.8,31.3 L35.3,31.6 L36.2,31.5 L37.2,31.4 L37.1,30.5 L37.8,30.2 L38.3,29.7 L38.7,29.2 L39.1,28.6 L38.5,27.2 L38.3,26.3 L38.3,25.4 L39.0,25.1 L39.5,24.5 L40.3,24.3 L40.1,23.2 L40.9,23.0 L41.4,22.5 L42.4,22.3 L42.4,21.4 L42.2,20.4 L41.7,19.1 L41.8,18.4 L42.5,18.0 L42.6,17.1 L43.0,16.5 L42.9,15.6 L43.4,15.0 L44.3,14.7 L44.7,14.1 L44.6,13.2 L44.5,12.2 L44.4,11.3 L44.7,10.6 L44.6,9.7 L44.5,8.8 L44.3,7.8 L43.6,6.5 L43.6,6.5 L42.1,6.6 L41.4,7.0 L40.7,7.4 L39.7,7.7 L39.0,8.0 L38.3,8.4 L37.8,8.9 L37.0,9.2 L36.2,9.5 L35.5,9.9 L35.4,10.5 L35.4,11.4 L35.5,12.2 L34.4,12.3 L33.3,12.4 L32.3,12.5 L32.0,13.1 L31.3,13.4 L30.8,13.8 L30.0,14.1 L29.9,14.8 L29.5,15.3 L29.6,16.2 L29.5,17.0 L28.9,17.3 L27.6,17.1 L26.8,17.4 L26.1,17.7 L25.9,18.4 L25.2,18.6 L24.6,19.0 L24.3,19.7 L23.9,20.2 L24.5,21.5 L24.2,22.1 L23.8,22.7 L22.5,22.5 L21.5,22.6 L21.0,23.1 L20.9,23.8 L20.9,24.7 L20.4,25.2 L20.5,26.2 L20.2,26.8 L20.6,28.0 L20.6,28.9 L20.3,29.5 L19.3,29.6 L18.0,29.6 L17.4,30.0 L17.7,31.1 L17.7,32.0 L17.5,32.7 L17.2,33.4 L17.4,34.4 L17.3,35.2 L17.5,36.2 L17.1,36.7 L16.1,37.0 L15.4,37.4 L15.1,38.1 L15.4,39.1 L15.5,40.1 L15.4,40.8 L15.2,41.5 L15.2,42.4 L15.3,43.3 L15.6,44.3 L15.6,45.1 L16.3,46.3Z"/></svg><div style="left:851.70px;top:774.90px;width:13.20px;height:12.20px;background:#525252;"></div><svg style="position:absolute;left:851.70px;top:774.90px;overflow:visible;" width="13.2" height="12.2" viewBox="0 0 13.2 12.2"><path d="M10,3 L6.5,6.8" stroke="#f0f0f0" stroke-width="1.5" stroke-linecap="round"/><ellipse cx="5" cy="8" rx="2.2" ry="1.5" transform="rotate(-35 5 8)" fill="#f0f0f0"/><path d="M3.5,9.8 Q7,9.3 9.5,8.8" fill="none" stroke="#d0d0d0" stroke-width="0.7"/></svg><span class="t" style="left:341.75px;width:1000px;text-align:center;top:792.06px;font-size:6.9px;color:#cfcfcf;">#12 Texture</span><svg style="position:absolute;left:872.50px;top:732.60px;overflow:visible;" width="54.5" height="54.5" viewBox="0 0 54.5 54.5"><rect width="54.5" height="54.5" fill="#6c6c6c"/><path fill="#ffffff" opacity="0.1575" filter="url(#b2)" d="M8.2,48.0 L9.2,47.7 L10.0,47.2 L10.7,46.7 L11.3,46.3 L12.0,45.8 L12.7,45.3 L13.3,44.8 L14.0,44.3 L14.6,43.8 L15.2,43.3 L15.9,42.8 L16.5,42.3 L17.2,41.8 L17.8,41.3 L18.4,40.8 L19.1,40.4 L19.7,39.9 L20.4,39.4 L21.0,38.9 L21.6,38.5 L22.3,38.0 L22.9,37.5 L23.6,37.0 L24.2,36.6 L24.9,36.1 L25.5,35.6 L26.2,35.2 L26.8,34.7 L27.5,34.2 L28.2,33.8 L28.8,33.3 L29.5,32.8 L30.1,32.3 L30.8,31.9 L31.5,31.4 L32.0,30.8 L32.5,30.1 L33.1,29.5 L33.6,28.9 L34.2,28.3 L34.7,27.6 L35.2,27.0 L35.8,26.4 L36.3,25.7 L36.9,25.1 L37.4,24.4 L37.9,23.8 L38.4,23.1 L39.0,22.4 L39.5,21.8 L40.0,21.1 L40.5,20.4 L41.0,19.7 L41.6,19.0 L42.1,18.3 L42.5,17.6 L43.0,16.9 L43.5,16.2 L44.0,15.5 L44.5,14.8 L44.9,14.0 L45.4,13.3 L45.8,12.5 L46.2,11.7 L46.6,11.0 L47.0,10.2 L47.4,9.3 L47.7,8.5 L48.0,7.6 L48.0,6.5 L48.0,6.5 L46.9,6.8 L46.1,7.2 L45.4,7.7 L44.7,8.2 L44.0,8.7 L43.3,9.2 L42.6,9.7 L41.9,10.2 L41.2,10.7 L40.6,11.2 L39.9,11.7 L39.2,12.2 L38.6,12.6 L37.9,13.1 L37.3,13.6 L36.6,14.1 L35.9,14.6 L35.3,15.1 L34.6,15.5 L33.9,16.0 L33.3,16.5 L32.6,17.0 L31.9,17.4 L31.3,17.9 L30.6,18.4 L29.9,18.8 L29.3,19.3 L28.6,19.8 L27.9,20.3 L27.3,20.7 L26.6,21.2 L25.9,21.7 L25.3,22.2 L24.6,22.6 L23.9,23.1 L23.4,23.7 L22.8,24.4 L22.3,25.0 L21.8,25.6 L21.2,26.3 L20.7,26.9 L20.2,27.5 L19.6,28.2 L19.1,28.8 L18.6,29.5 L18.0,30.1 L17.5,30.8 L17.0,31.4 L16.5,32.1 L16.0,32.8 L15.5,33.5 L15.0,34.1 L14.5,34.8 L14.0,35.5 L13.5,36.2 L13.1,36.9 L12.6,37.6 L12.1,38.3 L11.7,39.1 L11.3,39.8 L10.8,40.5 L10.4,41.3 L10.0,42.0 L9.6,42.8 L9.3,43.6 L8.9,44.4 L8.6,45.2 L8.3,46.0 L8.1,46.9 L8.2,48.0Z"/><path fill="#ffffff" opacity="0.35" filter="url(#tx2)" d="M8.2,48.0 L9.7,48.0 L10.7,47.8 L11.6,47.5 L12.3,47.0 L12.8,46.4 L13.2,45.7 L13.8,45.1 L14.6,44.8 L15.2,44.3 L15.8,43.7 L16.4,43.3 L17.3,43.0 L18.4,42.9 L19.5,42.9 L19.8,42.1 L20.1,41.3 L20.4,40.6 L20.9,40.0 L21.8,39.7 L22.3,39.1 L22.6,38.3 L23.2,37.8 L24.3,37.8 L25.5,37.9 L26.3,37.6 L26.9,37.1 L27.2,36.3 L27.7,35.6 L28.7,35.5 L29.0,34.7 L29.5,34.0 L29.5,32.8 L30.0,32.2 L31.2,32.3 L32.8,32.8 L33.6,32.5 L33.8,31.5 L34.2,30.7 L34.9,30.3 L35.6,29.8 L35.8,28.8 L36.1,27.9 L35.8,26.4 L36.6,26.0 L37.6,25.9 L38.4,25.4 L38.8,24.7 L39.3,24.0 L40.0,23.5 L40.8,23.1 L41.5,22.6 L41.8,21.7 L41.9,20.6 L42.0,19.4 L42.4,18.7 L43.1,18.1 L43.8,17.6 L44.2,16.8 L44.7,16.1 L45.4,15.6 L46.0,15.0 L46.7,14.5 L46.9,13.5 L46.9,12.3 L47.2,11.4 L47.6,10.6 L47.9,9.8 L48.2,8.9 L48.2,7.8 L48.0,6.5 L48.0,6.5 L46.5,6.5 L45.6,6.8 L44.6,7.1 L43.8,7.4 L43.1,8.0 L42.7,8.7 L42.1,9.3 L41.5,9.8 L40.9,10.3 L39.8,10.4 L38.9,10.8 L38.2,11.2 L37.8,11.9 L36.8,12.1 L35.8,12.2 L35.5,13.0 L35.0,13.6 L34.9,14.7 L34.4,15.4 L33.4,15.4 L32.3,15.5 L31.5,15.8 L30.8,16.2 L30.1,16.7 L29.5,17.2 L28.4,17.1 L27.8,17.7 L27.9,19.0 L27.9,20.2 L27.1,20.5 L26.0,20.6 L25.1,20.7 L23.9,20.7 L23.1,21.0 L22.8,21.8 L22.3,22.6 L21.4,22.8 L20.8,23.4 L20.8,24.6 L21.1,26.1 L20.4,26.6 L19.6,27.0 L18.6,27.1 L17.8,27.5 L17.1,28.0 L17.0,29.1 L16.5,29.7 L15.9,30.3 L15.2,30.8 L15.2,32.0 L15.3,33.3 L14.8,34.0 L13.8,34.2 L12.9,34.5 L12.3,35.1 L11.7,35.6 L11.6,36.7 L11.2,37.5 L10.7,38.2 L10.3,39.0 L10.1,39.9 L10.0,40.9 L9.6,41.7 L9.1,42.4 L8.4,42.9 L8.0,43.7 L7.8,44.5 L7.8,45.6 L7.7,46.6 L8.2,48.0Z"/></svg><div style="left:909.70px;top:774.90px;width:13.20px;height:12.20px;background:#525252;"></div><svg style="position:absolute;left:909.70px;top:774.90px;overflow:visible;" width="13.2" height="12.2" viewBox="0 0 13.2 12.2"><path d="M10,3 L6.5,6.8" stroke="#f0f0f0" stroke-width="1.5" stroke-linecap="round"/><ellipse cx="5" cy="8" rx="2.2" ry="1.5" transform="rotate(-35 5 8)" fill="#f0f0f0"/><path d="M3.5,9.8 Q7,9.3 9.5,8.8" fill="none" stroke="#d0d0d0" stroke-width="0.7"/></svg><span class="t" style="left:399.75px;width:1000px;text-align:center;top:792.06px;font-size:6.9px;color:#cfcfcf;">#13 Texture Sc...</span><svg style="position:absolute;left:930.50px;top:732.60px;overflow:visible;" width="54.5" height="54.5" viewBox="0 0 54.5 54.5"><rect width="54.5" height="54.5" fill="#6c6c6c"/><path fill="#ffffff" opacity="0.135" filter="url(#b2)" d="M8.2,48.0 L9.2,47.7 L10.0,47.2 L10.7,46.7 L11.3,46.3 L12.0,45.8 L12.7,45.3 L13.3,44.8 L14.0,44.3 L14.6,43.8 L15.2,43.3 L15.9,42.8 L16.5,42.3 L17.2,41.8 L17.8,41.3 L18.4,40.8 L19.1,40.4 L19.7,39.9 L20.4,39.4 L21.0,38.9 L21.6,38.5 L22.3,38.0 L22.9,37.5 L23.6,37.0 L24.2,36.6 L24.9,36.1 L25.5,35.6 L26.2,35.2 L26.8,34.7 L27.5,34.2 L28.2,33.8 L28.8,33.3 L29.5,32.8 L30.1,32.3 L30.8,31.9 L31.5,31.4 L32.0,30.8 L32.5,30.1 L33.1,29.5 L33.6,28.9 L34.2,28.3 L34.7,27.6 L35.2,27.0 L35.8,26.4 L36.3,25.7 L36.9,25.1 L37.4,24.4 L37.9,23.8 L38.4,23.1 L39.0,22.4 L39.5,21.8 L40.0,21.1 L40.5,20.4 L41.0,19.7 L41.6,19.0 L42.1,18.3 L42.5,17.6 L43.0,16.9 L43.5,16.2 L44.0,15.5 L44.5,14.8 L44.9,14.0 L45.4,13.3 L45.8,12.5 L46.2,11.7 L46.6,11.0 L47.0,10.2 L47.4,9.3 L47.7,8.5 L48.0,7.6 L48.0,6.5 L48.0,6.5 L46.9,6.8 L46.1,7.2 L45.4,7.7 L44.7,8.2 L44.0,8.7 L43.3,9.2 L42.6,9.7 L41.9,10.2 L41.2,10.7 L40.6,11.2 L39.9,11.7 L39.2,12.2 L38.6,12.6 L37.9,13.1 L37.3,13.6 L36.6,14.1 L35.9,14.6 L35.3,15.1 L34.6,15.5 L33.9,16.0 L33.3,16.5 L32.6,17.0 L31.9,17.4 L31.3,17.9 L30.6,18.4 L29.9,18.8 L29.3,19.3 L28.6,19.8 L27.9,20.3 L27.3,20.7 L26.6,21.2 L25.9,21.7 L25.3,22.2 L24.6,22.6 L23.9,23.1 L23.4,23.7 L22.8,24.4 L22.3,25.0 L21.8,25.6 L21.2,26.3 L20.7,26.9 L20.2,27.5 L19.6,28.2 L19.1,28.8 L18.6,29.5 L18.0,30.1 L17.5,30.8 L17.0,31.4 L16.5,32.1 L16.0,32.8 L15.5,33.5 L15.0,34.1 L14.5,34.8 L14.0,35.5 L13.5,36.2 L13.1,36.9 L12.6,37.6 L12.1,38.3 L11.7,39.1 L11.3,39.8 L10.8,40.5 L10.4,41.3 L10.0,42.0 L9.6,42.8 L9.3,43.6 L8.9,44.4 L8.6,45.2 L8.3,46.0 L8.1,46.9 L8.2,48.0Z"/><path fill="#ffffff" opacity="0.3" filter="url(#tx2)" d="M8.2,48.0 L9.5,47.9 L10.3,47.5 L11.0,47.0 L11.9,46.7 L12.8,46.4 L13.6,46.0 L14.3,45.6 L14.8,45.0 L15.5,44.5 L16.5,44.3 L17.0,43.7 L17.3,43.0 L17.4,42.0 L17.9,41.5 L18.9,41.3 L19.9,41.2 L20.8,40.9 L21.4,40.4 L22.1,40.0 L22.9,39.8 L23.7,39.4 L24.3,38.9 L24.4,37.9 L24.7,37.1 L25.1,36.3 L26.1,36.3 L26.8,35.9 L27.7,35.7 L28.2,35.0 L29.0,34.7 L30.2,34.8 L31.3,34.8 L31.8,34.1 L31.7,32.9 L32.0,32.0 L32.4,31.2 L33.5,31.2 L33.5,30.0 L33.9,29.2 L34.5,28.7 L35.7,28.7 L36.6,28.5 L37.5,28.2 L37.5,27.0 L38.0,26.3 L38.2,25.3 L38.9,24.7 L39.3,23.9 L39.5,23.0 L39.8,22.1 L40.5,21.5 L41.2,21.1 L42.4,21.1 L43.0,20.4 L43.3,19.6 L43.4,18.5 L44.2,18.0 L44.7,17.3 L44.9,16.3 L45.1,15.3 L45.1,14.2 L45.7,13.6 L46.4,13.0 L47.0,12.4 L47.3,11.5 L47.8,10.8 L48.1,9.9 L48.4,9.1 L48.5,8.0 L48.0,6.5 L48.0,6.5 L46.4,6.4 L45.6,6.8 L44.9,7.3 L44.4,7.9 L43.6,8.4 L42.7,8.7 L41.8,9.0 L40.8,9.2 L40.2,9.7 L39.6,10.3 L38.9,10.8 L38.2,11.2 L37.8,11.9 L37.3,12.5 L37.1,13.5 L36.4,13.9 L35.1,13.7 L34.2,14.0 L33.2,14.0 L32.8,14.8 L32.2,15.3 L31.7,16.0 L30.7,16.1 L30.1,16.7 L30.1,17.9 L29.8,18.6 L28.9,19.0 L27.6,18.7 L26.6,18.8 L25.6,18.9 L25.1,19.5 L24.9,20.6 L24.0,20.8 L23.3,21.2 L23.0,22.2 L22.8,23.1 L22.8,24.3 L22.1,24.7 L20.8,24.5 L19.9,24.9 L19.2,25.3 L18.9,26.2 L18.4,26.8 L18.1,27.8 L17.5,28.4 L17.2,29.2 L17.1,30.3 L16.7,31.2 L16.0,31.6 L15.2,32.0 L14.2,32.2 L13.4,32.6 L13.0,33.4 L13.0,34.5 L12.8,35.5 L12.2,36.1 L11.8,36.9 L11.4,37.7 L11.2,38.6 L10.9,39.4 L10.2,40.0 L9.2,40.3 L8.8,41.1 L8.6,42.0 L8.5,43.0 L8.4,44.0 L8.1,44.8 L7.8,45.6 L7.8,46.7 L8.2,48.0Z"/></svg><div style="left:967.70px;top:774.90px;width:13.20px;height:12.20px;background:#525252;"></div><svg style="position:absolute;left:967.70px;top:774.90px;overflow:visible;" width="13.2" height="12.2" viewBox="0 0 13.2 12.2"><path d="M10,3 L6.5,6.8" stroke="#f0f0f0" stroke-width="1.5" stroke-linecap="round"/><ellipse cx="5" cy="8" rx="2.2" ry="1.5" transform="rotate(-35 5 8)" fill="#f0f0f0"/><path d="M3.5,9.8 Q7,9.3 9.5,8.8" fill="none" stroke="#d0d0d0" stroke-width="0.7"/></svg><span class="t" style="left:457.75px;width:1000px;text-align:center;top:792.06px;font-size:6.9px;color:#cfcfcf;">#14 Texture Sc...</span><svg style="position:absolute;left:988.50px;top:732.60px;overflow:visible;" width="54.5" height="54.5" viewBox="0 0 54.5 54.5"><rect width="54.5" height="54.5" fill="#6c6c6c"/><path fill="#ffffff" opacity="0.3375" filter="url(#b2)" d="M8.2,48.0 L9.4,47.8 L10.3,47.4 L11.1,47.0 L11.9,46.6 L12.6,46.1 L13.3,45.6 L14.0,45.2 L14.7,44.7 L15.4,44.3 L16.1,43.8 L16.8,43.3 L17.5,42.9 L18.2,42.4 L18.8,42.0 L19.5,41.5 L20.2,41.1 L20.9,40.6 L21.6,40.2 L22.2,39.7 L22.9,39.3 L23.6,38.8 L24.3,38.4 L24.9,38.0 L25.6,37.5 L26.3,37.1 L27.0,36.6 L27.7,36.2 L28.3,35.7 L29.0,35.3 L29.7,34.8 L30.4,34.4 L31.1,33.9 L31.8,33.5 L32.5,33.0 L33.2,32.5 L33.7,31.9 L34.2,31.2 L34.7,30.5 L35.2,29.9 L35.7,29.2 L36.2,28.5 L36.7,27.8 L37.2,27.1 L37.7,26.4 L38.2,25.7 L38.8,25.0 L39.3,24.3 L39.8,23.6 L40.2,22.9 L40.7,22.2 L41.2,21.4 L41.7,20.7 L42.2,20.0 L42.7,19.2 L43.1,18.5 L43.6,17.7 L44.0,16.9 L44.5,16.1 L44.9,15.4 L45.3,14.6 L45.7,13.8 L46.1,12.9 L46.5,12.1 L46.9,11.3 L47.2,10.4 L47.5,9.5 L47.8,8.6 L48.0,7.7 L48.2,6.7 L48.0,5.5 L48.0,5.5 L46.7,5.6 L45.8,5.9 L44.9,6.4 L44.1,6.8 L43.4,7.2 L42.6,7.7 L41.9,8.1 L41.2,8.6 L40.4,9.1 L39.7,9.5 L39.0,10.0 L38.3,10.4 L37.6,10.9 L36.9,11.3 L36.2,11.8 L35.5,12.3 L34.8,12.7 L34.1,13.2 L33.4,13.6 L32.7,14.1 L32.0,14.5 L31.3,15.0 L30.6,15.4 L29.9,15.9 L29.2,16.3 L28.5,16.8 L27.8,17.2 L27.1,17.7 L26.4,18.1 L25.7,18.6 L25.0,19.0 L24.3,19.5 L23.6,19.9 L22.9,20.4 L22.2,20.9 L21.7,21.5 L21.2,22.2 L20.7,22.9 L20.2,23.6 L19.7,24.2 L19.2,24.9 L18.7,25.6 L18.2,26.3 L17.7,27.0 L17.2,27.7 L16.7,28.4 L16.2,29.1 L15.7,29.8 L15.2,30.6 L14.7,31.3 L14.3,32.0 L13.8,32.8 L13.3,33.5 L12.9,34.3 L12.4,35.0 L12.0,35.8 L11.6,36.6 L11.2,37.3 L10.8,38.1 L10.4,38.9 L10.0,39.7 L9.6,40.5 L9.3,41.4 L9.0,42.2 L8.7,43.1 L8.4,43.9 L8.2,44.8 L8.0,45.7 L7.9,46.7 L8.2,48.0Z"/><path fill="#ffffff" opacity="0.75" filter="url(#tx3)" d="M8.2,48.0 L10.3,48.4 L11.4,48.2 L12.1,47.7 L12.6,47.1 L13.1,46.5 L14.3,46.4 L15.2,46.1 L15.8,45.6 L16.3,45.0 L17.4,44.8 L18.7,45.0 L19.4,44.6 L20.3,44.4 L20.1,43.1 L20.3,42.3 L21.3,42.1 L22.0,41.7 L22.6,41.1 L22.8,40.3 L23.6,39.9 L24.4,39.6 L26.2,40.3 L27.3,40.3 L28.0,39.9 L27.7,38.5 L28.4,38.0 L29.1,37.7 L29.7,37.2 L30.0,36.3 L30.2,35.3 L30.3,34.2 L31.9,34.7 L33.3,35.1 L34.9,35.6 L35.2,34.7 L35.3,33.6 L36.1,33.3 L36.7,32.7 L37.1,31.9 L36.4,29.9 L36.6,28.9 L36.7,27.8 L37.9,27.8 L39.4,28.2 L39.7,27.3 L40.1,26.5 L41.1,26.2 L42.0,25.9 L42.7,25.4 L42.5,24.0 L42.4,22.6 L42.4,21.4 L42.6,20.4 L43.4,19.9 L44.1,19.4 L44.4,18.5 L44.9,17.7 L45.8,17.4 L46.6,16.9 L47.2,16.2 L47.4,15.2 L47.2,13.9 L47.4,12.8 L47.5,11.8 L48.0,11.1 L48.3,10.1 L48.3,9.0 L48.6,8.2 L48.8,7.2 L48.0,5.5 L48.0,5.5 L45.9,4.9 L44.7,5.1 L43.8,5.4 L43.1,5.9 L42.7,6.6 L41.8,7.0 L41.0,7.4 L40.4,7.9 L39.6,8.3 L38.9,8.8 L37.7,8.8 L36.5,8.8 L35.4,8.8 L35.2,9.7 L35.0,10.7 L34.6,11.4 L34.2,12.2 L33.3,12.3 L32.2,12.4 L32.1,13.4 L31.2,13.7 L30.2,13.9 L28.8,13.6 L27.6,13.5 L26.9,13.9 L27.0,15.1 L27.1,16.4 L26.3,16.8 L25.3,16.9 L24.6,17.4 L23.8,17.7 L23.4,18.5 L21.9,18.1 L21.0,18.3 L19.9,18.3 L19.7,19.4 L19.8,20.7 L20.2,22.4 L19.5,22.9 L18.9,23.5 L18.0,23.7 L17.3,24.3 L16.9,25.1 L16.3,25.7 L15.3,25.8 L14.4,26.2 L14.0,27.0 L14.4,28.6 L14.6,30.0 L14.1,30.7 L13.5,31.3 L12.3,31.3 L12.1,32.4 L11.6,33.1 L11.1,33.8 L10.3,34.3 L9.5,34.7 L9.4,35.8 L9.7,37.3 L9.8,38.4 L9.7,39.5 L8.7,39.8 L8.3,40.6 L7.6,41.2 L7.5,42.2 L7.3,43.1 L7.0,44.0 L7.0,45.0 L7.2,46.2 L8.2,48.0Z"/></svg><div style="left:1025.70px;top:774.90px;width:13.20px;height:12.20px;background:#525252;"></div><svg style="position:absolute;left:1025.70px;top:774.90px;overflow:visible;" width="13.2" height="12.2" viewBox="0 0 13.2 12.2"><path d="M10,3 L6.5,6.8" stroke="#f0f0f0" stroke-width="1.5" stroke-linecap="round"/><ellipse cx="5" cy="8" rx="2.2" ry="1.5" transform="rotate(-35 5 8)" fill="#f0f0f0"/><path d="M3.5,9.8 Q7,9.3 9.5,8.8" fill="none" stroke="#d0d0d0" stroke-width="0.7"/></svg><span class="t" style="left:515.75px;width:1000px;text-align:center;top:792.06px;font-size:6.9px;color:#cfcfcf;">#15 Texture</span><div style="left:1230.00px;top:588.70px;width:1.20px;height:210.30px;background:#3a3a3a;border-radius:1px;"></div><div style="left:1234.50px;top:29.50px;width:265.50px;height:57.60px;background:#282828;border-radius:4px 0 0 4px;"></div><div style="left:1239.90px;top:30.80px;width:17.50px;height:10.80px;background:#262626;border:0.6px solid #2f2f2f;border-radius:2.5px;"></div><svg style="position:absolute;left:1241.00px;top:31.50px;overflow:visible;" width="12" height="10" viewBox="0 0 12 10"><rect x="1" y="0.8" width="3" height="2.2" fill="#d8d8d8"/><path d="M2.5,3 V8.2 H5 M2.5,5.5 H5" fill="none" stroke="#d8d8d8" stroke-width="0.8"/><rect x="5.3" y="4.5" width="3.5" height="2" fill="#d8d8d8"/><rect x="5.3" y="7.2" width="3.5" height="2" fill="#d8d8d8"/></svg><svg style="position:absolute;left:1249.50px;top:32.40px;overflow:visible;" width="8" height="8" viewBox="0 0 8 8"><polyline points="1.4,2.7 4,5.3 6.6,2.7" fill="none" stroke="#cfcfcf" stroke-width="0.8"/></svg><div style="left:1261.50px;top:30.80px;width:18.00px;height:10.80px;background:#262626;border:0.6px solid #2f2f2f;border-radius:2.5px;"></div><svg style="position:absolute;left:1263.00px;top:31.50px;overflow:visible;" width="10" height="10" viewBox="0 0 10 10"><rect x="0.8" y="3.2" width="6" height="5.5" fill="#8a8a8a"/><rect x="2.8" y="1.2" width="6" height="5.5" fill="#d0d0d0"/><path d="M3.5,6 L5.5,3.8 L7.5,6 Z" fill="#555"/></svg><svg style="position:absolute;left:1271.50px;top:32.40px;overflow:visible;" width="8" height="8" viewBox="0 0 8 8"><polyline points="1.4,2.7 4,5.3 6.6,2.7" fill="none" stroke="#cfcfcf" stroke-width="0.8"/></svg><div style="left:1327.20px;top:30.80px;width:67.50px;height:10.80px;background:#1d1d1d;border-radius:2.5px;"></div><svg style="position:absolute;left:1329.50px;top:31.50px;overflow:visible;" width="10" height="10" viewBox="0 0 10 10"><circle cx="6" cy="4" r="2.6" fill="none" stroke="#d0d0d0" stroke-width="0.9"/><path d="M4.2,5.8 L1.3,8.7" stroke="#d0d0d0" stroke-width="1"/></svg><span class="t" style="left:1341.20px;top:32.96px;font-size:6.9px;color:#6a6a6a;">Search</span><div style="left:1462.20px;top:30.80px;width:18.80px;height:10.80px;background:#262626;border:0.6px solid #2f2f2f;border-radius:2.5px;"></div><svg style="position:absolute;left:1463.50px;top:31.50px;overflow:visible;" width="10" height="10" viewBox="0 0 10 10"><path d="M1,1.5 H8.5 L5.5,5 V8.8 L4,7.8 V5 Z" fill="none" stroke="#d8d8d8" stroke-width="0.8"/></svg><svg style="position:absolute;left:1473.00px;top:32.40px;overflow:visible;" width="8" height="8" viewBox="0 0 8 8"><polyline points="1.4,2.7 4,5.3 6.6,2.7" fill="none" stroke="#cfcfcf" stroke-width="0.8"/></svg><div style="left:1485.20px;top:30.80px;width:10.30px;height:10.80px;background:#3d3d3d;border-radius:2px;"></div><svg style="position:absolute;left:1485.20px;top:30.80px;overflow:visible;" width="10.3" height="10.8" viewBox="0 0 10.3 10.8"><rect x="1.8" y="2.5" width="5.5" height="6.5" fill="none" stroke="#9a9a9a" stroke-width="0.8"/><circle cx="7.5" cy="3" r="2" fill="#d0d0d0"/></svg><div style="left:1246.20px;top:46.20px;width:11.70px;height:9.80px;background:#3a3a3a;border-radius:2px;"></div><svg style="position:absolute;left:1246.20px;top:46.20px;overflow:visible;" width="11.7" height="9.8" viewBox="0 0 11.7 9.8"><rect x="2.2" y="1.8" width="7.3" height="2" fill="#e0e0e0"/><rect x="2.7" y="4.3" width="6.3" height="4.2" fill="#e0e0e0"/><rect x="4.5" y="5.2" width="2.7" height="0.9" fill="#3a3a3a"/></svg><span class="t" style="left:1260.20px;top:47.86px;font-size:6.9px;color:#dcdcdc;">Scene Collection</span><svg style="position:absolute;left:1248.50px;top:58.40px;overflow:visible;" width="8" height="8" viewBox="0 0 8 8"><polyline points="2.7,1.4 5.3,4 2.7,6.6" fill="none" stroke="#bdbdbd" stroke-width="0.8"/></svg><svg style="position:absolute;left:1259.70px;top:57.80px;overflow:visible;" width="8.1" height="9" viewBox="0 0 8.1 9"><rect x="0.4" y="0.8" width="7.3" height="2" fill="#e0e0e0"/><rect x="0.9" y="3.3" width="6.3" height="5" fill="#e0e0e0"/><rect x="2.7" y="4.2" width="2.7" height="0.9" fill="#282828"/></svg><span class="t" style="left:1271.80px;top:59.16px;font-size:6.9px;color:#cfcfcf;transform:scaleX(0.92);transform-origin:0 50%;">SCENE SETUP</span><span class="t" style="left:1329.80px;top:54.60px;font-size:12.5px;color:#e8963c;font-family:"Liberation Sans",sans-serif;">a</span><svg style="position:absolute;left:1340.70px;top:57.50px;overflow:visible;" width="10" height="10" viewBox="0 0 10 10"><circle cx="3" cy="3" r="2" fill="#e8963c"/><circle cx="6.5" cy="3" r="2" fill="#e8963c"/><rect x="1.5" y="4.5" width="6" height="4" fill="#e8963c"/><path d="M7.5,6.5 L9.5,5 V8.5 Z" fill="#e8963c"/><circle cx="3" cy="3" r="0.8" fill="#282828"/><circle cx="6.5" cy="3" r="0.8" fill="#282828"/></svg><svg style="position:absolute;left:1473.50px;top:58.40px;overflow:visible;" width="9" height="8" viewBox="0 0 9 8"><path d="M0.5,4 Q4.5,-0.5 8.5,4 Q4.5,8.5 0.5,4 Z" fill="#e6e6e6"/><circle cx="4.5" cy="4" r="1.7" fill="#282828"/><circle cx="4.5" cy="4" r="0.8" fill="#e6e6e6"/></svg><svg style="position:absolute;left:1485.00px;top:58.40px;overflow:visible;" width="9" height="8" viewBox="0 0 9 8"><rect x="0.5" y="2" width="8" height="5.5" rx="1" fill="#e6e6e6"/><rect x="3" y="0.8" width="3" height="2" fill="#e6e6e6"/><circle cx="4.5" cy="4.8" r="1.6" fill="#282828"/></svg><div style="left:1234.50px;top:68.20px;width:265.50px;height:11.20px;background:#334d80;"></div><svg style="position:absolute;left:1235.40px;top:69.00px;overflow:visible;" width="10" height="9" viewBox="0 0 10 9"><path d="M0.8,0.8 L3,3 M3,0.8 L0.8,3 M3.8,0.8 L6,3 M6,0.8 L3.8,3 M6.8,0.8 L9,3 M9,0.8 L6.8,3 M1.8,4.5 V8.5 M1.8,4.5 H4 M1.8,6.3 H3.6 M5.4,4.5 V8.5 M5.4,4.5 H7.6 M5.4,6.3 H7.2" fill="none" stroke="#e0e0e0" stroke-width="0.75"/></svg><svg style="position:absolute;left:1248.50px;top:69.80px;overflow:visible;" width="8" height="8" viewBox="0 0 8 8"><polyline points="2.7,1.4 5.3,4 2.7,6.6" fill="none" stroke="#bdbdbd" stroke-width="0.8"/></svg><div style="left:1257.90px;top:68.90px;width:11.30px;height:9.80px;background:#4e6591;border-radius:2px;"></div><svg style="position:absolute;left:1257.90px;top:68.90px;overflow:visible;" width="11.3" height="9.8" viewBox="0 0 11.3 9.8"><path d="M2,2 H9.3 L5.65,8.3 Z" fill="none" stroke="#f0a050" stroke-width="1.2"/></svg><span class="t" style="left:1271.80px;top:70.56px;font-size:6.9px;color:#f0a757;">Canvas</span><svg style="position:absolute;left:1308.80px;top:68.60px;overflow:visible;" width="9" height="10" viewBox="0 0 9 10"><path d="M1,1.5 H8 L4.5,8.5 Z" fill="none" stroke="#2ec4b6" stroke-width="1"/><circle cx="1" cy="1.5" r="0.9" fill="#2ec4b6"/><circle cx="8" cy="1.5" r="0.9" fill="#2ec4b6"/><circle cx="4.5" cy="8.5" r="0.9" fill="#2ec4b6"/></svg><svg style="position:absolute;left:1473.50px;top:69.80px;overflow:visible;" width="9" height="8" viewBox="0 0 9 8"><path d="M0.5,4 Q4.5,-0.5 8.5,4 Q4.5,8.5 0.5,4 Z" fill="#e6e6e6"/><circle cx="4.5" cy="4" r="1.7" fill="#334d80"/><circle cx="4.5" cy="4" r="0.8" fill="#e6e6e6"/></svg><svg style="position:absolute;left:1485.00px;top:69.80px;overflow:visible;" width="9" height="8" viewBox="0 0 9 8"><rect x="0.5" y="2" width="8" height="5.5" rx="1" fill="#e6e6e6"/><rect x="3" y="0.8" width="3" height="2" fill="#e6e6e6"/><circle cx="4.5" cy="4.8" r="1.6" fill="#334d80"/></svg><div style="left:1234.50px;top:89.80px;width:265.50px;height:712.40px;background:#303030;border-radius:4px 0 0 4px;"></div><div style="left:1240.30px;top:91.60px;width:16.70px;height:9.90px;background:#262626;border:0.6px solid #2f2f2f;border-radius:2.5px;"></div><svg style="position:absolute;left:1241.50px;top:92.00px;overflow:visible;" width="10" height="9" viewBox="0 0 10 9"><rect x="0.8" y="0.8" width="7" height="3.3" rx="1.6" fill="#e0e0e0"/><circle cx="2.6" cy="2.45" r="1.1" fill="#262626"/><rect x="0.8" y="4.8" width="7" height="3.3" rx="1.6" fill="#e0e0e0"/><circle cx="6" cy="6.45" r="1.1" fill="#262626"/></svg><svg style="position:absolute;left:1249.50px;top:92.60px;overflow:visible;" width="8" height="8" viewBox="0 0 8 8"><polyline points="1.4,2.7 4,5.3 6.6,2.7" fill="none" stroke="#cfcfcf" stroke-width="0.8"/></svg><div style="left:1334.00px;top:91.60px;width:67.90px;height:9.90px;background:#1d1d1d;border-radius:2.5px;"></div><svg style="position:absolute;left:1336.50px;top:91.80px;overflow:visible;" width="10" height="10" viewBox="0 0 10 10"><circle cx="6" cy="4" r="2.6" fill="none" stroke="#d0d0d0" stroke-width="0.9"/><path d="M4.2,5.8 L1.3,8.7" stroke="#d0d0d0" stroke-width="1"/></svg><span class="t" style="left:1348.30px;top:93.36px;font-size:6.9px;color:#6a6a6a;">Search</span><div style="left:1485.60px;top:91.60px;width:9.00px;height:9.90px;background:#262626;border-radius:2px;"></div><svg style="position:absolute;left:1486.10px;top:92.60px;overflow:visible;" width="8" height="8" viewBox="0 0 8 8"><polyline points="1.4,2.7 4,5.3 6.6,2.7" fill="none" stroke="#cfcfcf" stroke-width="0.8"/></svg><div style="left:1234.50px;top:104.20px;width:16.20px;height:698.00px;background:#1d1d1d;border-radius:0 0 0 4px;"></div><div style="left:1235.50px;top:109.80px;width:15.50px;height:14.70px;background:#303030;border-radius:3px 0 0 3px;"></div><div style="left:1235.00px;top:210.50px;width:15.70px;height:4.00px;background:#181818;"></div><svg style="position:absolute;left:1237.50px;top:111.50px;overflow:visible;" width="11" height="11" viewBox="0 0 11 11"><path d="M3,1 V5 M2,5 H4 V10 H2 Z" fill="#e6e6e6" stroke="#e6e6e6" stroke-width="0.9"/><path d="M6.5,1 Q6.5,3.5 8,4 Q9.5,3.5 9.5,1 M8,4 V10" fill="none" stroke="#e6e6e6" stroke-width="1.1"/></svg><svg style="position:absolute;left:1237.50px;top:132.70px;overflow:visible;" width="11" height="11" viewBox="0 0 11 11"><rect x="1.5" y="3.5" width="8" height="6" fill="none" stroke="#d8d8d8" stroke-width="1"/><path d="M2,3.5 L3.5,1.5 H6 L7,3.5" fill="none" stroke="#d8d8d8" stroke-width="0.9"/></svg><svg style="position:absolute;left:1237.50px;top:148.40px;overflow:visible;" width="11" height="11" viewBox="0 0 11 11"><rect x="1" y="1.5" width="9" height="3.5" fill="#d8d8d8"/><rect x="2" y="5" width="7" height="4.5" fill="none" stroke="#d8d8d8" stroke-width="1"/><rect x="3.5" y="6.5" width="4" height="1.5" fill="#d8d8d8"/></svg><svg style="position:absolute;left:1237.50px;top:164.70px;overflow:visible;" width="11" height="11" viewBox="0 0 11 11"><rect x="1" y="3.5" width="6.5" height="6" fill="#8a8a8a"/><rect x="3" y="1.5" width="6.5" height="6" fill="#d8d8d8"/><path d="M4,6.5 L6,4 L8,6.5 Z" fill="#555"/></svg><svg style="position:absolute;left:1237.50px;top:181.40px;overflow:visible;" width="11" height="11" viewBox="0 0 11 11"><path d="M3.5,2 L1,8.5 H5.5 Z" fill="#d8d8d8"/><circle cx="7" cy="7.5" r="2.2" fill="none" stroke="#d8d8d8" stroke-width="0.9"/><circle cx="8" cy="2.5" r="1" fill="#d8d8d8"/></svg><svg style="position:absolute;left:1237.50px;top:198.00px;overflow:visible;" width="11" height="11" viewBox="0 0 11 11"><circle cx="5.5" cy="5.5" r="4" fill="#b04a5a"/><path d="M2.5,3.5 Q5,5 4,8 M6,2 Q7,5 9.5,6" fill="none" stroke="#1d1d1d" stroke-width="1"/></svg><svg style="position:absolute;left:1237.50px;top:219.20px;overflow:visible;" width="11" height="11" viewBox="0 0 11 11"><rect x="2.8" y="2.8" width="5.4" height="5.4" fill="#d48a40"/><path d="M1,3 V1 H3 M8,1 H10 V3 M10,8 V10 H8 M3,10 H1 V8" fill="none" stroke="#d48a40" stroke-width="0.9"/></svg><svg style="position:absolute;left:1237.50px;top:236.00px;overflow:visible;" width="11" height="11" viewBox="0 0 11 11"><path d="M2,9.5 L6,5.5 M6.3,5 A2.5,2.5 0 1 0 8.5,2.2 L7.5,3.5 L6.5,3.2 Z" fill="#5581c2" stroke="#5581c2" stroke-width="1.3" stroke-linecap="round"/></svg><svg style="position:absolute;left:1237.50px;top:252.70px;overflow:visible;" width="11" height="11" viewBox="0 0 11 11"><circle cx="2" cy="3" r="1.2" fill="#5581c2"/><circle cx="9" cy="9" r="1.2" fill="#5581c2"/><circle cx="8" cy="2" r="1" fill="#5581c2"/><path d="M2,3 L9,9 M2,3 L8,2 M2,3 L2,9" stroke="#5581c2" stroke-width="0.8"/></svg><svg style="position:absolute;left:1237.50px;top:268.80px;overflow:visible;" width="11" height="11" viewBox="0 0 11 11"><circle cx="5.5" cy="5.5" r="3.8" fill="none" stroke="#5581c2" stroke-width="1"/><circle cx="5.5" cy="5.5" r="1.8" fill="#5581c2"/></svg><svg style="position:absolute;left:1237.50px;top:285.00px;overflow:visible;" width="11" height="11" viewBox="0 0 11 11"><circle cx="4" cy="7" r="2.6" fill="none" stroke="#5581c2" stroke-width="1.1"/><circle cx="7" cy="4" r="2.6" fill="none" stroke="#5581c2" stroke-width="1.1"/></svg><svg style="position:absolute;left:1237.50px;top:301.20px;overflow:visible;" width="11" height="11" viewBox="0 0 11 11"><path d="M1.5,2 H9.5 L5.5,9.5 Z" fill="none" stroke="#2aa57a" stroke-width="1.1"/></svg><svg style="position:absolute;left:1237.50px;top:317.40px;overflow:visible;" width="11" height="11" viewBox="0 0 11 11"><circle cx="5.5" cy="5.5" r="4" fill="#b04a5a"/><path d="M5.5,1.5 V5.5 H9.5 A4,4 0 0 0 5.5,1.5 Z" fill="#d8b0b8"/><circle cx="5.5" cy="5.5" r="1.5" fill="#1d1d1d"/></svg><svg style="position:absolute;left:1237.50px;top:337.50px;overflow:visible;" width="11" height="11" viewBox="0 0 11 11"><rect x="1" y="1" width="9" height="9" fill="#b04a5a"/><path d="M1,1 h2.25 v2.25 h-2.25 Z M5.5,1 h2.25 v2.25 h-2.25 Z M3.25,3.25 h2.25 v2.25 h-2.25 Z M7.75,3.25 h2.25 v2.25 h-2.25 Z M1,5.5 h2.25 v2.25 h-2.25 Z M5.5,5.5 h2.25 v2.25 h-2.25 Z M3.25,7.75 h2.25 v2.25 h-2.25 Z M7.75,7.75 h2.25 v2.25 h-2.25 Z" fill="#c89aa2"/></svg><svg style="position:absolute;left:1259.40px;top:108.50px;overflow:visible;" width="12" height="12" viewBox="0 0 12 12"><path d="M10.5,1.5 L6,6" stroke="#e6e6e6" stroke-width="1.6" stroke-linecap="round"/><path d="M1.5,8.8 Q3,5.2 6,6 Q6.3,9 1.5,8.8 Z" fill="#e6e6e6"/><path d="M2,10.2 Q6,9 9,9.5" fill="none" stroke="#bdbdbd" stroke-width="0.7"/></svg><span class="t" style="left:1277.60px;top:111.86px;font-size:6.9px;color:#e0e0e0;">Brush</span><div style="left:1255.50px;top:132.40px;width:240.50px;height:104.90px;background:#3b3b3b;border-radius:3.5px;"></div><svg style="position:absolute;left:1259.00px;top:135.60px;overflow:visible;" width="8" height="8" viewBox="0 0 8 8"><polyline points="1.4,2.7 4,5.3 6.6,2.7" fill="none" stroke="#cfcfcf" stroke-width="0.8"/></svg><span class="t" style="left:1268.60px;top:136.36px;font-size:6.9px;color:#e0e0e0;">Brush Asset</span><svg style="position:absolute;left:1484.00px;top:137.40px;overflow:visible;" width="8" height="4" viewBox="0 0 8 4"><path d="M0,1 H7 M0,3 H7" stroke="#4c4c4c" stroke-width="0.6"/></svg><div style="left:1261.00px;top:151.00px;width:213.00px;height:80.50px;background:#282828;border-radius:2.5px;"></div><div style="left:1261.00px;top:220.90px;width:213.00px;height:10.60px;background:#1d1d1d;border-radius:0 0 2.5px 2.5px;"></div><span class="t" style="left:1264.70px;top:222.96px;font-size:6.9px;color:#e0e0e0;">#01 Pencil</span><svg style="position:absolute;left:1334.00px;top:152.30px;overflow:visible;" width="67.1" height="66.7" viewBox="0 0 67.1 66.7"><rect width="67.1" height="66.7" fill="#6c6c6c"/><path fill="#ffffff" filter="url(#r1)" d="M9.4,60.3 L9.8,59.0 L10.1,57.8 L10.5,56.6 L10.8,55.4 L11.0,54.3 L11.4,53.2 L11.9,52.3 L12.3,51.3 L12.8,50.3 L13.2,49.4 L13.8,48.6 L14.5,47.9 L15.1,47.2 L15.5,46.4 L15.9,45.6 L16.5,44.9 L17.0,44.3 L17.7,43.7 L18.0,42.9 L18.6,42.3 L19.3,41.8 L20.2,41.4 L21.0,41.0 L21.8,40.7 L22.3,40.1 L22.8,39.3 L23.6,39.1 L24.3,38.5 L25.0,38.1 L25.4,37.2 L26.0,36.6 L26.8,36.2 L27.8,36.1 L28.7,35.8 L29.6,35.7 L30.1,34.8 L30.9,34.3 L31.7,34.0 L32.5,33.5 L33.0,32.6 L33.4,31.6 L33.9,30.7 L34.9,30.4 L35.7,29.9 L36.5,29.4 L37.2,28.7 L37.8,28.0 L38.6,27.3 L39.5,26.9 L40.2,26.2 L40.6,25.2 L41.1,24.2 L41.6,23.4 L42.2,22.5 L42.9,21.8 L43.6,20.9 L44.1,20.0 L44.7,19.1 L45.4,18.2 L46.0,17.3 L46.5,16.3 L46.8,15.1 L47.2,14.0 L47.6,12.9 L48.0,11.7 L48.4,10.5 L48.7,9.3 L49.0,8.0 L49.4,6.7 L49.6,5.4 L49.6,5.4 L49.0,6.6 L48.5,7.8 L48.0,9.0 L47.5,10.2 L47.0,11.3 L46.5,12.4 L45.9,13.4 L45.1,14.2 L44.5,15.1 L43.9,16.0 L43.3,16.9 L42.6,17.6 L41.9,18.4 L41.2,19.1 L40.7,19.9 L40.3,20.8 L39.6,21.5 L38.8,22.1 L37.9,22.5 L37.0,22.9 L36.3,23.5 L35.6,24.0 L35.0,24.7 L34.3,25.2 L33.5,25.6 L32.8,26.2 L32.4,27.1 L31.7,27.6 L30.8,27.9 L29.7,27.9 L28.8,28.2 L28.0,28.6 L27.3,29.1 L26.8,30.0 L25.9,30.3 L25.2,30.9 L24.7,31.7 L24.1,32.4 L23.4,33.0 L22.7,33.5 L21.7,33.7 L20.8,34.1 L20.2,34.7 L19.7,35.6 L19.1,36.4 L18.5,37.0 L17.9,37.8 L17.3,38.5 L16.8,39.4 L16.3,40.1 L15.6,40.8 L14.8,41.3 L14.2,42.1 L13.6,42.9 L13.3,43.9 L13.0,44.8 L12.6,45.8 L12.1,46.7 L11.8,47.6 L11.4,48.6 L11.1,49.7 L10.7,50.7 L10.4,51.7 L9.9,52.8 L9.8,54.0 L9.7,55.2 L9.6,56.4 L9.5,57.7 L9.4,59.0 L9.4,60.3Z"/></svg><div style="left:1379.30px;top:204.30px;width:16.70px;height:14.70px;background:#525252;"></div><svg style="position:absolute;left:1379.30px;top:204.30px;overflow:visible;" width="16.7" height="14.7" viewBox="0 0 16.7 14.7"><path d="M12.5,3.5 L8.2,8.2" stroke="#f0f0f0" stroke-width="1.7" stroke-linecap="round"/><ellipse cx="6.2" cy="9.6" rx="2.6" ry="1.8" transform="rotate(-35 6.2 9.6)" fill="#f0f0f0"/><path d="M4.5,11.8 Q8.5,11.2 11.5,10.6" fill="none" stroke="#d0d0d0" stroke-width="0.8"/></svg><div style="left:1480.10px;top:151.00px;width:10.40px;height:10.40px;background:#2a2a2a;border-radius:2px;"></div><svg style="position:absolute;left:1481.30px;top:152.20px;overflow:visible;" width="8" height="8" viewBox="0 0 8 8"><polyline points="1.4,2.7 4,5.3 6.6,2.7" fill="none" stroke="#cfcfcf" stroke-width="0.8"/></svg><div style="left:1255.50px;top:239.20px;width:240.50px;height:563.00px;background:#3b3b3b;border-radius:3.5px;"></div><svg style="position:absolute;left:1259.00px;top:242.40px;overflow:visible;" width="8" height="8" viewBox="0 0 8 8"><polyline points="1.4,2.7 4,5.3 6.6,2.7" fill="none" stroke="#cfcfcf" stroke-width="0.8"/></svg><span class="t" style="left:1268.60px;top:243.16px;font-size:6.9px;color:#e0e0e0;">Brush Settings</span><svg style="position:absolute;left:1484.00px;top:244.20px;overflow:visible;" width="8" height="4" viewBox="0 0 8 4"><path d="M0,1 H7 M0,3 H7" stroke="#4c4c4c" stroke-width="0.6"/></svg><span class="t" style="left:749.00px;width:600px;text-align:right;top:260.36px;font-size:6.9px;color:#d0d0d0;">Blend</span><div style="left:1355.90px;top:258.50px;width:134.10px;height:10.30px;background:#272727;border:0.6px solid #2f2f2f;border-radius:2.5px;"></div><span class="t" style="left:1359.50px;top:260.36px;font-size:6.9px;color:#dcdcdc;">Mix</span><svg style="position:absolute;left:1482.00px;top:259.80px;overflow:visible;" width="8" height="8" viewBox="0 0 8 8"><polyline points="1.4,2.7 4,5.3 6.6,2.7" fill="none" stroke="#cfcfcf" stroke-width="0.8"/></svg><span class="t" style="left:749.00px;width:600px;text-align:right;top:278.26px;font-size:6.9px;color:#d0d0d0;">Radius</span><div style="left:1356.00px;top:276.50px;width:111.60px;height:10.30px;background:#545454;border-radius:2.5px 0 0 2.5px;"></div><div style="left:1356.00px;top:276.50px;width:1.20px;height:10.30px;background:#4772b3;"></div><span class="t" style="left:911.80px;width:1000px;text-align:center;top:278.36px;font-size:6.9px;color:#e0e0e0;">11 px</span><div style="left:1467.90px;top:276.50px;width:10.60px;height:10.30px;background:#4772b3;"></div><div style="left:1478.90px;top:276.50px;width:11.10px;height:10.30px;background:#4772b3;border-radius:0 2.5px 2.5px 0;"></div><svg style="position:absolute;left:1467.90px;top:276.50px;overflow:visible;" width="10.6" height="10.3" viewBox="0 0 10.6 10.3"><path d="M2.6,3.4 Q1.2,9 7.4,8.8" fill="none" stroke="#a9c0e2" stroke-width="1.5"/><path d="M5.2,6.2 L8.6,2.6" stroke="#f4f4f4" stroke-width="1.8" stroke-linecap="round"/><path d="M4.2,7.4 L5.6,5.8 L6,6.8 Z" fill="#f4f4f4"/></svg><svg style="position:absolute;left:1478.90px;top:276.50px;overflow:visible;" width="11" height="10.3" viewBox="0 0 11 10.3"><rect x="2" y="1.5" width="3" height="7.5" fill="#f0f0f0"/><rect x="5.8" y="1.5" width="3" height="3" fill="#f0f0f0"/><path d="M7.3,5.5 V8 L6,9" fill="none" stroke="#f0f0f0" stroke-width="0.9"/></svg><span class="t" style="left:749.00px;width:600px;text-align:right;top:291.16px;font-size:6.9px;color:#d0d0d0;">Strength</span><div style="left:1356.00px;top:289.40px;width:111.60px;height:10.00px;background:#4772b3;border-radius:2.5px 0 0 2.5px;"></div><span class="t" style="left:911.80px;width:1000px;text-align:center;top:291.16px;font-size:6.9px;color:#f0f0f0;">1.000</span><div style="left:1467.90px;top:289.40px;width:10.60px;height:10.00px;background:#4772b3;"></div><div style="left:1478.90px;top:289.40px;width:11.10px;height:10.00px;background:#545454;border-radius:0 2.5px 2.5px 0;"></div><svg style="position:absolute;left:1467.90px;top:289.40px;overflow:visible;" width="10.6" height="10.3" viewBox="0 0 10.6 10.3"><path d="M2.6,3.4 Q1.2,9 7.4,8.8" fill="none" stroke="#a9c0e2" stroke-width="1.5"/><path d="M5.2,6.2 L8.6,2.6" stroke="#f4f4f4" stroke-width="1.8" stroke-linecap="round"/><path d="M4.2,7.4 L5.6,5.8 L6,6.8 Z" fill="#f4f4f4"/></svg><svg style="position:absolute;left:1478.90px;top:289.40px;overflow:visible;" width="11" height="10.3" viewBox="0 0 11 10.3"><rect x="2" y="1.5" width="3" height="7.5" fill="#f0f0f0"/><rect x="5.8" y="1.5" width="3" height="3" fill="#f0f0f0"/><path d="M7.3,5.5 V8 L6,9" fill="none" stroke="#f0f0f0" stroke-width="0.9"/></svg><div style="left:1255.50px;top:310.00px;width:240.50px;height:13.50px;background:#3e3e3e;"></div><div style="left:1255.50px;top:323.50px;width:240.50px;height:96.50px;background:#373737;"></div><div style="left:1255.50px;top:420.00px;width:240.50px;height:46.00px;background:#3e3e3e;"></div><div style="left:1255.50px;top:466.00px;width:240.50px;height:233.00px;background:#373737;"></div><div style="left:1255.50px;top:714.20px;width:240.50px;height:88.00px;background:#373737;border-radius:0 0 3.5px 3.5px;"></div><svg style="position:absolute;left:1266.80px;top:313.50px;overflow:visible;" width="8" height="8" viewBox="0 0 8 8"><polyline points="1.4,2.7 4,5.3 6.6,2.7" fill="none" stroke="#cfcfcf" stroke-width="0.8"/></svg><span class="t" style="left:1276.90px;top:314.26px;font-size:6.9px;color:#dcdcdc;">Color Picker</span><div style="left:1261.00px;top:329.30px;width:114.00px;height:10.50px;background:#4772b3;border-radius:2.5px 0 0 2.5px;"></div><div style="left:1375.00px;top:329.30px;width:115.80px;height:10.50px;background:#545454;border-radius:0 2.5px 2.5px 0;"></div><span class="t" style="left:818.00px;width:1000px;text-align:center;top:331.26px;font-size:6.9px;color:#f0f0f0;">Color</span><span class="t" style="left:932.90px;width:1000px;text-align:center;top:331.26px;font-size:6.9px;color:#e0e0e0;">Gradient</span><svg style="position:absolute;left:1339.00px;top:342.50px;overflow:visible;" width="62" height="62" viewBox="0 0 62 62"><circle cx="30.6" cy="30.2" r="29.2" fill="#000"/><circle cx="30.6" cy="30.2" r="2.6" fill="none" stroke="#9a9a9a" stroke-width="0.8"/></svg><svg style="position:absolute;left:1483.40px;top:343.70px;overflow:visible;" width="8" height="61" viewBox="0 0 8 61"><defs><linearGradient id="vg" x1="0" y1="0" x2="0" y2="1"><stop offset="0" stop-color="#fff"/><stop offset="1" stop-color="#000"/></linearGradient></defs><rect x="0" y="0" width="8" height="53" fill="url(#vg)" rx="1"/><rect x="0.5" y="53.5" width="7" height="3.5" rx="1" fill="#000" stroke="#e0e0e0" stroke-width="0.7"/></svg><div style="left:1261.00px;top:405.80px;width:101.30px;height:10.60px;background:#000000;border-radius:2.5px 0 0 2.5px;"></div><div style="left:1362.30px;top:405.80px;width:101.40px;height:10.60px;background:#ffffff;border-radius:0 2.5px 2.5px 0;"></div><svg style="position:absolute;left:1469.00px;top:406.00px;overflow:visible;" width="10" height="10" viewBox="0 0 10 10"><path d="M2,4.5 A3.2,3.2 0 0 1 8,3.5 M8.5,5.5 A3.2,3.2 0 0 1 2.5,6.5" fill="none" stroke="#d8d8d8" stroke-width="0.9"/><path d="M7,1.5 L8.5,3.8 L6,4 Z M3.5,9 L2,6.5 L4.5,6.3 Z" fill="#d8d8d8"/></svg><div style="left:1479.60px;top:405.80px;width:11.20px;height:10.60px;background:#4772b3;border-radius:2px;"></div><svg style="position:absolute;left:1479.60px;top:405.80px;overflow:visible;" width="11" height="10.3" viewBox="0 0 11 10.3"><rect x="2" y="1.5" width="3" height="7.5" fill="#f0f0f0"/><rect x="5.8" y="1.5" width="3" height="3" fill="#f0f0f0"/><path d="M7.3,5.5 V8 L6,9" fill="none" stroke="#f0f0f0" stroke-width="0.9"/></svg><svg style="position:absolute;left:1266.80px;top:425.70px;overflow:visible;" width="8" height="8" viewBox="0 0 8 8"><polyline points="2.7,1.4 5.3,4 2.7,6.6" fill="none" stroke="#cfcfcf" stroke-width="0.8"/></svg><span class="t" style="left:1276.90px;top:426.46px;font-size:6.9px;color:#dcdcdc;">Color Palette</span><svg style="position:absolute;left:1266.80px;top:440.40px;overflow:visible;" width="8" height="8" viewBox="0 0 8 8"><polyline points="2.7,1.4 5.3,4 2.7,6.6" fill="none" stroke="#cfcfcf" stroke-width="0.8"/></svg><span class="t" style="left:1276.90px;top:441.16px;font-size:6.9px;color:#dcdcdc;">Advanced</span><svg style="position:absolute;left:1266.80px;top:454.70px;overflow:visible;" width="8" height="8" viewBox="0 0 8 8"><polyline points="1.4,2.7 4,5.3 6.6,2.7" fill="none" stroke="#cfcfcf" stroke-width="0.8"/></svg><span class="t" style="left:1276.90px;top:455.46px;font-size:6.9px;color:#dcdcdc;">Texture</span><div style="left:1261.00px;top:471.20px;width:229.80px;height:80.00px;background:#282828;border-radius:2.5px;"></div><div style="left:1261.00px;top:540.70px;width:229.80px;height:10.50px;background:#1d1d1d;border-radius:0 0 2.5px 2.5px;"></div><span class="t" style="left:1264.40px;top:542.76px;font-size:6.9px;color:#e0e0e0;">Brush Tip 56</span><div style="left:1444.00px;top:540.70px;width:11.00px;height:10.50px;background:#3d3d3d;"></div><svg style="position:absolute;left:1444.00px;top:540.70px;overflow:visible;" width="11" height="10.5" viewBox="0 0 11 10.5"><path d="M5.5,1.5 L9,2.8 V5.5 Q9,8 5.5,9.3 Q2,8 2,5.5 V2.8 Z" fill="none" stroke="#c0c0c0" stroke-width="0.8"/></svg><svg style="position:absolute;left:1455.00px;top:540.70px;overflow:visible;" width="11" height="10.5" viewBox="0 0 11 10.5"><rect x="2" y="3" width="4.5" height="6" fill="none" stroke="#e0e0e0" stroke-width="0.8"/><path d="M3.8,1.5 H8.5 V7" fill="none" stroke="#e0e0e0" stroke-width="0.8"/></svg><svg style="position:absolute;left:1466.00px;top:540.70px;overflow:visible;" width="11" height="10.5" viewBox="0 0 11 10.5"><path d="M3,3 L8,8 M8,3 L3,8" stroke="#e0e0e0" stroke-width="0.9"/></svg><div style="left:1478.50px;top:540.70px;width:12.30px;height:10.50px;background:#3d3d3d;border-radius:0 0 2.5px 0;"></div><svg style="position:absolute;left:1478.50px;top:540.70px;overflow:visible;" width="12" height="10.5" viewBox="0 0 12 10.5"><rect x="1.8" y="1.5" width="8" height="3.3" rx="1.6" fill="#e0e0e0"/><circle cx="3.6" cy="3.15" r="1.1" fill="#3d3d3d"/><rect x="1.8" y="5.6" width="8" height="3.3" rx="1.6" fill="#e0e0e0"/><circle cx="8" cy="7.25" r="1.1" fill="#3d3d3d"/></svg><svg style="position:absolute;left:1261.00px;top:471.20px;overflow:visible;" width="230" height="70" viewBox="0 0 230 70"><g transform="translate(-1261,-471.2)"><path d="M1352.3,481.2 L1354.9,478.2 L1359.2,477.3 L1361.3,479.4 L1361.8,482.9 L1363.9,483.7 L1366.1,483.3 L1369.5,485.9 L1372.1,484.2 L1376.4,487.2 L1379.4,488.5 L1382.4,486.7 L1389.2,487.6 L1390.1,490.6 L1389.2,495.8 L1392.7,497.0 L1396.1,500.0 L1397.8,503.5 L1403.0,504.8 L1409.0,505.6 L1409.0,510.3 L1398.7,512.1 L1395.2,513.8 L1393.5,511.2 L1390.1,509.5 L1385.8,508.6 L1382.4,510.3 L1384.1,514.6 L1387.5,516.8 L1390.1,518.9 L1393.5,522.4 L1390.1,525.8 L1384.9,528.4 L1381.5,530.1 L1378.9,531.8 L1376.4,528.4 L1372.9,525.8 L1370.3,521.5 L1368.6,518.1 L1366.1,516.4 L1364.3,519.8 L1361.8,518.1 L1359.2,514.6 L1354.9,516.4 L1352.3,515.5 L1350.6,510.3 L1345.5,507.8 L1342.9,503.5 L1346.3,501.8 L1350.6,498.3 L1355.8,493.2 L1358.3,489.7 L1360.0,485.5 L1355.8,482.9Z" fill="#c8c8c8"/><path d="M1365.2,500.9 L1372.9,503.0 L1368.6,506.9 L1365.2,506.9Z" fill="#282828"/><path d="M1381.5,509.5 L1389.2,510.3 L1390.1,514.6 L1386.7,526.7 L1384.9,518.1 L1382.4,512.9Z" fill="#282828"/><path d="M1360.9,484.6 L1363.5,495.8 L1362.6,510.3 L1363.5,518.9" fill="none" stroke="#777" stroke-width="1"/><path d="M1349,507 L1356,503" stroke="#555" stroke-width="1.5"/><circle cx="1366.1" cy="478.6" r="0.9" fill="#707070"/><circle cx="1382.4" cy="482.0" r="0.9" fill="#707070"/><circle cx="1376.4" cy="497.5" r="0.9" fill="#707070"/><circle cx="1382.4" cy="497.5" r="0.9" fill="#707070"/><circle cx="1378.9" cy="503.5" r="0.9" fill="#707070"/><circle cx="1385.8" cy="503.5" r="0.9" fill="#707070"/><circle cx="1372.1" cy="515.9" r="0.9" fill="#707070"/><circle cx="1366.5" cy="524.9" r="0.9" fill="#707070"/><circle cx="1391.8" cy="531.4" r="0.9" fill="#707070"/><circle cx="1401.2" cy="504.3" r="0.9" fill="#707070"/><circle cx="1352.3" cy="506.5" r="0.9" fill="#707070"/></g></svg><span class="t" style="left:749.40px;width:600px;text-align:right;top:556.06px;font-size:6.9px;color:#d0d0d0;">Mapping</span><div style="left:1355.80px;top:555.20px;width:134.70px;height:8.50px;background:#272727;border:0.6px solid #2f2f2f;border-radius:2.5px;"></div><span class="t" style="left:1360.20px;top:556.16px;font-size:6.9px;color:#dcdcdc;">View Plane</span><svg style="position:absolute;left:1482.50px;top:555.50px;overflow:visible;" width="8" height="8" viewBox="0 0 8 8"><polyline points="1.4,2.7 4,5.3 6.6,2.7" fill="none" stroke="#cfcfcf" stroke-width="0.8"/></svg><span class="t" style="left:749.40px;width:600px;text-align:right;top:573.26px;font-size:6.9px;color:#d0d0d0;">Angle</span><div style="left:1356.00px;top:571.50px;width:134.50px;height:10.50px;background:#545454;border-radius:2.5px;"></div><span class="t" style="left:922.50px;width:1000px;text-align:center;top:573.51px;font-size:6.9px;color:#e0e0e0;">70°</span><div style="left:1355.80px;top:586.10px;width:7.20px;height:7.20px;background:#4772b3;border-radius:1.5px;"></div><svg style="position:absolute;left:1355.80px;top:586.10px;overflow:visible;" width="7.2" height="7.2" viewBox="0 0 7.2 7.2"><path d="M1.5,3.8 L3,5.3 L5.8,2" fill="none" stroke="#fff" stroke-width="1"/></svg><span class="t" style="left:1365.00px;top:586.46px;font-size:6.9px;color:#dcdcdc;">Rake</span><div style="left:1355.80px;top:599.00px;width:7.20px;height:7.20px;background:#4772b3;border-radius:1.5px;"></div><svg style="position:absolute;left:1355.80px;top:599.00px;overflow:visible;" width="7.2" height="7.2" viewBox="0 0 7.2 7.2"><path d="M1.5,3.8 L3,5.3 L5.8,2" fill="none" stroke="#fff" stroke-width="1"/></svg><span class="t" style="left:1365.00px;top:599.36px;font-size:6.9px;color:#dcdcdc;">Random</span><span class="t" style="left:749.40px;width:600px;text-align:right;top:611.86px;font-size:6.9px;color:#d0d0d0;">Random Angle</span><div style="left:1356.00px;top:610.00px;width:134.50px;height:10.50px;background:#545454;border-radius:2.5px;"></div><span class="t" style="left:922.50px;width:1000px;text-align:center;top:612.01px;font-size:6.9px;color:#e0e0e0;">360°</span><div style="left:1356.00px;top:623.30px;width:134.50px;height:33.30px;background:#545454;border-radius:2.5px;"></div><span class="t" style="left:922.50px;width:1000px;text-align:center;top:625.61px;font-size:6.9px;color:#e0e0e0;">0 m</span><span class="t" style="left:749.40px;width:600px;text-align:right;top:625.61px;font-size:6.9px;color:#d0d0d0;">Offset X</span><div style="left:1356.00px;top:634.10px;width:134.50px;height:0.80px;background:#3b3b3b;"></div><span class="t" style="left:922.50px;width:1000px;text-align:center;top:636.71px;font-size:6.9px;color:#e0e0e0;">0 m</span><span class="t" style="left:749.40px;width:600px;text-align:right;top:636.71px;font-size:6.9px;color:#d0d0d0;">Y</span><div style="left:1356.00px;top:645.20px;width:134.50px;height:0.80px;background:#3b3b3b;"></div><span class="t" style="left:922.50px;width:1000px;text-align:center;top:647.81px;font-size:6.9px;color:#e0e0e0;">0 m</span><span class="t" style="left:749.40px;width:600px;text-align:right;top:647.81px;font-size:6.9px;color:#d0d0d0;">Z</span><div style="left:1356.00px;top:658.80px;width:134.50px;height:34.20px;background:#545454;border-radius:2.5px;"></div><span class="t" style="left:922.50px;width:1000px;text-align:center;top:661.26px;font-size:6.9px;color:#e0e0e0;">1.00</span><span class="t" style="left:749.40px;width:600px;text-align:right;top:661.26px;font-size:6.9px;color:#d0d0d0;">Size X</span><div style="left:1356.00px;top:669.90px;width:134.50px;height:0.80px;background:#3b3b3b;"></div><span class="t" style="left:922.50px;width:1000px;text-align:center;top:672.66px;font-size:6.9px;color:#e0e0e0;">1.00</span><span class="t" style="left:749.40px;width:600px;text-align:right;top:672.66px;font-size:6.9px;color:#d0d0d0;">Y</span><div style="left:1356.00px;top:681.30px;width:134.50px;height:0.80px;background:#3b3b3b;"></div><span class="t" style="left:922.50px;width:1000px;text-align:center;top:684.06px;font-size:6.9px;color:#e0e0e0;">1.00</span><span class="t" style="left:749.40px;width:600px;text-align:right;top:684.06px;font-size:6.9px;color:#d0d0d0;">Z</span><div style="left:1255.50px;top:699.00px;width:240.50px;height:15.20px;background:#3e3e3e;"></div><svg style="position:absolute;left:1266.60px;top:702.80px;overflow:visible;" width="8" height="8" viewBox="0 0 8 8"><polyline points="1.4,2.7 4,5.3 6.6,2.7" fill="none" stroke="#cfcfcf" stroke-width="0.8"/></svg><span class="t" style="left:1276.70px;top:703.56px;font-size:6.9px;color:#dcdcdc;">Texture Mask</span><div style="left:1261.00px;top:718.60px;width:229.50px;height:80.20px;background:#282828;border-radius:2.5px;"></div><div style="left:1261.00px;top:788.60px;width:229.50px;height:10.20px;background:#1d1d1d;border-radius:0 0 2.5px 2.5px;"></div><svg style="position:absolute;left:1342.1px;top:719.9px" width="66.7" height="66.7"><defs><filter id="nz" x="0" y="0" width="100%" height="100%" color-interpolation-filters="sRGB"><feTurbulence type="fractalNoise" baseFrequency="0.8" numOctaves="2" seed="4"/><feColorMatrix type="matrix" values="0.33 0.33 0.33 0 0  0.33 0.33 0.33 0 0  0.33 0.33 0.33 0 0  0 0 0 0 1"/><feComponentTransfer><feFuncR type="linear" slope="0.3" intercept="0.64"/><feFuncG type="linear" slope="0.3" intercept="0.64"/><feFuncB type="linear" slope="0.3" intercept="0.64"/></feComponentTransfer></filter></defs><rect width="66.7" height="66.7" filter="url(#nz)"/></svg><span class="t" style="left:1264.40px;top:790.46px;font-size:6.9px;color:#e0e0e0;">Pattern Texture 56</span><div style="left:1444.00px;top:788.60px;width:11.00px;height:10.20px;background:#3d3d3d;"></div><svg style="position:absolute;left:1444.00px;top:788.60px;overflow:visible;" width="11" height="10.2" viewBox="0 0 11 10.2"><path d="M5.5,1.5 L9,2.8 V5.5 Q9,8 5.5,9.3 Q2,8 2,5.5 V2.8 Z" fill="none" stroke="#c0c0c0" stroke-width="0.8"/></svg><svg style="position:absolute;left:1455.00px;top:788.60px;overflow:visible;" width="11" height="10.2" viewBox="0 0 11 10.2"><rect x="2" y="3" width="4.5" height="6" fill="none" stroke="#e0e0e0" stroke-width="0.8"/><path d="M3.8,1.5 H8.5 V7" fill="none" stroke="#e0e0e0" stroke-width="0.8"/></svg><svg style="position:absolute;left:1466.00px;top:788.60px;overflow:visible;" width="11" height="10.2" viewBox="0 0 11 10.2"><path d="M3,3 L8,8 M8,3 L3,8" stroke="#e0e0e0" stroke-width="0.9"/></svg><div style="left:1478.50px;top:788.60px;width:12.00px;height:10.20px;background:#3d3d3d;border-radius:0 0 2.5px 0;"></div><svg style="position:absolute;left:1478.50px;top:788.60px;overflow:visible;" width="12" height="10.2" viewBox="0 0 12 10.2"><rect x="1.8" y="1.5" width="8" height="3.3" rx="1.6" fill="#e0e0e0"/><circle cx="3.6" cy="3.15" r="1.1" fill="#3d3d3d"/><rect x="1.8" y="5.6" width="8" height="3.3" rx="1.6" fill="#e0e0e0"/><circle cx="8" cy="7.25" r="1.1" fill="#3d3d3d"/></svg><div style="left:1497.00px;top:110.00px;width:1.20px;height:690.00px;background:#3c3c3c;border-radius:1px;"></div><svg style="position:absolute;left:5.60px;top:804.00px;overflow:visible;" width="9" height="10" viewBox="0 0 9 10"><rect x="1.5" y="0.8" width="6" height="8.4" rx="2.5" fill="none" stroke="#a0a0a0" stroke-width="0.8"/><rect x="1.5" y="0.8" width="3" height="4" fill="#a0a0a0"/></svg><span class="t" style="left:16.30px;top:805.96px;font-size:6.9px;color:#a8a8a8;">Resize</span><svg style="position:absolute;left:43.00px;top:804.00px;overflow:visible;" width="9" height="10" viewBox="0 0 9 10"><rect x="1.5" y="0.8" width="6" height="8.4" rx="2.5" fill="none" stroke="#a0a0a0" stroke-width="0.8"/><rect x="4.5" y="0.8" width="3" height="4" fill="#a0a0a0"/></svg><span class="t" style="left:52.70px;top:805.96px;font-size:6.9px;color:#a8a8a8;">Options</span><span class="t" style="left:893.60px;width:600px;text-align:right;top:806.27px;font-size:7.05px;color:#a8a8a8;">Canvas | Verts:1,778 | Faces:1,739 | Tris:1,740 | Objects:1/4 | 4.3.1</span>
</body></html>
